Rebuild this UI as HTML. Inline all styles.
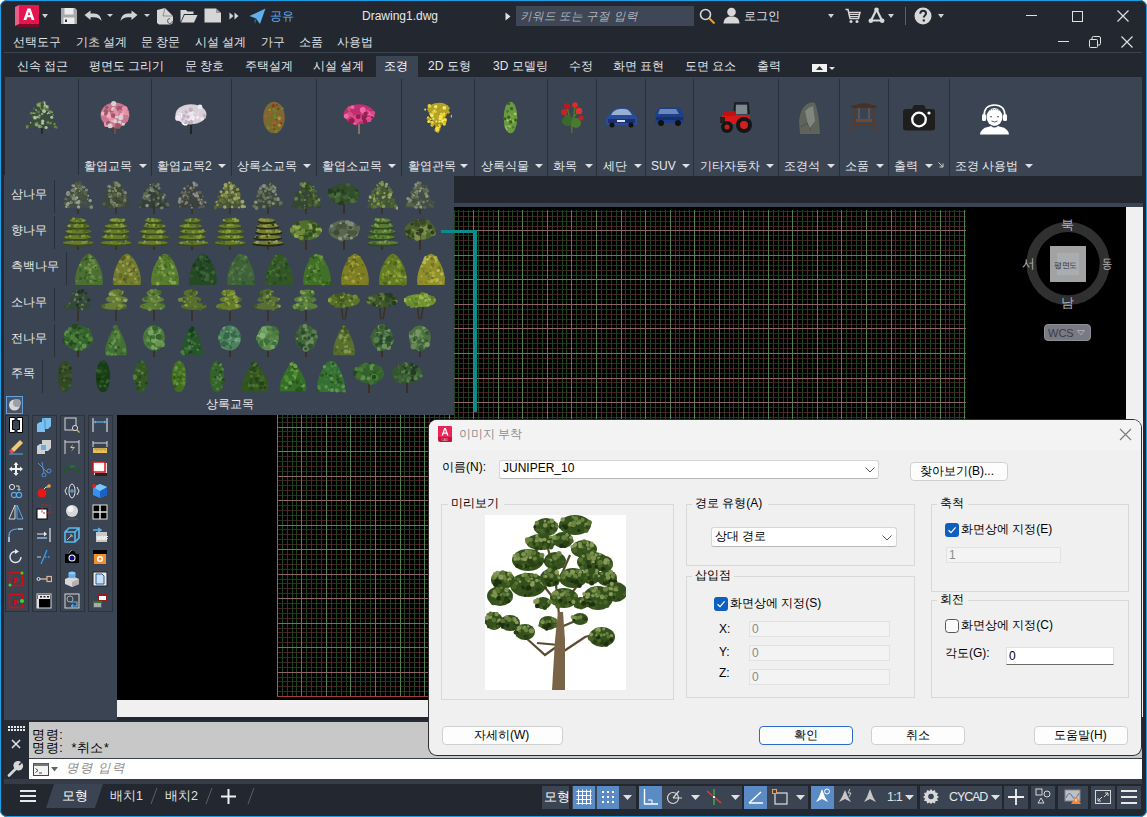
<!DOCTYPE html>
<html><head><meta charset="utf-8">
<style>
*{box-sizing:border-box;margin:0;padding:0}
html,body{width:1147px;height:817px;overflow:hidden;background:#fff}
body{font-family:"Liberation Sans",sans-serif;font-size:12px;position:relative}
.a{position:absolute}
#win{position:absolute;left:0;top:0;width:1147px;height:817px;border-radius:7px;background:#222730;overflow:hidden}
#frame{position:absolute;left:0;top:0;width:1147px;height:817px;border:1px solid #1b9ee6;border-radius:7px;pointer-events:none}
.t{position:absolute;white-space:nowrap;color:#e4e6ea;line-height:14px}
.menu .t{color:#e0e2e6}
.sep{position:absolute;width:1px;background:#2a303b}
.arr{position:absolute;width:0;height:0;border-left:4px solid transparent;border-right:4px solid transparent;border-top:4px solid #dfe1e5}
.dlg .t{color:#000}
.grp{position:absolute;border:1px solid #d8d8d8}
.fld{position:absolute;background:#f3f3f3;border:1px solid #e2e2e2}
.btn{position:absolute;background:#fdfdfd;border:1px solid #d0d0d0;border-radius:4px;text-align:center;color:#000;line-height:16px}
.cb{position:absolute;width:13px;height:13px;border-radius:3px}
.sb{position:absolute;top:786px;height:23px;background:#3b4453}
.sbon{background:#5a8bc5}
</style></head><body>
<div id="win">
<!-- ===== TITLE BAR ===== -->
<div id="title">
<svg class="a" style="left:13px;top:3px" width="28" height="26" viewBox="0 0 28 26">
<polygon points="4,24 26,24 26,20 6,20" fill="#7a0c2a"/>
<rect x="6" y="2" width="20" height="19" fill="#e31650"/>
<polygon points="2,4 6,2 6,21 2,23" fill="#ec5e88"/>
<path d="M10.5 17 L14.5 5.5 L17.5 5.5 L21.5 17 L18.6 17 L17.8 14.3 L14.2 14.3 L13.4 17 Z M14.9 12 L17.1 12 L16 8.2 Z" fill="#fff"/>
</svg>
<div class="arr" style="left:42px;top:14px;border-width:4px 3.5px 0 3.5px;border-top-color:#cfd1d5"></div>
<svg class="a" style="left:60px;top:7px" width="18" height="18" viewBox="0 0 18 18">
<path d="M1 1 H15 L17 3 V17 H1 Z" fill="#a8a8a8"/>
<rect x="4.5" y="1" width="9" height="6.5" fill="#ececec"/>
<rect x="3.5" y="10.5" width="11" height="6.5" fill="#ececec"/>
<rect x="5" y="12.5" width="2" height="2.5" fill="#333"/>
</svg>
<svg class="a" style="left:84px;top:10px" width="18" height="12" viewBox="0 0 18 12">
<path d="M0.5 5 L6.5 0.5 V3.5 H10 C14.5 3.5 17 6.5 17.5 11 C15.5 8.5 13.5 7.3 10 7.3 H6.5 V10 Z" fill="#d2d2d2"/>
</svg>
<div class="arr" style="left:107px;top:14px;border-width:3px 3px 0 3px;border-top-color:#cfd1d5"></div>
<svg class="a" style="left:120px;top:10px" width="18" height="12" viewBox="0 0 18 12">
<path d="M17.5 5 L11.5 0.5 V3.5 H8 C3.5 3.5 1 6.5 0.5 11 C2.5 8.5 4.5 7.3 8 7.3 H11.5 V10 Z" fill="#d2d2d2"/>
</svg>
<div class="arr" style="left:144px;top:14px;border-width:3px 3px 0 3px;border-top-color:#cfd1d5"></div>
<svg class="a" style="left:156px;top:7px" width="18" height="18" viewBox="0 0 18 18">
<path d="M1 3 L9 1 L17 9 V14 Q17 17.5 13.5 17.5 H3 L1 16 Z" fill="#d6d6d6"/>
<path d="M9 1 L7 9 L17 9" stroke="#222730" stroke-width="0.8" fill="none" opacity="0.5"/>
<path d="M14 11.5 A2.5 2.5 0 1 0 16.5 14" stroke="#555" stroke-width="0.9" fill="none"/>
</svg>
<svg class="a" style="left:180px;top:9px" width="18" height="14" viewBox="0 0 18 14">
<path d="M0.5 1 H6 L7.5 2.5 H13.5 V5 H4 L0.5 13 Z" fill="#d6d6d6"/>
<path d="M4.5 6 H17.5 L14 13.5 H1 Z" fill="#d6d6d6"/>
</svg>
<svg class="a" style="left:204px;top:8px" width="18" height="15" viewBox="0 0 18 15">
<path d="M0.5 0.5 H12 L17 5 V14.5 H0.5 Z" fill="#d6d6d6"/>
<path d="M12 0.5 V5 H17" fill="#9a9a9a"/>
</svg>
<svg class="a" style="left:229px;top:12px" width="10" height="8" viewBox="0 0 10 8">
<path d="M0.5 0.5 L4.5 4 L0.5 7.5 Z M5.5 0.5 L9.5 4 L5.5 7.5 Z" fill="#d6d6d6"/>
</svg>
<svg class="a" style="left:249px;top:8px" width="17" height="17" viewBox="0 0 17 17">
<path d="M0.5 8 L16.5 0.5 L11 16 L7 10.5 Z" fill="#5fb0ec"/>
<path d="M7 10.5 L16.5 0.5 L5.5 12.5 L6 16 Z" fill="#3b8cd0"/>
</svg>
<span class="t" style="left:270px;top:9px;color:#62aeea;font-size:12px">공유</span>
<span class="t" style="left:362px;top:9px;color:#e8e8e8">Drawing1.dwg</span>
<svg class="a" style="left:505px;top:12px" width="6" height="9" viewBox="0 0 6 9"><path d="M0.5 0.5 L5.5 4.5 L0.5 8.5Z" fill="#e0e0e0"/></svg>
<div class="a" style="left:516px;top:6px;width:178px;height:20px;background:#3f4756"></div>
<span class="t" style="left:520px;top:9px;color:#aeb3bb;font-style:italic;font-size:11.5px">키워드 또는 구절 입력</span>
<svg class="a" style="left:699px;top:8px" width="17" height="17" viewBox="0 0 17 17">
<circle cx="6.5" cy="6.5" r="5" stroke="#d8d8d8" stroke-width="1.6" fill="none"/>
<path d="M10.2 10.2 L15.5 15.5" stroke="#e0a040" stroke-width="2"/>
</svg>
<svg class="a" style="left:723px;top:7px" width="17" height="17" viewBox="0 0 17 17">
<circle cx="8.5" cy="5" r="4.3" fill="#d8d8d8"/>
<path d="M0.5 16.5 C1 11 4 9.5 8.5 9.5 C13 9.5 16 11 16.5 16.5 Z" fill="#d8d8d8"/>
</svg>
<span class="t" style="left:744px;top:9px;color:#e8e8e8">로그인</span>
<div class="arr" style="left:828px;top:14px;border-width:4px 3px 0 3px;border-top-color:#cfd1d5"></div>
<svg class="a" style="left:845px;top:8px" width="16" height="16" viewBox="0 0 16 16">
<path d="M0.5 1.5 H3 L5 10.5 H13.5 L15 4.5 H4" stroke="#d8d8d8" stroke-width="1.5" fill="none"/>
<path d="M4 6.5 H14.5 M4.5 8.5 H14" stroke="#d8d8d8" stroke-width="1"/>
<circle cx="6" cy="13.5" r="1.5" fill="#d8d8d8"/><circle cx="12" cy="13.5" r="1.5" fill="#d8d8d8"/>
</svg>
<svg class="a" style="left:868px;top:7px" width="17" height="17" viewBox="0 0 17 17">
<path d="M8.5 2.5 L3 13.5 H14 Z" stroke="#d8d8d8" stroke-width="2.2" fill="none" stroke-linejoin="round"/>
<circle cx="8.5" cy="2.8" r="2.3" fill="#d8d8d8"/><circle cx="2.8" cy="13.8" r="2.3" fill="#d8d8d8"/><circle cx="14.2" cy="13.8" r="2.3" fill="#d8d8d8"/>
</svg>
<div class="arr" style="left:888px;top:14px;border-width:4px 3px 0 3px;border-top-color:#cfd1d5"></div>
<div class="a" style="left:905px;top:7px;width:1px;height:18px;background:#5a616d"></div>
<svg class="a" style="left:914px;top:7px" width="18" height="18" viewBox="0 0 18 18">
<circle cx="9" cy="9" r="8.5" fill="#d8d8d8"/>
<path d="M6.3 6.8 C6.3 4.8 7.5 3.8 9.1 3.8 C10.8 3.8 12 4.9 12 6.4 C12 8.3 9.8 8.5 9.8 10.5" stroke="#222730" stroke-width="2" fill="none"/>
<circle cx="9.8" cy="13.4" r="1.2" fill="#222730"/>
</svg>
<div class="arr" style="left:938px;top:14px;border-width:4px 3px 0 3px;border-top-color:#cfd1d5"></div>
<div class="a" style="left:1026px;top:15px;width:11px;height:1px;background:#e0e0e0"></div>
<div class="a" style="left:1072px;top:11px;width:11px;height:11px;border:1px solid #e0e0e0"></div>
<svg class="a" style="left:1117px;top:10px" width="12" height="12" viewBox="0 0 12 12"><path d="M0.5 0.5 L11.5 11.5 M11.5 0.5 L0.5 11.5" stroke="#e0e0e0" stroke-width="1.2"/></svg>
<div class="a" style="left:1058px;top:41px;width:11px;height:1px;background:#e0e0e0"></div>
<svg class="a" style="left:1089px;top:36px" width="12" height="12" viewBox="0 0 12 12"><rect x="0.5" y="3.5" width="8" height="8" rx="1" stroke="#e0e0e0" fill="none"/><path d="M3 3.5 V2 Q3 0.5 4.5 0.5 H10 Q11.5 0.5 11.5 2 V7.5 Q11.5 9 10 9 H8.5" stroke="#e0e0e0" fill="none"/></svg>
<svg class="a" style="left:1121px;top:36px" width="12" height="12" viewBox="0 0 12 12"><path d="M0.5 0.5 L11.5 11.5 M11.5 0.5 L0.5 11.5" stroke="#e0e0e0" stroke-width="1.2"/></svg>
</div>
<!-- ===== MENU ===== -->
<div class="menu">
<span class="t" style="left:13px;top:35px">선택도구</span>
<span class="t" style="left:76px;top:35px">기초 설계</span>
<span class="t" style="left:141px;top:35px">문 창문</span>
<span class="t" style="left:195px;top:35px">시설 설계</span>
<span class="t" style="left:261px;top:35px">가구</span>
<span class="t" style="left:299px;top:35px">소품</span>
<span class="t" style="left:337px;top:35px">사용법</span>
</div>
<div class="a" style="left:4px;top:52px;width:1138px;height:1px;background:#3c4350"></div>
<!-- ===== TABS ===== -->
<div class="a" style="left:376px;top:56px;width:42px;height:21px;background:#3b4453"></div>
<span class="t" style="left:17px;top:59px">신속 접근</span>
<span class="t" style="left:89px;top:59px">평면도 그리기</span>
<span class="t" style="left:185px;top:59px">문 창호</span>
<span class="t" style="left:245px;top:59px">주택설계</span>
<span class="t" style="left:313px;top:59px">시설 설계</span>
<span class="t" style="left:384px;top:59px;color:#fff">조경</span>
<span class="t" style="left:428px;top:59px">2D 도형</span>
<span class="t" style="left:493px;top:59px">3D 모델링</span>
<span class="t" style="left:569px;top:59px">수정</span>
<span class="t" style="left:613px;top:59px">화면 표현</span>
<span class="t" style="left:685px;top:59px">도면 요소</span>
<span class="t" style="left:757px;top:59px">출력</span>
<div class="a" style="left:812px;top:64px;width:15px;height:8px;background:#f2f2f2"></div><svg class="a" style="left:816px;top:66px" width="7" height="4" viewBox="0 0 7 4"><path d="M0 4 L3.5 0 L7 4 Z" fill="#333"/></svg>
<div class="arr" style="left:829px;top:67px;border-width:3px 3px 0 3px"></div>
<!-- ===== RIBBON PANEL ===== -->
<div class="a" style="left:5px;top:77px;width:1137px;height:99px;background:#3b4453"></div>
<div id="ribbon"><div class="sep" style="left:78px;top:79px;height:97px"></div><div class="sep" style="left:151px;top:79px;height:97px"></div><div class="sep" style="left:231px;top:79px;height:97px"></div><div class="sep" style="left:316px;top:79px;height:97px"></div><div class="sep" style="left:401px;top:79px;height:97px"></div><div class="sep" style="left:474px;top:79px;height:97px"></div><div class="sep" style="left:547px;top:79px;height:97px"></div><div class="sep" style="left:596px;top:79px;height:97px"></div><div class="sep" style="left:645px;top:79px;height:97px"></div><div class="sep" style="left:693px;top:79px;height:97px"></div><div class="sep" style="left:778px;top:79px;height:97px"></div><div class="sep" style="left:839px;top:79px;height:97px"></div><div class="sep" style="left:888px;top:79px;height:97px"></div><div class="sep" style="left:949px;top:79px;height:97px"></div><span class="t" style="left:84px;top:159px;color:#e6e8ec">활엽교목</span><div class="arr" style="left:139px;top:164px"></div><span class="t" style="left:157px;top:159px;color:#e6e8ec">활엽교목2</span><div class="arr" style="left:218px;top:164px"></div><span class="t" style="left:237px;top:159px;color:#e6e8ec">상록소교목</span><div class="arr" style="left:303px;top:164px"></div><span class="t" style="left:322px;top:159px;color:#e6e8ec">활엽소교목</span><div class="arr" style="left:388px;top:164px"></div><span class="t" style="left:408px;top:159px;color:#e6e8ec">활엽관목</span><div class="arr" style="left:460px;top:164px"></div><span class="t" style="left:481px;top:159px;color:#e6e8ec">상록식물</span><div class="arr" style="left:535px;top:164px"></div><span class="t" style="left:553px;top:159px;color:#e6e8ec">화목</span><div class="arr" style="left:585px;top:164px"></div><span class="t" style="left:603px;top:159px;color:#e6e8ec">세단</span><div class="arr" style="left:634px;top:164px"></div><span class="t" style="left:651px;top:159px;color:#e6e8ec">SUV</span><div class="arr" style="left:682px;top:164px"></div><span class="t" style="left:700px;top:159px;color:#e6e8ec">기타자동차</span><div class="arr" style="left:766px;top:164px"></div><span class="t" style="left:784px;top:159px;color:#e6e8ec">조경석</span><div class="arr" style="left:827px;top:164px"></div><span class="t" style="left:845px;top:159px;color:#e6e8ec">소품</span><div class="arr" style="left:876px;top:164px"></div><span class="t" style="left:894px;top:159px;color:#e6e8ec">출력</span><div class="arr" style="left:925px;top:164px"></div><span class="t" style="left:955px;top:159px;color:#e6e8ec">조경 사용법</span><div class="arr" style="left:1025px;top:164px"></div><svg class="a" style="left:938px;top:162px" width="6" height="6" viewBox="0 0 6 6"><path d="M0.5 0.5 L5 5 M5 1.5 V5 H1.5" stroke="#d0d0d0" stroke-width="1" fill="none"/></svg><svg class="a" style="left:26px;top:101px" width="32" height="33" viewBox="0 0 32 33"><rect x="15.2" y="23.1" width="1.6" height="9.9" fill="#222"/><path d="M16.0 0.7 C19.2 6.6 30.4 19.8 31.0 27.1 L1.0 27.1 C1.6 19.8 12.8 6.6 16.0 0.7 Z" fill="#3a5030" opacity="0.55"/><circle cx="20.6" cy="5.1" r="1.7" fill="#3a5030"/><circle cx="19.2" cy="4.6" r="1.4" fill="#b0c0a0"/><circle cx="4.6" cy="21.7" r="0.8" fill="#b0c0a0"/><circle cx="21.6" cy="12.6" r="0.8" fill="#b0c0a0"/><circle cx="21.3" cy="8.4" r="1.5" fill="#5a7a48"/><circle cx="2.0" cy="24.6" r="0.8" fill="#6a8a50"/><circle cx="18.0" cy="1.9" r="1.6" fill="#b0c0a0"/><circle cx="16.7" cy="20.1" r="1.7" fill="#b0c0a0"/><circle cx="12.3" cy="15.7" r="1.6" fill="#b0c0a0"/><circle cx="29.1" cy="25.8" r="1.3" fill="#6a8a50"/><circle cx="3.9" cy="25.1" r="1.6" fill="#3a5030"/><circle cx="13.9" cy="4.7" r="1.7" fill="#6a8a50"/><circle cx="13.6" cy="25.4" r="1.8" fill="#8aa070"/><circle cx="17.6" cy="9.4" r="1.9" fill="#6a8a50"/><circle cx="23.3" cy="11.6" r="1.4" fill="#b0c0a0"/><circle cx="9.1" cy="12.2" r="1.5" fill="#3a5030"/><circle cx="17.8" cy="3.8" r="0.9" fill="#8aa070"/><circle cx="13.5" cy="14.9" r="1.4" fill="#5a7a48"/><circle cx="11.7" cy="13.6" r="1.8" fill="#6a8a50"/><circle cx="13.4" cy="16.7" r="1.0" fill="#6a8a50"/><circle cx="8.1" cy="7.4" r="1.0" fill="#6a8a50"/><circle cx="16.2" cy="7.5" r="1.9" fill="#6a8a50"/><circle cx="24.1" cy="10.6" r="1.6" fill="#6a8a50"/><circle cx="0.8" cy="26.0" r="1.7" fill="#6a8a50"/><circle cx="16.5" cy="22.2" r="1.5" fill="#b0c0a0"/><circle cx="15.4" cy="25.8" r="1.2" fill="#6a8a50"/><circle cx="16.1" cy="6.7" r="1.4" fill="#3a5030"/><circle cx="5.5" cy="12.2" r="1.4" fill="#6a8a50"/><circle cx="17.9" cy="10.1" r="1.8" fill="#8aa070"/><circle cx="8.4" cy="15.6" r="0.9" fill="#6a8a50"/><circle cx="24.9" cy="21.9" r="1.1" fill="#5a7a48"/><circle cx="10.7" cy="3.8" r="0.8" fill="#3a5030"/><circle cx="9.4" cy="8.0" r="1.5" fill="#3a5030"/><circle cx="10.0" cy="9.0" r="1.1" fill="#8aa070"/><circle cx="19.8" cy="18.3" r="1.2" fill="#3a5030"/><circle cx="7.2" cy="14.3" r="1.2" fill="#3a5030"/><circle cx="9.4" cy="12.3" r="0.9" fill="#6a8a50"/><circle cx="30.4" cy="26.5" r="1.3" fill="#5a7a48"/><circle cx="14.3" cy="7.4" r="0.8" fill="#8aa070"/><circle cx="16.1" cy="13.0" r="1.3" fill="#8aa070"/><circle cx="20.1" cy="26.5" r="1.6" fill="#b0c0a0"/><circle cx="18.4" cy="7.3" r="1.3" fill="#6a8a50"/><circle cx="20.5" cy="22.1" r="1.3" fill="#3a5030"/><circle cx="12.3" cy="4.8" r="0.9" fill="#5a7a48"/><circle cx="10.5" cy="23.5" r="1.9" fill="#8aa070"/><circle cx="10.8" cy="12.2" r="0.8" fill="#5a7a48"/><circle cx="9.0" cy="16.7" r="1.9" fill="#b0c0a0"/><circle cx="21.3" cy="6.0" r="2.0" fill="#6a8a50"/><circle cx="13.2" cy="14.6" r="1.2" fill="#8aa070"/><circle cx="25.7" cy="16.2" r="1.5" fill="#b0c0a0"/><circle cx="18.0" cy="4.3" r="1.2" fill="#b0c0a0"/><circle cx="16.7" cy="2.1" r="1.3" fill="#3a5030"/><circle cx="14.1" cy="2.1" r="1.2" fill="#6a8a50"/><circle cx="11.5" cy="21.5" r="1.1" fill="#5a7a48"/><circle cx="28.5" cy="22.9" r="1.2" fill="#6a8a50"/><circle cx="27.0" cy="14.0" r="1.1" fill="#5a7a48"/><circle cx="12.4" cy="3.8" r="1.9" fill="#8aa070"/><circle cx="13.1" cy="8.5" r="1.4" fill="#3a5030"/><circle cx="12.8" cy="11.0" r="1.1" fill="#6a8a50"/><circle cx="22.0" cy="21.5" r="1.4" fill="#6a8a50"/><circle cx="6.5" cy="15.7" r="0.8" fill="#5a7a48"/><circle cx="26.0" cy="11.3" r="1.0" fill="#8aa070"/><circle cx="18.2" cy="10.3" r="1.7" fill="#b0c0a0"/><circle cx="16.5" cy="3.6" r="1.5" fill="#3a5030"/><circle cx="11.9" cy="10.9" r="1.4" fill="#5a7a48"/><circle cx="11.1" cy="13.3" r="1.7" fill="#3a5030"/><circle cx="17.0" cy="2.0" r="0.9" fill="#5a7a48"/><circle cx="24.3" cy="22.6" r="1.0" fill="#6a8a50"/><circle cx="7.8" cy="12.3" r="1.0" fill="#8aa070"/><circle cx="20.8" cy="5.7" r="1.3" fill="#b0c0a0"/></svg><svg class="a" style="left:99px;top:101px" width="32" height="33" viewBox="0 0 32 33"><rect x="15.0" y="19.8" width="2" height="13.2" fill="#6a5040"/><ellipse cx="16.0" cy="13.9" rx="14.4" ry="12.5" fill="#c87890"/><circle cx="28.8" cy="10.7" r="1.3" fill="#c87890"/><circle cx="12.4" cy="17.6" r="2.7" fill="#f0b0c0"/><circle cx="15.9" cy="19.3" r="1.3" fill="#e890a8"/><circle cx="26.9" cy="13.8" r="2.6" fill="#d8d0d0"/><circle cx="25.6" cy="11.1" r="2.0" fill="#f0b0c0"/><circle cx="26.4" cy="7.4" r="1.9" fill="#f0b0c0"/><circle cx="23.4" cy="9.6" r="2.8" fill="#e890a8"/><circle cx="9.8" cy="11.7" r="1.2" fill="#f0b0c0"/><circle cx="20.5" cy="21.4" r="1.8" fill="#d8d0d0"/><circle cx="13.3" cy="9.3" r="2.8" fill="#a05868"/><circle cx="14.7" cy="2.6" r="2.6" fill="#d8d0d0"/><circle cx="7.8" cy="23.2" r="2.9" fill="#e890a8"/><circle cx="24.3" cy="11.8" r="2.5" fill="#d8d0d0"/><circle cx="16.0" cy="20.2" r="2.1" fill="#d8d0d0"/><circle cx="20.0" cy="7.7" r="2.8" fill="#a05868"/><circle cx="9.1" cy="22.0" r="2.2" fill="#a05868"/><circle cx="9.6" cy="14.3" r="1.8" fill="#e890a8"/><circle cx="23.7" cy="7.3" r="2.6" fill="#a05868"/><circle cx="11.1" cy="24.7" r="2.5" fill="#d8d0d0"/><circle cx="7.0" cy="10.6" r="2.3" fill="#a05868"/><circle cx="13.6" cy="18.9" r="2.1" fill="#d8d0d0"/><circle cx="24.9" cy="6.7" r="1.8" fill="#c87890"/><circle cx="21.0" cy="11.0" r="2.5" fill="#c87890"/><circle cx="13.3" cy="12.7" r="2.3" fill="#c87890"/><circle cx="16.1" cy="9.5" r="1.7" fill="#e890a8"/><circle cx="19.2" cy="12.8" r="2.8" fill="#c87890"/><circle cx="23.7" cy="16.4" r="1.6" fill="#c87890"/><circle cx="27.6" cy="19.7" r="1.2" fill="#c87890"/><circle cx="12.6" cy="16.9" r="2.9" fill="#e890a8"/><circle cx="15.4" cy="13.8" r="2.3" fill="#e890a8"/><circle cx="17.5" cy="15.7" r="1.8" fill="#d8d0d0"/><circle cx="7.8" cy="6.5" r="1.7" fill="#a05868"/><circle cx="25.0" cy="15.4" r="2.6" fill="#c87890"/><circle cx="25.7" cy="7.9" r="2.8" fill="#e890a8"/><circle cx="9.6" cy="14.8" r="2.4" fill="#f0b0c0"/><circle cx="17.1" cy="12.3" r="2.6" fill="#e890a8"/><circle cx="4.0" cy="12.7" r="2.1" fill="#f0b0c0"/><circle cx="24.3" cy="23.0" r="1.7" fill="#d8d0d0"/><circle cx="26.9" cy="12.1" r="2.5" fill="#e890a8"/><circle cx="12.7" cy="8.6" r="1.4" fill="#e890a8"/><circle cx="25.0" cy="19.2" r="2.1" fill="#c87890"/><circle cx="22.6" cy="13.7" r="2.0" fill="#f0b0c0"/><circle cx="21.7" cy="16.6" r="2.6" fill="#d8d0d0"/><circle cx="14.3" cy="8.0" r="2.0" fill="#d8d0d0"/><circle cx="16.0" cy="9.2" r="1.9" fill="#e890a8"/><circle cx="24.9" cy="20.4" r="1.6" fill="#c87890"/><circle cx="27.8" cy="15.1" r="1.4" fill="#c87890"/><circle cx="6.8" cy="12.8" r="1.8" fill="#a05868"/><circle cx="19.0" cy="24.9" r="2.9" fill="#a05868"/><circle cx="14.2" cy="14.6" r="2.3" fill="#a05868"/></svg><svg class="a" style="left:175px;top:101px" width="32" height="33" viewBox="0 0 32 33"><rect x="15.0" y="18.2" width="2" height="14.8" fill="#222"/><ellipse cx="16.0" cy="13.2" rx="15.4" ry="9.9" fill="#d8d0d8"/><circle cx="16.8" cy="20.1" r="1.9" fill="#e0d0e0"/><circle cx="5.0" cy="14.4" r="2.3" fill="#ffffff"/><circle cx="15.6" cy="17.7" r="3.0" fill="#ffffff"/><circle cx="5.5" cy="11.4" r="1.9" fill="#f0e8f0"/><circle cx="16.6" cy="16.8" r="2.9" fill="#ffffff"/><circle cx="15.3" cy="5.5" r="1.3" fill="#e0d0e0"/><circle cx="28.4" cy="15.4" r="2.7" fill="#c0b0c0"/><circle cx="3.8" cy="14.6" r="2.8" fill="#ffffff"/><circle cx="5.7" cy="18.4" r="2.0" fill="#f0e8f0"/><circle cx="19.3" cy="11.2" r="1.4" fill="#f0e8f0"/><circle cx="15.4" cy="20.9" r="2.6" fill="#c0b0c0"/><circle cx="4.3" cy="17.3" r="2.2" fill="#e0d0e0"/><circle cx="6.4" cy="9.5" r="2.8" fill="#d8d0d8"/><circle cx="25.0" cy="5.9" r="2.4" fill="#f0e8f0"/><circle cx="13.4" cy="8.1" r="2.2" fill="#e0d0e0"/><circle cx="4.8" cy="9.9" r="1.6" fill="#e0d0e0"/><circle cx="15.4" cy="16.5" r="2.1" fill="#ffffff"/><circle cx="27.1" cy="17.6" r="1.9" fill="#f0e8f0"/><circle cx="25.5" cy="14.0" r="1.9" fill="#d8d0d8"/><circle cx="27.0" cy="15.2" r="1.3" fill="#e0d0e0"/><circle cx="9.3" cy="20.9" r="3.0" fill="#e0d0e0"/><circle cx="16.2" cy="15.0" r="1.2" fill="#d8d0d8"/><circle cx="13.9" cy="12.2" r="1.6" fill="#ffffff"/><circle cx="14.1" cy="17.9" r="2.4" fill="#c0b0c0"/><circle cx="10.4" cy="21.7" r="2.8" fill="#ffffff"/><circle cx="6.3" cy="19.3" r="1.9" fill="#e0d0e0"/><circle cx="14.0" cy="10.5" r="3.0" fill="#e0d0e0"/><circle cx="14.4" cy="20.6" r="2.5" fill="#c0b0c0"/><circle cx="9.2" cy="15.0" r="1.7" fill="#c0b0c0"/><circle cx="25.4" cy="13.6" r="2.2" fill="#d8d0d8"/><circle cx="8.0" cy="18.3" r="1.4" fill="#c0b0c0"/><circle cx="4.2" cy="14.8" r="1.8" fill="#c0b0c0"/><circle cx="15.8" cy="11.8" r="1.3" fill="#d8d0d8"/><circle cx="23.1" cy="12.1" r="2.0" fill="#e0d0e0"/><circle cx="11.1" cy="10.8" r="1.5" fill="#c0b0c0"/><circle cx="20.2" cy="9.2" r="2.6" fill="#d8d0d8"/><circle cx="16.3" cy="11.7" r="2.2" fill="#f0e8f0"/><circle cx="13.5" cy="17.3" r="2.6" fill="#f0e8f0"/><circle cx="10.4" cy="20.0" r="2.4" fill="#d8d0d8"/><circle cx="22.6" cy="16.4" r="1.8" fill="#f0e8f0"/><circle cx="3.5" cy="16.5" r="1.5" fill="#c0b0c0"/><circle cx="15.7" cy="8.8" r="2.2" fill="#c0b0c0"/><circle cx="16.8" cy="16.4" r="2.2" fill="#f0e8f0"/><circle cx="10.7" cy="21.1" r="2.2" fill="#c0b0c0"/><circle cx="8.9" cy="20.4" r="1.4" fill="#e0d0e0"/><circle cx="13.0" cy="16.0" r="1.7" fill="#c0b0c0"/><circle cx="4.7" cy="14.8" r="1.7" fill="#e0d0e0"/><circle cx="4.2" cy="18.1" r="1.5" fill="#d8d0d8"/><circle cx="2.8" cy="14.4" r="2.3" fill="#e0d0e0"/><circle cx="3.0" cy="16.9" r="2.9" fill="#f0e8f0"/></svg><svg class="a" style="left:262px;top:101px" width="24" height="33" viewBox="0 0 24 33"><ellipse cx="12.0" cy="16.5" rx="10.8" ry="15.8" fill="#7a6a30"/><circle cx="12.3" cy="21.3" r="1.2" fill="#b05a30"/><circle cx="13.2" cy="17.6" r="1.3" fill="#6a8a30"/><circle cx="14.8" cy="4.0" r="1.0" fill="#8a3a20"/><circle cx="6.2" cy="26.7" r="1.6" fill="#6a8a30"/><circle cx="14.2" cy="30.6" r="1.6" fill="#6a8a30"/><circle cx="13.4" cy="10.2" r="1.1" fill="#6a8a30"/><circle cx="18.8" cy="22.6" r="1.5" fill="#8a3a20"/><circle cx="12.0" cy="24.0" r="1.1" fill="#8a3a20"/><circle cx="12.5" cy="15.4" r="1.1" fill="#6a8a30"/><circle cx="16.2" cy="7.7" r="1.2" fill="#8a3a20"/><circle cx="10.4" cy="26.3" r="1.0" fill="#6a8a30"/><circle cx="12.8" cy="13.6" r="0.8" fill="#6a8a30"/><circle cx="3.8" cy="15.1" r="1.5" fill="#b05a30"/><circle cx="16.5" cy="16.4" r="1.2" fill="#b05a30"/><circle cx="7.5" cy="9.0" r="1.0" fill="#c08a40"/><circle cx="11.9" cy="8.0" r="1.4" fill="#6a8a30"/><circle cx="14.1" cy="18.7" r="1.0" fill="#8a3a20"/><circle cx="8.3" cy="11.6" r="1.1" fill="#b05a30"/><circle cx="11.6" cy="18.8" r="1.2" fill="#7a6a30"/><circle cx="20.0" cy="7.6" r="1.5" fill="#6a8a30"/><circle cx="17.5" cy="17.4" r="1.8" fill="#c08a40"/><circle cx="18.2" cy="5.8" r="1.5" fill="#7a6a30"/><circle cx="10.8" cy="22.8" r="1.2" fill="#b05a30"/><circle cx="12.0" cy="28.1" r="1.0" fill="#8a3a20"/><circle cx="14.2" cy="16.7" r="1.0" fill="#6a8a30"/><circle cx="19.8" cy="16.3" r="1.2" fill="#b05a30"/><circle cx="7.8" cy="19.7" r="0.9" fill="#7a6a30"/><circle cx="11.4" cy="4.9" r="1.8" fill="#8a3a20"/><circle cx="19.0" cy="19.2" r="1.0" fill="#7a6a30"/><circle cx="17.4" cy="24.1" r="1.6" fill="#c08a40"/></svg><svg class="a" style="left:343px;top:101px" width="32" height="33" viewBox="0 0 32 33"><rect x="15.0" y="18.2" width="2" height="14.8" fill="#8a7060"/><ellipse cx="16.0" cy="13.2" rx="15.4" ry="9.9" fill="#c03070"/><circle cx="7.0" cy="7.5" r="2.6" fill="#d05080"/><circle cx="25.8" cy="14.4" r="2.9" fill="#c03070"/><circle cx="20.0" cy="11.4" r="2.0" fill="#e04890"/><circle cx="12.6" cy="15.2" r="1.6" fill="#e04890"/><circle cx="10.8" cy="15.4" r="2.8" fill="#902050"/><circle cx="23.0" cy="20.3" r="1.4" fill="#d05080"/><circle cx="11.0" cy="14.4" r="3.0" fill="#c03070"/><circle cx="17.7" cy="17.4" r="3.0" fill="#e04890"/><circle cx="12.5" cy="22.1" r="2.2" fill="#e04890"/><circle cx="22.0" cy="21.6" r="1.6" fill="#902050"/><circle cx="13.4" cy="18.6" r="1.5" fill="#e04890"/><circle cx="15.3" cy="18.6" r="2.7" fill="#d05080"/><circle cx="28.0" cy="13.4" r="1.8" fill="#f068a8"/><circle cx="11.0" cy="17.3" r="2.5" fill="#e04890"/><circle cx="3.8" cy="14.1" r="1.3" fill="#c03070"/><circle cx="24.3" cy="11.4" r="1.9" fill="#d05080"/><circle cx="18.1" cy="7.7" r="2.2" fill="#c03070"/><circle cx="4.3" cy="15.5" r="2.3" fill="#e04890"/><circle cx="21.3" cy="16.4" r="2.7" fill="#902050"/><circle cx="11.1" cy="17.8" r="2.1" fill="#902050"/><circle cx="25.8" cy="18.3" r="2.6" fill="#f068a8"/><circle cx="29.8" cy="15.3" r="1.4" fill="#f068a8"/><circle cx="7.2" cy="12.7" r="1.5" fill="#f068a8"/><circle cx="25.6" cy="10.0" r="1.8" fill="#f068a8"/><circle cx="11.5" cy="21.1" r="2.3" fill="#f068a8"/><circle cx="21.9" cy="13.1" r="1.3" fill="#d05080"/><circle cx="6.9" cy="11.9" r="1.6" fill="#d05080"/><circle cx="11.9" cy="17.1" r="2.4" fill="#e04890"/><circle cx="29.1" cy="16.3" r="1.3" fill="#902050"/><circle cx="12.6" cy="16.9" r="3.0" fill="#d05080"/><circle cx="27.0" cy="10.9" r="2.6" fill="#c03070"/><circle cx="20.4" cy="18.2" r="1.3" fill="#902050"/><circle cx="13.3" cy="19.3" r="3.0" fill="#e04890"/><circle cx="25.7" cy="12.2" r="2.1" fill="#f068a8"/><circle cx="8.2" cy="13.9" r="1.9" fill="#e04890"/><circle cx="26.1" cy="18.7" r="2.2" fill="#e04890"/><circle cx="8.8" cy="8.4" r="1.8" fill="#c03070"/><circle cx="5.5" cy="13.5" r="2.2" fill="#d05080"/><circle cx="7.7" cy="19.6" r="2.6" fill="#d05080"/><circle cx="9.5" cy="6.2" r="1.9" fill="#f068a8"/><circle cx="19.8" cy="9.0" r="3.0" fill="#f068a8"/><circle cx="24.2" cy="11.7" r="1.5" fill="#c03070"/><circle cx="3.3" cy="14.5" r="1.8" fill="#f068a8"/><circle cx="3.2" cy="15.2" r="2.4" fill="#f068a8"/><circle cx="9.2" cy="19.4" r="2.5" fill="#902050"/><circle cx="8.1" cy="20.2" r="2.8" fill="#902050"/><circle cx="30.1" cy="11.8" r="2.1" fill="#d05080"/><circle cx="22.5" cy="12.7" r="1.9" fill="#902050"/><circle cx="15.2" cy="15.8" r="2.4" fill="#902050"/><circle cx="22.1" cy="20.5" r="2.2" fill="#902050"/></svg><svg class="a" style="left:424px;top:101px" width="28" height="33" viewBox="0 0 28 33"><path d="M14 31 L3 8 Q8 1 14 2 Q21 1 26 7 Z" fill="#c8b020" opacity="0.85"/><circle cx="24.3" cy="11.3" r="1.4" fill="#c8a818"/><circle cx="13.5" cy="30.1" r="1.5" fill="#c8a818"/><circle cx="8.1" cy="24.3" r="1.4" fill="#f8e040"/><circle cx="11.4" cy="10.7" r="1.4" fill="#e8d030"/><circle cx="14.4" cy="25.6" r="1.8" fill="#c8a818"/><circle cx="17.1" cy="12.7" r="0.9" fill="#f0e870"/><circle cx="8.6" cy="23.3" r="1.8" fill="#c8a818"/><circle cx="6.9" cy="20.8" r="1.0" fill="#c8a818"/><circle cx="12.3" cy="28.9" r="1.9" fill="#c8a818"/><circle cx="20.5" cy="19.0" r="1.0" fill="#a89010"/><circle cx="19.3" cy="13.7" r="1.8" fill="#e8d030"/><circle cx="7.4" cy="14.5" r="1.3" fill="#c8a818"/><circle cx="4.5" cy="17.5" r="1.9" fill="#a89010"/><circle cx="14.9" cy="25.5" r="1.1" fill="#f8e040"/><circle cx="9.7" cy="21.3" r="1.5" fill="#a89010"/><circle cx="14.1" cy="30.7" r="0.8" fill="#c8a818"/><circle cx="18.0" cy="15.9" r="1.5" fill="#c8a818"/><circle cx="12.3" cy="20.6" r="1.0" fill="#f0e870"/><circle cx="13.8" cy="29.5" r="1.7" fill="#f0e870"/><circle cx="13.8" cy="28.3" r="1.8" fill="#e8d030"/><circle cx="20.3" cy="6.8" r="1.9" fill="#f0e870"/><circle cx="10.1" cy="9.4" r="0.9" fill="#f0e870"/><circle cx="18.0" cy="18.4" r="1.3" fill="#e8d030"/><circle cx="15.4" cy="25.8" r="1.3" fill="#f8e040"/><circle cx="14.0" cy="30.5" r="1.1" fill="#c8a818"/><circle cx="14.0" cy="25.7" r="1.2" fill="#a89010"/><circle cx="13.0" cy="23.9" r="1.9" fill="#a89010"/><circle cx="16.1" cy="17.6" r="1.6" fill="#f0e870"/><circle cx="13.3" cy="27.1" r="1.2" fill="#f0e870"/><circle cx="16.1" cy="22.2" r="2.0" fill="#a89010"/><circle cx="15.6" cy="20.6" r="1.2" fill="#f0e870"/><circle cx="23.2" cy="5.3" r="1.0" fill="#c8a818"/><circle cx="16.9" cy="15.6" r="2.0" fill="#f8e040"/><circle cx="14.3" cy="30.2" r="0.9" fill="#c8a818"/><circle cx="20.2" cy="23.0" r="1.8" fill="#e8d030"/><circle cx="1.2" cy="8.6" r="1.1" fill="#e8d030"/><circle cx="18.9" cy="20.2" r="1.8" fill="#f0e870"/><circle cx="13.2" cy="29.0" r="1.2" fill="#f8e040"/><circle cx="6.8" cy="13.3" r="1.2" fill="#e8d030"/><circle cx="4.0" cy="16.5" r="0.9" fill="#f0e870"/><circle cx="21.3" cy="20.3" r="1.6" fill="#a89010"/><circle cx="15.7" cy="27.9" r="0.9" fill="#a89010"/><circle cx="7.9" cy="14.4" r="1.8" fill="#f0e870"/><circle cx="4.8" cy="20.5" r="1.6" fill="#f8e040"/><circle cx="11.7" cy="5.7" r="1.7" fill="#f0e870"/><circle cx="13.5" cy="15.4" r="1.5" fill="#c8a818"/><circle cx="5.4" cy="5.0" r="1.9" fill="#e8d030"/><circle cx="9.4" cy="17.7" r="1.1" fill="#f0e870"/><circle cx="21.1" cy="21.3" r="0.8" fill="#e8d030"/><circle cx="15.1" cy="24.1" r="1.1" fill="#e8d030"/><circle cx="9.0" cy="10.9" r="0.8" fill="#f8e040"/><circle cx="9.4" cy="11.9" r="0.9" fill="#e8d030"/><circle cx="8.2" cy="21.4" r="1.7" fill="#e8d030"/><circle cx="13.2" cy="27.5" r="2.0" fill="#f8e040"/><circle cx="6.6" cy="18.3" r="1.1" fill="#f8e040"/><circle cx="21.1" cy="18.7" r="1.8" fill="#f8e040"/><circle cx="20.2" cy="12.5" r="1.0" fill="#f8e040"/><circle cx="28.3" cy="15.3" r="1.5" fill="#e8d030"/><circle cx="16.3" cy="9.1" r="1.0" fill="#c8a818"/><circle cx="14.9" cy="7.1" r="0.8" fill="#a89010"/></svg><svg class="a" style="left:503px;top:101px" width="15" height="33" viewBox="0 0 15 33"><ellipse cx="7.5" cy="16.5" rx="6.8" ry="15.8" fill="#6a9a40"/><circle cx="8.4" cy="31.1" r="0.9" fill="#6a9a40"/><circle cx="10.2" cy="20.3" r="1.8" fill="#8ab858"/><circle cx="6.6" cy="18.0" r="1.3" fill="#a0c870"/><circle cx="4.7" cy="16.7" r="1.6" fill="#6a9a40"/><circle cx="1.9" cy="17.7" r="1.5" fill="#3a6020"/><circle cx="2.4" cy="24.3" r="1.2" fill="#6a9a40"/><circle cx="6.5" cy="12.5" r="1.6" fill="#a0c870"/><circle cx="4.6" cy="10.2" r="1.5" fill="#4a7a30"/><circle cx="7.7" cy="20.9" r="1.7" fill="#3a6020"/><circle cx="11.5" cy="9.8" r="0.9" fill="#6a9a40"/><circle cx="6.3" cy="15.8" r="1.5" fill="#8ab858"/><circle cx="12.1" cy="12.7" r="1.5" fill="#a0c870"/><circle cx="6.6" cy="25.3" r="1.7" fill="#8ab858"/><circle cx="10.2" cy="26.3" r="1.3" fill="#4a7a30"/><circle cx="5.6" cy="2.5" r="1.6" fill="#3a6020"/><circle cx="5.0" cy="10.6" r="1.2" fill="#4a7a30"/><circle cx="5.8" cy="16.3" r="1.7" fill="#3a6020"/><circle cx="11.5" cy="10.7" r="1.1" fill="#6a9a40"/><circle cx="6.6" cy="23.3" r="0.8" fill="#4a7a30"/><circle cx="3.3" cy="26.1" r="1.7" fill="#8ab858"/><circle cx="6.3" cy="12.2" r="1.7" fill="#6a9a40"/><circle cx="9.2" cy="29.1" r="1.1" fill="#6a9a40"/><circle cx="8.6" cy="7.6" r="1.6" fill="#3a6020"/><circle cx="4.7" cy="19.4" r="1.2" fill="#a0c870"/><circle cx="6.0" cy="18.8" r="0.9" fill="#6a9a40"/><circle cx="12.6" cy="19.1" r="1.6" fill="#3a6020"/><circle cx="3.8" cy="26.9" r="1.3" fill="#8ab858"/><circle cx="9.1" cy="16.0" r="0.8" fill="#8ab858"/><circle cx="4.7" cy="26.8" r="0.9" fill="#4a7a30"/><circle cx="3.8" cy="28.4" r="0.8" fill="#a0c870"/></svg><svg class="a" style="left:559px;top:101px" width="26" height="33" viewBox="0 0 26 33">
<path d="M13 32 L12 18 M12 20 L5 12 M13 18 L20 10 M12 22 L8 6 M14 22 L16 5" stroke="#4a7a30" stroke-width="1.4"/>
<ellipse cx="9" cy="20" rx="6" ry="5" fill="#3a6a28"/><ellipse cx="17" cy="22" rx="5" ry="5" fill="#4a7a30"/>
<circle cx="5" cy="11" r="3" fill="#d02020"/><circle cx="20" cy="10" r="3.2" fill="#e03030"/><circle cx="8" cy="5" r="3" fill="#c01818"/><circle cx="16" cy="4" r="2.8" fill="#e02828"/><circle cx="22" cy="17" r="2.5" fill="#c82020"/>
</svg><svg class="a" style="left:605px;top:106px" width="33" height="22" viewBox="0 0 33 22">
<path d="M2 11 L7 5 Q10 2 15 2 H20 Q24 2 27 6 L31 10 Q32.5 12 32 16 V19 H1 V14 Q1 12 2 11 Z" fill="#2a4a9a"/>
<path d="M8 6 Q11 3 15 3 H20 Q23 3 25 6 L27 9 H6 Z" fill="#9ab0d0"/>
<rect x="3" y="13" width="27" height="4" fill="#1a3070"/><rect x="12" y="14" width="8" height="2" fill="#e0e0e0"/>
<circle cx="7" cy="19" r="2.5" fill="#111"/><circle cx="26" cy="19" r="2.5" fill="#111"/>
</svg><svg class="a" style="left:653px;top:106px" width="33" height="21" viewBox="0 0 33 21">
<path d="M2 9 L5 3 Q6 1 9 1 H24 Q27 1 28 3 L31 9 V17 H2 Z" fill="#1f3f8a"/>
<path d="M7 3 H23 L26 8 H5 Z" fill="#6a88b8"/>
<rect x="3" y="11" width="27" height="3" fill="#15306a"/>
<circle cx="8" cy="17" r="3" fill="#111"/><circle cx="25" cy="17" r="3" fill="#111"/>
</svg><svg class="a" style="left:719px;top:101px" width="34" height="33" viewBox="0 0 34 33">
<path d="M15 13 L16 2 H29 L30 13" stroke="#1a1a1a" stroke-width="1.6" fill="none"/>
<rect x="17" y="4" width="11" height="9" fill="#a8b8b8" opacity="0.6"/>
<path d="M3 14 H31 V23 H3 Z" fill="#d81818"/><path d="M5 10 H16 V15 H5 Z" fill="#c01010"/><rect x="1" y="16" width="5" height="6" fill="#222"/>
<circle cx="25" cy="24" r="8" fill="#151515"/><circle cx="25" cy="24" r="4" fill="#d02020"/>
<circle cx="8" cy="26" r="6" fill="#151515"/><circle cx="8" cy="26" r="2.5" fill="#c02020"/>
</svg><svg class="a" style="left:797px;top:101px" width="24" height="34" viewBox="0 0 24 34">
<path d="M3 33 L2 20 Q3 8 10 3 Q15 0 18 2 Q22 12 23 33 Z" fill="#5e645a"/>
<path d="M8 10 Q12 6 16 5 L18 20 L12 28 Z" fill="#8a9088" opacity="0.8"/>
<path d="M4 26 L10 22 L14 30" stroke="#4a504a" stroke-width="1" fill="none"/>
</svg><svg class="a" style="left:850px;top:102px" width="28" height="30" viewBox="0 0 28 30">
<path d="M1 4 L14 1 L27 4 L26 6 H2 Z" fill="#4a3020"/>
<path d="M5 6 L3 29 M23 6 L25 29" stroke="#5a3a28" stroke-width="2"/>
<path d="M9 6 V18 M19 6 V18" stroke="#8a7060" stroke-width="0.8"/>
<rect x="6" y="17" width="16" height="3" fill="#6a4a38"/><rect x="6" y="21" width="16" height="2" fill="#5a3a28"/>
</svg><svg class="a" style="left:902px;top:104px" width="34" height="27" viewBox="0 0 34 27">
<path d="M1 8 Q1 5 4 5 H10 L12 1 H22 L24 5 H30 Q33 5 33 8 V24 Q33 26.5 30 26.5 H4 Q1 26.5 1 24 Z" fill="#1e1e1e"/>
<circle cx="17" cy="15.5" r="6.8" fill="none" stroke="#fff" stroke-width="2.3"/>
<circle cx="27" cy="9" r="1.6" fill="#fff"/>
</svg><svg class="a" style="left:979px;top:102px" width="31" height="33" viewBox="0 0 31 33">
<path d="M5 14 Q5 3 15.5 3 Q26 3 26 14" stroke="#fff" stroke-width="1.6" fill="none"/>
<rect x="3" y="12" width="4" height="7" rx="1.5" fill="#fff"/><rect x="24" y="12" width="4" height="7" rx="1.5" fill="#fff"/>
<ellipse cx="15.5" cy="15" rx="8" ry="9" fill="#fff"/>
<path d="M11 15 Q12 14 13 15 M18 15 Q19 14 20 15 M12.5 19 Q15.5 21 18.5 19" stroke="#3b4453" stroke-width="0.9" fill="none"/>
<path d="M9 9 Q15 6 22 9" stroke="#3b4453" stroke-width="0.8" fill="none" stroke-dasharray="1 1"/>
<path d="M1 32.5 Q2 26 9 25 L12 24 Q15.5 27 19 24 L22 25 Q29 26 30 32.5 Z" fill="#fff"/>
</svg></div>
<!-- ===== DRAWING AREA ===== -->
<div class="a" style="left:453px;top:203px;width:690px;height:4px;background:#3b4453"></div>
<div class="a" style="left:117px;top:207px;width:1009px;height:493px;background:#000"></div>
<div class="a" style="left:1126px;top:207px;width:17px;height:510px;background:#f0f0f0"></div>
<div class="a" style="left:117px;top:700px;width:1009px;height:17px;background:#f0f0f0"></div>
<div id="grid"><div class="a" style="left:277px;top:210px;width:689px;height:488px"><svg width="689" height="487" viewBox="0 0 689 487" shape-rendering="crispEdges" style="position:absolute;left:0;top:0"><rect x="0" y="481" width="689" height="1" fill="#4a2020"/><rect x="0" y="476" width="689" height="1" fill="#4a2020"/><rect x="0" y="471" width="689" height="1" fill="#4a2020"/><rect x="0" y="467" width="689" height="1" fill="#4a2020"/><rect x="0" y="457" width="689" height="1" fill="#4a2020"/><rect x="0" y="452" width="689" height="1" fill="#4a2020"/><rect x="0" y="447" width="689" height="1" fill="#4a2020"/><rect x="0" y="442" width="689" height="1" fill="#4a2020"/><rect x="0" y="432" width="689" height="1" fill="#4a2020"/><rect x="0" y="427" width="689" height="1" fill="#4a2020"/><rect x="0" y="422" width="689" height="1" fill="#4a2020"/><rect x="0" y="418" width="689" height="1" fill="#4a2020"/><rect x="0" y="408" width="689" height="1" fill="#4a2020"/><rect x="0" y="403" width="689" height="1" fill="#4a2020"/><rect x="0" y="398" width="689" height="1" fill="#4a2020"/><rect x="0" y="393" width="689" height="1" fill="#4a2020"/><rect x="0" y="383" width="689" height="1" fill="#4a2020"/><rect x="0" y="378" width="689" height="1" fill="#4a2020"/><rect x="0" y="373" width="689" height="1" fill="#4a2020"/><rect x="0" y="369" width="689" height="1" fill="#4a2020"/><rect x="0" y="359" width="689" height="1" fill="#4a2020"/><rect x="0" y="354" width="689" height="1" fill="#4a2020"/><rect x="0" y="349" width="689" height="1" fill="#4a2020"/><rect x="0" y="344" width="689" height="1" fill="#4a2020"/><rect x="0" y="334" width="689" height="1" fill="#4a2020"/><rect x="0" y="329" width="689" height="1" fill="#4a2020"/><rect x="0" y="324" width="689" height="1" fill="#4a2020"/><rect x="0" y="319" width="689" height="1" fill="#4a2020"/><rect x="0" y="310" width="689" height="1" fill="#4a2020"/><rect x="0" y="305" width="689" height="1" fill="#4a2020"/><rect x="0" y="300" width="689" height="1" fill="#4a2020"/><rect x="0" y="295" width="689" height="1" fill="#4a2020"/><rect x="0" y="285" width="689" height="1" fill="#4a2020"/><rect x="0" y="280" width="689" height="1" fill="#4a2020"/><rect x="0" y="275" width="689" height="1" fill="#4a2020"/><rect x="0" y="270" width="689" height="1" fill="#4a2020"/><rect x="0" y="261" width="689" height="1" fill="#4a2020"/><rect x="0" y="256" width="689" height="1" fill="#4a2020"/><rect x="0" y="251" width="689" height="1" fill="#4a2020"/><rect x="0" y="246" width="689" height="1" fill="#4a2020"/><rect x="0" y="236" width="689" height="1" fill="#4a2020"/><rect x="0" y="231" width="689" height="1" fill="#4a2020"/><rect x="0" y="226" width="689" height="1" fill="#4a2020"/><rect x="0" y="221" width="689" height="1" fill="#4a2020"/><rect x="0" y="212" width="689" height="1" fill="#4a2020"/><rect x="0" y="207" width="689" height="1" fill="#4a2020"/><rect x="0" y="202" width="689" height="1" fill="#4a2020"/><rect x="0" y="197" width="689" height="1" fill="#4a2020"/><rect x="0" y="187" width="689" height="1" fill="#4a2020"/><rect x="0" y="182" width="689" height="1" fill="#4a2020"/><rect x="0" y="177" width="689" height="1" fill="#4a2020"/><rect x="0" y="172" width="689" height="1" fill="#4a2020"/><rect x="0" y="163" width="689" height="1" fill="#4a2020"/><rect x="0" y="158" width="689" height="1" fill="#4a2020"/><rect x="0" y="153" width="689" height="1" fill="#4a2020"/><rect x="0" y="148" width="689" height="1" fill="#4a2020"/><rect x="0" y="138" width="689" height="1" fill="#4a2020"/><rect x="0" y="133" width="689" height="1" fill="#4a2020"/><rect x="0" y="128" width="689" height="1" fill="#4a2020"/><rect x="0" y="123" width="689" height="1" fill="#4a2020"/><rect x="0" y="114" width="689" height="1" fill="#4a2020"/><rect x="0" y="109" width="689" height="1" fill="#4a2020"/><rect x="0" y="104" width="689" height="1" fill="#4a2020"/><rect x="0" y="99" width="689" height="1" fill="#4a2020"/><rect x="0" y="89" width="689" height="1" fill="#4a2020"/><rect x="0" y="84" width="689" height="1" fill="#4a2020"/><rect x="0" y="79" width="689" height="1" fill="#4a2020"/><rect x="0" y="74" width="689" height="1" fill="#4a2020"/><rect x="0" y="65" width="689" height="1" fill="#4a2020"/><rect x="0" y="60" width="689" height="1" fill="#4a2020"/><rect x="0" y="55" width="689" height="1" fill="#4a2020"/><rect x="0" y="50" width="689" height="1" fill="#4a2020"/><rect x="0" y="40" width="689" height="1" fill="#4a2020"/><rect x="0" y="35" width="689" height="1" fill="#4a2020"/><rect x="0" y="30" width="689" height="1" fill="#4a2020"/><rect x="0" y="25" width="689" height="1" fill="#4a2020"/><rect x="0" y="16" width="689" height="1" fill="#4a2020"/><rect x="0" y="11" width="689" height="1" fill="#4a2020"/><rect x="0" y="6" width="689" height="1" fill="#4a2020"/><rect x="0" y="1" width="689" height="1" fill="#4a2020"/><rect x="5" y="0" width="1" height="487" fill="#1f421f"/><rect x="10" y="0" width="1" height="487" fill="#1f421f"/><rect x="15" y="0" width="1" height="487" fill="#1f421f"/><rect x="19" y="0" width="1" height="487" fill="#1f421f"/><rect x="29" y="0" width="1" height="487" fill="#1f421f"/><rect x="34" y="0" width="1" height="487" fill="#1f421f"/><rect x="39" y="0" width="1" height="487" fill="#1f421f"/><rect x="44" y="0" width="1" height="487" fill="#1f421f"/><rect x="54" y="0" width="1" height="487" fill="#1f421f"/><rect x="59" y="0" width="1" height="487" fill="#1f421f"/><rect x="64" y="0" width="1" height="487" fill="#1f421f"/><rect x="69" y="0" width="1" height="487" fill="#1f421f"/><rect x="78" y="0" width="1" height="487" fill="#1f421f"/><rect x="83" y="0" width="1" height="487" fill="#1f421f"/><rect x="88" y="0" width="1" height="487" fill="#1f421f"/><rect x="93" y="0" width="1" height="487" fill="#1f421f"/><rect x="103" y="0" width="1" height="487" fill="#1f421f"/><rect x="108" y="0" width="1" height="487" fill="#1f421f"/><rect x="113" y="0" width="1" height="487" fill="#1f421f"/><rect x="118" y="0" width="1" height="487" fill="#1f421f"/><rect x="127" y="0" width="1" height="487" fill="#1f421f"/><rect x="132" y="0" width="1" height="487" fill="#1f421f"/><rect x="137" y="0" width="1" height="487" fill="#1f421f"/><rect x="142" y="0" width="1" height="487" fill="#1f421f"/><rect x="152" y="0" width="1" height="487" fill="#1f421f"/><rect x="157" y="0" width="1" height="487" fill="#1f421f"/><rect x="162" y="0" width="1" height="487" fill="#1f421f"/><rect x="167" y="0" width="1" height="487" fill="#1f421f"/><rect x="177" y="0" width="1" height="487" fill="#1f421f"/><rect x="181" y="0" width="1" height="487" fill="#1f421f"/><rect x="186" y="0" width="1" height="487" fill="#1f421f"/><rect x="191" y="0" width="1" height="487" fill="#1f421f"/><rect x="201" y="0" width="1" height="487" fill="#1f421f"/><rect x="206" y="0" width="1" height="487" fill="#1f421f"/><rect x="211" y="0" width="1" height="487" fill="#1f421f"/><rect x="216" y="0" width="1" height="487" fill="#1f421f"/><rect x="226" y="0" width="1" height="487" fill="#1f421f"/><rect x="231" y="0" width="1" height="487" fill="#1f421f"/><rect x="235" y="0" width="1" height="487" fill="#1f421f"/><rect x="240" y="0" width="1" height="487" fill="#1f421f"/><rect x="250" y="0" width="1" height="487" fill="#1f421f"/><rect x="255" y="0" width="1" height="487" fill="#1f421f"/><rect x="260" y="0" width="1" height="487" fill="#1f421f"/><rect x="265" y="0" width="1" height="487" fill="#1f421f"/><rect x="275" y="0" width="1" height="487" fill="#1f421f"/><rect x="280" y="0" width="1" height="487" fill="#1f421f"/><rect x="285" y="0" width="1" height="487" fill="#1f421f"/><rect x="289" y="0" width="1" height="487" fill="#1f421f"/><rect x="299" y="0" width="1" height="487" fill="#1f421f"/><rect x="304" y="0" width="1" height="487" fill="#1f421f"/><rect x="309" y="0" width="1" height="487" fill="#1f421f"/><rect x="314" y="0" width="1" height="487" fill="#1f421f"/><rect x="324" y="0" width="1" height="487" fill="#1f421f"/><rect x="329" y="0" width="1" height="487" fill="#1f421f"/><rect x="334" y="0" width="1" height="487" fill="#1f421f"/><rect x="339" y="0" width="1" height="487" fill="#1f421f"/><rect x="348" y="0" width="1" height="487" fill="#1f421f"/><rect x="353" y="0" width="1" height="487" fill="#1f421f"/><rect x="358" y="0" width="1" height="487" fill="#1f421f"/><rect x="363" y="0" width="1" height="487" fill="#1f421f"/><rect x="373" y="0" width="1" height="487" fill="#1f421f"/><rect x="378" y="0" width="1" height="487" fill="#1f421f"/><rect x="383" y="0" width="1" height="487" fill="#1f421f"/><rect x="388" y="0" width="1" height="487" fill="#1f421f"/><rect x="398" y="0" width="1" height="487" fill="#1f421f"/><rect x="402" y="0" width="1" height="487" fill="#1f421f"/><rect x="407" y="0" width="1" height="487" fill="#1f421f"/><rect x="412" y="0" width="1" height="487" fill="#1f421f"/><rect x="422" y="0" width="1" height="487" fill="#1f421f"/><rect x="427" y="0" width="1" height="487" fill="#1f421f"/><rect x="432" y="0" width="1" height="487" fill="#1f421f"/><rect x="437" y="0" width="1" height="487" fill="#1f421f"/><rect x="447" y="0" width="1" height="487" fill="#1f421f"/><rect x="452" y="0" width="1" height="487" fill="#1f421f"/><rect x="456" y="0" width="1" height="487" fill="#1f421f"/><rect x="461" y="0" width="1" height="487" fill="#1f421f"/><rect x="471" y="0" width="1" height="487" fill="#1f421f"/><rect x="476" y="0" width="1" height="487" fill="#1f421f"/><rect x="481" y="0" width="1" height="487" fill="#1f421f"/><rect x="486" y="0" width="1" height="487" fill="#1f421f"/><rect x="496" y="0" width="1" height="487" fill="#1f421f"/><rect x="501" y="0" width="1" height="487" fill="#1f421f"/><rect x="506" y="0" width="1" height="487" fill="#1f421f"/><rect x="510" y="0" width="1" height="487" fill="#1f421f"/><rect x="520" y="0" width="1" height="487" fill="#1f421f"/><rect x="525" y="0" width="1" height="487" fill="#1f421f"/><rect x="530" y="0" width="1" height="487" fill="#1f421f"/><rect x="535" y="0" width="1" height="487" fill="#1f421f"/><rect x="545" y="0" width="1" height="487" fill="#1f421f"/><rect x="550" y="0" width="1" height="487" fill="#1f421f"/><rect x="555" y="0" width="1" height="487" fill="#1f421f"/><rect x="560" y="0" width="1" height="487" fill="#1f421f"/><rect x="569" y="0" width="1" height="487" fill="#1f421f"/><rect x="574" y="0" width="1" height="487" fill="#1f421f"/><rect x="579" y="0" width="1" height="487" fill="#1f421f"/><rect x="584" y="0" width="1" height="487" fill="#1f421f"/><rect x="594" y="0" width="1" height="487" fill="#1f421f"/><rect x="599" y="0" width="1" height="487" fill="#1f421f"/><rect x="604" y="0" width="1" height="487" fill="#1f421f"/><rect x="609" y="0" width="1" height="487" fill="#1f421f"/><rect x="618" y="0" width="1" height="487" fill="#1f421f"/><rect x="623" y="0" width="1" height="487" fill="#1f421f"/><rect x="628" y="0" width="1" height="487" fill="#1f421f"/><rect x="633" y="0" width="1" height="487" fill="#1f421f"/><rect x="643" y="0" width="1" height="487" fill="#1f421f"/><rect x="648" y="0" width="1" height="487" fill="#1f421f"/><rect x="653" y="0" width="1" height="487" fill="#1f421f"/><rect x="658" y="0" width="1" height="487" fill="#1f421f"/><rect x="668" y="0" width="1" height="487" fill="#1f421f"/><rect x="672" y="0" width="1" height="487" fill="#1f421f"/><rect x="677" y="0" width="1" height="487" fill="#1f421f"/><rect x="682" y="0" width="1" height="487" fill="#1f421f"/><rect x="0" y="0" width="1" height="487" fill="#508250"/><rect x="24" y="0" width="1" height="487" fill="#508250"/><rect x="49" y="0" width="1" height="487" fill="#508250"/><rect x="73" y="0" width="1" height="487" fill="#508250"/><rect x="98" y="0" width="1" height="487" fill="#508250"/><rect x="123" y="0" width="1" height="487" fill="#508250"/><rect x="147" y="0" width="1" height="487" fill="#508250"/><rect x="172" y="0" width="1" height="487" fill="#508250"/><rect x="196" y="0" width="1" height="487" fill="#508250"/><rect x="221" y="0" width="1" height="487" fill="#508250"/><rect x="245" y="0" width="1" height="487" fill="#508250"/><rect x="270" y="0" width="1" height="487" fill="#508250"/><rect x="294" y="0" width="1" height="487" fill="#508250"/><rect x="319" y="0" width="1" height="487" fill="#508250"/><rect x="344" y="0" width="1" height="487" fill="#508250"/><rect x="368" y="0" width="1" height="487" fill="#508250"/><rect x="393" y="0" width="1" height="487" fill="#508250"/><rect x="417" y="0" width="1" height="487" fill="#508250"/><rect x="442" y="0" width="1" height="487" fill="#508250"/><rect x="466" y="0" width="1" height="487" fill="#508250"/><rect x="491" y="0" width="1" height="487" fill="#508250"/><rect x="515" y="0" width="1" height="487" fill="#508250"/><rect x="540" y="0" width="1" height="487" fill="#508250"/><rect x="564" y="0" width="1" height="487" fill="#508250"/><rect x="589" y="0" width="1" height="487" fill="#508250"/><rect x="614" y="0" width="1" height="487" fill="#508250"/><rect x="638" y="0" width="1" height="487" fill="#508250"/><rect x="663" y="0" width="1" height="487" fill="#508250"/><rect x="687" y="0" width="1" height="487" fill="#508250"/><rect x="0" y="486" width="689" height="1" fill="#906464"/><rect x="0" y="462" width="689" height="1" fill="#906464"/><rect x="0" y="437" width="689" height="1" fill="#906464"/><rect x="0" y="413" width="689" height="1" fill="#906464"/><rect x="0" y="388" width="689" height="1" fill="#906464"/><rect x="0" y="364" width="689" height="1" fill="#906464"/><rect x="0" y="339" width="689" height="1" fill="#906464"/><rect x="0" y="315" width="689" height="1" fill="#906464"/><rect x="0" y="290" width="689" height="1" fill="#906464"/><rect x="0" y="266" width="689" height="1" fill="#906464"/><rect x="0" y="241" width="689" height="1" fill="#906464"/><rect x="0" y="217" width="689" height="1" fill="#906464"/><rect x="0" y="192" width="689" height="1" fill="#906464"/><rect x="0" y="168" width="689" height="1" fill="#906464"/><rect x="0" y="143" width="689" height="1" fill="#906464"/><rect x="0" y="118" width="689" height="1" fill="#906464"/><rect x="0" y="94" width="689" height="1" fill="#906464"/><rect x="0" y="69" width="689" height="1" fill="#906464"/><rect x="0" y="45" width="689" height="1" fill="#906464"/><rect x="0" y="20" width="689" height="1" fill="#906464"/><rect x="0" y="0" width="1" height="487" fill="#3c9a3c"/><rect x="0" y="486" width="689" height="1" fill="#a83a3a"/></svg></div></div>
<div id="viewcube">
<svg class="a" style="left:1020px;top:215px" width="100" height="100" viewBox="0 0 100 100">
<circle cx="48" cy="48.6" r="36.6" stroke="#303030" stroke-width="9.8" fill="none"/>
<rect x="30" y="31" width="36" height="36" fill="#a2a2a2"/>
<rect x="37" y="38" width="22" height="22" fill="#a9adb2"/>
</svg>
<span class="t" style="left:1054px;top:259px;font-size:8px;color:#333;letter-spacing:-0.5px">평면도</span>
<span class="t" style="left:1061px;top:218px;font-size:13px;color:#b4b4b4">북</span>
<span class="t" style="left:1061px;top:296px;font-size:13px;color:#b4b4b4">남</span>
<span class="t" style="left:1022px;top:257px;font-size:13px;color:#b4b4b4">서</span>
<span class="t" style="left:1101px;top:257px;font-size:13px;color:#b4b4b4;transform:scaleX(0.8)">동</span>
<div class="a" style="left:1044px;top:324px;width:47px;height:17px;background:#7a7a84;border:1px solid #8e8e98;border-radius:4px"></div>
<span class="t" style="left:1048px;top:326px;font-size:11px;color:#3c3c44">WCS</span>
<svg class="a" style="left:1077px;top:330px" width="8" height="6" viewBox="0 0 8 6"><path d="M0.5 0.5 H7.5 L4 5 Z" fill="none" stroke="#a8a8b0" stroke-width="1"/></svg>
</div>
<!-- ===== LEFT PANEL ===== -->
<div class="a" style="left:4px;top:175px;width:113px;height:545px;background:#3b4453"></div>
<div id="toolbar"><div class="a" style="left:5px;top:415px;width:24px;height:197px;border:1px solid #2c323c"></div><div class="a" style="left:32px;top:415px;width:25px;height:197px;border:1px solid #2c323c"></div><div class="a" style="left:60px;top:415px;width:25px;height:197px;border:1px solid #2c323c"></div><div class="a" style="left:88px;top:415px;width:25px;height:197px;border:1px solid #2c323c"></div><svg class="a" style="left:8px;top:417px" width="16" height="16" viewBox="0 0 16 16"><path d="M1.5 0.5 H7 V3.5 H4.5 V12.5 H7 V15.5 H1.5 Z M14.5 0.5 H9 V3.5 H11.5 V12.5 H9 V15.5 H14.5 Z" fill="#fff" stroke="#000" stroke-width="1"/></svg><svg class="a" style="left:8px;top:439px" width="16" height="16" viewBox="0 0 16 16"><path d="M12 1 L15 4 L6 13 L3 10 Z" fill="#f0c878"/><path d="M3 10 L6 13 L4 15 L1 12 Z" fill="#e05050"/><path d="M1 15 H15" stroke="#5aa8e8" stroke-width="1"/></svg><svg class="a" style="left:8px;top:461px" width="16" height="16" viewBox="0 0 16 16"><path d="M8 1 L10.5 4 H9 V7 H12 V5.5 L15 8 L12 10.5 V9 H9 V12 H10.5 L8 15 L5.5 12 H7 V9 H4 V10.5 L1 8 L4 5.5 V7 H7 V4 H5.5 Z" fill="#f0f0f0"/></svg><svg class="a" style="left:8px;top:483px" width="16" height="16" viewBox="0 0 16 16"><circle cx="4" cy="4" r="2.6" stroke="#e0e0e0" fill="none" stroke-width="1"/><path d="M8 3 H11 V7 M9.5 6 L11 7.5 L12.5 6" stroke="#e0e0e0" fill="none"/><circle cx="6" cy="12" r="2.6" stroke="#5aa8e8" fill="none" stroke-width="1.2"/><circle cx="11" cy="12" r="2.6" stroke="#5aa8e8" fill="none" stroke-width="1.2"/></svg><svg class="a" style="left:8px;top:504px" width="16" height="16" viewBox="0 0 16 16"><path d="M7 1 V15 H1 Z" stroke="#d8d8d8" fill="none"/><path d="M9 1 V15 H15 Z" stroke="#5aa8e8" fill="none"/></svg><svg class="a" style="left:8px;top:527px" width="16" height="16" viewBox="0 0 16 16"><path d="M1 15 V9 Q1 2 9 2 H15" stroke="#5aa8e8" fill="none" stroke-width="1.2"/><path d="M10 2 H15 M1 10 V15" stroke="#e0e0e0" stroke-width="1.2"/></svg><svg class="a" style="left:8px;top:549px" width="16" height="16" viewBox="0 0 16 16"><path d="M13 8 A5.5 5.5 0 1 1 8 2.5" stroke="#e8e8e8" fill="none" stroke-width="1.4"/><path d="M7 0 L11 2.5 L7 5 Z" fill="#e8e8e8"/></svg><svg class="a" style="left:8px;top:571px" width="16" height="16" viewBox="0 0 16 16"><rect x="1.5" y="1.5" width="13" height="13" stroke="#d01010" fill="none" stroke-width="1.6"/><text x="5" y="12" font-size="8" fill="#d01010" font-family="Liberation Sans" font-weight="bold">P</text><circle cx="14" cy="2" r="1.5" fill="#2be02b"/><circle cx="2" cy="14" r="1.5" fill="#2be02b"/></svg><svg class="a" style="left:8px;top:593px" width="16" height="16" viewBox="0 0 16 16"><rect x="1.5" y="1.5" width="13" height="13" stroke="#d01010" fill="none" stroke-width="1.6"/><text x="5" y="12" font-size="8" fill="#d01010" font-family="Liberation Sans" font-weight="bold">P</text><circle cx="14" cy="8" r="2" fill="#2be02b"/></svg><svg class="a" style="left:36px;top:417px" width="16" height="16" viewBox="0 0 16 16"><path d="M6 1 H15 V9 L12 12 H9 V15 H1 V7 L4 5 H6 Z" fill="#7ac0f0"/><path d="M6 1 L9 3 V12" stroke="#4a90c8" fill="none"/></svg><svg class="a" style="left:36px;top:439px" width="16" height="16" viewBox="0 0 16 16"><path d="M6 1 H15 V9 L12 12 H9 V15 H1 V7 L4 5 H6 Z" fill="#d0d0d0"/><rect x="5" y="6" width="5" height="5" fill="#5ab0f0"/></svg><svg class="a" style="left:36px;top:461px" width="16" height="16" viewBox="0 0 16 16"><path d="M2 2 L12 12 M6 1 L8 12" stroke="#4a90e8" stroke-width="1"/><circle cx="13" cy="10" r="2" stroke="#4a90e8" fill="none"/><circle cx="8" cy="14" r="2" stroke="#4a90e8" fill="none"/></svg><svg class="a" style="left:36px;top:483px" width="16" height="16" viewBox="0 0 16 16"><circle cx="6" cy="10" r="4.5" fill="#e81818"/><path d="M8 6 Q10 3 12 4" stroke="#ddd" fill="none"/><circle cx="13" cy="3" r="1.8" fill="#f0a040"/></svg><svg class="a" style="left:36px;top:504px" width="16" height="16" viewBox="0 0 16 16"><rect x="1" y="5" width="10" height="10" fill="#fff" stroke="#000"/><rect x="6" y="1" width="8" height="8" stroke="#d02020" stroke-dasharray="2 1.5" fill="none"/></svg><svg class="a" style="left:36px;top:527px" width="16" height="16" viewBox="0 0 16 16"><path d="M1 7 H10 M1 11 H11" stroke="#e8e8e8" stroke-width="1.2"/><path d="M1 11 H11" stroke="#5aa8e8" stroke-dasharray="2 1" stroke-width="1.2"/><path d="M8 4.5 L11 7 L8 9.5 Z" fill="#e8e8e8"/><path d="M14 1 V15" stroke="#e8e8e8" stroke-width="1.2"/></svg><svg class="a" style="left:36px;top:549px" width="16" height="16" viewBox="0 0 16 16"><path d="M1 8 H5" stroke="#999" stroke-width="1.6"/><path d="M11 1 L5 15" stroke="#3a98f0" stroke-width="1.3"/><path d="M9 8 H15" stroke="#3a98f0" stroke-dasharray="1.5 1.5" stroke-width="1.3"/></svg><svg class="a" style="left:36px;top:571px" width="16" height="16" viewBox="0 0 16 16"><circle cx="2.5" cy="8" r="1.5" stroke="#e8e8e8" fill="none"/><path d="M4 8 H11" stroke="#e8e8e8"/><rect x="11" y="5.5" width="4.5" height="5" stroke="#f0b080" fill="none" stroke-width="1.2"/></svg><svg class="a" style="left:36px;top:593px" width="16" height="16" viewBox="0 0 16 16"><rect x="1" y="1" width="14" height="14" fill="#000" stroke="#ddd"/><rect x="2" y="2" width="12" height="4" fill="#e8e8e8"/><rect x="4" y="3" width="2" height="1.5" fill="#222"/><rect x="7.5" y="3" width="2" height="1.5" fill="#222"/><rect x="11" y="3" width="2" height="1.5" fill="#222"/><rect x="1" y="6" width="2" height="9" fill="#ddd"/></svg><svg class="a" style="left:64px;top:417px" width="16" height="16" viewBox="0 0 16 16"><rect x="1" y="1" width="11" height="12" stroke="#d8d8d8" fill="none"/><circle cx="11" cy="11" r="2.6" fill="#3b4453" stroke="#d8d8d8"/><path d="M13 13 L15.5 15.5" stroke="#e0b060" stroke-width="1.2"/></svg><svg class="a" style="left:64px;top:439px" width="16" height="16" viewBox="0 0 16 16"><path d="M1 1 V15 M15 1 V15 M1 3 H15" stroke="#d8d8d8"/><path d="M9 5 L6 9 H9 L7 13 L11 8 H8 Z" fill="#f0c040"/></svg><svg class="a" style="left:64px;top:461px" width="16" height="16" viewBox="0 0 16 16"><path d="M1 6 V13 M15 6 V13 M1 8 H15" stroke="#1e5a2a" stroke-width="1.5"/><rect x="6" y="4" width="5" height="3" fill="#2a6a30"/></svg><svg class="a" style="left:64px;top:483px" width="16" height="16" viewBox="0 0 16 16"><ellipse cx="8" cy="8" rx="3" ry="7" stroke="#e8e8e8" fill="none"/><path d="M3 4 L1 8 L3 12 M13 4 L15 8 L13 12" stroke="#e8e8e8" fill="none"/><path d="M8 6 V10 M6 8 H10" stroke="#5ab0f0" stroke-width="1.2"/></svg><svg class="a" style="left:64px;top:504px" width="16" height="16" viewBox="0 0 16 16"><circle cx="8" cy="7" r="6" fill="#d8d8d8"/><circle cx="6.5" cy="5" r="3" fill="#f4f4f4"/><path d="M2 15 H14" stroke="#555" stroke-width="1.4"/></svg><svg class="a" style="left:64px;top:527px" width="16" height="16" viewBox="0 0 16 16"><path d="M5 1 H15 V11 L11 15 H1 V5 Z M1 5 H11 V15 M11 5 L15 1" stroke="#5ab8f0" fill="none" stroke-width="1.6"/><path d="M3 13 L7 9 M7 9 H9 M7 9 V7" stroke="#e0e0e0" stroke-width="0.8"/></svg><svg class="a" style="left:64px;top:549px" width="16" height="16" viewBox="0 0 16 16"><path d="M1 5 H5 L7 2 H10 L12 5 H15 V14 H1 Z" fill="#000"/><circle cx="8" cy="9" r="3.5" fill="#fff"/><circle cx="8" cy="9" r="2.5" fill="#101080"/><path d="M5 4 L8 1" stroke="#2aa8a8" stroke-width="1"/></svg><svg class="a" style="left:64px;top:571px" width="16" height="16" viewBox="0 0 16 16"><path d="M1 8 L8 5 L15 8 V13 L8 16 L1 13 Z" fill="#d8d8d8"/><path d="M8 11 L15 8 V13 L8 16 Z" fill="#b0b0b0"/><ellipse cx="8" cy="5" rx="3.5" ry="2" fill="#5ab0f0"/><rect x="4.5" y="2" width="7" height="3" fill="#5ab0f0"/><ellipse cx="8" cy="2" rx="3.5" ry="1.6" fill="#8acaf8"/></svg><svg class="a" style="left:64px;top:593px" width="16" height="16" viewBox="0 0 16 16"><rect x="1" y="1" width="14" height="14" stroke="#d8d8d8" fill="none"/><circle cx="6" cy="6" r="3" stroke="#aaa" fill="none"/><path d="M7 9 H13 V13 H8 M9 11 L7.5 13 L9 15" stroke="#5ab0f0" fill="none" stroke-width="1.2"/></svg><svg class="a" style="left:92px;top:417px" width="16" height="16" viewBox="0 0 16 16"><path d="M1 1 V15 M15 1 V15" stroke="#d8d8d8" stroke-width="1.2"/><path d="M2 5 H14" stroke="#5ab0f0" stroke-width="1.2"/><path d="M2 5 L4 3.5 V6.5 Z M14 5 L12 3.5 V6.5 Z" fill="#5ab0f0"/></svg><svg class="a" style="left:92px;top:439px" width="16" height="16" viewBox="0 0 16 16"><path d="M1 2 V8 M15 2 V8 M1 4 H15" stroke="#d8d8d8"/><rect x="1" y="9" width="14" height="5" fill="#e8c060"/><path d="M3 9 V11 M5 9 V12 M7 9 V11 M9 9 V12 M11 9 V11 M13 9 V12" stroke="#8a6a20" stroke-width="0.6"/></svg><svg class="a" style="left:92px;top:461px" width="16" height="16" viewBox="0 0 16 16"><rect x="2" y="2" width="13" height="12" fill="#e0e0e0"/><rect x="1" y="1" width="12" height="10" fill="#fff" stroke="#e01010" stroke-width="1.5"/><rect x="3" y="12" width="12" height="3" fill="#222"/></svg><svg class="a" style="left:92px;top:483px" width="16" height="16" viewBox="0 0 16 16"><path d="M8 1 L15 4 V12 L8 15 L1 12 V4 Z" fill="#3a90f0"/><path d="M8 8 L15 4 V12 L8 15 Z" fill="#1a60c8"/><path d="M1 4 L8 1 L15 4 L8 8 Z" fill="#7ac8f8"/><circle cx="2" cy="3" r="2" fill="#e02020"/></svg><svg class="a" style="left:92px;top:504px" width="16" height="16" viewBox="0 0 16 16"><rect x="1" y="1" width="14" height="14" fill="#000" stroke="#e0e0e0"/><path d="M1 8 H15 M8 1 V15" stroke="#e0e0e0" stroke-width="1.5"/></svg><svg class="a" style="left:92px;top:527px" width="16" height="16" viewBox="0 0 16 16"><path d="M4 5 H15 V15 H4 Z" fill="#c8c8c8"/><path d="M1 3 H8 M6 1 L9 3 L6 5" stroke="#5ab0f0" stroke-width="1.5" fill="none"/><text x="4.5" y="13" font-size="5" fill="#fff" font-family="Liberation Sans" font-weight="bold">WMF</text></svg><svg class="a" style="left:92px;top:549px" width="16" height="16" viewBox="0 0 16 16"><rect x="1" y="1" width="14" height="4" fill="#000"/><path d="M2 5 H14 V15 H2 Z" fill="#f09030"/><circle cx="8" cy="10" r="3" fill="#fff"/><circle cx="8" cy="10" r="1.5" fill="#f09030"/></svg><svg class="a" style="left:92px;top:571px" width="16" height="16" viewBox="0 0 16 16"><rect x="1" y="1" width="14" height="14" fill="#e8e8e8" stroke="#222"/><path d="M4 3 H10 L12 5 V13 H4 Z" fill="#c8e0f0" stroke="#2a5aa0"/></svg><svg class="a" style="left:92px;top:593px" width="16" height="16" viewBox="0 0 16 16"><rect x="6" y="1" width="9" height="7" fill="#8a2020"/><rect x="7" y="3" width="7" height="4" fill="#fff"/><rect x="1" y="8" width="9" height="7" fill="#2a7a2a"/><rect x="2" y="10" width="7" height="4" fill="#aaa"/></svg></div>
<!-- ===== PALETTE ===== -->
<div class="a" style="left:4px;top:176px;width:450px;height:239px;background:#3b4453"></div>
<div id="palette"><div style="position:absolute;left:0;top:0"><span class="t" style="left:11px;top:187px;color:#e8e8e8">삼나무</span><span class="t" style="left:11px;top:223px;color:#e8e8e8">향나무</span><span class="t" style="left:11px;top:259px;color:#e8e8e8">측백나무</span><span class="t" style="left:11px;top:295px;color:#e8e8e8">소나무</span><span class="t" style="left:11px;top:331px;color:#e8e8e8">전나무</span><span class="t" style="left:11px;top:366px;color:#e8e8e8">주목</span><div class="sep" style="left:54px;top:180px;height:33px;background:#2a303a"></div><div class="sep" style="left:54px;top:216px;height:33px;background:#2a303a"></div><div class="sep" style="left:66px;top:252px;height:33px;background:#2a303a"></div><div class="sep" style="left:54px;top:288px;height:33px;background:#2a303a"></div><div class="sep" style="left:54px;top:324px;height:33px;background:#2a303a"></div><div class="sep" style="left:42px;top:360px;height:33px;background:#2a303a"></div></div><div style="position:absolute;left:0;top:0;filter:brightness(0.82) saturate(0.9)"><svg class="a" style="left:62px;top:181px" width="32" height="33" viewBox="0 0 32 33"><rect x="15.2" y="23.1" width="1.6" height="9.9" fill="#4a3a2a"/><path d="M16.0 0.7 C19.2 6.6 30.4 19.8 31.0 27.1 L1.0 27.1 C1.6 19.8 12.8 6.6 16.0 0.7 Z" fill="#5a6a48" opacity="0.55"/><circle cx="14.4" cy="2.2" r="1.3" fill="#6a7a50"/><circle cx="23.4" cy="22.1" r="0.8" fill="#6a7a50"/><circle cx="16.8" cy="20.9" r="2.0" fill="#b8c0a8"/><circle cx="17.7" cy="2.4" r="1.0" fill="#7a8a68"/><circle cx="6.7" cy="12.0" r="1.4" fill="#b8c0a8"/><circle cx="16.5" cy="23.5" r="1.0" fill="#7a8a68"/><circle cx="18.8" cy="6.7" r="1.4" fill="#b8c0a8"/><circle cx="15.9" cy="2.9" r="1.9" fill="#6a7a50"/><circle cx="11.4" cy="9.2" r="1.9" fill="#9aa888"/><circle cx="4.8" cy="25.6" r="1.6" fill="#b8c0a8"/><circle cx="11.6" cy="15.6" r="1.3" fill="#7a8a68"/><circle cx="28.2" cy="19.6" r="1.7" fill="#b8c0a8"/><circle cx="17.5" cy="10.0" r="0.9" fill="#b8c0a8"/><circle cx="6.1" cy="11.9" r="1.8" fill="#b8c0a8"/><circle cx="19.4" cy="8.8" r="1.3" fill="#7a8a68"/><circle cx="23.1" cy="12.8" r="1.5" fill="#7a8a68"/><circle cx="12.0" cy="14.1" r="1.4" fill="#9aa888"/><circle cx="13.3" cy="21.5" r="1.2" fill="#7a8a68"/><circle cx="19.4" cy="5.7" r="1.6" fill="#b8c0a8"/><circle cx="14.7" cy="16.7" r="1.6" fill="#b8c0a8"/><circle cx="16.5" cy="8.1" r="1.1" fill="#6a7a50"/><circle cx="3.0" cy="22.1" r="1.2" fill="#6a7a50"/><circle cx="13.7" cy="7.6" r="1.6" fill="#b8c0a8"/><circle cx="29.3" cy="26.1" r="1.9" fill="#9aa888"/><circle cx="15.1" cy="21.5" r="1.6" fill="#b8c0a8"/><circle cx="17.8" cy="2.1" r="2.0" fill="#5a6a48"/><circle cx="23.5" cy="12.5" r="1.9" fill="#6a7a50"/><circle cx="9.2" cy="21.3" r="1.6" fill="#9aa888"/><circle cx="13.2" cy="17.8" r="0.9" fill="#9aa888"/><circle cx="15.9" cy="9.1" r="1.7" fill="#5a6a48"/><circle cx="7.0" cy="13.2" r="1.8" fill="#7a8a68"/><circle cx="10.7" cy="4.6" r="1.3" fill="#9aa888"/><circle cx="18.6" cy="5.2" r="1.8" fill="#6a7a50"/><circle cx="5.8" cy="13.1" r="1.8" fill="#b8c0a8"/><circle cx="26.2" cy="14.7" r="1.0" fill="#b8c0a8"/><circle cx="22.1" cy="6.2" r="1.2" fill="#9aa888"/><circle cx="18.6" cy="15.7" r="1.6" fill="#5a6a48"/><circle cx="16.5" cy="26.0" r="1.7" fill="#b8c0a8"/><circle cx="18.5" cy="5.5" r="1.0" fill="#b8c0a8"/><circle cx="20.9" cy="17.6" r="1.4" fill="#5a6a48"/><circle cx="4.5" cy="18.2" r="1.0" fill="#7a8a68"/><circle cx="17.0" cy="14.1" r="1.4" fill="#5a6a48"/><circle cx="19.3" cy="5.3" r="0.9" fill="#7a8a68"/><circle cx="13.3" cy="17.9" r="1.6" fill="#b8c0a8"/><circle cx="11.8" cy="8.3" r="1.1" fill="#7a8a68"/><circle cx="4.5" cy="18.2" r="0.9" fill="#5a6a48"/><circle cx="16.3" cy="3.4" r="1.6" fill="#9aa888"/><circle cx="6.5" cy="25.7" r="1.4" fill="#6a7a50"/><circle cx="15.5" cy="6.2" r="0.9" fill="#5a6a48"/><circle cx="22.1" cy="10.5" r="1.5" fill="#6a7a50"/><circle cx="15.3" cy="5.0" r="0.9" fill="#6a7a50"/><circle cx="17.0" cy="6.8" r="1.5" fill="#7a8a68"/><circle cx="13.4" cy="11.9" r="1.5" fill="#9aa888"/><circle cx="24.5" cy="9.0" r="1.5" fill="#9aa888"/><circle cx="5.4" cy="23.3" r="1.6" fill="#b8c0a8"/><circle cx="6.2" cy="22.3" r="1.6" fill="#b8c0a8"/><circle cx="13.8" cy="12.3" r="1.6" fill="#6a7a50"/><circle cx="6.3" cy="12.8" r="1.2" fill="#9aa888"/><circle cx="3.7" cy="17.9" r="1.3" fill="#7a8a68"/><circle cx="18.3" cy="5.5" r="1.7" fill="#6a7a50"/><circle cx="9.6" cy="15.3" r="1.4" fill="#7a8a68"/><circle cx="12.0" cy="4.7" r="1.3" fill="#b8c0a8"/><circle cx="9.8" cy="9.5" r="1.2" fill="#9aa888"/><circle cx="11.6" cy="17.5" r="2.0" fill="#9aa888"/><circle cx="25.6" cy="18.1" r="0.8" fill="#9aa888"/><circle cx="8.9" cy="21.7" r="1.1" fill="#b8c0a8"/><circle cx="16.2" cy="2.5" r="1.8" fill="#5a6a48"/><circle cx="19.6" cy="12.3" r="1.5" fill="#5a6a48"/><circle cx="9.6" cy="21.4" r="1.2" fill="#7a8a68"/><circle cx="19.8" cy="21.6" r="1.7" fill="#5a6a48"/></svg><svg class="a" style="left:100px;top:181px" width="32" height="33" viewBox="0 0 32 33"><rect x="15.2" y="23.1" width="1.6" height="9.9" fill="#4a3a2a"/><path d="M16.0 0.7 C19.2 6.6 30.4 19.8 31.0 27.1 L1.0 27.1 C1.6 19.8 12.8 6.6 16.0 0.7 Z" fill="#4a5a38" opacity="0.55"/><circle cx="15.8" cy="6.1" r="1.0" fill="#6a7a50"/><circle cx="18.2" cy="12.7" r="1.8" fill="#a0a880"/><circle cx="14.6" cy="21.3" r="1.1" fill="#8a9a68"/><circle cx="10.0" cy="26.6" r="1.2" fill="#5a6a40"/><circle cx="10.4" cy="16.2" r="1.1" fill="#a0a880"/><circle cx="8.5" cy="13.1" r="1.1" fill="#5a6a40"/><circle cx="12.5" cy="23.4" r="1.9" fill="#5a6a40"/><circle cx="12.3" cy="10.6" r="1.6" fill="#4a5a38"/><circle cx="15.4" cy="7.8" r="1.2" fill="#a0a880"/><circle cx="24.7" cy="15.1" r="1.6" fill="#6a7a50"/><circle cx="18.0" cy="15.5" r="1.3" fill="#8a9a68"/><circle cx="19.9" cy="5.6" r="1.3" fill="#4a5a38"/><circle cx="24.9" cy="17.4" r="1.8" fill="#6a7a50"/><circle cx="19.1" cy="14.0" r="1.9" fill="#8a9a68"/><circle cx="17.4" cy="2.0" r="1.5" fill="#6a7a50"/><circle cx="16.1" cy="3.7" r="1.6" fill="#8a9a68"/><circle cx="17.6" cy="18.1" r="1.9" fill="#4a5a38"/><circle cx="6.4" cy="13.1" r="1.9" fill="#4a5a38"/><circle cx="11.7" cy="8.1" r="1.0" fill="#5a6a40"/><circle cx="20.0" cy="13.1" r="1.7" fill="#8a9a68"/><circle cx="22.5" cy="18.0" r="0.9" fill="#5a6a40"/><circle cx="12.1" cy="6.6" r="1.5" fill="#6a7a50"/><circle cx="12.1" cy="16.2" r="1.2" fill="#6a7a50"/><circle cx="15.5" cy="7.3" r="1.8" fill="#a0a880"/><circle cx="13.9" cy="20.9" r="1.7" fill="#a0a880"/><circle cx="9.2" cy="5.6" r="1.9" fill="#a0a880"/><circle cx="18.5" cy="16.8" r="0.9" fill="#5a6a40"/><circle cx="22.7" cy="24.1" r="2.0" fill="#5a6a40"/><circle cx="14.4" cy="12.1" r="1.0" fill="#5a6a40"/><circle cx="15.3" cy="3.7" r="1.5" fill="#5a6a40"/><circle cx="19.5" cy="23.8" r="1.1" fill="#a0a880"/><circle cx="14.0" cy="13.9" r="1.8" fill="#6a7a50"/><circle cx="17.1" cy="24.2" r="1.8" fill="#a0a880"/><circle cx="14.1" cy="19.7" r="1.4" fill="#5a6a40"/><circle cx="25.4" cy="11.9" r="1.6" fill="#6a7a50"/><circle cx="17.8" cy="6.3" r="1.1" fill="#8a9a68"/><circle cx="14.3" cy="23.7" r="2.0" fill="#8a9a68"/><circle cx="4.1" cy="22.8" r="1.6" fill="#6a7a50"/><circle cx="12.9" cy="10.2" r="1.2" fill="#8a9a68"/><circle cx="19.8" cy="4.4" r="1.6" fill="#5a6a40"/><circle cx="11.1" cy="19.1" r="1.3" fill="#8a9a68"/><circle cx="15.8" cy="9.8" r="1.4" fill="#a0a880"/><circle cx="22.9" cy="9.4" r="0.9" fill="#a0a880"/><circle cx="6.9" cy="24.0" r="1.3" fill="#4a5a38"/><circle cx="14.9" cy="23.9" r="0.9" fill="#6a7a50"/><circle cx="15.4" cy="19.8" r="1.2" fill="#4a5a38"/><circle cx="14.9" cy="1.9" r="2.0" fill="#6a7a50"/><circle cx="11.5" cy="21.0" r="1.7" fill="#8a9a68"/><circle cx="20.4" cy="8.7" r="1.1" fill="#5a6a40"/><circle cx="20.5" cy="9.8" r="1.0" fill="#4a5a38"/><circle cx="25.1" cy="11.6" r="1.7" fill="#a0a880"/><circle cx="10.0" cy="14.7" r="2.0" fill="#a0a880"/><circle cx="9.5" cy="9.6" r="1.6" fill="#a0a880"/><circle cx="21.3" cy="17.9" r="2.0" fill="#5a6a40"/><circle cx="15.4" cy="13.8" r="1.7" fill="#6a7a50"/><circle cx="8.4" cy="7.4" r="1.0" fill="#4a5a38"/><circle cx="24.8" cy="19.6" r="1.5" fill="#a0a880"/><circle cx="9.8" cy="13.6" r="1.2" fill="#5a6a40"/><circle cx="18.6" cy="4.3" r="2.0" fill="#a0a880"/><circle cx="19.4" cy="25.1" r="1.8" fill="#5a6a40"/><circle cx="23.2" cy="8.7" r="1.0" fill="#6a7a50"/><circle cx="19.2" cy="14.8" r="0.9" fill="#5a6a40"/><circle cx="16.4" cy="1.9" r="1.5" fill="#a0a880"/><circle cx="20.9" cy="17.4" r="1.4" fill="#5a6a40"/><circle cx="24.2" cy="20.9" r="1.3" fill="#6a7a50"/><circle cx="20.0" cy="24.5" r="1.4" fill="#6a7a50"/><circle cx="9.6" cy="13.4" r="1.9" fill="#6a7a50"/><circle cx="14.2" cy="25.9" r="1.2" fill="#6a7a50"/><circle cx="17.0" cy="6.9" r="1.5" fill="#4a5a38"/><circle cx="15.3" cy="4.3" r="1.1" fill="#8a9a68"/></svg><svg class="a" style="left:138px;top:181px" width="32" height="33" viewBox="0 0 32 33"><rect x="15.2" y="23.1" width="1.6" height="9.9" fill="#4a3a2a"/><path d="M16.0 0.7 C19.2 6.6 30.4 19.8 31.0 27.1 L1.0 27.1 C1.6 19.8 12.8 6.6 16.0 0.7 Z" fill="#3a4a30" opacity="0.55"/><circle cx="10.9" cy="17.9" r="1.6" fill="#6a8060"/><circle cx="11.1" cy="13.9" r="1.6" fill="#8a9a80"/><circle cx="6.1" cy="16.5" r="1.6" fill="#aab0a0"/><circle cx="25.0" cy="20.6" r="1.9" fill="#4a6040"/><circle cx="18.2" cy="4.9" r="1.5" fill="#8a9a80"/><circle cx="16.2" cy="11.7" r="1.8" fill="#3a4a30"/><circle cx="22.7" cy="13.0" r="0.9" fill="#4a6040"/><circle cx="15.5" cy="8.1" r="1.1" fill="#8a9a80"/><circle cx="8.9" cy="16.8" r="1.7" fill="#8a9a80"/><circle cx="20.6" cy="4.9" r="0.9" fill="#8a9a80"/><circle cx="26.3" cy="14.1" r="1.5" fill="#8a9a80"/><circle cx="11.5" cy="12.2" r="0.9" fill="#3a4a30"/><circle cx="16.9" cy="3.5" r="1.0" fill="#4a6040"/><circle cx="2.2" cy="26.3" r="1.0" fill="#6a8060"/><circle cx="11.0" cy="9.5" r="1.2" fill="#8a9a80"/><circle cx="23.7" cy="26.8" r="1.8" fill="#8a9a80"/><circle cx="7.6" cy="10.6" r="1.3" fill="#3a4a30"/><circle cx="16.3" cy="3.1" r="1.5" fill="#3a4a30"/><circle cx="13.4" cy="9.3" r="1.9" fill="#aab0a0"/><circle cx="14.5" cy="6.6" r="1.1" fill="#8a9a80"/><circle cx="19.6" cy="17.9" r="1.7" fill="#3a4a30"/><circle cx="9.5" cy="9.1" r="1.7" fill="#6a8060"/><circle cx="20.3" cy="17.3" r="1.3" fill="#8a9a80"/><circle cx="6.6" cy="14.5" r="1.6" fill="#8a9a80"/><circle cx="12.0" cy="11.4" r="1.5" fill="#3a4a30"/><circle cx="15.8" cy="18.5" r="1.2" fill="#6a8060"/><circle cx="24.7" cy="18.5" r="1.2" fill="#6a8060"/><circle cx="9.3" cy="23.5" r="1.4" fill="#3a4a30"/><circle cx="18.4" cy="24.1" r="1.6" fill="#6a8060"/><circle cx="15.9" cy="3.6" r="1.8" fill="#6a8060"/><circle cx="9.2" cy="25.8" r="0.8" fill="#4a6040"/><circle cx="21.0" cy="15.1" r="1.1" fill="#aab0a0"/><circle cx="11.8" cy="19.5" r="1.1" fill="#8a9a80"/><circle cx="23.0" cy="24.3" r="1.8" fill="#3a4a30"/><circle cx="16.8" cy="2.9" r="1.7" fill="#4a6040"/><circle cx="20.0" cy="22.6" r="1.4" fill="#aab0a0"/><circle cx="15.4" cy="10.4" r="0.9" fill="#aab0a0"/><circle cx="23.8" cy="13.4" r="1.9" fill="#4a6040"/><circle cx="29.1" cy="23.0" r="1.8" fill="#6a8060"/><circle cx="15.9" cy="22.7" r="1.4" fill="#3a4a30"/><circle cx="9.7" cy="14.6" r="1.0" fill="#aab0a0"/><circle cx="14.3" cy="26.0" r="1.3" fill="#3a4a30"/><circle cx="24.0" cy="26.7" r="1.1" fill="#8a9a80"/><circle cx="2.7" cy="21.4" r="1.4" fill="#4a6040"/><circle cx="24.8" cy="16.0" r="1.2" fill="#3a4a30"/><circle cx="9.2" cy="15.4" r="1.4" fill="#aab0a0"/><circle cx="10.2" cy="8.9" r="1.5" fill="#6a8060"/><circle cx="29.9" cy="24.0" r="1.6" fill="#6a8060"/><circle cx="10.4" cy="18.0" r="1.7" fill="#6a8060"/><circle cx="15.9" cy="6.9" r="0.9" fill="#3a4a30"/><circle cx="1.9" cy="24.6" r="0.8" fill="#4a6040"/><circle cx="6.8" cy="17.2" r="1.9" fill="#6a8060"/><circle cx="21.1" cy="7.3" r="1.4" fill="#8a9a80"/><circle cx="18.1" cy="22.1" r="1.1" fill="#6a8060"/><circle cx="12.4" cy="3.7" r="0.9" fill="#8a9a80"/><circle cx="16.9" cy="10.1" r="1.3" fill="#4a6040"/><circle cx="6.4" cy="12.3" r="1.1" fill="#6a8060"/><circle cx="18.3" cy="10.5" r="1.3" fill="#6a8060"/><circle cx="20.2" cy="3.2" r="1.3" fill="#8a9a80"/><circle cx="8.3" cy="12.1" r="1.9" fill="#6a8060"/><circle cx="14.7" cy="8.5" r="1.5" fill="#8a9a80"/><circle cx="15.7" cy="6.6" r="1.1" fill="#3a4a30"/><circle cx="18.7" cy="20.8" r="1.7" fill="#4a6040"/><circle cx="19.9" cy="12.4" r="1.3" fill="#6a8060"/><circle cx="15.0" cy="11.8" r="0.9" fill="#4a6040"/><circle cx="16.1" cy="10.4" r="0.8" fill="#8a9a80"/><circle cx="21.7" cy="14.0" r="2.0" fill="#4a6040"/><circle cx="12.5" cy="6.7" r="1.2" fill="#8a9a80"/><circle cx="25.2" cy="16.5" r="1.4" fill="#aab0a0"/><circle cx="9.1" cy="24.6" r="1.8" fill="#aab0a0"/></svg><svg class="a" style="left:176px;top:181px" width="32" height="33" viewBox="0 0 32 33"><rect x="15.2" y="23.1" width="1.6" height="9.9" fill="#4a3a2a"/><path d="M16.0 0.7 C19.2 6.6 30.4 19.8 31.0 27.1 L1.0 27.1 C1.6 19.8 12.8 6.6 16.0 0.7 Z" fill="#4a5040" opacity="0.55"/><circle cx="18.8" cy="13.0" r="1.3" fill="#4a5040"/><circle cx="13.3" cy="4.2" r="1.7" fill="#4a5040"/><circle cx="9.3" cy="17.4" r="1.7" fill="#9a9a90"/><circle cx="10.0" cy="14.3" r="1.1" fill="#b0b0a8"/><circle cx="22.9" cy="23.4" r="1.6" fill="#4a5040"/><circle cx="23.8" cy="15.7" r="1.2" fill="#6a7060"/><circle cx="14.7" cy="5.9" r="0.9" fill="#707a60"/><circle cx="18.8" cy="12.9" r="1.9" fill="#707a60"/><circle cx="9.3" cy="13.2" r="2.0" fill="#707a60"/><circle cx="8.9" cy="11.1" r="0.8" fill="#9a9a90"/><circle cx="18.4" cy="12.8" r="1.2" fill="#9a9a90"/><circle cx="21.6" cy="12.4" r="1.3" fill="#707a60"/><circle cx="3.0" cy="19.3" r="0.8" fill="#9a9a90"/><circle cx="25.6" cy="18.8" r="1.1" fill="#b0b0a8"/><circle cx="8.6" cy="10.3" r="1.5" fill="#9a9a90"/><circle cx="17.8" cy="6.6" r="1.1" fill="#9a9a90"/><circle cx="26.2" cy="15.3" r="1.5" fill="#707a60"/><circle cx="21.0" cy="11.7" r="1.2" fill="#b0b0a8"/><circle cx="13.0" cy="17.8" r="1.0" fill="#707a60"/><circle cx="19.0" cy="12.6" r="1.5" fill="#6a7060"/><circle cx="10.6" cy="21.5" r="1.6" fill="#9a9a90"/><circle cx="14.9" cy="22.4" r="1.1" fill="#4a5040"/><circle cx="14.8" cy="3.8" r="1.5" fill="#4a5040"/><circle cx="18.8" cy="2.7" r="1.5" fill="#9a9a90"/><circle cx="15.9" cy="26.8" r="1.0" fill="#b0b0a8"/><circle cx="4.0" cy="17.8" r="1.6" fill="#b0b0a8"/><circle cx="17.8" cy="1.9" r="1.4" fill="#b0b0a8"/><circle cx="27.6" cy="25.4" r="1.5" fill="#6a7060"/><circle cx="8.6" cy="18.0" r="0.9" fill="#4a5040"/><circle cx="14.2" cy="16.2" r="1.7" fill="#6a7060"/><circle cx="22.8" cy="18.5" r="1.5" fill="#9a9a90"/><circle cx="22.9" cy="11.5" r="1.3" fill="#6a7060"/><circle cx="5.9" cy="11.4" r="1.0" fill="#9a9a90"/><circle cx="7.1" cy="10.7" r="1.7" fill="#6a7060"/><circle cx="10.9" cy="16.0" r="1.4" fill="#707a60"/><circle cx="6.1" cy="20.5" r="1.3" fill="#9a9a90"/><circle cx="3.7" cy="20.9" r="1.8" fill="#b0b0a8"/><circle cx="17.5" cy="13.1" r="1.2" fill="#b0b0a8"/><circle cx="7.9" cy="15.2" r="1.5" fill="#b0b0a8"/><circle cx="9.4" cy="23.0" r="1.1" fill="#9a9a90"/><circle cx="15.3" cy="16.7" r="1.6" fill="#707a60"/><circle cx="18.2" cy="4.7" r="1.0" fill="#4a5040"/><circle cx="23.4" cy="26.5" r="1.1" fill="#707a60"/><circle cx="8.4" cy="15.8" r="0.9" fill="#4a5040"/><circle cx="14.6" cy="24.2" r="1.1" fill="#707a60"/><circle cx="11.2" cy="17.1" r="0.9" fill="#b0b0a8"/><circle cx="25.3" cy="25.6" r="1.5" fill="#6a7060"/><circle cx="25.2" cy="21.7" r="2.0" fill="#b0b0a8"/><circle cx="14.9" cy="17.0" r="1.9" fill="#4a5040"/><circle cx="14.8" cy="7.2" r="1.3" fill="#b0b0a8"/><circle cx="19.9" cy="14.4" r="1.9" fill="#b0b0a8"/><circle cx="11.7" cy="15.4" r="0.8" fill="#9a9a90"/><circle cx="4.0" cy="25.7" r="1.1" fill="#707a60"/><circle cx="6.4" cy="11.4" r="1.7" fill="#707a60"/><circle cx="23.9" cy="11.5" r="1.8" fill="#707a60"/><circle cx="4.8" cy="14.1" r="0.9" fill="#4a5040"/><circle cx="21.7" cy="15.1" r="1.6" fill="#b0b0a8"/><circle cx="16.1" cy="9.0" r="1.5" fill="#6a7060"/><circle cx="26.6" cy="20.9" r="1.8" fill="#6a7060"/><circle cx="29.4" cy="21.4" r="1.1" fill="#b0b0a8"/><circle cx="12.8" cy="11.3" r="1.3" fill="#707a60"/><circle cx="24.6" cy="15.1" r="1.7" fill="#4a5040"/><circle cx="7.8" cy="9.4" r="1.4" fill="#4a5040"/><circle cx="9.0" cy="25.5" r="1.5" fill="#4a5040"/><circle cx="11.9" cy="4.9" r="1.2" fill="#707a60"/><circle cx="10.0" cy="17.1" r="1.5" fill="#4a5040"/><circle cx="18.5" cy="4.0" r="1.6" fill="#b0b0a8"/><circle cx="5.1" cy="21.5" r="0.9" fill="#6a7060"/><circle cx="20.5" cy="4.0" r="1.7" fill="#9a9a90"/><circle cx="8.5" cy="7.5" r="1.2" fill="#b0b0a8"/></svg><svg class="a" style="left:214px;top:181px" width="32" height="33" viewBox="0 0 32 33"><rect x="15.2" y="23.1" width="1.6" height="9.9" fill="#4a3a2a"/><path d="M16.0 0.7 C19.2 6.6 30.4 19.8 31.0 27.1 L1.0 27.1 C1.6 19.8 12.8 6.6 16.0 0.7 Z" fill="#6a7a30" opacity="0.55"/><circle cx="12.5" cy="15.7" r="2.0" fill="#8a9a40"/><circle cx="16.7" cy="8.8" r="1.3" fill="#aab858"/><circle cx="10.8" cy="26.0" r="1.8" fill="#c0c870"/><circle cx="10.9" cy="4.0" r="1.1" fill="#c0c870"/><circle cx="18.8" cy="21.5" r="1.7" fill="#6a7a30"/><circle cx="9.1" cy="18.0" r="1.4" fill="#6a7a30"/><circle cx="13.4" cy="2.6" r="0.9" fill="#8a9a40"/><circle cx="1.1" cy="26.5" r="2.0" fill="#6a7a30"/><circle cx="15.2" cy="5.0" r="1.8" fill="#6a7a30"/><circle cx="15.2" cy="1.7" r="1.2" fill="#c0c870"/><circle cx="28.5" cy="25.4" r="1.9" fill="#c0c870"/><circle cx="16.9" cy="11.0" r="1.9" fill="#8a9a40"/><circle cx="21.0" cy="5.8" r="0.8" fill="#aab858"/><circle cx="28.4" cy="20.7" r="2.0" fill="#c0c870"/><circle cx="23.6" cy="20.3" r="1.0" fill="#8a9a40"/><circle cx="9.4" cy="20.7" r="0.9" fill="#8a9a40"/><circle cx="18.8" cy="17.4" r="1.2" fill="#6a7a30"/><circle cx="11.1" cy="7.9" r="1.0" fill="#7a8a38"/><circle cx="11.1" cy="13.7" r="2.0" fill="#aab858"/><circle cx="8.1" cy="18.3" r="0.9" fill="#8a9a40"/><circle cx="8.9" cy="13.4" r="1.4" fill="#7a8a38"/><circle cx="4.9" cy="15.7" r="1.6" fill="#6a7a30"/><circle cx="15.3" cy="19.4" r="1.4" fill="#c0c870"/><circle cx="19.7" cy="5.1" r="1.0" fill="#aab858"/><circle cx="17.0" cy="11.1" r="1.6" fill="#7a8a38"/><circle cx="12.2" cy="12.4" r="1.1" fill="#6a7a30"/><circle cx="17.5" cy="6.7" r="1.9" fill="#c0c870"/><circle cx="11.5" cy="5.5" r="2.0" fill="#6a7a30"/><circle cx="19.7" cy="5.2" r="1.8" fill="#7a8a38"/><circle cx="22.0" cy="14.0" r="1.9" fill="#c0c870"/><circle cx="17.4" cy="5.2" r="1.9" fill="#c0c870"/><circle cx="23.2" cy="17.8" r="1.0" fill="#c0c870"/><circle cx="12.2" cy="7.9" r="1.9" fill="#7a8a38"/><circle cx="3.5" cy="23.9" r="1.3" fill="#aab858"/><circle cx="21.0" cy="17.7" r="2.0" fill="#c0c870"/><circle cx="24.9" cy="26.5" r="1.1" fill="#c0c870"/><circle cx="18.1" cy="26.0" r="1.3" fill="#c0c870"/><circle cx="24.8" cy="16.5" r="1.5" fill="#8a9a40"/><circle cx="16.8" cy="2.5" r="0.9" fill="#aab858"/><circle cx="12.8" cy="11.4" r="1.8" fill="#c0c870"/><circle cx="11.7" cy="4.2" r="1.4" fill="#aab858"/><circle cx="15.7" cy="14.0" r="1.3" fill="#7a8a38"/><circle cx="18.6" cy="21.3" r="1.4" fill="#aab858"/><circle cx="19.8" cy="4.1" r="0.9" fill="#aab858"/><circle cx="15.2" cy="14.4" r="1.1" fill="#7a8a38"/><circle cx="30.6" cy="25.7" r="1.4" fill="#c0c870"/><circle cx="18.5" cy="11.4" r="1.6" fill="#c0c870"/><circle cx="13.3" cy="3.6" r="1.6" fill="#6a7a30"/><circle cx="17.1" cy="1.9" r="1.1" fill="#7a8a38"/><circle cx="18.8" cy="12.7" r="1.0" fill="#8a9a40"/><circle cx="24.4" cy="16.5" r="1.7" fill="#c0c870"/><circle cx="11.4" cy="14.0" r="0.8" fill="#8a9a40"/><circle cx="20.5" cy="14.5" r="1.2" fill="#7a8a38"/><circle cx="23.9" cy="21.3" r="1.4" fill="#7a8a38"/><circle cx="7.0" cy="10.7" r="1.5" fill="#c0c870"/><circle cx="11.8" cy="5.1" r="1.6" fill="#c0c870"/><circle cx="16.7" cy="19.4" r="1.8" fill="#8a9a40"/><circle cx="2.5" cy="21.6" r="1.6" fill="#6a7a30"/><circle cx="12.7" cy="18.0" r="1.1" fill="#7a8a38"/><circle cx="9.7" cy="7.3" r="1.0" fill="#c0c870"/><circle cx="24.8" cy="14.0" r="1.9" fill="#7a8a38"/><circle cx="9.7" cy="20.6" r="1.7" fill="#c0c870"/><circle cx="23.6" cy="8.4" r="1.7" fill="#aab858"/><circle cx="6.6" cy="19.4" r="1.8" fill="#7a8a38"/><circle cx="3.6" cy="20.0" r="0.9" fill="#7a8a38"/><circle cx="8.3" cy="14.5" r="1.7" fill="#aab858"/><circle cx="11.5" cy="3.8" r="1.9" fill="#c0c870"/><circle cx="2.4" cy="20.9" r="0.9" fill="#c0c870"/><circle cx="24.6" cy="12.7" r="1.8" fill="#8a9a40"/><circle cx="9.9" cy="20.3" r="1.7" fill="#6a7a30"/></svg><svg class="a" style="left:252px;top:181px" width="32" height="33" viewBox="0 0 32 33"><rect x="15.2" y="23.1" width="1.6" height="9.9" fill="#4a3a2a"/><path d="M16.0 0.7 C19.2 6.6 30.4 19.8 31.0 27.1 L1.0 27.1 C1.6 19.8 12.8 6.6 16.0 0.7 Z" fill="#4a5a40" opacity="0.55"/><circle cx="18.6" cy="15.9" r="1.9" fill="#6a7a58"/><circle cx="11.5" cy="15.8" r="1.4" fill="#7a8a60"/><circle cx="8.4" cy="13.1" r="0.9" fill="#8a9878"/><circle cx="7.4" cy="12.5" r="1.2" fill="#6a7a58"/><circle cx="21.0" cy="5.4" r="1.6" fill="#a8b098"/><circle cx="16.1" cy="16.7" r="1.1" fill="#a8b098"/><circle cx="17.4" cy="21.2" r="1.9" fill="#8a9878"/><circle cx="7.2" cy="13.2" r="1.7" fill="#6a7a58"/><circle cx="23.8" cy="13.5" r="1.2" fill="#a8b098"/><circle cx="18.9" cy="8.2" r="1.4" fill="#7a8a60"/><circle cx="13.5" cy="6.7" r="1.3" fill="#6a7a58"/><circle cx="4.5" cy="27.0" r="1.9" fill="#8a9878"/><circle cx="8.6" cy="10.8" r="1.8" fill="#8a9878"/><circle cx="23.7" cy="12.0" r="0.8" fill="#7a8a60"/><circle cx="7.0" cy="10.8" r="1.7" fill="#7a8a60"/><circle cx="11.7" cy="6.1" r="0.9" fill="#8a9878"/><circle cx="19.9" cy="3.8" r="1.0" fill="#8a9878"/><circle cx="21.4" cy="7.3" r="1.1" fill="#4a5a40"/><circle cx="26.0" cy="17.5" r="1.5" fill="#a8b098"/><circle cx="6.8" cy="19.4" r="1.3" fill="#7a8a60"/><circle cx="9.6" cy="6.6" r="0.8" fill="#8a9878"/><circle cx="22.8" cy="17.6" r="1.5" fill="#7a8a60"/><circle cx="16.3" cy="24.6" r="1.5" fill="#4a5a40"/><circle cx="5.6" cy="15.3" r="1.2" fill="#7a8a60"/><circle cx="12.8" cy="4.9" r="1.7" fill="#8a9878"/><circle cx="21.3" cy="21.8" r="1.1" fill="#6a7a58"/><circle cx="2.8" cy="20.8" r="1.1" fill="#7a8a60"/><circle cx="19.4" cy="4.4" r="1.8" fill="#8a9878"/><circle cx="7.6" cy="8.6" r="1.0" fill="#6a7a58"/><circle cx="13.4" cy="17.5" r="1.9" fill="#7a8a60"/><circle cx="8.5" cy="6.7" r="1.2" fill="#8a9878"/><circle cx="19.2" cy="3.5" r="1.4" fill="#4a5a40"/><circle cx="11.0" cy="12.4" r="1.0" fill="#8a9878"/><circle cx="11.6" cy="14.0" r="1.3" fill="#7a8a60"/><circle cx="27.7" cy="24.1" r="0.8" fill="#6a7a58"/><circle cx="16.7" cy="10.5" r="1.2" fill="#4a5a40"/><circle cx="17.9" cy="24.6" r="1.3" fill="#6a7a58"/><circle cx="19.4" cy="8.1" r="1.7" fill="#4a5a40"/><circle cx="27.0" cy="18.7" r="1.3" fill="#7a8a60"/><circle cx="23.9" cy="9.1" r="0.8" fill="#6a7a58"/><circle cx="28.7" cy="22.1" r="2.0" fill="#7a8a60"/><circle cx="23.7" cy="20.6" r="1.0" fill="#4a5a40"/><circle cx="3.9" cy="21.2" r="1.7" fill="#a8b098"/><circle cx="23.3" cy="9.1" r="1.1" fill="#8a9878"/><circle cx="23.0" cy="6.8" r="1.4" fill="#a8b098"/><circle cx="17.9" cy="2.7" r="1.3" fill="#8a9878"/><circle cx="22.9" cy="22.6" r="0.8" fill="#7a8a60"/><circle cx="11.8" cy="22.7" r="1.9" fill="#4a5a40"/><circle cx="12.0" cy="25.8" r="1.7" fill="#8a9878"/><circle cx="25.8" cy="18.5" r="1.5" fill="#a8b098"/><circle cx="10.0" cy="5.1" r="0.9" fill="#8a9878"/><circle cx="11.8" cy="20.8" r="0.8" fill="#a8b098"/><circle cx="11.2" cy="26.0" r="0.8" fill="#8a9878"/><circle cx="23.1" cy="19.1" r="1.1" fill="#7a8a60"/><circle cx="17.3" cy="12.5" r="1.3" fill="#6a7a58"/><circle cx="23.7" cy="19.5" r="1.3" fill="#6a7a58"/><circle cx="18.4" cy="5.7" r="1.0" fill="#7a8a60"/><circle cx="11.8" cy="4.8" r="1.9" fill="#a8b098"/><circle cx="8.7" cy="7.9" r="1.4" fill="#a8b098"/><circle cx="21.6" cy="10.3" r="1.8" fill="#a8b098"/><circle cx="19.1" cy="7.7" r="1.7" fill="#8a9878"/><circle cx="21.1" cy="22.4" r="1.5" fill="#a8b098"/><circle cx="23.4" cy="18.5" r="1.0" fill="#8a9878"/><circle cx="9.5" cy="8.9" r="1.2" fill="#6a7a58"/><circle cx="9.2" cy="20.1" r="1.6" fill="#6a7a58"/><circle cx="2.3" cy="25.2" r="1.8" fill="#7a8a60"/><circle cx="13.3" cy="10.1" r="1.5" fill="#8a9878"/><circle cx="17.0" cy="9.0" r="0.9" fill="#a8b098"/><circle cx="16.7" cy="1.8" r="1.4" fill="#4a5a40"/><circle cx="14.9" cy="7.3" r="1.8" fill="#8a9878"/></svg><svg class="a" style="left:290px;top:181px" width="32" height="33" viewBox="0 0 32 33"><rect x="15.2" y="23.1" width="1.6" height="9.9" fill="#4a3a2a"/><path d="M16.0 0.7 C19.2 6.6 30.4 19.8 31.0 27.1 L1.0 27.1 C1.6 19.8 12.8 6.6 16.0 0.7 Z" fill="#3a5a28" opacity="0.55"/><circle cx="16.1" cy="4.0" r="1.5" fill="#4a6a30"/><circle cx="14.5" cy="9.2" r="0.8" fill="#5a7a38"/><circle cx="5.5" cy="18.8" r="1.0" fill="#5a7a38"/><circle cx="14.8" cy="19.7" r="0.9" fill="#4a6a30"/><circle cx="12.8" cy="18.7" r="1.0" fill="#4a6a30"/><circle cx="28.8" cy="18.9" r="1.6" fill="#9ab060"/><circle cx="14.3" cy="2.0" r="1.2" fill="#5a7a38"/><circle cx="14.3" cy="3.1" r="0.8" fill="#4a6a30"/><circle cx="11.7" cy="4.1" r="1.7" fill="#5a7a38"/><circle cx="23.3" cy="6.2" r="1.1" fill="#9ab060"/><circle cx="18.5" cy="9.0" r="0.8" fill="#9ab060"/><circle cx="9.6" cy="26.7" r="1.9" fill="#4a6a30"/><circle cx="17.3" cy="1.7" r="1.1" fill="#3a5a28"/><circle cx="24.7" cy="10.3" r="1.5" fill="#4a6a30"/><circle cx="18.7" cy="14.5" r="1.4" fill="#5a7a38"/><circle cx="19.7" cy="5.8" r="1.9" fill="#5a7a38"/><circle cx="23.9" cy="14.4" r="0.9" fill="#9ab060"/><circle cx="18.6" cy="7.2" r="1.4" fill="#9ab060"/><circle cx="12.0" cy="18.8" r="1.9" fill="#5a7a38"/><circle cx="10.5" cy="11.0" r="1.5" fill="#9ab060"/><circle cx="23.1" cy="15.2" r="1.0" fill="#7a9a48"/><circle cx="25.8" cy="18.1" r="1.5" fill="#3a5a28"/><circle cx="25.0" cy="13.9" r="1.8" fill="#7a9a48"/><circle cx="20.5" cy="9.7" r="1.2" fill="#5a7a38"/><circle cx="25.1" cy="24.6" r="1.4" fill="#9ab060"/><circle cx="6.7" cy="16.7" r="1.8" fill="#3a5a28"/><circle cx="19.9" cy="18.6" r="1.2" fill="#7a9a48"/><circle cx="19.7" cy="19.2" r="1.8" fill="#4a6a30"/><circle cx="11.4" cy="3.1" r="1.9" fill="#7a9a48"/><circle cx="22.9" cy="8.0" r="1.5" fill="#7a9a48"/><circle cx="13.8" cy="9.5" r="1.7" fill="#4a6a30"/><circle cx="13.7" cy="4.7" r="1.9" fill="#9ab060"/><circle cx="15.0" cy="2.7" r="1.5" fill="#9ab060"/><circle cx="14.9" cy="18.9" r="0.9" fill="#9ab060"/><circle cx="16.1" cy="8.1" r="1.4" fill="#3a5a28"/><circle cx="26.6" cy="23.3" r="1.2" fill="#5a7a38"/><circle cx="17.8" cy="3.0" r="1.3" fill="#3a5a28"/><circle cx="6.9" cy="12.4" r="1.8" fill="#3a5a28"/><circle cx="22.0" cy="10.5" r="1.2" fill="#5a7a38"/><circle cx="21.5" cy="7.2" r="0.9" fill="#4a6a30"/><circle cx="24.1" cy="17.6" r="1.7" fill="#5a7a38"/><circle cx="10.9" cy="14.3" r="1.4" fill="#4a6a30"/><circle cx="20.0" cy="7.5" r="1.8" fill="#9ab060"/><circle cx="25.1" cy="13.0" r="1.6" fill="#3a5a28"/><circle cx="19.8" cy="23.9" r="1.9" fill="#5a7a38"/><circle cx="25.0" cy="25.5" r="1.4" fill="#4a6a30"/><circle cx="14.8" cy="24.3" r="0.9" fill="#7a9a48"/><circle cx="18.4" cy="4.2" r="1.1" fill="#4a6a30"/><circle cx="12.3" cy="10.3" r="1.2" fill="#4a6a30"/><circle cx="22.9" cy="7.0" r="1.1" fill="#3a5a28"/><circle cx="28.5" cy="23.0" r="1.9" fill="#4a6a30"/><circle cx="22.9" cy="13.3" r="1.3" fill="#7a9a48"/><circle cx="26.1" cy="20.9" r="1.9" fill="#7a9a48"/><circle cx="19.2" cy="20.1" r="1.8" fill="#4a6a30"/><circle cx="19.8" cy="2.9" r="1.1" fill="#3a5a28"/><circle cx="25.2" cy="10.3" r="1.5" fill="#5a7a38"/><circle cx="17.3" cy="9.1" r="1.6" fill="#3a5a28"/><circle cx="12.8" cy="15.6" r="1.6" fill="#4a6a30"/><circle cx="21.0" cy="15.0" r="1.8" fill="#3a5a28"/><circle cx="6.2" cy="17.7" r="1.9" fill="#7a9a48"/><circle cx="17.4" cy="6.9" r="1.9" fill="#3a5a28"/><circle cx="9.5" cy="23.4" r="1.3" fill="#3a5a28"/><circle cx="16.3" cy="4.8" r="1.4" fill="#3a5a28"/><circle cx="21.3" cy="22.3" r="1.5" fill="#4a6a30"/><circle cx="11.7" cy="25.1" r="0.9" fill="#3a5a28"/><circle cx="22.1" cy="12.8" r="0.9" fill="#3a5a28"/><circle cx="20.2" cy="8.2" r="2.0" fill="#7a9a48"/><circle cx="14.9" cy="26.9" r="1.1" fill="#5a7a38"/><circle cx="18.5" cy="3.4" r="1.0" fill="#3a5a28"/><circle cx="19.1" cy="7.5" r="1.6" fill="#3a5a28"/></svg><svg class="a" style="left:328px;top:181px" width="32" height="33" viewBox="0 0 32 33"><rect x="15.0" y="18.2" width="2" height="14.8" fill="#4a3a2a"/><ellipse cx="16.0" cy="13.2" rx="15.4" ry="9.9" fill="#3a6030"/><circle cx="26.7" cy="19.5" r="2.5" fill="#4a7a3a"/><circle cx="21.6" cy="15.5" r="2.8" fill="#5a8a48"/><circle cx="5.7" cy="8.5" r="2.0" fill="#385a30"/><circle cx="13.4" cy="18.7" r="1.4" fill="#2a4a22"/><circle cx="11.3" cy="22.0" r="2.0" fill="#2a4a22"/><circle cx="19.8" cy="4.3" r="2.4" fill="#4a7a3a"/><circle cx="28.2" cy="12.0" r="1.7" fill="#4a7a3a"/><circle cx="16.0" cy="16.9" r="2.7" fill="#385a30"/><circle cx="14.8" cy="9.1" r="1.3" fill="#385a30"/><circle cx="21.1" cy="13.1" r="2.9" fill="#3a6030"/><circle cx="17.3" cy="6.2" r="1.9" fill="#385a30"/><circle cx="13.0" cy="17.9" r="2.3" fill="#385a30"/><circle cx="5.9" cy="13.7" r="1.5" fill="#4a7a3a"/><circle cx="14.6" cy="10.6" r="1.6" fill="#2a4a22"/><circle cx="20.1" cy="18.8" r="1.4" fill="#385a30"/><circle cx="24.4" cy="16.2" r="2.2" fill="#385a30"/><circle cx="12.6" cy="14.5" r="2.9" fill="#4a7a3a"/><circle cx="8.8" cy="7.2" r="2.2" fill="#3a6030"/><circle cx="14.8" cy="15.2" r="2.7" fill="#3a6030"/><circle cx="11.3" cy="5.1" r="1.8" fill="#385a30"/><circle cx="8.7" cy="6.7" r="1.7" fill="#385a30"/><circle cx="13.9" cy="22.0" r="2.1" fill="#2a4a22"/><circle cx="7.8" cy="12.3" r="1.7" fill="#385a30"/><circle cx="14.0" cy="10.9" r="2.8" fill="#385a30"/><circle cx="19.4" cy="11.1" r="1.6" fill="#5a8a48"/><circle cx="24.0" cy="10.7" r="1.3" fill="#3a6030"/><circle cx="7.8" cy="8.9" r="2.0" fill="#3a6030"/><circle cx="10.8" cy="18.8" r="2.0" fill="#3a6030"/><circle cx="17.3" cy="15.6" r="2.8" fill="#4a7a3a"/><circle cx="7.6" cy="15.6" r="2.1" fill="#5a8a48"/><circle cx="28.7" cy="16.6" r="1.4" fill="#5a8a48"/><circle cx="26.2" cy="17.0" r="2.5" fill="#2a4a22"/><circle cx="12.9" cy="12.5" r="2.0" fill="#4a7a3a"/><circle cx="27.2" cy="15.7" r="1.8" fill="#5a8a48"/><circle cx="5.7" cy="12.5" r="2.5" fill="#2a4a22"/><circle cx="16.0" cy="11.4" r="2.8" fill="#2a4a22"/><circle cx="12.7" cy="6.5" r="1.2" fill="#3a6030"/><circle cx="12.0" cy="5.0" r="1.6" fill="#3a6030"/><circle cx="18.5" cy="10.0" r="2.3" fill="#3a6030"/><circle cx="16.1" cy="13.4" r="1.5" fill="#3a6030"/><circle cx="28.9" cy="9.5" r="1.2" fill="#2a4a22"/><circle cx="3.4" cy="14.0" r="3.0" fill="#4a7a3a"/><circle cx="7.8" cy="19.2" r="1.4" fill="#2a4a22"/><circle cx="10.1" cy="13.4" r="2.1" fill="#5a8a48"/><circle cx="26.7" cy="16.9" r="2.8" fill="#3a6030"/><circle cx="21.5" cy="7.2" r="2.1" fill="#3a6030"/><circle cx="2.1" cy="10.3" r="2.7" fill="#2a4a22"/><circle cx="9.4" cy="19.2" r="2.5" fill="#4a7a3a"/><circle cx="24.5" cy="19.8" r="2.5" fill="#5a8a48"/><circle cx="10.1" cy="9.5" r="1.9" fill="#2a4a22"/></svg><svg class="a" style="left:366px;top:181px" width="32" height="33" viewBox="0 0 32 33"><rect x="15.2" y="23.1" width="1.6" height="9.9" fill="#4a3a2a"/><path d="M16.0 0.7 C19.2 6.6 30.4 19.8 31.0 27.1 L1.0 27.1 C1.6 19.8 12.8 6.6 16.0 0.7 Z" fill="#5a7a30" opacity="0.55"/><circle cx="25.9" cy="25.2" r="1.3" fill="#5a7a30"/><circle cx="15.3" cy="2.1" r="1.5" fill="#5a7a30"/><circle cx="7.9" cy="14.8" r="1.1" fill="#b8c870"/><circle cx="6.0" cy="23.4" r="1.1" fill="#9ab858"/><circle cx="11.0" cy="12.6" r="1.0" fill="#7a9a40"/><circle cx="8.6" cy="25.2" r="1.8" fill="#5a7a30"/><circle cx="11.3" cy="4.3" r="1.1" fill="#9ab858"/><circle cx="12.7" cy="23.2" r="0.9" fill="#6a8a38"/><circle cx="23.1" cy="6.7" r="1.1" fill="#6a8a38"/><circle cx="22.8" cy="20.4" r="0.8" fill="#b8c870"/><circle cx="16.1" cy="4.0" r="1.1" fill="#b8c870"/><circle cx="11.3" cy="17.3" r="0.8" fill="#9ab858"/><circle cx="13.4" cy="11.9" r="2.0" fill="#5a7a30"/><circle cx="24.9" cy="11.4" r="2.0" fill="#7a9a40"/><circle cx="15.9" cy="21.4" r="1.0" fill="#9ab858"/><circle cx="18.6" cy="15.5" r="1.1" fill="#b8c870"/><circle cx="20.7" cy="3.2" r="1.4" fill="#b8c870"/><circle cx="7.5" cy="24.1" r="1.7" fill="#5a7a30"/><circle cx="7.1" cy="13.9" r="1.8" fill="#6a8a38"/><circle cx="23.1" cy="20.3" r="0.8" fill="#b8c870"/><circle cx="20.1" cy="5.2" r="1.3" fill="#b8c870"/><circle cx="14.0" cy="4.8" r="1.4" fill="#7a9a40"/><circle cx="12.3" cy="23.0" r="1.8" fill="#b8c870"/><circle cx="25.0" cy="14.3" r="1.0" fill="#9ab858"/><circle cx="13.4" cy="2.3" r="0.8" fill="#b8c870"/><circle cx="12.5" cy="7.5" r="1.8" fill="#7a9a40"/><circle cx="25.7" cy="22.4" r="0.9" fill="#7a9a40"/><circle cx="7.4" cy="14.9" r="1.5" fill="#b8c870"/><circle cx="16.1" cy="1.7" r="1.8" fill="#9ab858"/><circle cx="18.1" cy="3.6" r="0.8" fill="#5a7a30"/><circle cx="15.0" cy="7.1" r="0.9" fill="#6a8a38"/><circle cx="28.5" cy="25.3" r="0.8" fill="#7a9a40"/><circle cx="10.9" cy="19.3" r="1.3" fill="#6a8a38"/><circle cx="23.4" cy="9.2" r="1.1" fill="#b8c870"/><circle cx="9.3" cy="25.7" r="1.5" fill="#7a9a40"/><circle cx="6.5" cy="11.6" r="1.2" fill="#5a7a30"/><circle cx="12.5" cy="19.6" r="1.2" fill="#6a8a38"/><circle cx="7.6" cy="25.8" r="1.9" fill="#6a8a38"/><circle cx="17.0" cy="1.8" r="1.0" fill="#6a8a38"/><circle cx="4.4" cy="16.1" r="1.8" fill="#b8c870"/><circle cx="16.1" cy="3.3" r="1.9" fill="#9ab858"/><circle cx="27.3" cy="18.9" r="1.7" fill="#5a7a30"/><circle cx="13.9" cy="10.3" r="1.2" fill="#9ab858"/><circle cx="23.7" cy="19.9" r="1.5" fill="#5a7a30"/><circle cx="17.1" cy="16.5" r="1.4" fill="#b8c870"/><circle cx="13.8" cy="24.6" r="1.4" fill="#6a8a38"/><circle cx="6.9" cy="15.1" r="1.5" fill="#5a7a30"/><circle cx="29.7" cy="24.3" r="1.1" fill="#7a9a40"/><circle cx="23.4" cy="16.2" r="1.5" fill="#b8c870"/><circle cx="27.2" cy="22.2" r="1.4" fill="#5a7a30"/><circle cx="15.7" cy="22.4" r="1.0" fill="#6a8a38"/><circle cx="2.8" cy="19.7" r="1.0" fill="#7a9a40"/><circle cx="18.7" cy="9.3" r="1.2" fill="#5a7a30"/><circle cx="8.4" cy="19.9" r="1.6" fill="#9ab858"/><circle cx="9.5" cy="8.3" r="1.4" fill="#6a8a38"/><circle cx="24.9" cy="13.1" r="1.1" fill="#b8c870"/><circle cx="24.3" cy="8.8" r="1.6" fill="#6a8a38"/><circle cx="23.0" cy="14.2" r="1.6" fill="#9ab858"/><circle cx="24.3" cy="13.7" r="1.8" fill="#b8c870"/><circle cx="17.4" cy="25.2" r="1.9" fill="#9ab858"/><circle cx="11.2" cy="9.1" r="0.9" fill="#7a9a40"/><circle cx="11.8" cy="12.0" r="1.8" fill="#9ab858"/><circle cx="31.1" cy="27.0" r="1.7" fill="#b8c870"/><circle cx="7.1" cy="10.1" r="0.9" fill="#7a9a40"/><circle cx="14.8" cy="11.2" r="1.8" fill="#5a7a30"/><circle cx="13.7" cy="4.9" r="1.3" fill="#5a7a30"/><circle cx="12.4" cy="22.7" r="1.3" fill="#9ab858"/><circle cx="8.2" cy="17.7" r="1.3" fill="#b8c870"/><circle cx="18.4" cy="12.1" r="1.1" fill="#b8c870"/><circle cx="17.8" cy="20.0" r="1.6" fill="#5a7a30"/></svg><svg class="a" style="left:404px;top:181px" width="32" height="33" viewBox="0 0 32 33"><rect x="15.2" y="23.1" width="1.6" height="9.9" fill="#4a3a2a"/><path d="M16.0 0.7 C19.2 6.6 30.4 19.8 31.0 27.1 L1.0 27.1 C1.6 19.8 12.8 6.6 16.0 0.7 Z" fill="#5a6a48" opacity="0.55"/><circle cx="13.8" cy="25.3" r="1.5" fill="#5a6a48"/><circle cx="8.7" cy="13.4" r="0.9" fill="#b0b8a0"/><circle cx="24.2" cy="15.8" r="1.9" fill="#5a6a48"/><circle cx="15.1" cy="3.3" r="1.5" fill="#7a8a68"/><circle cx="19.6" cy="4.5" r="1.0" fill="#5a6a48"/><circle cx="7.5" cy="22.9" r="1.3" fill="#6a7a58"/><circle cx="16.1" cy="1.8" r="1.6" fill="#6a7a58"/><circle cx="15.7" cy="23.8" r="1.8" fill="#6a7a58"/><circle cx="13.1" cy="16.0" r="1.6" fill="#b0b8a0"/><circle cx="16.8" cy="26.1" r="1.6" fill="#b0b8a0"/><circle cx="21.7" cy="12.2" r="1.7" fill="#98a888"/><circle cx="10.5" cy="7.8" r="0.9" fill="#98a888"/><circle cx="10.8" cy="25.2" r="1.7" fill="#6a7a58"/><circle cx="9.0" cy="15.8" r="2.0" fill="#7a8a68"/><circle cx="23.4" cy="19.8" r="0.9" fill="#98a888"/><circle cx="9.2" cy="11.1" r="1.0" fill="#6a7a58"/><circle cx="17.1" cy="7.2" r="1.6" fill="#98a888"/><circle cx="13.0" cy="17.3" r="0.9" fill="#7a8a68"/><circle cx="8.4" cy="24.2" r="1.6" fill="#6a7a58"/><circle cx="13.3" cy="16.8" r="1.6" fill="#6a7a58"/><circle cx="14.8" cy="21.4" r="1.7" fill="#7a8a68"/><circle cx="14.6" cy="2.5" r="1.5" fill="#98a888"/><circle cx="19.7" cy="21.1" r="1.4" fill="#98a888"/><circle cx="5.3" cy="20.4" r="1.5" fill="#98a888"/><circle cx="5.5" cy="19.0" r="1.9" fill="#7a8a68"/><circle cx="19.6" cy="7.9" r="0.8" fill="#98a888"/><circle cx="11.0" cy="26.2" r="0.8" fill="#98a888"/><circle cx="26.1" cy="23.9" r="1.2" fill="#6a7a58"/><circle cx="14.0" cy="2.8" r="0.9" fill="#b0b8a0"/><circle cx="20.8" cy="10.2" r="1.8" fill="#6a7a58"/><circle cx="13.8" cy="22.5" r="2.0" fill="#b0b8a0"/><circle cx="11.6" cy="7.2" r="1.5" fill="#b0b8a0"/><circle cx="9.6" cy="7.2" r="0.9" fill="#7a8a68"/><circle cx="5.1" cy="23.7" r="2.0" fill="#6a7a58"/><circle cx="3.8" cy="23.6" r="1.9" fill="#6a7a58"/><circle cx="12.1" cy="3.7" r="1.7" fill="#b0b8a0"/><circle cx="15.2" cy="3.5" r="1.4" fill="#7a8a68"/><circle cx="20.6" cy="26.4" r="1.6" fill="#6a7a58"/><circle cx="6.4" cy="19.3" r="1.7" fill="#98a888"/><circle cx="12.6" cy="21.8" r="1.3" fill="#5a6a48"/><circle cx="12.5" cy="4.8" r="1.3" fill="#b0b8a0"/><circle cx="12.0" cy="10.7" r="1.8" fill="#5a6a48"/><circle cx="8.1" cy="11.2" r="1.7" fill="#7a8a68"/><circle cx="22.0" cy="8.4" r="1.8" fill="#7a8a68"/><circle cx="15.5" cy="2.1" r="1.1" fill="#b0b8a0"/><circle cx="11.4" cy="8.6" r="1.9" fill="#6a7a58"/><circle cx="3.9" cy="17.6" r="1.5" fill="#b0b8a0"/><circle cx="12.6" cy="12.3" r="1.6" fill="#98a888"/><circle cx="9.5" cy="12.9" r="1.4" fill="#5a6a48"/><circle cx="18.5" cy="5.4" r="1.4" fill="#5a6a48"/><circle cx="22.8" cy="15.1" r="1.8" fill="#b0b8a0"/><circle cx="14.4" cy="2.8" r="1.8" fill="#6a7a58"/><circle cx="15.8" cy="10.0" r="1.4" fill="#b0b8a0"/><circle cx="20.0" cy="9.3" r="1.3" fill="#6a7a58"/><circle cx="14.0" cy="1.9" r="1.4" fill="#98a888"/><circle cx="8.3" cy="10.8" r="1.2" fill="#5a6a48"/><circle cx="13.8" cy="5.9" r="1.6" fill="#6a7a58"/><circle cx="9.9" cy="13.6" r="1.7" fill="#b0b8a0"/><circle cx="16.8" cy="20.0" r="1.4" fill="#6a7a58"/><circle cx="12.2" cy="26.2" r="1.6" fill="#98a888"/><circle cx="13.0" cy="10.3" r="1.3" fill="#98a888"/><circle cx="10.9" cy="12.1" r="1.9" fill="#5a6a48"/><circle cx="10.7" cy="21.9" r="1.1" fill="#5a6a48"/><circle cx="29.4" cy="21.2" r="1.2" fill="#5a6a48"/><circle cx="23.7" cy="10.1" r="1.5" fill="#7a8a68"/><circle cx="11.4" cy="11.4" r="1.2" fill="#98a888"/><circle cx="28.1" cy="25.6" r="1.0" fill="#6a7a58"/><circle cx="11.7" cy="16.6" r="0.9" fill="#7a8a68"/><circle cx="21.7" cy="21.8" r="1.3" fill="#5a6a48"/><circle cx="22.3" cy="5.7" r="1.4" fill="#5a6a48"/></svg><svg class="a" style="left:62px;top:217px" width="32" height="33" viewBox="0 0 32 33"><rect x="15.0" y="5.0" width="2" height="28.1" fill="#4a3a2a"/><ellipse cx="15.9" cy="4.5" rx="8.8" ry="2.5" fill="#4a5a20"/><ellipse cx="15.9" cy="3.3" rx="8.4" ry="2.0" fill="#7a9a28"/><circle cx="18.8" cy="2.6" r="1.0" fill="#aac848"/><circle cx="15.1" cy="2.7" r="1.3" fill="#5a7a20"/><circle cx="12.6" cy="2.6" r="1.5" fill="#5a7a20"/><circle cx="21.8" cy="3.6" r="0.9" fill="#aac848"/><circle cx="14.8" cy="3.7" r="0.9" fill="#9ab838"/><circle cx="11.6" cy="1.8" r="1.6" fill="#9ab838"/><circle cx="19.7" cy="3.3" r="1.5" fill="#9ab838"/><circle cx="18.6" cy="3.5" r="1.3" fill="#5a7a20"/><ellipse cx="16.1" cy="10.1" rx="12.0" ry="2.5" fill="#4a5a20"/><ellipse cx="16.1" cy="8.9" rx="11.4" ry="2.0" fill="#7a9a28"/><circle cx="22.3" cy="7.9" r="0.9" fill="#5a7a20"/><circle cx="20.4" cy="8.6" r="1.5" fill="#9ab838"/><circle cx="23.8" cy="8.1" r="1.5" fill="#5a7a20"/><circle cx="10.1" cy="9.3" r="1.3" fill="#5a7a20"/><circle cx="22.5" cy="9.2" r="1.4" fill="#5a7a20"/><circle cx="15.0" cy="7.5" r="1.1" fill="#9ab838"/><circle cx="13.3" cy="8.8" r="1.4" fill="#9ab838"/><circle cx="7.1" cy="8.9" r="1.4" fill="#aac848"/><ellipse cx="16.3" cy="15.7" rx="13.6" ry="2.5" fill="#4a5a20"/><ellipse cx="16.3" cy="14.5" rx="12.9" ry="2.0" fill="#7a9a28"/><circle cx="8.9" cy="14.9" r="0.8" fill="#aac848"/><circle cx="26.1" cy="14.1" r="0.9" fill="#5a7a20"/><circle cx="27.0" cy="14.9" r="1.0" fill="#5a7a20"/><circle cx="22.0" cy="14.6" r="1.3" fill="#5a7a20"/><circle cx="6.5" cy="14.0" r="0.9" fill="#9ab838"/><circle cx="24.1" cy="13.9" r="1.5" fill="#5a7a20"/><circle cx="15.2" cy="13.2" r="1.4" fill="#5a7a20"/><circle cx="6.3" cy="14.4" r="1.0" fill="#9ab838"/><ellipse cx="15.6" cy="21.3" rx="14.4" ry="2.5" fill="#4a5a20"/><ellipse cx="15.6" cy="20.1" rx="13.7" ry="2.0" fill="#7a9a28"/><circle cx="25.7" cy="19.1" r="0.9" fill="#aac848"/><circle cx="17.9" cy="19.1" r="1.3" fill="#5a7a20"/><circle cx="8.3" cy="19.2" r="1.1" fill="#aac848"/><circle cx="20.4" cy="18.8" r="1.1" fill="#aac848"/><circle cx="4.4" cy="20.5" r="1.0" fill="#9ab838"/><circle cx="22.5" cy="18.7" r="1.1" fill="#9ab838"/><circle cx="21.5" cy="19.3" r="1.2" fill="#9ab838"/><circle cx="25.8" cy="20.1" r="0.9" fill="#5a7a20"/><ellipse cx="16.1" cy="26.9" rx="16.0" ry="2.5" fill="#4a5a20"/><ellipse cx="16.1" cy="25.7" rx="15.2" ry="2.0" fill="#7a9a28"/><circle cx="10.1" cy="24.5" r="0.9" fill="#9ab838"/><circle cx="23.1" cy="25.3" r="1.0" fill="#aac848"/><circle cx="26.6" cy="25.0" r="1.0" fill="#9ab838"/><circle cx="21.6" cy="25.4" r="1.2" fill="#9ab838"/><circle cx="26.7" cy="25.3" r="1.5" fill="#5a7a20"/><circle cx="21.0" cy="25.4" r="1.3" fill="#9ab838"/><circle cx="24.9" cy="24.5" r="0.9" fill="#9ab838"/><circle cx="20.5" cy="26.1" r="0.9" fill="#9ab838"/></svg><svg class="a" style="left:100px;top:217px" width="32" height="33" viewBox="0 0 32 33"><rect x="15.0" y="5.0" width="2" height="28.1" fill="#4a3a2a"/><ellipse cx="17.4" cy="4.5" rx="8.8" ry="2.5" fill="#4a5a20"/><ellipse cx="17.4" cy="3.3" rx="8.4" ry="2.0" fill="#7a9a28"/><circle cx="19.0" cy="3.7" r="1.1" fill="#9ab838"/><circle cx="15.0" cy="2.8" r="1.4" fill="#aac848"/><circle cx="19.2" cy="3.4" r="0.9" fill="#9ab838"/><circle cx="23.6" cy="2.6" r="1.2" fill="#aac848"/><circle cx="10.7" cy="2.9" r="0.8" fill="#9ab838"/><circle cx="16.5" cy="2.6" r="1.4" fill="#9ab838"/><circle cx="12.5" cy="2.8" r="1.3" fill="#aac848"/><circle cx="23.0" cy="3.7" r="1.2" fill="#9ab838"/><ellipse cx="15.9" cy="10.1" rx="12.0" ry="2.5" fill="#4a5a20"/><ellipse cx="15.9" cy="8.9" rx="11.4" ry="2.0" fill="#7a9a28"/><circle cx="15.0" cy="7.9" r="0.8" fill="#9ab838"/><circle cx="21.2" cy="7.5" r="1.1" fill="#aac848"/><circle cx="23.6" cy="9.1" r="1.1" fill="#aac848"/><circle cx="8.9" cy="9.3" r="1.0" fill="#9ab838"/><circle cx="25.0" cy="8.2" r="0.8" fill="#5a7a20"/><circle cx="16.9" cy="7.8" r="1.3" fill="#aac848"/><circle cx="21.6" cy="9.4" r="1.2" fill="#aac848"/><circle cx="22.1" cy="8.0" r="1.4" fill="#9ab838"/><ellipse cx="16.4" cy="15.7" rx="13.6" ry="2.5" fill="#4a5a20"/><ellipse cx="16.4" cy="14.5" rx="12.9" ry="2.0" fill="#7a9a28"/><circle cx="9.4" cy="14.9" r="1.0" fill="#5a7a20"/><circle cx="7.3" cy="14.7" r="1.5" fill="#5a7a20"/><circle cx="22.3" cy="13.5" r="1.3" fill="#5a7a20"/><circle cx="24.5" cy="13.3" r="1.0" fill="#9ab838"/><circle cx="7.6" cy="14.4" r="1.2" fill="#aac848"/><circle cx="9.8" cy="13.8" r="1.5" fill="#9ab838"/><circle cx="25.4" cy="13.7" r="0.8" fill="#5a7a20"/><circle cx="18.5" cy="14.3" r="1.2" fill="#9ab838"/><ellipse cx="15.1" cy="21.3" rx="14.4" ry="2.5" fill="#4a5a20"/><ellipse cx="15.1" cy="20.1" rx="13.7" ry="2.0" fill="#7a9a28"/><circle cx="24.5" cy="19.1" r="1.3" fill="#aac848"/><circle cx="26.1" cy="19.4" r="1.5" fill="#5a7a20"/><circle cx="10.7" cy="18.7" r="1.0" fill="#5a7a20"/><circle cx="5.3" cy="20.0" r="1.1" fill="#aac848"/><circle cx="26.3" cy="20.6" r="1.5" fill="#5a7a20"/><circle cx="11.8" cy="19.0" r="1.5" fill="#aac848"/><circle cx="5.9" cy="18.9" r="1.3" fill="#9ab838"/><circle cx="11.5" cy="18.7" r="1.5" fill="#9ab838"/><ellipse cx="16.2" cy="26.9" rx="16.0" ry="2.5" fill="#4a5a20"/><ellipse cx="16.2" cy="25.7" rx="15.2" ry="2.0" fill="#7a9a28"/><circle cx="26.0" cy="25.5" r="1.1" fill="#5a7a20"/><circle cx="24.7" cy="26.0" r="1.3" fill="#9ab838"/><circle cx="25.5" cy="24.5" r="1.3" fill="#9ab838"/><circle cx="19.4" cy="25.3" r="1.4" fill="#aac848"/><circle cx="11.6" cy="25.6" r="0.9" fill="#9ab838"/><circle cx="20.3" cy="24.3" r="1.3" fill="#5a7a20"/><circle cx="18.4" cy="25.1" r="1.0" fill="#5a7a20"/><circle cx="23.9" cy="24.8" r="1.6" fill="#5a7a20"/></svg><svg class="a" style="left:138px;top:217px" width="32" height="33" viewBox="0 0 32 33"><rect x="15.0" y="5.0" width="2" height="28.1" fill="#4a3a2a"/><ellipse cx="15.1" cy="4.5" rx="8.8" ry="2.5" fill="#4a5a20"/><ellipse cx="15.1" cy="3.3" rx="8.4" ry="2.0" fill="#7a9a28"/><circle cx="18.7" cy="3.6" r="1.2" fill="#9ab838"/><circle cx="21.3" cy="2.4" r="0.8" fill="#5a7a20"/><circle cx="10.4" cy="2.1" r="1.4" fill="#9ab838"/><circle cx="12.8" cy="2.4" r="1.4" fill="#5a7a20"/><circle cx="14.7" cy="3.3" r="1.4" fill="#aac848"/><circle cx="14.4" cy="2.5" r="1.2" fill="#aac848"/><circle cx="14.8" cy="2.1" r="1.2" fill="#9ab838"/><circle cx="9.8" cy="2.3" r="0.9" fill="#9ab838"/><ellipse cx="16.7" cy="10.1" rx="12.0" ry="2.5" fill="#4a5a20"/><ellipse cx="16.7" cy="8.9" rx="11.4" ry="2.0" fill="#7a9a28"/><circle cx="19.3" cy="9.1" r="1.0" fill="#aac848"/><circle cx="8.8" cy="7.5" r="1.4" fill="#aac848"/><circle cx="25.8" cy="9.4" r="0.8" fill="#9ab838"/><circle cx="18.3" cy="8.9" r="1.4" fill="#5a7a20"/><circle cx="9.5" cy="8.6" r="1.3" fill="#5a7a20"/><circle cx="11.5" cy="7.5" r="0.8" fill="#aac848"/><circle cx="15.8" cy="8.1" r="1.5" fill="#aac848"/><circle cx="22.8" cy="8.6" r="1.5" fill="#5a7a20"/><ellipse cx="15.0" cy="15.7" rx="13.6" ry="2.5" fill="#4a5a20"/><ellipse cx="15.0" cy="14.5" rx="12.9" ry="2.0" fill="#7a9a28"/><circle cx="23.9" cy="14.9" r="1.5" fill="#aac848"/><circle cx="7.3" cy="14.5" r="1.0" fill="#aac848"/><circle cx="23.3" cy="13.2" r="1.2" fill="#5a7a20"/><circle cx="20.7" cy="14.4" r="1.6" fill="#aac848"/><circle cx="18.3" cy="13.2" r="1.5" fill="#5a7a20"/><circle cx="19.6" cy="15.0" r="1.6" fill="#aac848"/><circle cx="22.6" cy="14.2" r="1.6" fill="#aac848"/><circle cx="5.7" cy="13.7" r="0.8" fill="#9ab838"/><ellipse cx="17.1" cy="21.3" rx="14.4" ry="2.5" fill="#4a5a20"/><ellipse cx="17.1" cy="20.1" rx="13.7" ry="2.0" fill="#7a9a28"/><circle cx="22.6" cy="19.6" r="1.6" fill="#9ab838"/><circle cx="28.2" cy="20.1" r="0.9" fill="#5a7a20"/><circle cx="6.5" cy="19.2" r="1.4" fill="#9ab838"/><circle cx="6.2" cy="19.6" r="1.5" fill="#9ab838"/><circle cx="8.7" cy="20.0" r="0.8" fill="#5a7a20"/><circle cx="26.0" cy="20.2" r="1.0" fill="#5a7a20"/><circle cx="12.6" cy="20.4" r="0.8" fill="#aac848"/><circle cx="7.8" cy="19.3" r="1.1" fill="#5a7a20"/><ellipse cx="14.5" cy="26.9" rx="16.0" ry="2.5" fill="#4a5a20"/><ellipse cx="14.5" cy="25.7" rx="15.2" ry="2.0" fill="#7a9a28"/><circle cx="5.3" cy="25.1" r="1.5" fill="#5a7a20"/><circle cx="23.1" cy="25.2" r="0.8" fill="#5a7a20"/><circle cx="6.9" cy="24.2" r="0.9" fill="#5a7a20"/><circle cx="21.8" cy="25.7" r="1.3" fill="#9ab838"/><circle cx="19.4" cy="25.8" r="1.2" fill="#aac848"/><circle cx="18.8" cy="24.9" r="1.2" fill="#aac848"/><circle cx="6.8" cy="24.7" r="1.2" fill="#aac848"/><circle cx="5.6" cy="25.9" r="1.2" fill="#9ab838"/></svg><svg class="a" style="left:176px;top:217px" width="32" height="33" viewBox="0 0 32 33"><rect x="15.0" y="5.0" width="2" height="28.1" fill="#4a3a2a"/><ellipse cx="16.4" cy="4.5" rx="8.8" ry="2.5" fill="#4a5a20"/><ellipse cx="16.4" cy="3.3" rx="8.4" ry="2.0" fill="#7a9a28"/><circle cx="16.0" cy="2.3" r="1.1" fill="#5a7a20"/><circle cx="16.8" cy="2.6" r="1.2" fill="#5a7a20"/><circle cx="15.4" cy="3.1" r="1.0" fill="#5a7a20"/><circle cx="15.0" cy="2.4" r="1.0" fill="#aac848"/><circle cx="20.3" cy="2.1" r="0.9" fill="#9ab838"/><circle cx="19.6" cy="2.7" r="0.8" fill="#9ab838"/><circle cx="14.3" cy="3.1" r="1.4" fill="#aac848"/><circle cx="16.2" cy="3.3" r="1.2" fill="#5a7a20"/><ellipse cx="14.6" cy="10.1" rx="12.0" ry="2.5" fill="#4a5a20"/><ellipse cx="14.6" cy="8.9" rx="11.4" ry="2.0" fill="#7a9a28"/><circle cx="11.1" cy="8.1" r="1.2" fill="#5a7a20"/><circle cx="12.1" cy="9.1" r="1.0" fill="#aac848"/><circle cx="8.8" cy="9.4" r="1.2" fill="#9ab838"/><circle cx="9.5" cy="8.3" r="1.0" fill="#aac848"/><circle cx="21.3" cy="8.8" r="1.4" fill="#5a7a20"/><circle cx="15.7" cy="7.7" r="0.9" fill="#5a7a20"/><circle cx="12.1" cy="7.7" r="1.3" fill="#9ab838"/><circle cx="10.0" cy="8.9" r="1.1" fill="#9ab838"/><ellipse cx="17.1" cy="15.7" rx="13.6" ry="2.5" fill="#4a5a20"/><ellipse cx="17.1" cy="14.5" rx="12.9" ry="2.0" fill="#7a9a28"/><circle cx="27.0" cy="13.1" r="1.1" fill="#9ab838"/><circle cx="17.3" cy="14.9" r="1.5" fill="#9ab838"/><circle cx="26.0" cy="14.3" r="1.5" fill="#9ab838"/><circle cx="8.7" cy="13.4" r="1.0" fill="#9ab838"/><circle cx="10.6" cy="13.3" r="0.9" fill="#aac848"/><circle cx="7.8" cy="14.1" r="1.4" fill="#9ab838"/><circle cx="23.6" cy="14.5" r="1.2" fill="#aac848"/><circle cx="10.1" cy="14.5" r="1.3" fill="#5a7a20"/><ellipse cx="16.1" cy="21.3" rx="14.4" ry="2.5" fill="#4a5a20"/><ellipse cx="16.1" cy="20.1" rx="13.7" ry="2.0" fill="#7a9a28"/><circle cx="24.5" cy="18.8" r="1.4" fill="#aac848"/><circle cx="16.4" cy="19.3" r="1.0" fill="#5a7a20"/><circle cx="22.3" cy="20.6" r="1.5" fill="#9ab838"/><circle cx="24.3" cy="19.2" r="0.9" fill="#9ab838"/><circle cx="23.8" cy="20.4" r="1.1" fill="#aac848"/><circle cx="23.5" cy="19.3" r="1.1" fill="#9ab838"/><circle cx="21.5" cy="19.8" r="1.3" fill="#9ab838"/><circle cx="14.2" cy="18.8" r="1.5" fill="#5a7a20"/><ellipse cx="17.4" cy="26.9" rx="16.0" ry="2.5" fill="#4a5a20"/><ellipse cx="17.4" cy="25.7" rx="15.2" ry="2.0" fill="#7a9a28"/><circle cx="11.3" cy="24.3" r="0.9" fill="#aac848"/><circle cx="4.6" cy="26.0" r="1.1" fill="#5a7a20"/><circle cx="19.6" cy="24.9" r="0.9" fill="#5a7a20"/><circle cx="5.3" cy="26.0" r="1.1" fill="#aac848"/><circle cx="27.4" cy="24.9" r="1.4" fill="#9ab838"/><circle cx="16.4" cy="26.0" r="1.5" fill="#5a7a20"/><circle cx="14.1" cy="24.5" r="1.3" fill="#5a7a20"/><circle cx="21.8" cy="24.4" r="1.2" fill="#aac848"/></svg><svg class="a" style="left:214px;top:217px" width="32" height="33" viewBox="0 0 32 33"><rect x="15.0" y="5.0" width="2" height="28.1" fill="#4a3a2a"/><ellipse cx="16.8" cy="4.5" rx="8.8" ry="2.5" fill="#4a5a20"/><ellipse cx="16.8" cy="3.3" rx="8.4" ry="2.0" fill="#7a9a28"/><circle cx="23.7" cy="3.6" r="1.6" fill="#9ab838"/><circle cx="18.4" cy="1.8" r="1.0" fill="#9ab838"/><circle cx="21.7" cy="3.7" r="1.5" fill="#aac848"/><circle cx="16.8" cy="1.9" r="1.1" fill="#5a7a20"/><circle cx="9.8" cy="3.2" r="1.1" fill="#aac848"/><circle cx="18.9" cy="2.4" r="0.8" fill="#aac848"/><circle cx="21.0" cy="2.0" r="1.5" fill="#aac848"/><circle cx="13.0" cy="2.6" r="1.5" fill="#5a7a20"/><ellipse cx="15.9" cy="10.1" rx="12.0" ry="2.5" fill="#4a5a20"/><ellipse cx="15.9" cy="8.9" rx="11.4" ry="2.0" fill="#7a9a28"/><circle cx="14.1" cy="7.9" r="0.9" fill="#aac848"/><circle cx="15.9" cy="9.1" r="1.1" fill="#5a7a20"/><circle cx="16.6" cy="7.7" r="1.3" fill="#9ab838"/><circle cx="10.5" cy="9.0" r="1.0" fill="#9ab838"/><circle cx="16.0" cy="8.6" r="1.1" fill="#aac848"/><circle cx="18.8" cy="8.4" r="1.1" fill="#9ab838"/><circle cx="13.6" cy="8.7" r="1.0" fill="#aac848"/><circle cx="10.9" cy="8.0" r="1.4" fill="#5a7a20"/><ellipse cx="16.6" cy="15.7" rx="13.6" ry="2.5" fill="#4a5a20"/><ellipse cx="16.6" cy="14.5" rx="12.9" ry="2.0" fill="#7a9a28"/><circle cx="27.4" cy="14.4" r="1.6" fill="#5a7a20"/><circle cx="13.7" cy="13.8" r="1.6" fill="#9ab838"/><circle cx="15.2" cy="14.1" r="1.3" fill="#aac848"/><circle cx="9.2" cy="14.9" r="0.9" fill="#9ab838"/><circle cx="21.3" cy="14.6" r="1.0" fill="#5a7a20"/><circle cx="15.4" cy="14.3" r="1.5" fill="#aac848"/><circle cx="26.0" cy="14.4" r="0.9" fill="#9ab838"/><circle cx="12.7" cy="14.9" r="1.5" fill="#9ab838"/><ellipse cx="16.5" cy="21.3" rx="14.4" ry="2.5" fill="#4a5a20"/><ellipse cx="16.5" cy="20.1" rx="13.7" ry="2.0" fill="#7a9a28"/><circle cx="16.0" cy="20.5" r="1.2" fill="#5a7a20"/><circle cx="12.5" cy="19.4" r="1.2" fill="#9ab838"/><circle cx="24.3" cy="19.9" r="1.2" fill="#aac848"/><circle cx="19.7" cy="20.6" r="0.8" fill="#9ab838"/><circle cx="15.1" cy="19.9" r="1.1" fill="#aac848"/><circle cx="17.0" cy="20.1" r="1.0" fill="#5a7a20"/><circle cx="24.3" cy="19.0" r="1.0" fill="#9ab838"/><circle cx="21.0" cy="19.9" r="1.4" fill="#aac848"/><ellipse cx="16.1" cy="26.9" rx="16.0" ry="2.5" fill="#4a5a20"/><ellipse cx="16.1" cy="25.7" rx="15.2" ry="2.0" fill="#7a9a28"/><circle cx="24.9" cy="25.4" r="1.1" fill="#5a7a20"/><circle cx="26.9" cy="26.0" r="1.1" fill="#9ab838"/><circle cx="5.6" cy="25.1" r="1.3" fill="#5a7a20"/><circle cx="22.2" cy="24.7" r="1.2" fill="#aac848"/><circle cx="9.9" cy="25.7" r="1.4" fill="#5a7a20"/><circle cx="18.6" cy="24.3" r="1.3" fill="#9ab838"/><circle cx="24.6" cy="24.4" r="1.0" fill="#aac848"/><circle cx="7.2" cy="24.6" r="1.3" fill="#5a7a20"/></svg><svg class="a" style="left:252px;top:217px" width="32" height="33" viewBox="0 0 32 33"><rect x="15.0" y="5.0" width="2" height="28.1" fill="#4a3a2a"/><ellipse cx="14.7" cy="4.5" rx="8.8" ry="2.5" fill="#2a3018"/><ellipse cx="14.7" cy="3.3" rx="8.4" ry="2.0" fill="#8a9a30"/><circle cx="9.6" cy="2.3" r="1.4" fill="#3a4020"/><circle cx="15.8" cy="3.5" r="1.4" fill="#a8b040"/><circle cx="10.0" cy="2.5" r="1.5" fill="#a8b040"/><circle cx="8.1" cy="2.7" r="1.5" fill="#a8b040"/><circle cx="10.1" cy="2.5" r="1.3" fill="#c0c050"/><circle cx="12.3" cy="3.7" r="0.9" fill="#c0c050"/><circle cx="10.0" cy="2.4" r="1.0" fill="#a8b040"/><circle cx="12.9" cy="2.8" r="0.9" fill="#c0c050"/><ellipse cx="15.5" cy="10.1" rx="12.0" ry="2.5" fill="#2a3018"/><ellipse cx="15.5" cy="8.9" rx="11.4" ry="2.0" fill="#8a9a30"/><circle cx="24.5" cy="8.6" r="0.8" fill="#c0c050"/><circle cx="6.1" cy="7.8" r="0.9" fill="#3a4020"/><circle cx="23.3" cy="7.7" r="1.1" fill="#c0c050"/><circle cx="11.7" cy="9.0" r="0.9" fill="#c0c050"/><circle cx="21.0" cy="8.1" r="1.1" fill="#3a4020"/><circle cx="16.9" cy="8.1" r="1.2" fill="#a8b040"/><circle cx="13.6" cy="9.3" r="1.3" fill="#c0c050"/><circle cx="14.1" cy="9.4" r="0.8" fill="#c0c050"/><ellipse cx="16.8" cy="15.7" rx="13.6" ry="2.5" fill="#2a3018"/><ellipse cx="16.8" cy="14.5" rx="12.9" ry="2.0" fill="#8a9a30"/><circle cx="24.4" cy="13.5" r="1.2" fill="#c0c050"/><circle cx="18.9" cy="15.0" r="1.3" fill="#a8b040"/><circle cx="27.4" cy="14.5" r="1.3" fill="#c0c050"/><circle cx="23.1" cy="14.3" r="1.1" fill="#3a4020"/><circle cx="23.8" cy="14.6" r="1.5" fill="#a8b040"/><circle cx="18.2" cy="13.9" r="1.1" fill="#c0c050"/><circle cx="6.4" cy="13.2" r="1.4" fill="#a8b040"/><circle cx="15.2" cy="13.9" r="1.5" fill="#c0c050"/><ellipse cx="15.7" cy="21.3" rx="14.4" ry="2.5" fill="#2a3018"/><ellipse cx="15.7" cy="20.1" rx="13.7" ry="2.0" fill="#8a9a30"/><circle cx="16.5" cy="19.1" r="1.5" fill="#a8b040"/><circle cx="12.2" cy="18.9" r="1.1" fill="#c0c050"/><circle cx="4.8" cy="19.2" r="1.2" fill="#a8b040"/><circle cx="16.6" cy="18.8" r="1.5" fill="#c0c050"/><circle cx="10.1" cy="19.3" r="1.4" fill="#c0c050"/><circle cx="15.4" cy="19.8" r="1.0" fill="#3a4020"/><circle cx="5.0" cy="19.7" r="1.2" fill="#3a4020"/><circle cx="5.5" cy="20.6" r="1.3" fill="#3a4020"/><ellipse cx="16.1" cy="26.9" rx="16.0" ry="2.5" fill="#2a3018"/><ellipse cx="16.1" cy="25.7" rx="15.2" ry="2.0" fill="#8a9a30"/><circle cx="21.8" cy="25.2" r="1.0" fill="#c0c050"/><circle cx="6.4" cy="25.0" r="0.9" fill="#c0c050"/><circle cx="24.7" cy="26.2" r="1.0" fill="#a8b040"/><circle cx="18.0" cy="24.7" r="1.1" fill="#a8b040"/><circle cx="4.8" cy="25.3" r="1.5" fill="#c0c050"/><circle cx="22.9" cy="24.7" r="1.0" fill="#c0c050"/><circle cx="24.5" cy="24.5" r="1.4" fill="#c0c050"/><circle cx="17.1" cy="26.1" r="1.2" fill="#3a4020"/></svg><svg class="a" style="left:290px;top:217px" width="32" height="33" viewBox="0 0 32 33"><rect x="15.0" y="18.2" width="2" height="14.8" fill="#4a3a2a"/><ellipse cx="16.0" cy="13.2" rx="15.4" ry="9.9" fill="#5a8a30"/><circle cx="14.5" cy="14.2" r="1.4" fill="#4a6a28"/><circle cx="21.0" cy="13.0" r="1.3" fill="#3a5a20"/><circle cx="23.7" cy="9.7" r="2.6" fill="#3a5a20"/><circle cx="5.7" cy="11.5" r="2.2" fill="#8aaa40"/><circle cx="6.4" cy="18.5" r="2.5" fill="#aac860"/><circle cx="13.6" cy="20.3" r="2.7" fill="#3a5a20"/><circle cx="2.5" cy="13.3" r="2.0" fill="#8aaa40"/><circle cx="29.7" cy="13.3" r="2.4" fill="#aac860"/><circle cx="17.4" cy="11.5" r="1.9" fill="#4a6a28"/><circle cx="13.3" cy="17.5" r="2.7" fill="#4a6a28"/><circle cx="10.9" cy="12.3" r="1.4" fill="#4a6a28"/><circle cx="22.1" cy="12.6" r="1.5" fill="#5a8a30"/><circle cx="20.9" cy="5.5" r="1.8" fill="#8aaa40"/><circle cx="5.9" cy="7.6" r="2.4" fill="#4a6a28"/><circle cx="15.1" cy="13.3" r="2.0" fill="#3a5a20"/><circle cx="21.1" cy="10.2" r="1.2" fill="#4a6a28"/><circle cx="24.4" cy="17.2" r="2.8" fill="#aac860"/><circle cx="16.2" cy="16.8" r="2.3" fill="#5a8a30"/><circle cx="9.7" cy="10.2" r="1.7" fill="#8aaa40"/><circle cx="27.0" cy="13.5" r="2.3" fill="#aac860"/><circle cx="12.1" cy="18.7" r="2.2" fill="#3a5a20"/><circle cx="20.1" cy="10.8" r="2.5" fill="#8aaa40"/><circle cx="24.6" cy="14.6" r="2.6" fill="#3a5a20"/><circle cx="27.0" cy="12.8" r="1.6" fill="#aac860"/><circle cx="16.1" cy="9.0" r="2.7" fill="#5a8a30"/><circle cx="13.9" cy="16.7" r="1.5" fill="#5a8a30"/><circle cx="6.1" cy="8.2" r="1.5" fill="#5a8a30"/><circle cx="16.3" cy="12.6" r="1.7" fill="#3a5a20"/><circle cx="21.2" cy="4.5" r="2.3" fill="#4a6a28"/><circle cx="12.0" cy="21.8" r="2.7" fill="#4a6a28"/><circle cx="3.7" cy="9.5" r="1.5" fill="#aac860"/><circle cx="7.2" cy="10.0" r="2.6" fill="#aac860"/><circle cx="8.3" cy="15.9" r="2.5" fill="#8aaa40"/><circle cx="20.4" cy="17.6" r="2.4" fill="#3a5a20"/><circle cx="18.0" cy="9.7" r="2.8" fill="#5a8a30"/><circle cx="26.3" cy="18.1" r="2.5" fill="#8aaa40"/><circle cx="7.4" cy="6.7" r="2.0" fill="#3a5a20"/><circle cx="28.4" cy="9.1" r="1.5" fill="#3a5a20"/><circle cx="15.9" cy="20.1" r="2.5" fill="#3a5a20"/><circle cx="19.9" cy="12.7" r="1.4" fill="#4a6a28"/><circle cx="16.1" cy="21.7" r="1.6" fill="#4a6a28"/><circle cx="28.6" cy="15.6" r="2.4" fill="#5a8a30"/><circle cx="11.4" cy="20.8" r="2.4" fill="#8aaa40"/><circle cx="13.4" cy="7.7" r="1.6" fill="#5a8a30"/><circle cx="19.3" cy="9.4" r="2.9" fill="#aac860"/><circle cx="13.8" cy="17.1" r="1.5" fill="#5a8a30"/><circle cx="1.6" cy="13.2" r="2.4" fill="#8aaa40"/><circle cx="16.2" cy="10.1" r="3.0" fill="#5a8a30"/><circle cx="11.6" cy="16.1" r="2.1" fill="#8aaa40"/><circle cx="13.0" cy="13.9" r="2.4" fill="#8aaa40"/></svg><svg class="a" style="left:328px;top:217px" width="32" height="33" viewBox="0 0 32 33"><rect x="15.0" y="18.2" width="2" height="14.8" fill="#4a3a2a"/><ellipse cx="16.0" cy="13.2" rx="15.4" ry="9.9" fill="#6a8060"/><circle cx="18.9" cy="7.2" r="2.9" fill="#9aa890"/><circle cx="12.1" cy="11.8" r="2.1" fill="#6a8060"/><circle cx="6.4" cy="11.8" r="2.2" fill="#6a8060"/><circle cx="16.4" cy="8.4" r="2.5" fill="#5a6a48"/><circle cx="19.1" cy="12.0" r="1.5" fill="#6a8060"/><circle cx="4.4" cy="14.0" r="2.6" fill="#5a6a48"/><circle cx="12.5" cy="19.2" r="1.9" fill="#6a8060"/><circle cx="18.2" cy="13.4" r="2.5" fill="#6a8060"/><circle cx="14.0" cy="5.7" r="1.9" fill="#b0b8a0"/><circle cx="13.8" cy="22.4" r="2.1" fill="#6a8060"/><circle cx="21.3" cy="14.4" r="1.8" fill="#6a8060"/><circle cx="9.9" cy="18.8" r="1.2" fill="#6a8060"/><circle cx="28.3" cy="17.6" r="1.4" fill="#b0b8a0"/><circle cx="21.0" cy="15.3" r="1.7" fill="#4a5a40"/><circle cx="19.7" cy="7.5" r="2.7" fill="#6a8060"/><circle cx="20.2" cy="8.7" r="2.2" fill="#9aa890"/><circle cx="5.4" cy="12.4" r="2.7" fill="#6a8060"/><circle cx="11.9" cy="9.0" r="2.5" fill="#4a5a40"/><circle cx="23.4" cy="21.0" r="1.5" fill="#b0b8a0"/><circle cx="13.8" cy="5.3" r="1.9" fill="#6a8060"/><circle cx="16.3" cy="20.8" r="1.5" fill="#5a6a48"/><circle cx="17.8" cy="19.9" r="1.8" fill="#6a8060"/><circle cx="16.8" cy="9.4" r="2.1" fill="#9aa890"/><circle cx="13.7" cy="7.2" r="2.0" fill="#4a5a40"/><circle cx="22.5" cy="14.3" r="2.8" fill="#5a6a48"/><circle cx="17.2" cy="7.8" r="2.9" fill="#4a5a40"/><circle cx="19.5" cy="5.9" r="2.7" fill="#9aa890"/><circle cx="12.2" cy="21.6" r="2.0" fill="#b0b8a0"/><circle cx="8.4" cy="14.2" r="1.4" fill="#6a8060"/><circle cx="3.6" cy="9.1" r="1.8" fill="#9aa890"/><circle cx="12.6" cy="6.2" r="1.3" fill="#b0b8a0"/><circle cx="22.7" cy="10.6" r="2.7" fill="#b0b8a0"/><circle cx="22.6" cy="10.6" r="2.2" fill="#5a6a48"/><circle cx="19.3" cy="18.8" r="2.1" fill="#b0b8a0"/><circle cx="15.8" cy="8.2" r="2.1" fill="#4a5a40"/><circle cx="29.1" cy="9.1" r="1.5" fill="#4a5a40"/><circle cx="7.2" cy="16.3" r="1.3" fill="#4a5a40"/><circle cx="17.7" cy="8.8" r="2.2" fill="#6a8060"/><circle cx="10.2" cy="5.3" r="1.3" fill="#6a8060"/><circle cx="18.8" cy="19.7" r="1.4" fill="#6a8060"/><circle cx="23.4" cy="16.5" r="2.4" fill="#5a6a48"/><circle cx="22.4" cy="9.9" r="1.9" fill="#4a5a40"/><circle cx="23.4" cy="7.1" r="2.5" fill="#9aa890"/><circle cx="30.2" cy="11.1" r="2.6" fill="#6a8060"/><circle cx="16.2" cy="9.7" r="2.6" fill="#5a6a48"/><circle cx="26.5" cy="16.1" r="2.7" fill="#5a6a48"/><circle cx="16.9" cy="19.8" r="1.7" fill="#9aa890"/><circle cx="10.0" cy="10.8" r="2.7" fill="#5a6a48"/><circle cx="8.5" cy="15.6" r="2.9" fill="#4a5a40"/><circle cx="20.9" cy="19.0" r="1.4" fill="#4a5a40"/></svg><svg class="a" style="left:366px;top:217px" width="32" height="33" viewBox="0 0 32 33"><rect x="15.0" y="5.0" width="2" height="28.1" fill="#4a3a2a"/><ellipse cx="16.5" cy="4.5" rx="8.8" ry="2.5" fill="#3a5a20"/><ellipse cx="16.5" cy="3.3" rx="8.4" ry="2.0" fill="#6a9a38"/><circle cx="18.0" cy="3.5" r="1.2" fill="#4a7a28"/><circle cx="13.4" cy="2.9" r="1.5" fill="#4a7a28"/><circle cx="17.8" cy="2.6" r="0.9" fill="#a0c868"/><circle cx="9.8" cy="3.4" r="1.3" fill="#4a7a28"/><circle cx="16.8" cy="2.7" r="1.1" fill="#a0c868"/><circle cx="10.0" cy="2.3" r="1.2" fill="#8ab850"/><circle cx="12.2" cy="2.8" r="1.5" fill="#a0c868"/><circle cx="19.2" cy="3.6" r="1.1" fill="#8ab850"/><ellipse cx="16.0" cy="10.1" rx="12.0" ry="2.5" fill="#3a5a20"/><ellipse cx="16.0" cy="8.9" rx="11.4" ry="2.0" fill="#6a9a38"/><circle cx="10.1" cy="8.3" r="1.4" fill="#a0c868"/><circle cx="9.9" cy="8.5" r="1.1" fill="#4a7a28"/><circle cx="9.6" cy="7.8" r="0.9" fill="#8ab850"/><circle cx="11.9" cy="9.1" r="1.3" fill="#a0c868"/><circle cx="7.7" cy="8.5" r="0.9" fill="#4a7a28"/><circle cx="13.2" cy="8.4" r="0.8" fill="#4a7a28"/><circle cx="9.7" cy="7.6" r="1.4" fill="#a0c868"/><circle cx="24.2" cy="7.5" r="1.2" fill="#8ab850"/><ellipse cx="16.4" cy="15.7" rx="13.6" ry="2.5" fill="#3a5a20"/><ellipse cx="16.4" cy="14.5" rx="12.9" ry="2.0" fill="#6a9a38"/><circle cx="9.0" cy="14.8" r="1.4" fill="#8ab850"/><circle cx="9.7" cy="13.4" r="0.9" fill="#8ab850"/><circle cx="7.0" cy="13.6" r="1.2" fill="#4a7a28"/><circle cx="17.1" cy="15.0" r="1.0" fill="#8ab850"/><circle cx="24.4" cy="13.6" r="1.4" fill="#8ab850"/><circle cx="25.9" cy="14.8" r="1.4" fill="#4a7a28"/><circle cx="10.3" cy="14.7" r="1.3" fill="#4a7a28"/><circle cx="19.2" cy="13.9" r="1.3" fill="#a0c868"/><ellipse cx="15.0" cy="21.3" rx="14.4" ry="2.5" fill="#3a5a20"/><ellipse cx="15.0" cy="20.1" rx="13.7" ry="2.0" fill="#6a9a38"/><circle cx="11.0" cy="19.5" r="1.1" fill="#8ab850"/><circle cx="22.2" cy="20.0" r="0.9" fill="#a0c868"/><circle cx="17.2" cy="20.6" r="1.2" fill="#4a7a28"/><circle cx="3.8" cy="18.7" r="1.3" fill="#4a7a28"/><circle cx="11.9" cy="18.9" r="1.5" fill="#4a7a28"/><circle cx="8.9" cy="20.4" r="1.2" fill="#4a7a28"/><circle cx="9.9" cy="18.7" r="1.3" fill="#8ab850"/><circle cx="22.5" cy="20.6" r="1.1" fill="#8ab850"/><ellipse cx="17.4" cy="26.9" rx="16.0" ry="2.5" fill="#3a5a20"/><ellipse cx="17.4" cy="25.7" rx="15.2" ry="2.0" fill="#6a9a38"/><circle cx="19.6" cy="24.7" r="1.5" fill="#a0c868"/><circle cx="16.3" cy="25.4" r="1.0" fill="#8ab850"/><circle cx="9.1" cy="26.1" r="1.2" fill="#4a7a28"/><circle cx="22.7" cy="26.0" r="1.1" fill="#8ab850"/><circle cx="7.3" cy="26.0" r="1.2" fill="#4a7a28"/><circle cx="21.2" cy="24.4" r="1.0" fill="#8ab850"/><circle cx="13.8" cy="25.4" r="1.1" fill="#a0c868"/><circle cx="21.3" cy="25.4" r="1.1" fill="#4a7a28"/></svg><svg class="a" style="left:404px;top:217px" width="32" height="33" viewBox="0 0 32 33"><rect x="15.0" y="18.2" width="2" height="14.8" fill="#4a3a2a"/><ellipse cx="16.0" cy="13.2" rx="15.4" ry="9.9" fill="#5a7a30"/><circle cx="9.2" cy="18.4" r="1.9" fill="#3a4a20"/><circle cx="25.8" cy="14.0" r="2.0" fill="#7a9a40"/><circle cx="14.1" cy="14.5" r="2.7" fill="#3a4a20"/><circle cx="26.8" cy="16.8" r="1.4" fill="#4a5a28"/><circle cx="23.3" cy="5.3" r="2.9" fill="#5a7a30"/><circle cx="19.6" cy="6.0" r="1.7" fill="#3a4a20"/><circle cx="13.7" cy="10.9" r="1.7" fill="#7a9a40"/><circle cx="25.1" cy="9.9" r="1.3" fill="#9ab058"/><circle cx="14.4" cy="4.8" r="2.3" fill="#9ab058"/><circle cx="21.4" cy="18.2" r="1.2" fill="#5a7a30"/><circle cx="15.7" cy="18.2" r="2.2" fill="#4a5a28"/><circle cx="5.7" cy="19.6" r="2.8" fill="#4a5a28"/><circle cx="11.2" cy="17.7" r="1.6" fill="#9ab058"/><circle cx="22.1" cy="11.4" r="2.4" fill="#9ab058"/><circle cx="12.0" cy="4.8" r="2.6" fill="#4a5a28"/><circle cx="19.2" cy="13.0" r="2.7" fill="#9ab058"/><circle cx="17.0" cy="10.4" r="1.2" fill="#9ab058"/><circle cx="19.5" cy="19.5" r="1.3" fill="#7a9a40"/><circle cx="9.0" cy="13.1" r="1.3" fill="#9ab058"/><circle cx="29.6" cy="16.2" r="2.0" fill="#7a9a40"/><circle cx="5.1" cy="12.8" r="1.5" fill="#4a5a28"/><circle cx="15.9" cy="4.0" r="1.4" fill="#3a4a20"/><circle cx="20.7" cy="17.7" r="2.9" fill="#9ab058"/><circle cx="24.4" cy="18.5" r="2.6" fill="#5a7a30"/><circle cx="28.9" cy="16.4" r="2.7" fill="#7a9a40"/><circle cx="18.9" cy="4.6" r="2.8" fill="#3a4a20"/><circle cx="19.3" cy="20.0" r="2.6" fill="#7a9a40"/><circle cx="12.3" cy="14.9" r="2.5" fill="#7a9a40"/><circle cx="18.7" cy="5.1" r="2.8" fill="#4a5a28"/><circle cx="10.7" cy="13.9" r="1.8" fill="#7a9a40"/><circle cx="24.9" cy="9.4" r="2.0" fill="#4a5a28"/><circle cx="23.9" cy="8.9" r="1.8" fill="#9ab058"/><circle cx="26.8" cy="12.1" r="1.6" fill="#9ab058"/><circle cx="13.7" cy="12.6" r="1.5" fill="#3a4a20"/><circle cx="2.7" cy="13.9" r="1.9" fill="#3a4a20"/><circle cx="24.4" cy="7.0" r="1.5" fill="#5a7a30"/><circle cx="13.4" cy="7.8" r="2.8" fill="#4a5a28"/><circle cx="25.3" cy="12.9" r="1.3" fill="#7a9a40"/><circle cx="3.0" cy="11.6" r="2.1" fill="#5a7a30"/><circle cx="5.6" cy="19.7" r="1.5" fill="#3a4a20"/><circle cx="13.4" cy="16.2" r="1.4" fill="#3a4a20"/><circle cx="8.1" cy="7.0" r="1.6" fill="#3a4a20"/><circle cx="13.3" cy="20.9" r="2.8" fill="#9ab058"/><circle cx="25.8" cy="10.1" r="2.5" fill="#3a4a20"/><circle cx="17.3" cy="13.7" r="2.4" fill="#3a4a20"/><circle cx="3.2" cy="17.1" r="1.3" fill="#7a9a40"/><circle cx="12.9" cy="11.3" r="1.9" fill="#5a7a30"/><circle cx="4.7" cy="15.1" r="2.1" fill="#3a4a20"/><circle cx="6.5" cy="19.1" r="1.7" fill="#5a7a30"/><circle cx="28.4" cy="15.6" r="2.0" fill="#3a4a20"/></svg><svg class="a" style="left:73px;top:253px" width="32" height="33" viewBox="0 0 32 33"><path d="M2.6 32.0 C0.0 19.8 9.6 1.0 16.0 0.7 C22.4 1.0 32.0 19.8 29.4 32.0 Z" fill="#5a8a38"/><circle cx="14.6" cy="5.4" r="1.7" fill="#4a7a30"/><circle cx="17.0" cy="16.8" r="1.7" fill="#90b860"/><circle cx="19.3" cy="13.5" r="1.7" fill="#7aaa48"/><circle cx="7.5" cy="16.6" r="0.8" fill="#4a7a30"/><circle cx="13.1" cy="24.1" r="1.7" fill="#7aaa48"/><circle cx="11.5" cy="15.1" r="1.6" fill="#90b860"/><circle cx="16.6" cy="21.2" r="1.2" fill="#3a6a28"/><circle cx="17.3" cy="28.3" r="1.5" fill="#90b860"/><circle cx="22.7" cy="24.3" r="1.0" fill="#3a6a28"/><circle cx="15.9" cy="3.1" r="1.9" fill="#7aaa48"/><circle cx="24.2" cy="17.9" r="0.8" fill="#4a7a30"/><circle cx="22.4" cy="25.2" r="1.9" fill="#7aaa48"/><circle cx="7.9" cy="16.9" r="1.7" fill="#3a6a28"/><circle cx="24.5" cy="15.2" r="1.2" fill="#7aaa48"/><circle cx="19.6" cy="12.1" r="1.7" fill="#5a8a38"/><circle cx="16.3" cy="9.1" r="1.9" fill="#5a8a38"/><circle cx="15.0" cy="10.3" r="1.8" fill="#3a6a28"/><circle cx="20.8" cy="9.7" r="1.7" fill="#7aaa48"/><circle cx="26.8" cy="21.0" r="1.1" fill="#5a8a38"/><circle cx="13.7" cy="6.0" r="1.3" fill="#3a6a28"/><circle cx="19.2" cy="23.5" r="1.9" fill="#7aaa48"/><circle cx="13.5" cy="3.3" r="1.1" fill="#5a8a38"/><circle cx="16.9" cy="6.7" r="0.9" fill="#7aaa48"/><circle cx="23.0" cy="12.1" r="1.2" fill="#7aaa48"/><circle cx="14.8" cy="28.6" r="1.8" fill="#4a7a30"/><circle cx="17.9" cy="3.7" r="0.9" fill="#90b860"/><circle cx="15.1" cy="10.2" r="0.8" fill="#7aaa48"/><circle cx="25.0" cy="14.7" r="1.4" fill="#5a8a38"/><circle cx="18.3" cy="9.1" r="1.0" fill="#5a8a38"/><circle cx="9.7" cy="8.9" r="1.5" fill="#5a8a38"/><circle cx="21.9" cy="27.5" r="1.1" fill="#3a6a28"/><circle cx="7.4" cy="12.1" r="1.3" fill="#90b860"/><circle cx="17.2" cy="4.8" r="1.0" fill="#90b860"/><circle cx="16.1" cy="11.3" r="1.4" fill="#90b860"/><circle cx="21.8" cy="6.9" r="1.3" fill="#5a8a38"/><circle cx="3.7" cy="27.9" r="1.0" fill="#7aaa48"/><circle cx="12.9" cy="6.1" r="1.8" fill="#3a6a28"/><circle cx="14.8" cy="15.1" r="2.0" fill="#7aaa48"/><circle cx="12.9" cy="22.6" r="1.6" fill="#4a7a30"/><circle cx="14.3" cy="3.0" r="1.4" fill="#4a7a30"/><circle cx="7.6" cy="25.6" r="1.5" fill="#3a6a28"/><circle cx="9.6" cy="14.8" r="1.6" fill="#3a6a28"/><circle cx="18.6" cy="6.5" r="1.6" fill="#4a7a30"/><circle cx="17.2" cy="9.5" r="1.4" fill="#5a8a38"/><circle cx="20.7" cy="5.8" r="1.4" fill="#3a6a28"/><circle cx="10.6" cy="10.0" r="1.2" fill="#5a8a38"/><circle cx="14.0" cy="18.3" r="1.3" fill="#5a8a38"/><circle cx="21.3" cy="6.9" r="1.2" fill="#5a8a38"/><circle cx="10.3" cy="10.3" r="1.0" fill="#5a8a38"/><circle cx="9.4" cy="14.2" r="1.8" fill="#5a8a38"/><circle cx="12.0" cy="25.1" r="1.3" fill="#3a6a28"/><circle cx="9.9" cy="17.2" r="1.7" fill="#5a8a38"/><circle cx="23.1" cy="24.7" r="0.9" fill="#3a6a28"/><circle cx="17.6" cy="7.2" r="1.1" fill="#90b860"/><circle cx="17.1" cy="19.7" r="1.6" fill="#90b860"/><circle cx="13.4" cy="19.4" r="1.2" fill="#3a6a28"/><circle cx="21.8" cy="13.9" r="1.9" fill="#90b860"/><circle cx="24.1" cy="27.4" r="1.2" fill="#4a7a30"/><circle cx="27.0" cy="24.2" r="1.3" fill="#7aaa48"/><circle cx="22.4" cy="14.5" r="1.0" fill="#3a6a28"/><circle cx="20.3" cy="7.7" r="1.8" fill="#7aaa48"/><circle cx="19.9" cy="29.7" r="0.9" fill="#7aaa48"/><circle cx="26.1" cy="27.3" r="0.8" fill="#7aaa48"/><circle cx="18.8" cy="10.6" r="1.0" fill="#7aaa48"/><circle cx="10.0" cy="7.4" r="1.5" fill="#4a7a30"/></svg><svg class="a" style="left:111px;top:253px" width="32" height="33" viewBox="0 0 32 33"><path d="M2.6 32.0 C0.0 19.8 9.6 1.0 16.0 0.7 C22.4 1.0 32.0 19.8 29.4 32.0 Z" fill="#8a9a30"/><circle cx="18.3" cy="4.6" r="0.9" fill="#7a8028"/><circle cx="13.7" cy="13.5" r="1.6" fill="#8a9a30"/><circle cx="15.3" cy="7.0" r="0.9" fill="#aab040"/><circle cx="9.5" cy="24.1" r="1.7" fill="#7a8028"/><circle cx="9.8" cy="8.4" r="1.1" fill="#c0c058"/><circle cx="5.9" cy="16.6" r="1.1" fill="#c0c058"/><circle cx="22.6" cy="13.3" r="0.9" fill="#c0c058"/><circle cx="14.7" cy="3.2" r="1.5" fill="#8a9a30"/><circle cx="10.9" cy="10.4" r="1.1" fill="#6a7020"/><circle cx="14.3" cy="15.2" r="0.8" fill="#8a9a30"/><circle cx="12.1" cy="4.7" r="1.3" fill="#8a9a30"/><circle cx="12.2" cy="12.3" r="1.3" fill="#c0c058"/><circle cx="3.5" cy="26.7" r="1.5" fill="#7a8028"/><circle cx="9.0" cy="28.7" r="2.0" fill="#aab040"/><circle cx="19.8" cy="21.0" r="1.9" fill="#c0c058"/><circle cx="20.4" cy="4.5" r="0.9" fill="#6a7020"/><circle cx="17.1" cy="4.4" r="1.7" fill="#c0c058"/><circle cx="8.8" cy="26.1" r="0.9" fill="#8a9a30"/><circle cx="16.0" cy="23.6" r="1.6" fill="#8a9a30"/><circle cx="19.3" cy="18.2" r="1.5" fill="#6a7020"/><circle cx="15.1" cy="29.3" r="1.0" fill="#6a7020"/><circle cx="24.2" cy="25.7" r="1.3" fill="#c0c058"/><circle cx="21.1" cy="12.0" r="1.3" fill="#aab040"/><circle cx="9.7" cy="22.1" r="1.8" fill="#7a8028"/><circle cx="18.8" cy="10.6" r="1.9" fill="#7a8028"/><circle cx="14.3" cy="22.1" r="0.9" fill="#7a8028"/><circle cx="27.4" cy="25.0" r="1.0" fill="#6a7020"/><circle cx="9.9" cy="9.0" r="1.8" fill="#c0c058"/><circle cx="12.6" cy="7.9" r="1.7" fill="#7a8028"/><circle cx="13.8" cy="26.3" r="1.9" fill="#6a7020"/><circle cx="20.9" cy="29.9" r="1.3" fill="#7a8028"/><circle cx="18.1" cy="17.2" r="1.8" fill="#c0c058"/><circle cx="9.5" cy="10.7" r="0.9" fill="#8a9a30"/><circle cx="4.1" cy="24.6" r="1.3" fill="#7a8028"/><circle cx="23.4" cy="28.7" r="2.0" fill="#8a9a30"/><circle cx="3.6" cy="26.2" r="1.7" fill="#aab040"/><circle cx="23.7" cy="16.3" r="1.9" fill="#6a7020"/><circle cx="21.1" cy="6.4" r="1.3" fill="#8a9a30"/><circle cx="12.2" cy="7.8" r="1.6" fill="#aab040"/><circle cx="14.9" cy="23.0" r="1.8" fill="#7a8028"/><circle cx="8.3" cy="10.1" r="1.3" fill="#7a8028"/><circle cx="19.2" cy="12.5" r="1.4" fill="#aab040"/><circle cx="22.5" cy="17.9" r="1.4" fill="#7a8028"/><circle cx="13.3" cy="5.7" r="1.2" fill="#8a9a30"/><circle cx="26.2" cy="21.1" r="1.1" fill="#6a7020"/><circle cx="22.1" cy="13.3" r="1.1" fill="#aab040"/><circle cx="16.6" cy="24.2" r="1.2" fill="#7a8028"/><circle cx="9.2" cy="8.9" r="1.6" fill="#aab040"/><circle cx="17.3" cy="5.8" r="1.2" fill="#aab040"/><circle cx="24.9" cy="16.7" r="1.2" fill="#c0c058"/><circle cx="13.0" cy="4.8" r="1.7" fill="#6a7020"/><circle cx="28.3" cy="26.1" r="1.6" fill="#7a8028"/><circle cx="20.1" cy="9.5" r="1.4" fill="#7a8028"/><circle cx="16.6" cy="10.5" r="1.5" fill="#c0c058"/><circle cx="2.9" cy="29.3" r="1.2" fill="#7a8028"/><circle cx="18.9" cy="11.5" r="1.7" fill="#7a8028"/><circle cx="15.5" cy="15.0" r="1.2" fill="#8a9a30"/><circle cx="11.7" cy="6.6" r="1.6" fill="#7a8028"/><circle cx="14.4" cy="20.5" r="1.2" fill="#c0c058"/><circle cx="12.4" cy="13.8" r="1.1" fill="#c0c058"/><circle cx="7.2" cy="18.5" r="1.6" fill="#aab040"/><circle cx="18.2" cy="13.0" r="1.1" fill="#7a8028"/><circle cx="12.1" cy="14.7" r="0.9" fill="#8a9a30"/><circle cx="11.2" cy="6.0" r="1.8" fill="#6a7020"/><circle cx="25.4" cy="29.2" r="1.4" fill="#aab040"/></svg><svg class="a" style="left:149px;top:253px" width="32" height="33" viewBox="0 0 32 33"><path d="M2.6 32.0 C0.0 19.8 9.6 1.0 16.0 0.7 C22.4 1.0 32.0 19.8 29.4 32.0 Z" fill="#6a9a30"/><circle cx="16.3" cy="3.5" r="1.7" fill="#5a8a28"/><circle cx="27.6" cy="28.6" r="1.7" fill="#5a8a28"/><circle cx="22.4" cy="30.4" r="1.4" fill="#6a9a30"/><circle cx="16.9" cy="13.8" r="1.5" fill="#4a7a20"/><circle cx="12.9" cy="18.5" r="1.8" fill="#5a8a28"/><circle cx="6.4" cy="25.6" r="1.8" fill="#4a7a20"/><circle cx="11.5" cy="12.0" r="1.5" fill="#5a8a28"/><circle cx="13.1" cy="19.4" r="1.6" fill="#8ab840"/><circle cx="13.1" cy="12.9" r="1.2" fill="#4a7a20"/><circle cx="4.4" cy="30.3" r="1.1" fill="#6a9a30"/><circle cx="20.5" cy="7.1" r="1.2" fill="#4a7a20"/><circle cx="10.3" cy="19.0" r="1.1" fill="#8ab840"/><circle cx="11.2" cy="21.1" r="1.0" fill="#6a9a30"/><circle cx="8.7" cy="30.7" r="1.9" fill="#a0c858"/><circle cx="12.6" cy="8.5" r="1.7" fill="#8ab840"/><circle cx="6.9" cy="26.5" r="1.0" fill="#6a9a30"/><circle cx="12.8" cy="12.6" r="1.6" fill="#a0c858"/><circle cx="18.8" cy="29.4" r="1.2" fill="#4a7a20"/><circle cx="24.4" cy="20.3" r="1.5" fill="#a0c858"/><circle cx="20.1" cy="4.4" r="1.6" fill="#4a7a20"/><circle cx="8.5" cy="19.3" r="1.6" fill="#8ab840"/><circle cx="20.2" cy="10.1" r="2.0" fill="#5a8a28"/><circle cx="19.4" cy="21.2" r="1.7" fill="#4a7a20"/><circle cx="15.5" cy="22.1" r="1.3" fill="#a0c858"/><circle cx="11.1" cy="9.7" r="0.9" fill="#6a9a30"/><circle cx="11.6" cy="4.8" r="1.9" fill="#a0c858"/><circle cx="25.8" cy="30.4" r="0.9" fill="#a0c858"/><circle cx="26.1" cy="28.6" r="1.5" fill="#8ab840"/><circle cx="13.2" cy="3.4" r="1.0" fill="#5a8a28"/><circle cx="12.1" cy="12.2" r="0.9" fill="#8ab840"/><circle cx="27.8" cy="24.1" r="1.8" fill="#5a8a28"/><circle cx="23.6" cy="9.7" r="1.4" fill="#6a9a30"/><circle cx="10.5" cy="13.5" r="1.2" fill="#8ab840"/><circle cx="13.3" cy="3.5" r="1.8" fill="#4a7a20"/><circle cx="21.2" cy="20.4" r="0.9" fill="#4a7a20"/><circle cx="25.4" cy="29.6" r="1.8" fill="#a0c858"/><circle cx="20.9" cy="10.3" r="1.1" fill="#6a9a30"/><circle cx="20.9" cy="19.9" r="2.0" fill="#8ab840"/><circle cx="23.3" cy="10.3" r="1.0" fill="#5a8a28"/><circle cx="21.9" cy="11.2" r="1.3" fill="#8ab840"/><circle cx="6.1" cy="25.3" r="1.3" fill="#6a9a30"/><circle cx="13.5" cy="15.9" r="1.2" fill="#a0c858"/><circle cx="4.2" cy="26.0" r="0.9" fill="#6a9a30"/><circle cx="6.9" cy="18.7" r="1.8" fill="#5a8a28"/><circle cx="19.4" cy="5.4" r="1.3" fill="#5a8a28"/><circle cx="16.4" cy="11.3" r="1.5" fill="#4a7a20"/><circle cx="20.6" cy="12.1" r="0.8" fill="#4a7a20"/><circle cx="9.1" cy="26.2" r="1.4" fill="#6a9a30"/><circle cx="21.8" cy="25.8" r="1.1" fill="#a0c858"/><circle cx="26.0" cy="26.7" r="1.5" fill="#5a8a28"/><circle cx="15.0" cy="10.4" r="0.9" fill="#8ab840"/><circle cx="21.3" cy="14.1" r="1.4" fill="#5a8a28"/><circle cx="23.5" cy="29.7" r="1.7" fill="#a0c858"/><circle cx="18.4" cy="11.3" r="1.4" fill="#6a9a30"/><circle cx="12.4" cy="26.8" r="1.2" fill="#5a8a28"/><circle cx="20.1" cy="8.2" r="1.3" fill="#6a9a30"/><circle cx="14.7" cy="3.7" r="1.3" fill="#6a9a30"/><circle cx="11.4" cy="24.1" r="1.5" fill="#5a8a28"/><circle cx="7.1" cy="18.6" r="1.1" fill="#6a9a30"/><circle cx="14.1" cy="15.4" r="1.7" fill="#a0c858"/><circle cx="8.5" cy="15.2" r="1.1" fill="#4a7a20"/><circle cx="21.3" cy="28.2" r="1.6" fill="#a0c858"/><circle cx="16.4" cy="6.8" r="1.4" fill="#5a8a28"/><circle cx="23.4" cy="14.0" r="1.7" fill="#a0c858"/><circle cx="17.8" cy="30.1" r="1.5" fill="#6a9a30"/></svg><svg class="a" style="left:187px;top:253px" width="32" height="33" viewBox="0 0 32 33"><path d="M2.6 32.0 C0.0 19.8 9.6 1.0 16.0 0.7 C22.4 1.0 32.0 19.8 29.4 32.0 Z" fill="#2a5a2a"/><circle cx="15.0" cy="20.1" r="1.5" fill="#3a6a32"/><circle cx="12.3" cy="16.5" r="1.4" fill="#1a4a20"/><circle cx="19.6" cy="24.2" r="1.5" fill="#3a6a32"/><circle cx="19.5" cy="3.7" r="1.0" fill="#2a5a2a"/><circle cx="12.8" cy="12.3" r="0.9" fill="#2a5a2a"/><circle cx="4.4" cy="23.3" r="1.7" fill="#3a6a32"/><circle cx="10.1" cy="14.2" r="1.8" fill="#3a6a32"/><circle cx="26.2" cy="25.3" r="0.9" fill="#3a6a32"/><circle cx="20.8" cy="21.6" r="0.9" fill="#1a4a20"/><circle cx="13.6" cy="4.0" r="1.9" fill="#1a4a20"/><circle cx="14.4" cy="19.0" r="1.4" fill="#4a7a40"/><circle cx="6.8" cy="17.3" r="1.8" fill="#306030"/><circle cx="20.0" cy="6.6" r="0.9" fill="#4a7a40"/><circle cx="23.5" cy="8.8" r="1.2" fill="#306030"/><circle cx="15.0" cy="10.0" r="0.8" fill="#4a7a40"/><circle cx="23.4" cy="19.2" r="1.0" fill="#3a6a32"/><circle cx="17.4" cy="12.3" r="1.1" fill="#3a6a32"/><circle cx="22.8" cy="12.0" r="2.0" fill="#2a5a2a"/><circle cx="19.4" cy="8.0" r="1.1" fill="#1a4a20"/><circle cx="22.4" cy="24.0" r="1.0" fill="#3a6a32"/><circle cx="24.8" cy="17.4" r="0.9" fill="#2a5a2a"/><circle cx="13.2" cy="7.6" r="1.2" fill="#2a5a2a"/><circle cx="13.8" cy="11.3" r="1.3" fill="#1a4a20"/><circle cx="13.1" cy="25.1" r="1.4" fill="#2a5a2a"/><circle cx="14.9" cy="5.8" r="1.6" fill="#2a5a2a"/><circle cx="26.3" cy="28.5" r="1.8" fill="#1a4a20"/><circle cx="21.4" cy="27.4" r="1.4" fill="#3a6a32"/><circle cx="20.0" cy="19.1" r="1.1" fill="#306030"/><circle cx="13.9" cy="4.1" r="1.9" fill="#4a7a40"/><circle cx="20.5" cy="22.9" r="1.8" fill="#4a7a40"/><circle cx="18.1" cy="20.2" r="1.3" fill="#3a6a32"/><circle cx="11.3" cy="7.1" r="1.4" fill="#1a4a20"/><circle cx="18.9" cy="26.3" r="1.9" fill="#4a7a40"/><circle cx="14.3" cy="7.4" r="1.9" fill="#3a6a32"/><circle cx="24.1" cy="16.8" r="1.4" fill="#2a5a2a"/><circle cx="16.9" cy="12.5" r="1.1" fill="#3a6a32"/><circle cx="17.2" cy="24.0" r="1.3" fill="#2a5a2a"/><circle cx="14.2" cy="8.6" r="0.9" fill="#1a4a20"/><circle cx="18.5" cy="5.3" r="1.7" fill="#3a6a32"/><circle cx="24.7" cy="30.5" r="0.9" fill="#306030"/><circle cx="15.5" cy="27.7" r="1.0" fill="#1a4a20"/><circle cx="25.6" cy="22.3" r="1.5" fill="#2a5a2a"/><circle cx="26.2" cy="19.4" r="2.0" fill="#4a7a40"/><circle cx="11.6" cy="18.4" r="1.7" fill="#2a5a2a"/><circle cx="20.5" cy="25.9" r="1.5" fill="#4a7a40"/><circle cx="21.9" cy="8.4" r="1.8" fill="#1a4a20"/><circle cx="11.4" cy="11.8" r="1.5" fill="#2a5a2a"/><circle cx="16.6" cy="17.0" r="1.7" fill="#2a5a2a"/><circle cx="10.9" cy="19.8" r="1.1" fill="#1a4a20"/><circle cx="15.2" cy="11.4" r="1.3" fill="#2a5a2a"/><circle cx="23.6" cy="17.7" r="1.6" fill="#2a5a2a"/><circle cx="13.2" cy="22.6" r="1.5" fill="#1a4a20"/><circle cx="25.2" cy="28.3" r="1.8" fill="#4a7a40"/><circle cx="10.1" cy="15.9" r="1.7" fill="#4a7a40"/><circle cx="16.8" cy="20.1" r="1.8" fill="#4a7a40"/><circle cx="15.0" cy="4.0" r="1.5" fill="#4a7a40"/><circle cx="15.0" cy="25.9" r="0.8" fill="#4a7a40"/><circle cx="20.0" cy="4.5" r="1.1" fill="#1a4a20"/><circle cx="19.9" cy="15.2" r="1.2" fill="#4a7a40"/><circle cx="20.4" cy="17.5" r="1.9" fill="#2a5a2a"/><circle cx="26.3" cy="23.7" r="1.7" fill="#2a5a2a"/><circle cx="15.2" cy="15.2" r="1.6" fill="#1a4a20"/><circle cx="7.4" cy="12.2" r="2.0" fill="#1a4a20"/><circle cx="20.0" cy="21.8" r="2.0" fill="#4a7a40"/><circle cx="9.4" cy="25.4" r="1.8" fill="#2a5a2a"/></svg><svg class="a" style="left:225px;top:253px" width="32" height="33" viewBox="0 0 32 33"><path d="M2.6 32.0 C0.0 19.8 9.6 1.0 16.0 0.7 C22.4 1.0 32.0 19.8 29.4 32.0 Z" fill="#4a7a40"/><circle cx="20.3" cy="3.9" r="1.7" fill="#4a7a40"/><circle cx="18.9" cy="26.5" r="1.6" fill="#4a7a40"/><circle cx="26.6" cy="21.8" r="1.2" fill="#457540"/><circle cx="13.5" cy="8.3" r="0.8" fill="#457540"/><circle cx="13.2" cy="15.3" r="1.1" fill="#6a9a58"/><circle cx="21.1" cy="24.9" r="1.2" fill="#457540"/><circle cx="19.3" cy="3.1" r="0.9" fill="#5a8a50"/><circle cx="19.4" cy="13.9" r="1.7" fill="#6a9a58"/><circle cx="20.5" cy="10.1" r="1.4" fill="#457540"/><circle cx="22.3" cy="9.1" r="1.6" fill="#3a6a30"/><circle cx="8.4" cy="11.9" r="1.5" fill="#5a8a50"/><circle cx="8.4" cy="10.9" r="1.9" fill="#6a9a58"/><circle cx="17.4" cy="16.4" r="1.5" fill="#6a9a58"/><circle cx="8.1" cy="20.4" r="0.9" fill="#4a7a40"/><circle cx="6.9" cy="19.5" r="1.7" fill="#6a9a58"/><circle cx="15.0" cy="6.0" r="1.7" fill="#4a7a40"/><circle cx="12.7" cy="5.4" r="1.4" fill="#457540"/><circle cx="12.0" cy="19.7" r="1.5" fill="#3a6a30"/><circle cx="7.9" cy="30.1" r="1.5" fill="#457540"/><circle cx="13.9" cy="5.4" r="1.0" fill="#3a6a30"/><circle cx="10.6" cy="9.6" r="0.9" fill="#457540"/><circle cx="18.1" cy="21.8" r="1.0" fill="#457540"/><circle cx="23.2" cy="28.8" r="1.3" fill="#457540"/><circle cx="21.3" cy="10.6" r="1.3" fill="#457540"/><circle cx="14.4" cy="3.1" r="1.8" fill="#6a9a58"/><circle cx="9.7" cy="11.9" r="1.0" fill="#6a9a58"/><circle cx="23.7" cy="9.8" r="0.9" fill="#4a7a40"/><circle cx="8.3" cy="23.6" r="0.9" fill="#6a9a58"/><circle cx="24.4" cy="22.7" r="0.9" fill="#6a9a58"/><circle cx="15.9" cy="5.5" r="1.9" fill="#5a8a50"/><circle cx="23.9" cy="21.7" r="0.9" fill="#5a8a50"/><circle cx="28.6" cy="29.0" r="1.7" fill="#3a6a30"/><circle cx="17.3" cy="8.7" r="1.9" fill="#3a6a30"/><circle cx="12.6" cy="6.1" r="1.8" fill="#3a6a30"/><circle cx="12.2" cy="27.8" r="1.4" fill="#457540"/><circle cx="20.6" cy="4.7" r="1.9" fill="#6a9a58"/><circle cx="11.2" cy="15.0" r="1.0" fill="#6a9a58"/><circle cx="8.0" cy="27.3" r="1.8" fill="#4a7a40"/><circle cx="18.5" cy="7.0" r="1.1" fill="#5a8a50"/><circle cx="9.8" cy="12.5" r="1.9" fill="#457540"/><circle cx="23.5" cy="20.1" r="1.8" fill="#4a7a40"/><circle cx="11.4" cy="5.6" r="1.3" fill="#457540"/><circle cx="8.3" cy="30.9" r="1.0" fill="#6a9a58"/><circle cx="17.1" cy="20.1" r="1.0" fill="#6a9a58"/><circle cx="20.4" cy="13.2" r="1.9" fill="#5a8a50"/><circle cx="22.0" cy="6.6" r="1.3" fill="#457540"/><circle cx="20.0" cy="24.9" r="1.7" fill="#457540"/><circle cx="8.0" cy="17.3" r="1.5" fill="#5a8a50"/><circle cx="26.6" cy="21.5" r="1.2" fill="#5a8a50"/><circle cx="25.6" cy="20.7" r="1.7" fill="#5a8a50"/><circle cx="19.4" cy="18.9" r="1.0" fill="#6a9a58"/><circle cx="15.9" cy="9.4" r="1.7" fill="#4a7a40"/><circle cx="18.5" cy="30.0" r="1.9" fill="#3a6a30"/><circle cx="14.8" cy="5.4" r="1.3" fill="#457540"/><circle cx="9.9" cy="20.2" r="1.5" fill="#4a7a40"/><circle cx="9.4" cy="22.4" r="1.4" fill="#457540"/><circle cx="8.5" cy="26.0" r="1.8" fill="#5a8a50"/><circle cx="22.6" cy="16.1" r="1.8" fill="#4a7a40"/><circle cx="15.0" cy="26.2" r="1.4" fill="#6a9a58"/><circle cx="17.2" cy="26.3" r="1.1" fill="#457540"/><circle cx="4.5" cy="22.1" r="1.9" fill="#5a8a50"/><circle cx="18.8" cy="20.7" r="1.6" fill="#457540"/><circle cx="18.5" cy="8.7" r="1.0" fill="#457540"/><circle cx="14.7" cy="20.2" r="1.9" fill="#5a8a50"/><circle cx="14.1" cy="3.8" r="1.7" fill="#457540"/></svg><svg class="a" style="left:263px;top:253px" width="32" height="33" viewBox="0 0 32 33"><path d="M2.6 32.0 C0.0 19.8 9.6 1.0 16.0 0.7 C22.4 1.0 32.0 19.8 29.4 32.0 Z" fill="#3a6a2a"/><circle cx="9.3" cy="11.8" r="1.0" fill="#356530"/><circle cx="20.4" cy="9.3" r="0.9" fill="#5a8a40"/><circle cx="13.4" cy="11.8" r="1.1" fill="#2a5a22"/><circle cx="17.0" cy="20.7" r="0.8" fill="#3a6a2a"/><circle cx="15.2" cy="19.5" r="1.2" fill="#5a8a40"/><circle cx="5.2" cy="20.4" r="1.0" fill="#3a6a2a"/><circle cx="19.7" cy="22.4" r="1.1" fill="#4a7a32"/><circle cx="10.2" cy="9.5" r="1.7" fill="#5a8a40"/><circle cx="15.0" cy="11.7" r="1.0" fill="#4a7a32"/><circle cx="23.3" cy="8.5" r="1.1" fill="#356530"/><circle cx="22.2" cy="25.0" r="1.0" fill="#2a5a22"/><circle cx="15.6" cy="19.6" r="0.9" fill="#356530"/><circle cx="21.6" cy="6.3" r="1.1" fill="#5a8a40"/><circle cx="7.7" cy="18.4" r="1.2" fill="#5a8a40"/><circle cx="17.4" cy="9.2" r="1.5" fill="#4a7a32"/><circle cx="10.0" cy="23.8" r="1.1" fill="#356530"/><circle cx="14.1" cy="22.0" r="1.8" fill="#5a8a40"/><circle cx="17.1" cy="17.7" r="1.6" fill="#3a6a2a"/><circle cx="12.7" cy="6.3" r="1.4" fill="#3a6a2a"/><circle cx="12.0" cy="12.2" r="1.4" fill="#2a5a22"/><circle cx="21.2" cy="11.9" r="1.3" fill="#5a8a40"/><circle cx="24.1" cy="12.1" r="1.2" fill="#2a5a22"/><circle cx="23.0" cy="11.8" r="1.8" fill="#5a8a40"/><circle cx="3.7" cy="26.9" r="1.1" fill="#2a5a22"/><circle cx="12.8" cy="3.1" r="1.4" fill="#5a8a40"/><circle cx="23.8" cy="29.2" r="1.3" fill="#3a6a2a"/><circle cx="14.3" cy="29.0" r="0.9" fill="#356530"/><circle cx="22.7" cy="25.3" r="1.3" fill="#2a5a22"/><circle cx="4.3" cy="27.6" r="1.1" fill="#356530"/><circle cx="13.1" cy="15.9" r="1.6" fill="#4a7a32"/><circle cx="10.7" cy="17.3" r="1.4" fill="#5a8a40"/><circle cx="27.1" cy="20.5" r="1.3" fill="#356530"/><circle cx="6.9" cy="30.8" r="1.2" fill="#4a7a32"/><circle cx="6.4" cy="19.7" r="2.0" fill="#5a8a40"/><circle cx="22.1" cy="7.1" r="1.9" fill="#4a7a32"/><circle cx="17.2" cy="24.7" r="1.8" fill="#2a5a22"/><circle cx="12.8" cy="13.7" r="1.0" fill="#356530"/><circle cx="23.2" cy="10.6" r="1.9" fill="#356530"/><circle cx="26.7" cy="18.1" r="0.9" fill="#4a7a32"/><circle cx="15.1" cy="18.1" r="1.5" fill="#356530"/><circle cx="15.8" cy="19.1" r="1.9" fill="#2a5a22"/><circle cx="11.5" cy="29.9" r="1.5" fill="#2a5a22"/><circle cx="22.1" cy="21.9" r="1.2" fill="#4a7a32"/><circle cx="13.7" cy="17.7" r="1.4" fill="#3a6a2a"/><circle cx="5.8" cy="25.1" r="0.8" fill="#356530"/><circle cx="26.4" cy="29.9" r="0.8" fill="#356530"/><circle cx="12.2" cy="9.4" r="0.9" fill="#4a7a32"/><circle cx="9.3" cy="22.7" r="1.0" fill="#4a7a32"/><circle cx="23.1" cy="12.2" r="1.7" fill="#3a6a2a"/><circle cx="4.3" cy="24.1" r="0.9" fill="#5a8a40"/><circle cx="16.7" cy="26.8" r="1.1" fill="#5a8a40"/><circle cx="17.0" cy="23.5" r="1.1" fill="#2a5a22"/><circle cx="23.6" cy="11.4" r="1.6" fill="#2a5a22"/><circle cx="15.5" cy="14.6" r="1.5" fill="#5a8a40"/><circle cx="5.0" cy="20.1" r="1.5" fill="#2a5a22"/><circle cx="9.6" cy="11.5" r="0.8" fill="#5a8a40"/><circle cx="21.9" cy="6.1" r="1.9" fill="#4a7a32"/><circle cx="17.2" cy="26.4" r="1.5" fill="#2a5a22"/><circle cx="14.8" cy="12.6" r="1.6" fill="#4a7a32"/><circle cx="11.5" cy="4.7" r="1.3" fill="#3a6a2a"/><circle cx="6.3" cy="23.8" r="0.8" fill="#356530"/><circle cx="23.2" cy="15.0" r="1.2" fill="#2a5a22"/><circle cx="15.9" cy="23.1" r="1.3" fill="#4a7a32"/><circle cx="11.8" cy="8.6" r="1.3" fill="#2a5a22"/><circle cx="11.7" cy="6.5" r="1.8" fill="#4a7a32"/></svg><svg class="a" style="left:301px;top:253px" width="32" height="33" viewBox="0 0 32 33"><path d="M2.6 32.0 C0.0 19.8 9.6 1.0 16.0 0.7 C22.4 1.0 32.0 19.8 29.4 32.0 Z" fill="#4a8a28"/><circle cx="23.5" cy="30.1" r="1.9" fill="#4a8a28"/><circle cx="15.6" cy="2.7" r="1.0" fill="#5a9a30"/><circle cx="14.1" cy="26.1" r="1.1" fill="#4a8a28"/><circle cx="13.4" cy="26.3" r="1.7" fill="#6aaa38"/><circle cx="9.9" cy="13.3" r="1.6" fill="#80b848"/><circle cx="16.9" cy="12.5" r="0.9" fill="#6aaa38"/><circle cx="25.7" cy="30.1" r="1.4" fill="#3a6a20"/><circle cx="22.1" cy="10.8" r="0.9" fill="#6aaa38"/><circle cx="16.8" cy="28.8" r="2.0" fill="#4a8a28"/><circle cx="15.3" cy="28.4" r="1.0" fill="#4a8a28"/><circle cx="15.8" cy="17.6" r="1.1" fill="#80b848"/><circle cx="17.7" cy="14.6" r="1.5" fill="#4a8a28"/><circle cx="21.0" cy="8.5" r="0.9" fill="#6aaa38"/><circle cx="22.0" cy="30.7" r="1.9" fill="#6aaa38"/><circle cx="19.8" cy="4.6" r="1.6" fill="#6aaa38"/><circle cx="6.7" cy="23.8" r="1.4" fill="#3a6a20"/><circle cx="27.3" cy="22.2" r="1.2" fill="#4a8a28"/><circle cx="12.1" cy="15.7" r="1.0" fill="#4a8a28"/><circle cx="17.3" cy="9.2" r="0.9" fill="#80b848"/><circle cx="11.3" cy="21.5" r="1.2" fill="#3a6a20"/><circle cx="8.0" cy="29.6" r="1.5" fill="#5a9a30"/><circle cx="16.1" cy="13.0" r="1.9" fill="#4a8a28"/><circle cx="13.4" cy="4.2" r="1.4" fill="#4a8a28"/><circle cx="14.8" cy="2.8" r="1.8" fill="#80b848"/><circle cx="11.0" cy="13.4" r="1.5" fill="#5a9a30"/><circle cx="8.1" cy="15.4" r="1.9" fill="#3a6a20"/><circle cx="20.3" cy="4.2" r="1.9" fill="#80b848"/><circle cx="12.8" cy="4.3" r="1.0" fill="#3a6a20"/><circle cx="8.4" cy="15.2" r="1.6" fill="#80b848"/><circle cx="22.0" cy="30.9" r="1.0" fill="#80b848"/><circle cx="27.8" cy="27.2" r="0.8" fill="#5a9a30"/><circle cx="16.1" cy="14.3" r="1.3" fill="#6aaa38"/><circle cx="13.6" cy="10.5" r="1.8" fill="#4a8a28"/><circle cx="14.5" cy="18.5" r="1.9" fill="#6aaa38"/><circle cx="9.1" cy="28.2" r="1.6" fill="#4a8a28"/><circle cx="7.0" cy="28.6" r="1.3" fill="#3a6a20"/><circle cx="15.2" cy="4.4" r="1.1" fill="#3a6a20"/><circle cx="10.4" cy="20.6" r="1.5" fill="#5a9a30"/><circle cx="21.4" cy="29.7" r="1.5" fill="#4a8a28"/><circle cx="11.1" cy="4.6" r="1.5" fill="#3a6a20"/><circle cx="10.6" cy="19.2" r="1.4" fill="#3a6a20"/><circle cx="17.9" cy="2.9" r="1.2" fill="#6aaa38"/><circle cx="8.1" cy="26.2" r="1.8" fill="#3a6a20"/><circle cx="17.7" cy="17.4" r="1.5" fill="#3a6a20"/><circle cx="19.3" cy="22.9" r="1.1" fill="#3a6a20"/><circle cx="8.9" cy="23.9" r="0.9" fill="#3a6a20"/><circle cx="6.4" cy="22.9" r="1.2" fill="#80b848"/><circle cx="9.9" cy="16.1" r="0.8" fill="#3a6a20"/><circle cx="19.9" cy="6.9" r="1.1" fill="#6aaa38"/><circle cx="15.5" cy="11.2" r="1.1" fill="#6aaa38"/><circle cx="23.3" cy="14.3" r="1.0" fill="#4a8a28"/><circle cx="10.0" cy="6.0" r="1.8" fill="#4a8a28"/><circle cx="5.5" cy="29.1" r="1.3" fill="#6aaa38"/><circle cx="8.2" cy="28.3" r="1.8" fill="#4a8a28"/><circle cx="14.7" cy="27.7" r="1.2" fill="#6aaa38"/><circle cx="19.6" cy="28.4" r="1.9" fill="#6aaa38"/><circle cx="16.3" cy="13.4" r="1.3" fill="#6aaa38"/><circle cx="13.1" cy="17.8" r="1.3" fill="#80b848"/><circle cx="12.8" cy="5.6" r="0.9" fill="#3a6a20"/><circle cx="22.2" cy="28.9" r="1.4" fill="#3a6a20"/><circle cx="20.0" cy="24.7" r="1.1" fill="#5a9a30"/><circle cx="21.2" cy="27.6" r="1.5" fill="#4a8a28"/><circle cx="17.3" cy="15.9" r="1.2" fill="#6aaa38"/><circle cx="13.8" cy="15.4" r="1.0" fill="#3a6a20"/><circle cx="29.4" cy="30.4" r="1.6" fill="#3a6a20"/></svg><svg class="a" style="left:339px;top:253px" width="32" height="33" viewBox="0 0 32 33"><path d="M2.6 32.0 C0.0 19.8 9.6 1.0 16.0 0.7 C22.4 1.0 32.0 19.8 29.4 32.0 Z" fill="#9a9a20"/><circle cx="7.7" cy="11.4" r="1.4" fill="#7a7a18"/><circle cx="19.2" cy="23.7" r="1.3" fill="#7a7a18"/><circle cx="14.2" cy="16.7" r="2.0" fill="#8a8a20"/><circle cx="20.4" cy="16.6" r="1.8" fill="#9a9a20"/><circle cx="17.6" cy="3.4" r="1.5" fill="#7a7a18"/><circle cx="22.1" cy="25.4" r="1.2" fill="#b8b830"/><circle cx="20.5" cy="12.5" r="1.0" fill="#9a9a20"/><circle cx="18.3" cy="12.4" r="1.3" fill="#7a7a18"/><circle cx="19.8" cy="20.6" r="1.3" fill="#c8c840"/><circle cx="8.7" cy="23.4" r="1.5" fill="#b8b830"/><circle cx="13.3" cy="28.2" r="1.2" fill="#9a9a20"/><circle cx="5.0" cy="30.7" r="1.3" fill="#b8b830"/><circle cx="21.4" cy="9.1" r="1.1" fill="#9a9a20"/><circle cx="9.6" cy="9.0" r="1.8" fill="#7a7a18"/><circle cx="20.4" cy="17.0" r="0.8" fill="#9a9a20"/><circle cx="17.0" cy="9.0" r="1.3" fill="#7a7a18"/><circle cx="12.3" cy="28.7" r="1.6" fill="#9a9a20"/><circle cx="14.4" cy="19.3" r="1.8" fill="#b8b830"/><circle cx="7.6" cy="19.1" r="1.5" fill="#9a9a20"/><circle cx="7.0" cy="30.9" r="1.8" fill="#7a7a18"/><circle cx="15.1" cy="6.3" r="1.8" fill="#7a7a18"/><circle cx="14.7" cy="9.3" r="1.3" fill="#b8b830"/><circle cx="22.2" cy="9.2" r="1.1" fill="#c8c840"/><circle cx="17.6" cy="12.6" r="1.7" fill="#8a8a20"/><circle cx="12.2" cy="13.7" r="1.8" fill="#7a7a18"/><circle cx="22.4" cy="8.6" r="1.7" fill="#9a9a20"/><circle cx="22.1" cy="19.5" r="1.5" fill="#9a9a20"/><circle cx="19.8" cy="5.2" r="1.2" fill="#7a7a18"/><circle cx="4.6" cy="22.4" r="1.1" fill="#7a7a18"/><circle cx="8.3" cy="24.0" r="1.5" fill="#9a9a20"/><circle cx="8.5" cy="22.3" r="1.2" fill="#8a8a20"/><circle cx="20.5" cy="6.0" r="1.5" fill="#9a9a20"/><circle cx="15.1" cy="17.3" r="1.1" fill="#b8b830"/><circle cx="8.9" cy="25.6" r="1.2" fill="#b8b830"/><circle cx="23.7" cy="19.4" r="1.4" fill="#9a9a20"/><circle cx="19.0" cy="29.6" r="1.2" fill="#7a7a18"/><circle cx="14.3" cy="28.6" r="2.0" fill="#b8b830"/><circle cx="20.3" cy="4.5" r="1.6" fill="#9a9a20"/><circle cx="10.4" cy="5.4" r="1.7" fill="#9a9a20"/><circle cx="6.9" cy="24.7" r="1.9" fill="#c8c840"/><circle cx="24.0" cy="21.3" r="1.9" fill="#8a8a20"/><circle cx="17.3" cy="10.8" r="1.3" fill="#b8b830"/><circle cx="11.8" cy="23.6" r="1.1" fill="#b8b830"/><circle cx="10.4" cy="18.3" r="0.8" fill="#c8c840"/><circle cx="7.8" cy="30.1" r="0.9" fill="#c8c840"/><circle cx="15.2" cy="4.3" r="1.4" fill="#c8c840"/><circle cx="13.2" cy="17.2" r="1.2" fill="#7a7a18"/><circle cx="18.8" cy="4.4" r="1.9" fill="#b8b830"/><circle cx="19.1" cy="18.7" r="1.2" fill="#9a9a20"/><circle cx="19.5" cy="5.7" r="1.7" fill="#9a9a20"/><circle cx="10.5" cy="8.3" r="1.3" fill="#b8b830"/><circle cx="13.4" cy="10.7" r="1.4" fill="#c8c840"/><circle cx="20.3" cy="24.5" r="1.5" fill="#9a9a20"/><circle cx="14.4" cy="14.0" r="2.0" fill="#8a8a20"/><circle cx="14.3" cy="28.2" r="1.4" fill="#c8c840"/><circle cx="18.9" cy="11.9" r="1.1" fill="#c8c840"/><circle cx="23.6" cy="12.2" r="1.0" fill="#7a7a18"/><circle cx="14.2" cy="13.3" r="1.2" fill="#c8c840"/><circle cx="15.7" cy="20.9" r="1.2" fill="#9a9a20"/><circle cx="22.0" cy="25.3" r="1.1" fill="#c8c840"/><circle cx="6.6" cy="29.6" r="1.5" fill="#9a9a20"/><circle cx="15.7" cy="13.9" r="1.6" fill="#8a8a20"/><circle cx="28.9" cy="29.4" r="1.0" fill="#8a8a20"/><circle cx="4.5" cy="26.7" r="1.4" fill="#9a9a20"/><circle cx="4.3" cy="30.5" r="1.8" fill="#9a9a20"/></svg><svg class="a" style="left:377px;top:253px" width="32" height="33" viewBox="0 0 32 33"><path d="M2.6 32.0 C0.0 19.8 9.6 1.0 16.0 0.7 C22.4 1.0 32.0 19.8 29.4 32.0 Z" fill="#7a9a20"/><circle cx="28.1" cy="24.0" r="1.5" fill="#b0c840"/><circle cx="26.8" cy="23.6" r="1.2" fill="#9ab830"/><circle cx="20.6" cy="7.8" r="1.5" fill="#9ab830"/><circle cx="21.8" cy="9.1" r="1.6" fill="#b0c840"/><circle cx="17.7" cy="7.8" r="1.5" fill="#7a9a20"/><circle cx="20.5" cy="5.2" r="1.2" fill="#6a8a20"/><circle cx="25.9" cy="21.2" r="2.0" fill="#6a8a20"/><circle cx="11.4" cy="18.9" r="1.7" fill="#b0c840"/><circle cx="17.5" cy="11.9" r="1.6" fill="#5a7a18"/><circle cx="12.4" cy="9.3" r="1.3" fill="#6a8a20"/><circle cx="6.8" cy="29.6" r="1.2" fill="#5a7a18"/><circle cx="12.8" cy="11.1" r="1.7" fill="#7a9a20"/><circle cx="13.7" cy="29.5" r="1.2" fill="#5a7a18"/><circle cx="24.0" cy="26.4" r="1.2" fill="#b0c840"/><circle cx="6.8" cy="24.2" r="1.9" fill="#9ab830"/><circle cx="11.6" cy="30.3" r="1.7" fill="#9ab830"/><circle cx="13.3" cy="22.0" r="1.9" fill="#b0c840"/><circle cx="11.7" cy="9.7" r="1.2" fill="#9ab830"/><circle cx="12.9" cy="29.4" r="1.6" fill="#b0c840"/><circle cx="22.0" cy="22.4" r="1.9" fill="#7a9a20"/><circle cx="16.2" cy="23.2" r="1.4" fill="#7a9a20"/><circle cx="17.5" cy="4.6" r="1.0" fill="#b0c840"/><circle cx="18.2" cy="19.6" r="1.2" fill="#5a7a18"/><circle cx="17.9" cy="22.6" r="1.0" fill="#9ab830"/><circle cx="18.4" cy="19.9" r="1.6" fill="#b0c840"/><circle cx="12.4" cy="13.9" r="1.7" fill="#6a8a20"/><circle cx="7.5" cy="11.7" r="1.7" fill="#5a7a18"/><circle cx="19.9" cy="27.8" r="1.8" fill="#b0c840"/><circle cx="12.7" cy="14.4" r="1.2" fill="#7a9a20"/><circle cx="8.8" cy="30.7" r="1.9" fill="#5a7a18"/><circle cx="22.6" cy="29.0" r="1.4" fill="#7a9a20"/><circle cx="12.5" cy="25.8" r="1.1" fill="#6a8a20"/><circle cx="17.2" cy="13.1" r="0.8" fill="#9ab830"/><circle cx="23.0" cy="12.1" r="1.5" fill="#9ab830"/><circle cx="17.2" cy="23.2" r="1.3" fill="#b0c840"/><circle cx="26.4" cy="31.0" r="1.9" fill="#6a8a20"/><circle cx="21.8" cy="13.6" r="2.0" fill="#9ab830"/><circle cx="12.2" cy="6.3" r="1.3" fill="#7a9a20"/><circle cx="20.1" cy="30.4" r="0.9" fill="#6a8a20"/><circle cx="9.5" cy="26.0" r="1.7" fill="#6a8a20"/><circle cx="6.3" cy="21.4" r="1.1" fill="#b0c840"/><circle cx="8.1" cy="24.0" r="1.7" fill="#6a8a20"/><circle cx="24.1" cy="24.5" r="1.9" fill="#6a8a20"/><circle cx="13.6" cy="22.8" r="1.7" fill="#5a7a18"/><circle cx="21.9" cy="21.0" r="2.0" fill="#9ab830"/><circle cx="25.8" cy="18.3" r="2.0" fill="#5a7a18"/><circle cx="9.1" cy="21.8" r="0.9" fill="#b0c840"/><circle cx="15.7" cy="5.6" r="1.8" fill="#5a7a18"/><circle cx="16.0" cy="3.9" r="1.8" fill="#6a8a20"/><circle cx="8.0" cy="13.0" r="0.9" fill="#9ab830"/><circle cx="24.2" cy="23.5" r="1.8" fill="#9ab830"/><circle cx="22.5" cy="30.4" r="1.0" fill="#7a9a20"/><circle cx="15.1" cy="6.5" r="1.6" fill="#9ab830"/><circle cx="14.3" cy="7.8" r="1.4" fill="#6a8a20"/><circle cx="17.8" cy="17.9" r="1.3" fill="#9ab830"/><circle cx="9.7" cy="20.1" r="1.0" fill="#9ab830"/><circle cx="9.4" cy="27.7" r="1.1" fill="#6a8a20"/><circle cx="18.4" cy="10.0" r="1.7" fill="#5a7a18"/><circle cx="26.1" cy="19.4" r="0.9" fill="#6a8a20"/><circle cx="18.0" cy="20.2" r="1.0" fill="#7a9a20"/><circle cx="12.0" cy="9.3" r="1.6" fill="#b0c840"/><circle cx="13.8" cy="10.2" r="1.8" fill="#6a8a20"/><circle cx="22.3" cy="22.7" r="1.8" fill="#b0c840"/><circle cx="3.9" cy="26.8" r="1.1" fill="#6a8a20"/><circle cx="21.4" cy="28.8" r="0.9" fill="#9ab830"/></svg><svg class="a" style="left:415px;top:253px" width="32" height="33" viewBox="0 0 32 33"><path d="M2.6 32.0 C0.0 19.8 9.6 1.0 16.0 0.7 C22.4 1.0 32.0 19.8 29.4 32.0 Z" fill="#b0b028"/><circle cx="14.6" cy="3.8" r="1.0" fill="#e0e060"/><circle cx="20.6" cy="22.7" r="1.8" fill="#b0b028"/><circle cx="17.4" cy="11.6" r="1.9" fill="#909020"/><circle cx="12.7" cy="4.8" r="1.4" fill="#a0a030"/><circle cx="10.5" cy="5.3" r="1.6" fill="#b0b028"/><circle cx="28.3" cy="24.6" r="1.7" fill="#b0b028"/><circle cx="24.8" cy="13.7" r="0.9" fill="#a0a030"/><circle cx="12.5" cy="6.1" r="1.8" fill="#e0e060"/><circle cx="18.9" cy="25.1" r="1.5" fill="#909020"/><circle cx="9.7" cy="6.6" r="1.4" fill="#e0e060"/><circle cx="16.4" cy="27.9" r="1.9" fill="#e0e060"/><circle cx="11.1" cy="4.7" r="1.9" fill="#e0e060"/><circle cx="18.3" cy="4.5" r="1.2" fill="#d0d040"/><circle cx="21.2" cy="9.2" r="1.2" fill="#d0d040"/><circle cx="17.7" cy="13.2" r="1.0" fill="#909020"/><circle cx="18.5" cy="16.2" r="1.0" fill="#b0b028"/><circle cx="12.6" cy="10.7" r="2.0" fill="#b0b028"/><circle cx="18.5" cy="26.3" r="1.9" fill="#d0d040"/><circle cx="15.7" cy="4.6" r="1.6" fill="#e0e060"/><circle cx="22.6" cy="16.4" r="0.9" fill="#b0b028"/><circle cx="24.1" cy="14.9" r="2.0" fill="#909020"/><circle cx="11.9" cy="16.1" r="0.9" fill="#a0a030"/><circle cx="16.8" cy="2.7" r="1.0" fill="#b0b028"/><circle cx="13.8" cy="26.6" r="1.9" fill="#a0a030"/><circle cx="12.4" cy="22.1" r="1.1" fill="#d0d040"/><circle cx="20.8" cy="6.4" r="1.8" fill="#e0e060"/><circle cx="8.3" cy="15.6" r="1.3" fill="#a0a030"/><circle cx="25.6" cy="29.8" r="1.5" fill="#d0d040"/><circle cx="15.3" cy="18.2" r="1.1" fill="#909020"/><circle cx="21.5" cy="28.6" r="1.0" fill="#e0e060"/><circle cx="13.6" cy="23.5" r="1.2" fill="#909020"/><circle cx="11.6" cy="19.3" r="1.0" fill="#b0b028"/><circle cx="12.6" cy="28.4" r="1.5" fill="#d0d040"/><circle cx="18.2" cy="6.6" r="1.9" fill="#a0a030"/><circle cx="6.9" cy="13.2" r="1.2" fill="#d0d040"/><circle cx="6.4" cy="23.4" r="1.1" fill="#d0d040"/><circle cx="19.3" cy="22.9" r="1.2" fill="#d0d040"/><circle cx="9.5" cy="20.9" r="1.8" fill="#b0b028"/><circle cx="11.4" cy="29.3" r="1.7" fill="#a0a030"/><circle cx="8.2" cy="16.8" r="1.1" fill="#909020"/><circle cx="12.0" cy="4.2" r="1.1" fill="#909020"/><circle cx="20.4" cy="4.7" r="2.0" fill="#d0d040"/><circle cx="8.3" cy="18.6" r="1.1" fill="#909020"/><circle cx="17.3" cy="24.7" r="1.6" fill="#909020"/><circle cx="17.0" cy="7.4" r="0.9" fill="#b0b028"/><circle cx="19.6" cy="5.0" r="1.0" fill="#e0e060"/><circle cx="5.9" cy="29.0" r="1.8" fill="#a0a030"/><circle cx="11.2" cy="23.1" r="1.5" fill="#b0b028"/><circle cx="22.0" cy="26.8" r="1.9" fill="#e0e060"/><circle cx="17.9" cy="22.9" r="1.2" fill="#d0d040"/><circle cx="15.4" cy="28.5" r="1.3" fill="#d0d040"/><circle cx="7.3" cy="18.2" r="1.0" fill="#b0b028"/><circle cx="11.9" cy="20.7" r="1.9" fill="#909020"/><circle cx="18.0" cy="20.1" r="1.8" fill="#d0d040"/><circle cx="24.7" cy="17.0" r="1.6" fill="#909020"/><circle cx="23.3" cy="17.4" r="1.6" fill="#e0e060"/><circle cx="9.9" cy="18.7" r="0.9" fill="#a0a030"/><circle cx="7.0" cy="15.9" r="1.5" fill="#a0a030"/><circle cx="16.8" cy="5.5" r="1.8" fill="#909020"/><circle cx="10.0" cy="14.7" r="0.8" fill="#a0a030"/><circle cx="26.8" cy="21.0" r="1.7" fill="#e0e060"/><circle cx="15.1" cy="19.5" r="0.9" fill="#d0d040"/><circle cx="4.7" cy="24.3" r="1.1" fill="#b0b028"/><circle cx="15.8" cy="14.2" r="1.0" fill="#d0d040"/><circle cx="9.3" cy="9.3" r="2.0" fill="#e0e060"/></svg><svg class="a" style="left:62px;top:288px" width="32" height="33" viewBox="0 0 32 33"><rect x="15.2" y="16.5" width="1.6" height="16.5" fill="#4a3a2a"/><ellipse cx="17.2" cy="5.0" rx="7.2" ry="3.6" fill="#3a5a40"/><circle cx="14.4" cy="6.5" r="1.8" fill="#6a8a58"/><circle cx="15.2" cy="2.9" r="1.0" fill="#6a8a58"/><circle cx="11.9" cy="6.3" r="1.6" fill="#3a5a40"/><circle cx="19.6" cy="5.5" r="1.7" fill="#4a6a40"/><circle cx="16.9" cy="3.9" r="1.9" fill="#2a3a30"/><circle cx="14.3" cy="6.5" r="1.2" fill="#6a8a58"/><circle cx="23.9" cy="5.2" r="1.1" fill="#2a3a30"/><circle cx="22.0" cy="7.3" r="1.1" fill="#4a6a40"/><circle cx="11.1" cy="5.6" r="0.8" fill="#6a8a58"/><circle cx="20.5" cy="2.7" r="1.7" fill="#2a3a30"/><circle cx="19.5" cy="5.0" r="1.2" fill="#2a3a30"/><circle cx="14.9" cy="7.0" r="1.7" fill="#8a9a70"/><ellipse cx="18.0" cy="11.5" rx="11.2" ry="3.6" fill="#3a5a40"/><circle cx="14.0" cy="12.4" r="1.3" fill="#3a5a40"/><circle cx="21.2" cy="11.4" r="1.3" fill="#3a5a40"/><circle cx="19.6" cy="11.2" r="1.3" fill="#4a6a40"/><circle cx="16.1" cy="13.7" r="1.0" fill="#8a9a70"/><circle cx="23.7" cy="13.7" r="1.0" fill="#6a8a58"/><circle cx="22.5" cy="12.4" r="1.7" fill="#4a6a40"/><circle cx="21.3" cy="9.7" r="1.1" fill="#6a8a58"/><circle cx="26.7" cy="12.1" r="1.6" fill="#2a3a30"/><circle cx="12.9" cy="10.5" r="1.0" fill="#6a8a58"/><circle cx="18.3" cy="11.5" r="1.4" fill="#2a3a30"/><circle cx="12.1" cy="13.2" r="1.2" fill="#4a6a40"/><circle cx="12.9" cy="12.0" r="1.1" fill="#8a9a70"/><ellipse cx="14.6" cy="18.2" rx="12.8" ry="3.6" fill="#3a5a40"/><circle cx="18.8" cy="18.8" r="1.0" fill="#4a6a40"/><circle cx="26.1" cy="18.5" r="2.0" fill="#3a5a40"/><circle cx="20.3" cy="17.2" r="1.6" fill="#8a9a70"/><circle cx="6.5" cy="17.4" r="1.3" fill="#3a5a40"/><circle cx="20.0" cy="20.2" r="1.0" fill="#4a6a40"/><circle cx="7.6" cy="15.6" r="1.1" fill="#6a8a58"/><circle cx="15.3" cy="17.1" r="1.5" fill="#2a3a30"/><circle cx="5.6" cy="18.0" r="1.8" fill="#4a6a40"/><circle cx="16.7" cy="19.5" r="1.4" fill="#2a3a30"/><circle cx="20.3" cy="18.8" r="1.5" fill="#3a5a40"/><circle cx="17.9" cy="18.2" r="1.3" fill="#4a6a40"/><circle cx="20.0" cy="21.1" r="1.2" fill="#8a9a70"/></svg><svg class="a" style="left:100px;top:288px" width="32" height="33" viewBox="0 0 32 33"><rect x="15.2" y="16.5" width="1.6" height="16.5" fill="#4a3a2a"/><ellipse cx="16.0" cy="5.0" rx="7.2" ry="3.6" fill="#7a9a38"/><circle cx="10.4" cy="6.3" r="1.8" fill="#b0c860"/><circle cx="12.1" cy="5.2" r="1.2" fill="#b0c860"/><circle cx="18.5" cy="8.0" r="1.6" fill="#7a9a38"/><circle cx="19.4" cy="4.6" r="0.9" fill="#7a9a38"/><circle cx="18.3" cy="2.8" r="1.7" fill="#7a9a38"/><circle cx="14.4" cy="7.6" r="1.0" fill="#6a8a30"/><circle cx="22.4" cy="4.1" r="1.3" fill="#b0c860"/><circle cx="12.5" cy="7.1" r="0.8" fill="#b0c860"/><circle cx="20.8" cy="3.8" r="1.7" fill="#6a8a30"/><circle cx="19.8" cy="6.3" r="1.2" fill="#5a7a28"/><circle cx="14.2" cy="7.8" r="1.9" fill="#b0c860"/><circle cx="17.4" cy="3.1" r="1.2" fill="#6a8a30"/><ellipse cx="17.0" cy="11.5" rx="11.2" ry="3.6" fill="#7a9a38"/><circle cx="23.5" cy="12.3" r="0.8" fill="#b0c860"/><circle cx="21.4" cy="11.4" r="1.5" fill="#6a8a30"/><circle cx="16.1" cy="12.3" r="1.5" fill="#6a8a30"/><circle cx="8.3" cy="10.2" r="1.1" fill="#9ab848"/><circle cx="9.3" cy="9.3" r="1.0" fill="#7a9a38"/><circle cx="25.4" cy="12.6" r="1.8" fill="#b0c860"/><circle cx="11.9" cy="9.3" r="1.6" fill="#7a9a38"/><circle cx="15.1" cy="11.5" r="0.8" fill="#5a7a28"/><circle cx="7.4" cy="11.1" r="1.4" fill="#7a9a38"/><circle cx="13.6" cy="13.8" r="1.2" fill="#b0c860"/><circle cx="19.4" cy="11.5" r="1.8" fill="#9ab848"/><circle cx="17.0" cy="11.0" r="1.9" fill="#b0c860"/><ellipse cx="14.3" cy="18.2" rx="12.8" ry="3.6" fill="#7a9a38"/><circle cx="25.7" cy="19.1" r="1.4" fill="#5a7a28"/><circle cx="19.0" cy="18.7" r="1.2" fill="#6a8a30"/><circle cx="14.8" cy="18.1" r="1.8" fill="#7a9a38"/><circle cx="18.8" cy="20.0" r="1.8" fill="#b0c860"/><circle cx="17.4" cy="20.1" r="1.7" fill="#5a7a28"/><circle cx="3.4" cy="17.6" r="2.0" fill="#5a7a28"/><circle cx="21.3" cy="18.3" r="1.2" fill="#b0c860"/><circle cx="23.3" cy="19.9" r="1.1" fill="#5a7a28"/><circle cx="16.9" cy="16.8" r="1.3" fill="#7a9a38"/><circle cx="9.3" cy="19.2" r="1.3" fill="#7a9a38"/><circle cx="19.7" cy="17.8" r="1.9" fill="#9ab848"/><circle cx="19.0" cy="20.2" r="1.8" fill="#7a9a38"/></svg><svg class="a" style="left:138px;top:288px" width="32" height="33" viewBox="0 0 32 33"><rect x="15.2" y="16.5" width="1.6" height="16.5" fill="#4a3a2a"/><ellipse cx="15.7" cy="5.0" rx="7.2" ry="3.6" fill="#6a9a38"/><circle cx="11.8" cy="7.7" r="1.7" fill="#8aaa48"/><circle cx="12.9" cy="3.7" r="2.0" fill="#5a8a30"/><circle cx="21.6" cy="3.9" r="1.7" fill="#8aaa48"/><circle cx="13.7" cy="3.0" r="1.9" fill="#8aaa48"/><circle cx="15.6" cy="6.3" r="1.5" fill="#4a7a28"/><circle cx="21.8" cy="5.6" r="1.0" fill="#6a9a38"/><circle cx="21.6" cy="3.9" r="1.5" fill="#4a7a28"/><circle cx="17.6" cy="7.0" r="1.3" fill="#4a7a28"/><circle cx="18.5" cy="7.8" r="1.8" fill="#8aaa48"/><circle cx="17.5" cy="2.2" r="1.7" fill="#6a9a38"/><circle cx="19.9" cy="3.9" r="1.7" fill="#5a8a30"/><circle cx="19.0" cy="6.0" r="0.9" fill="#6a9a38"/><ellipse cx="14.9" cy="11.5" rx="11.2" ry="3.6" fill="#6a9a38"/><circle cx="16.0" cy="8.8" r="0.9" fill="#6a9a38"/><circle cx="13.5" cy="10.9" r="1.4" fill="#a0c060"/><circle cx="19.8" cy="9.4" r="1.5" fill="#5a8a30"/><circle cx="21.6" cy="12.8" r="1.5" fill="#8aaa48"/><circle cx="18.5" cy="13.2" r="1.8" fill="#4a7a28"/><circle cx="16.0" cy="13.1" r="1.9" fill="#8aaa48"/><circle cx="7.8" cy="10.4" r="1.8" fill="#4a7a28"/><circle cx="10.7" cy="10.8" r="0.9" fill="#6a9a38"/><circle cx="20.5" cy="9.3" r="1.4" fill="#a0c060"/><circle cx="13.8" cy="13.3" r="1.0" fill="#8aaa48"/><circle cx="18.8" cy="13.4" r="1.5" fill="#8aaa48"/><circle cx="22.3" cy="13.9" r="0.8" fill="#4a7a28"/><ellipse cx="14.6" cy="18.2" rx="12.8" ry="3.6" fill="#6a9a38"/><circle cx="10.2" cy="20.7" r="1.4" fill="#6a9a38"/><circle cx="11.7" cy="21.3" r="2.0" fill="#8aaa48"/><circle cx="19.5" cy="17.9" r="1.1" fill="#4a7a28"/><circle cx="16.0" cy="15.8" r="0.9" fill="#4a7a28"/><circle cx="24.8" cy="16.5" r="1.6" fill="#5a8a30"/><circle cx="18.4" cy="17.2" r="1.0" fill="#8aaa48"/><circle cx="20.7" cy="18.3" r="1.8" fill="#5a8a30"/><circle cx="5.0" cy="17.8" r="0.9" fill="#4a7a28"/><circle cx="20.8" cy="17.1" r="1.7" fill="#6a9a38"/><circle cx="17.1" cy="16.6" r="1.1" fill="#a0c060"/><circle cx="22.9" cy="19.7" r="1.4" fill="#4a7a28"/><circle cx="22.9" cy="20.4" r="1.7" fill="#8aaa48"/></svg><svg class="a" style="left:176px;top:288px" width="32" height="33" viewBox="0 0 32 33"><rect x="15.2" y="16.5" width="1.6" height="16.5" fill="#4a3a2a"/><ellipse cx="14.7" cy="5.0" rx="7.2" ry="3.6" fill="#6a8a30"/><circle cx="17.1" cy="2.1" r="0.9" fill="#4a6a20"/><circle cx="19.5" cy="6.5" r="0.8" fill="#a0b858"/><circle cx="19.3" cy="4.7" r="1.2" fill="#5a7a28"/><circle cx="12.1" cy="2.6" r="0.8" fill="#8aa840"/><circle cx="16.3" cy="2.6" r="1.6" fill="#a0b858"/><circle cx="19.7" cy="4.2" r="1.2" fill="#5a7a28"/><circle cx="12.8" cy="5.3" r="2.0" fill="#6a8a30"/><circle cx="12.4" cy="3.2" r="0.9" fill="#5a7a28"/><circle cx="20.7" cy="4.5" r="1.3" fill="#8aa840"/><circle cx="15.2" cy="5.8" r="1.9" fill="#4a6a20"/><circle cx="17.0" cy="2.4" r="1.8" fill="#4a6a20"/><circle cx="18.5" cy="6.8" r="1.3" fill="#6a8a30"/><ellipse cx="14.2" cy="11.5" rx="11.2" ry="3.6" fill="#6a8a30"/><circle cx="14.1" cy="15.0" r="1.0" fill="#8aa840"/><circle cx="14.7" cy="8.5" r="1.0" fill="#8aa840"/><circle cx="21.8" cy="13.0" r="1.2" fill="#4a6a20"/><circle cx="14.2" cy="14.2" r="0.9" fill="#8aa840"/><circle cx="11.9" cy="10.7" r="0.9" fill="#a0b858"/><circle cx="19.3" cy="13.8" r="1.6" fill="#6a8a30"/><circle cx="7.6" cy="11.3" r="1.0" fill="#4a6a20"/><circle cx="3.9" cy="11.7" r="2.0" fill="#8aa840"/><circle cx="14.1" cy="11.2" r="1.2" fill="#6a8a30"/><circle cx="5.2" cy="11.6" r="1.9" fill="#8aa840"/><circle cx="8.4" cy="13.8" r="1.0" fill="#a0b858"/><circle cx="8.0" cy="11.5" r="1.2" fill="#4a6a20"/><ellipse cx="17.9" cy="18.2" rx="12.8" ry="3.6" fill="#6a8a30"/><circle cx="9.2" cy="17.0" r="1.7" fill="#4a6a20"/><circle cx="19.2" cy="18.5" r="1.0" fill="#8aa840"/><circle cx="27.8" cy="16.5" r="1.6" fill="#4a6a20"/><circle cx="15.3" cy="19.7" r="1.8" fill="#5a7a28"/><circle cx="8.6" cy="17.5" r="1.3" fill="#5a7a28"/><circle cx="14.4" cy="18.6" r="1.2" fill="#6a8a30"/><circle cx="16.1" cy="21.0" r="1.1" fill="#6a8a30"/><circle cx="9.7" cy="19.2" r="1.7" fill="#5a7a28"/><circle cx="10.5" cy="16.9" r="1.5" fill="#5a7a28"/><circle cx="10.1" cy="17.2" r="1.8" fill="#a0b858"/><circle cx="24.0" cy="20.8" r="1.9" fill="#5a7a28"/><circle cx="23.5" cy="15.6" r="1.1" fill="#5a7a28"/></svg><svg class="a" style="left:214px;top:288px" width="32" height="33" viewBox="0 0 32 33"><rect x="15.2" y="16.5" width="1.6" height="16.5" fill="#4a3a2a"/><ellipse cx="14.5" cy="5.0" rx="7.2" ry="3.6" fill="#7a9a28"/><circle cx="17.8" cy="5.9" r="1.2" fill="#9ab838"/><circle cx="15.7" cy="6.8" r="1.6" fill="#9ab838"/><circle cx="10.2" cy="3.2" r="1.1" fill="#b0c850"/><circle cx="18.8" cy="5.3" r="1.9" fill="#b0c850"/><circle cx="13.4" cy="7.0" r="1.8" fill="#5a7a20"/><circle cx="10.8" cy="6.3" r="1.2" fill="#9ab838"/><circle cx="19.5" cy="4.8" r="1.6" fill="#b0c850"/><circle cx="19.6" cy="2.7" r="0.8" fill="#6a8a28"/><circle cx="19.3" cy="3.3" r="1.6" fill="#7a9a28"/><circle cx="16.6" cy="5.1" r="0.8" fill="#5a7a20"/><circle cx="14.0" cy="6.9" r="1.0" fill="#b0c850"/><circle cx="17.7" cy="5.0" r="1.8" fill="#9ab838"/><ellipse cx="16.7" cy="11.5" rx="11.2" ry="3.6" fill="#7a9a28"/><circle cx="18.6" cy="12.3" r="1.1" fill="#5a7a20"/><circle cx="15.0" cy="11.5" r="1.9" fill="#6a8a28"/><circle cx="20.8" cy="11.1" r="1.1" fill="#5a7a20"/><circle cx="11.5" cy="11.1" r="1.6" fill="#5a7a20"/><circle cx="20.9" cy="8.9" r="1.9" fill="#b0c850"/><circle cx="22.8" cy="9.6" r="1.1" fill="#9ab838"/><circle cx="22.0" cy="12.3" r="1.8" fill="#9ab838"/><circle cx="22.5" cy="14.2" r="1.2" fill="#b0c850"/><circle cx="26.5" cy="11.6" r="1.4" fill="#5a7a20"/><circle cx="11.2" cy="12.6" r="0.8" fill="#b0c850"/><circle cx="14.0" cy="11.1" r="1.4" fill="#9ab838"/><circle cx="11.7" cy="10.7" r="1.5" fill="#b0c850"/><ellipse cx="14.5" cy="18.2" rx="12.8" ry="3.6" fill="#7a9a28"/><circle cx="23.0" cy="17.9" r="1.6" fill="#b0c850"/><circle cx="15.9" cy="16.3" r="1.7" fill="#7a9a28"/><circle cx="12.8" cy="18.8" r="1.0" fill="#7a9a28"/><circle cx="15.6" cy="21.2" r="1.3" fill="#9ab838"/><circle cx="13.9" cy="15.7" r="2.0" fill="#b0c850"/><circle cx="11.9" cy="16.3" r="1.8" fill="#6a8a28"/><circle cx="17.6" cy="15.3" r="1.0" fill="#6a8a28"/><circle cx="15.1" cy="20.2" r="2.0" fill="#7a9a28"/><circle cx="12.9" cy="17.0" r="1.6" fill="#6a8a28"/><circle cx="8.5" cy="19.7" r="1.2" fill="#7a9a28"/><circle cx="21.8" cy="17.2" r="1.1" fill="#b0c850"/><circle cx="6.0" cy="20.6" r="1.2" fill="#5a7a20"/></svg><svg class="a" style="left:252px;top:288px" width="32" height="33" viewBox="0 0 32 33"><rect x="15.2" y="16.5" width="1.6" height="16.5" fill="#4a3a2a"/><ellipse cx="14.9" cy="5.0" rx="7.2" ry="3.6" fill="#6a8a38"/><circle cx="9.5" cy="4.3" r="1.3" fill="#5a7a30"/><circle cx="11.3" cy="6.7" r="1.3" fill="#6a8a38"/><circle cx="12.5" cy="7.8" r="1.4" fill="#6a8a38"/><circle cx="19.5" cy="4.9" r="1.9" fill="#6a8a38"/><circle cx="20.3" cy="4.3" r="1.5" fill="#a0c058"/><circle cx="18.9" cy="5.8" r="1.3" fill="#a0c058"/><circle cx="20.6" cy="5.3" r="1.6" fill="#4a6a28"/><circle cx="15.4" cy="4.5" r="2.0" fill="#4a6a28"/><circle cx="9.6" cy="6.9" r="1.8" fill="#4a6a28"/><circle cx="17.0" cy="1.9" r="1.5" fill="#5a7a30"/><circle cx="11.1" cy="4.4" r="1.6" fill="#5a7a30"/><circle cx="16.1" cy="8.0" r="1.5" fill="#8aa848"/><ellipse cx="16.5" cy="11.5" rx="11.2" ry="3.6" fill="#6a8a38"/><circle cx="17.3" cy="8.6" r="0.9" fill="#5a7a30"/><circle cx="17.3" cy="11.6" r="1.7" fill="#4a6a28"/><circle cx="15.4" cy="8.5" r="1.5" fill="#a0c058"/><circle cx="18.6" cy="13.7" r="1.9" fill="#8aa848"/><circle cx="13.0" cy="13.1" r="1.3" fill="#8aa848"/><circle cx="22.1" cy="12.4" r="1.2" fill="#6a8a38"/><circle cx="15.1" cy="12.3" r="1.7" fill="#4a6a28"/><circle cx="11.0" cy="13.9" r="1.4" fill="#4a6a28"/><circle cx="9.4" cy="10.4" r="1.0" fill="#4a6a28"/><circle cx="12.4" cy="10.2" r="1.4" fill="#8aa848"/><circle cx="11.7" cy="11.7" r="1.9" fill="#6a8a38"/><circle cx="26.9" cy="11.1" r="1.0" fill="#a0c058"/><ellipse cx="15.2" cy="18.2" rx="12.8" ry="3.6" fill="#6a8a38"/><circle cx="27.0" cy="18.7" r="1.5" fill="#4a6a28"/><circle cx="19.0" cy="15.7" r="0.8" fill="#5a7a30"/><circle cx="21.2" cy="15.9" r="1.9" fill="#8aa848"/><circle cx="27.2" cy="18.1" r="1.7" fill="#a0c058"/><circle cx="5.8" cy="17.3" r="1.5" fill="#6a8a38"/><circle cx="3.6" cy="17.2" r="1.9" fill="#4a6a28"/><circle cx="22.5" cy="17.0" r="1.7" fill="#4a6a28"/><circle cx="14.7" cy="18.7" r="1.5" fill="#6a8a38"/><circle cx="21.0" cy="16.1" r="2.0" fill="#8aa848"/><circle cx="21.1" cy="21.1" r="1.8" fill="#6a8a38"/><circle cx="16.2" cy="15.4" r="0.9" fill="#8aa848"/><circle cx="19.6" cy="15.2" r="1.8" fill="#6a8a38"/></svg><svg class="a" style="left:290px;top:288px" width="32" height="33" viewBox="0 0 32 33"><rect x="15.2" y="16.5" width="1.6" height="16.5" fill="#4a3a2a"/><ellipse cx="17.6" cy="5.0" rx="7.2" ry="3.6" fill="#6a9a40"/><circle cx="19.7" cy="6.0" r="2.0" fill="#8ab850"/><circle cx="20.4" cy="4.1" r="1.4" fill="#4a7a30"/><circle cx="20.9" cy="6.7" r="1.8" fill="#4a7a30"/><circle cx="12.4" cy="6.8" r="1.1" fill="#6a9a40"/><circle cx="16.4" cy="7.5" r="1.0" fill="#5a8a38"/><circle cx="18.6" cy="6.6" r="1.9" fill="#5a8a38"/><circle cx="22.4" cy="3.8" r="1.5" fill="#a0c868"/><circle cx="11.5" cy="3.9" r="1.9" fill="#8ab850"/><circle cx="13.6" cy="6.4" r="1.6" fill="#5a8a38"/><circle cx="17.0" cy="8.0" r="0.9" fill="#5a8a38"/><circle cx="11.6" cy="4.3" r="1.2" fill="#8ab850"/><circle cx="13.7" cy="5.2" r="1.4" fill="#a0c868"/><ellipse cx="15.1" cy="11.5" rx="11.2" ry="3.6" fill="#6a9a40"/><circle cx="14.3" cy="10.2" r="1.5" fill="#5a8a38"/><circle cx="21.8" cy="9.4" r="1.3" fill="#4a7a30"/><circle cx="13.6" cy="14.7" r="1.9" fill="#4a7a30"/><circle cx="10.4" cy="11.5" r="2.0" fill="#8ab850"/><circle cx="22.3" cy="12.7" r="1.7" fill="#6a9a40"/><circle cx="14.4" cy="14.8" r="1.6" fill="#6a9a40"/><circle cx="18.7" cy="12.4" r="1.7" fill="#6a9a40"/><circle cx="10.2" cy="11.5" r="1.7" fill="#a0c868"/><circle cx="16.4" cy="12.6" r="1.4" fill="#a0c868"/><circle cx="15.2" cy="9.8" r="1.0" fill="#a0c868"/><circle cx="18.5" cy="11.4" r="1.2" fill="#5a8a38"/><circle cx="20.0" cy="12.9" r="1.9" fill="#5a8a38"/><ellipse cx="15.0" cy="18.2" rx="12.8" ry="3.6" fill="#6a9a40"/><circle cx="24.3" cy="18.6" r="1.6" fill="#6a9a40"/><circle cx="11.5" cy="16.2" r="1.2" fill="#4a7a30"/><circle cx="4.9" cy="19.5" r="1.7" fill="#8ab850"/><circle cx="15.6" cy="16.0" r="1.9" fill="#8ab850"/><circle cx="7.3" cy="17.0" r="1.7" fill="#a0c868"/><circle cx="6.0" cy="18.9" r="1.0" fill="#6a9a40"/><circle cx="12.1" cy="21.3" r="2.0" fill="#5a8a38"/><circle cx="15.6" cy="15.6" r="1.1" fill="#6a9a40"/><circle cx="16.3" cy="19.9" r="1.5" fill="#a0c868"/><circle cx="4.4" cy="16.7" r="0.8" fill="#6a9a40"/><circle cx="9.4" cy="19.6" r="1.2" fill="#4a7a30"/><circle cx="19.2" cy="20.2" r="1.7" fill="#5a8a38"/></svg><svg class="a" style="left:328px;top:288px" width="32" height="33" viewBox="0 0 32 33"><path d="M15.0 31.3 L13.0 14.8 M17.0 31.3 L20.0 14.8" stroke="#4a3a2a" stroke-width="1.5"/><ellipse cx="16.0" cy="12.5" rx="16.0" ry="6.6" fill="#6a8a28"/><circle cx="28.4" cy="9.6" r="1.8" fill="#5a7a28"/><circle cx="2.0" cy="11.5" r="2.0" fill="#8aaa38"/><circle cx="17.8" cy="8.0" r="1.2" fill="#6a8a28"/><circle cx="16.9" cy="10.1" r="1.0" fill="#6a8a28"/><circle cx="5.8" cy="8.8" r="1.9" fill="#4a6a20"/><circle cx="22.1" cy="12.6" r="1.5" fill="#a8c048"/><circle cx="8.6" cy="17.8" r="2.5" fill="#5a7a28"/><circle cx="12.1" cy="18.3" r="2.0" fill="#5a7a28"/><circle cx="6.1" cy="8.7" r="2.4" fill="#6a8a28"/><circle cx="13.4" cy="7.2" r="1.9" fill="#6a8a28"/><circle cx="11.7" cy="13.7" r="1.3" fill="#8aaa38"/><circle cx="5.2" cy="12.6" r="1.4" fill="#6a8a28"/><circle cx="20.6" cy="6.9" r="1.2" fill="#8aaa38"/><circle cx="12.4" cy="9.5" r="1.2" fill="#a8c048"/><circle cx="9.9" cy="16.1" r="1.8" fill="#5a7a28"/><circle cx="15.2" cy="18.3" r="1.9" fill="#6a8a28"/><circle cx="15.2" cy="6.4" r="2.0" fill="#8aaa38"/><circle cx="13.4" cy="16.5" r="2.1" fill="#4a6a20"/><circle cx="1.3" cy="12.3" r="1.9" fill="#a8c048"/><circle cx="17.7" cy="7.7" r="1.6" fill="#5a7a28"/><circle cx="11.3" cy="9.1" r="2.1" fill="#4a6a20"/><circle cx="13.9" cy="8.7" r="2.1" fill="#a8c048"/><circle cx="10.5" cy="15.9" r="1.5" fill="#5a7a28"/><circle cx="9.8" cy="17.2" r="1.9" fill="#6a8a28"/><circle cx="27.0" cy="9.0" r="2.5" fill="#8aaa38"/><circle cx="10.3" cy="12.9" r="2.0" fill="#5a7a28"/><circle cx="27.8" cy="12.2" r="2.4" fill="#8aaa38"/><circle cx="15.6" cy="17.0" r="2.0" fill="#5a7a28"/><circle cx="8.2" cy="13.9" r="1.0" fill="#a8c048"/><circle cx="12.1" cy="12.4" r="1.3" fill="#4a6a20"/><circle cx="8.8" cy="7.2" r="2.0" fill="#4a6a20"/><circle cx="23.7" cy="10.4" r="1.5" fill="#4a6a20"/><circle cx="13.6" cy="6.6" r="2.1" fill="#4a6a20"/><circle cx="14.4" cy="12.3" r="2.1" fill="#4a6a20"/><circle cx="19.1" cy="13.4" r="1.3" fill="#6a8a28"/><circle cx="16.0" cy="18.0" r="1.4" fill="#8aaa38"/><circle cx="17.4" cy="10.7" r="2.1" fill="#5a7a28"/><circle cx="9.8" cy="11.8" r="1.6" fill="#5a7a28"/><circle cx="24.3" cy="16.2" r="1.2" fill="#a8c048"/><circle cx="28.0" cy="12.4" r="2.0" fill="#6a8a28"/></svg><svg class="a" style="left:366px;top:288px" width="32" height="33" viewBox="0 0 32 33"><path d="M15.0 31.3 L13.0 14.8 M17.0 31.3 L20.0 14.8" stroke="#4a3a2a" stroke-width="1.5"/><ellipse cx="16.0" cy="12.5" rx="16.0" ry="6.6" fill="#4a6a30"/><circle cx="20.6" cy="7.3" r="2.3" fill="#2a4a20"/><circle cx="27.9" cy="13.5" r="1.2" fill="#6a8a40"/><circle cx="13.7" cy="16.8" r="2.0" fill="#4a6a30"/><circle cx="14.2" cy="16.9" r="2.5" fill="#6a8a40"/><circle cx="14.3" cy="15.6" r="2.1" fill="#4a6a30"/><circle cx="21.2" cy="12.5" r="2.3" fill="#3a5a28"/><circle cx="7.5" cy="12.0" r="2.4" fill="#6a8a40"/><circle cx="15.0" cy="11.7" r="2.4" fill="#4a6a30"/><circle cx="29.6" cy="10.5" r="1.4" fill="#3a5a28"/><circle cx="25.0" cy="12.2" r="1.3" fill="#2a4a20"/><circle cx="21.5" cy="9.0" r="2.2" fill="#3a5a28"/><circle cx="26.8" cy="10.3" r="1.9" fill="#2a4a20"/><circle cx="27.0" cy="14.4" r="1.0" fill="#2a4a20"/><circle cx="23.7" cy="17.5" r="1.1" fill="#2a4a20"/><circle cx="9.4" cy="17.1" r="1.2" fill="#3a5a28"/><circle cx="5.8" cy="12.1" r="1.4" fill="#6a8a40"/><circle cx="3.2" cy="10.0" r="1.1" fill="#8aa058"/><circle cx="11.3" cy="16.7" r="1.7" fill="#8aa058"/><circle cx="17.4" cy="8.3" r="1.8" fill="#6a8a40"/><circle cx="3.0" cy="13.4" r="2.3" fill="#8aa058"/><circle cx="15.6" cy="8.5" r="2.5" fill="#8aa058"/><circle cx="13.5" cy="17.6" r="1.9" fill="#3a5a28"/><circle cx="5.1" cy="12.3" r="1.9" fill="#8aa058"/><circle cx="13.6" cy="15.3" r="1.8" fill="#6a8a40"/><circle cx="7.3" cy="15.5" r="2.2" fill="#4a6a30"/><circle cx="14.7" cy="10.0" r="1.6" fill="#2a4a20"/><circle cx="17.3" cy="11.3" r="1.1" fill="#8aa058"/><circle cx="2.2" cy="11.4" r="2.1" fill="#3a5a28"/><circle cx="25.5" cy="10.7" r="1.2" fill="#3a5a28"/><circle cx="2.9" cy="9.9" r="1.3" fill="#6a8a40"/><circle cx="15.4" cy="6.9" r="2.5" fill="#6a8a40"/><circle cx="8.2" cy="16.4" r="1.9" fill="#2a4a20"/><circle cx="10.7" cy="14.5" r="2.4" fill="#4a6a30"/><circle cx="29.9" cy="13.3" r="1.5" fill="#8aa058"/><circle cx="4.8" cy="10.4" r="1.9" fill="#8aa058"/><circle cx="5.0" cy="12.9" r="1.4" fill="#4a6a30"/><circle cx="13.3" cy="7.3" r="1.0" fill="#2a4a20"/><circle cx="25.4" cy="12.3" r="1.4" fill="#4a6a30"/><circle cx="24.2" cy="7.3" r="2.5" fill="#2a4a20"/><circle cx="28.2" cy="15.0" r="2.2" fill="#2a4a20"/></svg><svg class="a" style="left:404px;top:288px" width="32" height="33" viewBox="0 0 32 33"><path d="M15.0 31.3 L13.0 14.8 M17.0 31.3 L20.0 14.8" stroke="#4a3a2a" stroke-width="1.5"/><ellipse cx="16.0" cy="12.5" rx="16.0" ry="6.6" fill="#8ab830"/><circle cx="24.2" cy="17.2" r="1.4" fill="#c0e058"/><circle cx="12.3" cy="17.9" r="2.0" fill="#8ab830"/><circle cx="4.5" cy="15.7" r="1.9" fill="#7aa830"/><circle cx="3.4" cy="11.4" r="2.1" fill="#6a9828"/><circle cx="30.4" cy="11.3" r="1.4" fill="#8ab830"/><circle cx="14.4" cy="14.8" r="1.2" fill="#c0e058"/><circle cx="18.0" cy="6.4" r="2.3" fill="#6a9828"/><circle cx="29.1" cy="12.2" r="1.6" fill="#6a9828"/><circle cx="19.7" cy="9.4" r="1.4" fill="#aad040"/><circle cx="7.2" cy="11.3" r="2.4" fill="#7aa830"/><circle cx="22.7" cy="9.5" r="2.5" fill="#6a9828"/><circle cx="22.3" cy="12.7" r="2.0" fill="#c0e058"/><circle cx="25.6" cy="9.4" r="1.8" fill="#7aa830"/><circle cx="11.8" cy="15.4" r="2.5" fill="#6a9828"/><circle cx="4.3" cy="16.4" r="1.8" fill="#8ab830"/><circle cx="0.9" cy="11.9" r="2.0" fill="#c0e058"/><circle cx="8.0" cy="17.8" r="2.4" fill="#7aa830"/><circle cx="4.0" cy="11.5" r="1.8" fill="#8ab830"/><circle cx="12.6" cy="8.2" r="1.0" fill="#aad040"/><circle cx="9.0" cy="17.4" r="1.0" fill="#8ab830"/><circle cx="15.3" cy="10.9" r="1.7" fill="#8ab830"/><circle cx="25.2" cy="11.6" r="2.0" fill="#8ab830"/><circle cx="27.1" cy="9.8" r="1.8" fill="#8ab830"/><circle cx="17.3" cy="9.0" r="2.4" fill="#c0e058"/><circle cx="11.8" cy="12.1" r="2.3" fill="#8ab830"/><circle cx="25.6" cy="10.5" r="2.0" fill="#c0e058"/><circle cx="26.4" cy="14.4" r="1.3" fill="#8ab830"/><circle cx="12.2" cy="10.9" r="1.6" fill="#6a9828"/><circle cx="23.1" cy="16.4" r="2.0" fill="#aad040"/><circle cx="6.0" cy="11.4" r="1.0" fill="#c0e058"/><circle cx="19.8" cy="6.6" r="2.2" fill="#7aa830"/><circle cx="4.9" cy="16.2" r="1.5" fill="#7aa830"/><circle cx="29.5" cy="9.7" r="1.2" fill="#6a9828"/><circle cx="28.3" cy="9.8" r="2.1" fill="#6a9828"/><circle cx="21.9" cy="15.7" r="1.5" fill="#8ab830"/><circle cx="30.2" cy="12.1" r="1.0" fill="#aad040"/><circle cx="22.0" cy="7.7" r="2.4" fill="#aad040"/><circle cx="9.4" cy="13.4" r="1.4" fill="#7aa830"/><circle cx="25.8" cy="9.2" r="1.2" fill="#7aa830"/><circle cx="22.9" cy="14.6" r="1.4" fill="#7aa830"/></svg><svg class="a" style="left:62px;top:324px" width="32" height="33" viewBox="0 0 32 33"><rect x="15.0" y="19.8" width="2" height="13.2" fill="#4a3a2a"/><ellipse cx="16.0" cy="13.9" rx="14.4" ry="12.5" fill="#3a7a30"/><circle cx="4.7" cy="9.8" r="2.5" fill="#3a7a30"/><circle cx="26.1" cy="10.2" r="1.3" fill="#5a9a40"/><circle cx="21.9" cy="14.2" r="1.9" fill="#4a8a38"/><circle cx="17.9" cy="18.8" r="1.9" fill="#70b050"/><circle cx="14.1" cy="25.0" r="2.0" fill="#70b050"/><circle cx="7.9" cy="5.0" r="2.0" fill="#5a9a40"/><circle cx="7.5" cy="9.8" r="1.9" fill="#2a5a22"/><circle cx="5.0" cy="18.8" r="2.3" fill="#4a8a38"/><circle cx="15.6" cy="20.8" r="2.3" fill="#4a8a38"/><circle cx="13.2" cy="19.9" r="1.2" fill="#2a5a22"/><circle cx="24.0" cy="22.5" r="1.3" fill="#2a5a22"/><circle cx="17.7" cy="4.8" r="2.1" fill="#2a5a22"/><circle cx="4.7" cy="10.0" r="2.5" fill="#70b050"/><circle cx="11.2" cy="14.1" r="1.2" fill="#2a5a22"/><circle cx="3.5" cy="17.1" r="3.0" fill="#2a5a22"/><circle cx="5.1" cy="8.7" r="2.4" fill="#70b050"/><circle cx="9.4" cy="18.5" r="2.7" fill="#4a8a38"/><circle cx="14.5" cy="15.4" r="1.2" fill="#4a8a38"/><circle cx="3.3" cy="17.1" r="1.7" fill="#3a7a30"/><circle cx="11.8" cy="22.5" r="2.0" fill="#3a7a30"/><circle cx="15.3" cy="9.3" r="2.3" fill="#5a9a40"/><circle cx="4.5" cy="14.4" r="2.0" fill="#3a7a30"/><circle cx="23.3" cy="17.8" r="1.9" fill="#3a7a30"/><circle cx="15.3" cy="15.5" r="1.9" fill="#4a8a38"/><circle cx="23.0" cy="17.8" r="2.6" fill="#3a7a30"/><circle cx="23.1" cy="14.5" r="1.6" fill="#3a7a30"/><circle cx="21.2" cy="14.1" r="2.0" fill="#2a5a22"/><circle cx="25.3" cy="11.8" r="1.6" fill="#70b050"/><circle cx="25.9" cy="21.1" r="1.3" fill="#3a7a30"/><circle cx="25.9" cy="5.8" r="1.7" fill="#4a8a38"/><circle cx="7.1" cy="19.6" r="1.5" fill="#4a8a38"/><circle cx="11.6" cy="9.4" r="1.5" fill="#4a8a38"/><circle cx="10.4" cy="18.2" r="2.1" fill="#2a5a22"/><circle cx="21.4" cy="6.7" r="1.2" fill="#5a9a40"/><circle cx="28.4" cy="15.1" r="2.7" fill="#5a9a40"/><circle cx="18.6" cy="12.2" r="1.7" fill="#2a5a22"/><circle cx="4.6" cy="18.5" r="1.4" fill="#70b050"/><circle cx="26.9" cy="19.1" r="1.7" fill="#2a5a22"/><circle cx="8.9" cy="20.1" r="2.0" fill="#2a5a22"/><circle cx="18.9" cy="6.8" r="1.9" fill="#4a8a38"/><circle cx="15.5" cy="12.4" r="2.6" fill="#2a5a22"/><circle cx="18.8" cy="13.1" r="2.3" fill="#4a8a38"/><circle cx="21.2" cy="15.3" r="1.5" fill="#4a8a38"/><circle cx="12.9" cy="2.3" r="2.9" fill="#2a5a22"/><circle cx="23.6" cy="6.1" r="2.4" fill="#3a7a30"/><circle cx="10.4" cy="13.1" r="2.9" fill="#5a9a40"/><circle cx="5.9" cy="11.1" r="2.3" fill="#4a8a38"/><circle cx="19.4" cy="24.9" r="1.8" fill="#5a9a40"/><circle cx="22.2" cy="21.9" r="2.5" fill="#70b050"/><circle cx="13.1" cy="15.9" r="2.6" fill="#5a9a40"/></svg><svg class="a" style="left:103px;top:324px" width="26" height="33" viewBox="0 0 26 33"><path d="M13.0 0.7 C19.5 9.9 25.5 23.1 23.4 31.3 L2.6 31.3 C0.5 23.1 6.5 9.9 13.0 0.7 Z" fill="#4a8a38"/><circle cx="8.1" cy="17.5" r="0.9" fill="#4a8a38"/><circle cx="9.7" cy="19.2" r="1.7" fill="#80b860"/><circle cx="15.1" cy="18.8" r="1.3" fill="#4a8a38"/><circle cx="16.3" cy="14.5" r="1.8" fill="#5a9a40"/><circle cx="12.3" cy="5.9" r="1.5" fill="#4a8a38"/><circle cx="11.8" cy="2.9" r="1.7" fill="#5a9a40"/><circle cx="15.1" cy="23.3" r="1.8" fill="#3a6a28"/><circle cx="13.5" cy="14.9" r="1.9" fill="#4a8a38"/><circle cx="14.3" cy="10.1" r="1.9" fill="#3a6a28"/><circle cx="7.6" cy="22.7" r="1.1" fill="#80b860"/><circle cx="17.1" cy="28.3" r="1.2" fill="#4a8a38"/><circle cx="14.8" cy="8.3" r="1.7" fill="#6aaa48"/><circle cx="16.8" cy="24.6" r="1.0" fill="#4a8a38"/><circle cx="12.9" cy="23.6" r="1.2" fill="#3a6a28"/><circle cx="15.3" cy="12.1" r="2.1" fill="#80b860"/><circle cx="12.8" cy="26.6" r="1.5" fill="#3a6a28"/><circle cx="11.0" cy="30.7" r="1.1" fill="#4a8a38"/><circle cx="11.3" cy="6.4" r="1.6" fill="#3a6a28"/><circle cx="9.3" cy="19.4" r="1.0" fill="#80b860"/><circle cx="14.3" cy="23.5" r="1.4" fill="#4a8a38"/><circle cx="13.0" cy="23.3" r="1.7" fill="#80b860"/><circle cx="6.7" cy="20.9" r="2.0" fill="#3a6a28"/><circle cx="10.2" cy="13.2" r="2.2" fill="#5a9a40"/><circle cx="15.6" cy="13.0" r="1.6" fill="#4a8a38"/><circle cx="15.4" cy="19.8" r="1.0" fill="#4a8a38"/><circle cx="7.6" cy="22.4" r="1.6" fill="#6aaa48"/><circle cx="13.4" cy="2.9" r="1.6" fill="#4a8a38"/><circle cx="4.9" cy="29.0" r="1.7" fill="#6aaa48"/><circle cx="12.5" cy="30.5" r="1.1" fill="#80b860"/><circle cx="5.0" cy="29.5" r="2.1" fill="#6aaa48"/><circle cx="15.2" cy="13.1" r="2.1" fill="#6aaa48"/><circle cx="21.8" cy="28.2" r="1.6" fill="#4a8a38"/><circle cx="15.9" cy="22.3" r="2.1" fill="#5a9a40"/><circle cx="18.6" cy="29.4" r="1.0" fill="#3a6a28"/><circle cx="8.9" cy="30.2" r="1.6" fill="#6aaa48"/><circle cx="15.8" cy="23.1" r="1.7" fill="#3a6a28"/><circle cx="5.9" cy="21.1" r="1.0" fill="#6aaa48"/><circle cx="12.2" cy="7.9" r="1.1" fill="#5a9a40"/><circle cx="16.4" cy="17.7" r="1.6" fill="#5a9a40"/><circle cx="11.6" cy="8.5" r="1.0" fill="#80b860"/><circle cx="12.4" cy="7.4" r="1.7" fill="#6aaa48"/><circle cx="11.6" cy="16.9" r="1.6" fill="#80b860"/><circle cx="14.8" cy="8.4" r="1.4" fill="#6aaa48"/><circle cx="11.9" cy="14.5" r="0.9" fill="#80b860"/><circle cx="21.1" cy="26.0" r="2.0" fill="#6aaa48"/></svg><svg class="a" style="left:142px;top:324px" width="24" height="33" viewBox="0 0 24 33"><rect x="11.0" y="19.8" width="2" height="13.2" fill="#4a3a2a"/><ellipse cx="12.0" cy="13.9" rx="10.8" ry="12.5" fill="#5a9a40"/><circle cx="20.2" cy="20.5" r="2.7" fill="#7ab858"/><circle cx="10.0" cy="15.6" r="1.4" fill="#90c870"/><circle cx="20.5" cy="12.7" r="1.6" fill="#4a8a38"/><circle cx="9.3" cy="12.1" r="1.8" fill="#3a7a30"/><circle cx="19.7" cy="19.9" r="1.7" fill="#7ab858"/><circle cx="15.5" cy="17.6" r="2.4" fill="#90c870"/><circle cx="14.4" cy="10.9" r="1.9" fill="#5a9a40"/><circle cx="13.4" cy="18.8" r="2.1" fill="#3a7a30"/><circle cx="9.5" cy="4.1" r="2.1" fill="#7ab858"/><circle cx="19.3" cy="18.4" r="1.9" fill="#90c870"/><circle cx="12.5" cy="3.4" r="2.0" fill="#5a9a40"/><circle cx="13.1" cy="10.7" r="1.8" fill="#4a8a38"/><circle cx="10.3" cy="14.8" r="2.5" fill="#3a7a30"/><circle cx="2.1" cy="12.9" r="1.7" fill="#4a8a38"/><circle cx="17.1" cy="21.2" r="2.0" fill="#5a9a40"/><circle cx="14.2" cy="11.5" r="1.9" fill="#4a8a38"/><circle cx="18.5" cy="6.9" r="2.3" fill="#5a9a40"/><circle cx="12.5" cy="11.0" r="2.7" fill="#3a7a30"/><circle cx="11.3" cy="5.8" r="1.5" fill="#4a8a38"/><circle cx="15.8" cy="11.9" r="1.3" fill="#3a7a30"/><circle cx="11.1" cy="20.6" r="2.7" fill="#4a8a38"/><circle cx="11.8" cy="21.1" r="1.7" fill="#4a8a38"/><circle cx="14.0" cy="24.7" r="2.5" fill="#3a7a30"/><circle cx="12.4" cy="9.4" r="2.4" fill="#4a8a38"/><circle cx="6.2" cy="16.2" r="1.9" fill="#7ab858"/><circle cx="8.8" cy="6.7" r="2.7" fill="#90c870"/><circle cx="11.5" cy="11.2" r="1.3" fill="#90c870"/><circle cx="13.9" cy="24.3" r="1.7" fill="#90c870"/><circle cx="18.6" cy="12.5" r="1.6" fill="#3a7a30"/><circle cx="14.8" cy="12.1" r="2.7" fill="#90c870"/><circle cx="11.8" cy="16.2" r="2.7" fill="#90c870"/><circle cx="13.7" cy="16.8" r="2.8" fill="#90c870"/><circle cx="5.6" cy="9.9" r="1.9" fill="#4a8a38"/><circle cx="19.8" cy="19.5" r="2.1" fill="#7ab858"/><circle cx="13.2" cy="4.2" r="2.7" fill="#3a7a30"/><circle cx="7.8" cy="6.7" r="1.6" fill="#4a8a38"/><circle cx="11.4" cy="13.2" r="2.1" fill="#4a8a38"/><circle cx="6.2" cy="20.0" r="2.2" fill="#4a8a38"/><circle cx="18.5" cy="10.9" r="2.7" fill="#5a9a40"/><circle cx="16.6" cy="10.4" r="2.2" fill="#90c870"/><circle cx="17.7" cy="6.7" r="1.5" fill="#90c870"/><circle cx="16.7" cy="23.6" r="1.2" fill="#4a8a38"/><circle cx="10.8" cy="22.5" r="1.4" fill="#90c870"/><circle cx="10.9" cy="23.7" r="1.9" fill="#90c870"/><circle cx="9.1" cy="8.0" r="1.3" fill="#90c870"/><circle cx="15.8" cy="13.1" r="1.8" fill="#4a8a38"/><circle cx="15.9" cy="19.8" r="2.8" fill="#7ab858"/><circle cx="16.8" cy="12.8" r="3.0" fill="#3a7a30"/><circle cx="8.7" cy="8.5" r="2.9" fill="#90c870"/><circle cx="12.4" cy="3.6" r="1.9" fill="#3a7a30"/></svg><svg class="a" style="left:179px;top:324px" width="26" height="33" viewBox="0 0 26 33"><path d="M13.0 0.7 C19.5 9.9 25.5 23.1 23.4 31.3 L2.6 31.3 C0.5 23.1 6.5 9.9 13.0 0.7 Z" fill="#2a6a30"/><circle cx="12.8" cy="8.4" r="2.1" fill="#2a6a30"/><circle cx="7.9" cy="26.1" r="1.6" fill="#4a8a40"/><circle cx="16.6" cy="19.1" r="1.8" fill="#4a8a40"/><circle cx="17.5" cy="17.4" r="1.3" fill="#2a6a30"/><circle cx="12.0" cy="21.4" r="1.1" fill="#4a8a40"/><circle cx="3.5" cy="28.0" r="2.1" fill="#5a9a50"/><circle cx="12.4" cy="19.0" r="1.8" fill="#1a4a20"/><circle cx="13.2" cy="18.3" r="1.7" fill="#1a4a20"/><circle cx="13.6" cy="6.6" r="1.2" fill="#1a4a20"/><circle cx="14.3" cy="5.2" r="1.0" fill="#2a6a30"/><circle cx="12.9" cy="19.0" r="1.0" fill="#5a9a50"/><circle cx="12.2" cy="5.2" r="1.4" fill="#3a7a38"/><circle cx="13.9" cy="8.1" r="1.9" fill="#1a4a20"/><circle cx="6.4" cy="24.2" r="1.4" fill="#4a8a40"/><circle cx="9.5" cy="16.2" r="1.5" fill="#5a9a50"/><circle cx="13.8" cy="22.2" r="1.0" fill="#5a9a50"/><circle cx="12.7" cy="12.0" r="1.2" fill="#1a4a20"/><circle cx="10.5" cy="23.7" r="2.1" fill="#5a9a50"/><circle cx="15.3" cy="8.5" r="1.8" fill="#3a7a38"/><circle cx="13.6" cy="4.1" r="1.8" fill="#1a4a20"/><circle cx="9.6" cy="23.9" r="1.1" fill="#5a9a50"/><circle cx="21.8" cy="29.5" r="1.3" fill="#4a8a40"/><circle cx="19.7" cy="20.7" r="1.5" fill="#4a8a40"/><circle cx="13.5" cy="5.3" r="1.5" fill="#1a4a20"/><circle cx="22.3" cy="28.5" r="2.2" fill="#2a6a30"/><circle cx="12.5" cy="28.1" r="1.2" fill="#1a4a20"/><circle cx="18.2" cy="22.4" r="1.8" fill="#2a6a30"/><circle cx="16.2" cy="18.8" r="2.1" fill="#4a8a40"/><circle cx="16.4" cy="16.3" r="1.9" fill="#2a6a30"/><circle cx="18.4" cy="17.8" r="2.2" fill="#2a6a30"/><circle cx="9.7" cy="9.1" r="1.1" fill="#1a4a20"/><circle cx="12.6" cy="17.4" r="1.5" fill="#4a8a40"/><circle cx="20.2" cy="23.5" r="1.2" fill="#1a4a20"/><circle cx="8.4" cy="27.7" r="1.7" fill="#3a7a38"/><circle cx="10.1" cy="10.1" r="1.6" fill="#4a8a40"/><circle cx="18.1" cy="30.3" r="1.6" fill="#2a6a30"/><circle cx="19.0" cy="22.4" r="1.8" fill="#2a6a30"/><circle cx="18.8" cy="25.8" r="1.3" fill="#5a9a50"/><circle cx="16.8" cy="11.7" r="1.4" fill="#3a7a38"/><circle cx="10.7" cy="28.5" r="1.3" fill="#1a4a20"/><circle cx="6.0" cy="22.2" r="1.1" fill="#2a6a30"/><circle cx="14.7" cy="10.6" r="1.1" fill="#1a4a20"/><circle cx="12.7" cy="24.5" r="1.0" fill="#3a7a38"/><circle cx="4.5" cy="30.2" r="1.3" fill="#5a9a50"/><circle cx="11.5" cy="6.2" r="2.0" fill="#1a4a20"/></svg><svg class="a" style="left:218px;top:324px" width="24" height="33" viewBox="0 0 24 33"><rect x="11.0" y="19.8" width="2" height="13.2" fill="#4a3a2a"/><ellipse cx="12.0" cy="13.9" rx="10.8" ry="12.5" fill="#5aa070"/><circle cx="4.1" cy="14.0" r="2.9" fill="#4a9060"/><circle cx="6.5" cy="22.0" r="2.8" fill="#90d0a0"/><circle cx="14.6" cy="9.0" r="2.5" fill="#5aa070"/><circle cx="11.8" cy="9.6" r="2.0" fill="#7ac090"/><circle cx="4.4" cy="11.7" r="1.3" fill="#3a8050"/><circle cx="6.4" cy="4.6" r="1.9" fill="#90d0a0"/><circle cx="8.7" cy="7.5" r="1.8" fill="#3a8050"/><circle cx="3.4" cy="15.7" r="2.1" fill="#7ac090"/><circle cx="2.1" cy="14.7" r="2.5" fill="#3a8050"/><circle cx="9.0" cy="10.1" r="3.0" fill="#3a8050"/><circle cx="16.5" cy="8.2" r="1.4" fill="#3a8050"/><circle cx="5.1" cy="20.8" r="2.5" fill="#5aa070"/><circle cx="11.5" cy="19.0" r="1.8" fill="#7ac090"/><circle cx="6.2" cy="22.3" r="1.5" fill="#5aa070"/><circle cx="11.1" cy="13.1" r="2.9" fill="#7ac090"/><circle cx="4.6" cy="22.0" r="1.7" fill="#7ac090"/><circle cx="2.7" cy="13.4" r="2.9" fill="#5aa070"/><circle cx="1.8" cy="13.6" r="1.3" fill="#7ac090"/><circle cx="4.5" cy="8.9" r="2.7" fill="#5aa070"/><circle cx="22.1" cy="11.8" r="1.4" fill="#3a8050"/><circle cx="18.1" cy="17.5" r="2.7" fill="#7ac090"/><circle cx="8.7" cy="12.1" r="3.0" fill="#3a8050"/><circle cx="4.9" cy="6.6" r="1.7" fill="#5aa070"/><circle cx="8.1" cy="19.9" r="1.4" fill="#3a8050"/><circle cx="17.5" cy="14.0" r="2.2" fill="#3a8050"/><circle cx="11.3" cy="24.0" r="1.5" fill="#4a9060"/><circle cx="19.8" cy="16.1" r="2.6" fill="#7ac090"/><circle cx="14.3" cy="19.6" r="1.4" fill="#3a8050"/><circle cx="10.1" cy="20.0" r="1.4" fill="#4a9060"/><circle cx="12.3" cy="23.2" r="1.9" fill="#3a8050"/><circle cx="7.8" cy="4.9" r="2.4" fill="#90d0a0"/><circle cx="15.3" cy="19.4" r="2.5" fill="#3a8050"/><circle cx="17.4" cy="15.4" r="1.8" fill="#90d0a0"/><circle cx="7.7" cy="20.9" r="2.7" fill="#4a9060"/><circle cx="14.9" cy="4.2" r="1.4" fill="#7ac090"/><circle cx="9.1" cy="6.8" r="1.7" fill="#90d0a0"/><circle cx="13.1" cy="8.2" r="1.2" fill="#7ac090"/><circle cx="6.6" cy="13.9" r="1.7" fill="#3a8050"/><circle cx="7.4" cy="20.5" r="2.7" fill="#3a8050"/><circle cx="20.3" cy="19.1" r="1.3" fill="#5aa070"/><circle cx="9.8" cy="4.9" r="2.0" fill="#7ac090"/><circle cx="14.5" cy="10.8" r="2.4" fill="#3a8050"/><circle cx="5.1" cy="6.4" r="1.7" fill="#4a9060"/><circle cx="16.2" cy="20.8" r="3.0" fill="#5aa070"/><circle cx="9.2" cy="4.7" r="2.5" fill="#4a9060"/><circle cx="6.1" cy="6.0" r="1.3" fill="#5aa070"/><circle cx="8.9" cy="23.4" r="2.7" fill="#5aa070"/><circle cx="18.0" cy="12.3" r="1.3" fill="#3a8050"/><circle cx="16.0" cy="14.8" r="1.4" fill="#5aa070"/><circle cx="5.7" cy="20.0" r="2.9" fill="#3a8050"/></svg><svg class="a" style="left:256px;top:324px" width="24" height="33" viewBox="0 0 24 33"><rect x="11.0" y="19.8" width="2" height="13.2" fill="#4a3a2a"/><ellipse cx="12.0" cy="13.9" rx="10.8" ry="12.5" fill="#6aaa58"/><circle cx="16.0" cy="12.0" r="2.0" fill="#6aaa58"/><circle cx="17.0" cy="4.4" r="2.0" fill="#6aaa58"/><circle cx="17.8" cy="16.2" r="2.9" fill="#a0d890"/><circle cx="12.2" cy="8.4" r="1.5" fill="#6aaa58"/><circle cx="18.4" cy="14.5" r="1.7" fill="#6aaa58"/><circle cx="15.5" cy="10.4" r="1.4" fill="#6aaa58"/><circle cx="18.3" cy="14.0" r="2.1" fill="#5a9a48"/><circle cx="16.0" cy="16.3" r="1.7" fill="#5a9a48"/><circle cx="6.4" cy="13.6" r="1.6" fill="#8ac878"/><circle cx="18.6" cy="5.2" r="2.8" fill="#4a8a40"/><circle cx="11.3" cy="13.1" r="1.5" fill="#5a9a48"/><circle cx="8.2" cy="18.5" r="1.3" fill="#6aaa58"/><circle cx="18.0" cy="19.9" r="2.6" fill="#4a8a40"/><circle cx="10.5" cy="19.6" r="1.7" fill="#4a8a40"/><circle cx="7.2" cy="21.6" r="1.6" fill="#5a9a48"/><circle cx="16.7" cy="14.8" r="2.0" fill="#6aaa58"/><circle cx="21.7" cy="15.7" r="1.4" fill="#4a8a40"/><circle cx="11.0" cy="5.5" r="1.8" fill="#4a8a40"/><circle cx="9.9" cy="18.9" r="2.2" fill="#4a8a40"/><circle cx="16.9" cy="23.0" r="2.1" fill="#6aaa58"/><circle cx="17.0" cy="6.1" r="2.3" fill="#5a9a48"/><circle cx="21.4" cy="9.2" r="1.5" fill="#4a8a40"/><circle cx="16.3" cy="9.8" r="2.4" fill="#6aaa58"/><circle cx="15.7" cy="11.0" r="2.1" fill="#5a9a48"/><circle cx="8.2" cy="6.6" r="2.3" fill="#5a9a48"/><circle cx="8.8" cy="21.5" r="1.2" fill="#8ac878"/><circle cx="14.3" cy="5.3" r="1.2" fill="#5a9a48"/><circle cx="18.0" cy="7.7" r="1.4" fill="#5a9a48"/><circle cx="6.5" cy="19.4" r="2.5" fill="#8ac878"/><circle cx="8.3" cy="5.7" r="2.3" fill="#8ac878"/><circle cx="16.1" cy="10.7" r="2.8" fill="#6aaa58"/><circle cx="5.5" cy="17.8" r="1.9" fill="#4a8a40"/><circle cx="5.2" cy="20.5" r="2.4" fill="#4a8a40"/><circle cx="10.3" cy="7.9" r="1.8" fill="#8ac878"/><circle cx="17.1" cy="3.9" r="1.5" fill="#4a8a40"/><circle cx="13.4" cy="11.9" r="1.9" fill="#5a9a48"/><circle cx="7.9" cy="5.2" r="2.9" fill="#8ac878"/><circle cx="17.7" cy="10.9" r="2.6" fill="#5a9a48"/><circle cx="20.9" cy="8.9" r="1.3" fill="#5a9a48"/><circle cx="16.5" cy="22.9" r="2.2" fill="#8ac878"/><circle cx="6.7" cy="11.4" r="2.8" fill="#a0d890"/><circle cx="12.7" cy="17.4" r="1.5" fill="#4a8a40"/><circle cx="10.1" cy="16.6" r="2.5" fill="#4a8a40"/><circle cx="5.5" cy="9.8" r="1.6" fill="#a0d890"/><circle cx="20.5" cy="8.5" r="2.7" fill="#5a9a48"/><circle cx="2.9" cy="12.6" r="2.2" fill="#a0d890"/><circle cx="17.4" cy="5.8" r="1.8" fill="#4a8a40"/><circle cx="20.9" cy="14.5" r="1.4" fill="#6aaa58"/><circle cx="21.4" cy="10.1" r="1.4" fill="#4a8a40"/><circle cx="1.9" cy="14.6" r="2.2" fill="#5a9a48"/></svg><svg class="a" style="left:294px;top:324px" width="24" height="33" viewBox="0 0 24 33"><rect x="11.0" y="19.8" width="2" height="13.2" fill="#4a3a2a"/><ellipse cx="12.0" cy="13.9" rx="10.8" ry="12.5" fill="#4a7a40"/><circle cx="7.8" cy="13.7" r="1.8" fill="#6a9a58"/><circle cx="18.5" cy="11.9" r="2.5" fill="#80a870"/><circle cx="6.9" cy="13.6" r="1.6" fill="#4a7a40"/><circle cx="7.3" cy="5.0" r="2.2" fill="#6a9a58"/><circle cx="4.7" cy="9.7" r="1.3" fill="#4a7a40"/><circle cx="19.2" cy="19.2" r="1.6" fill="#4a7a40"/><circle cx="18.3" cy="8.3" r="2.0" fill="#4a7a40"/><circle cx="12.5" cy="22.3" r="1.2" fill="#6a9a58"/><circle cx="20.1" cy="8.2" r="2.6" fill="#6a9a58"/><circle cx="6.7" cy="12.6" r="2.2" fill="#4a7a40"/><circle cx="11.9" cy="24.4" r="2.1" fill="#3a6a38"/><circle cx="15.7" cy="17.4" r="1.6" fill="#2a5a30"/><circle cx="15.4" cy="16.8" r="2.8" fill="#4a7a40"/><circle cx="4.7" cy="20.3" r="1.6" fill="#80a870"/><circle cx="8.6" cy="14.1" r="1.6" fill="#6a9a58"/><circle cx="19.1" cy="20.5" r="1.9" fill="#4a7a40"/><circle cx="12.4" cy="23.7" r="2.2" fill="#4a7a40"/><circle cx="8.6" cy="22.5" r="2.6" fill="#2a5a30"/><circle cx="17.0" cy="17.8" r="2.9" fill="#80a870"/><circle cx="12.7" cy="5.5" r="2.1" fill="#80a870"/><circle cx="4.9" cy="19.0" r="2.5" fill="#4a7a40"/><circle cx="8.5" cy="4.6" r="2.0" fill="#4a7a40"/><circle cx="2.8" cy="18.1" r="1.5" fill="#3a6a38"/><circle cx="7.7" cy="3.5" r="2.8" fill="#4a7a40"/><circle cx="8.3" cy="15.6" r="1.8" fill="#3a6a38"/><circle cx="9.4" cy="14.4" r="2.3" fill="#2a5a30"/><circle cx="10.5" cy="15.0" r="1.5" fill="#6a9a58"/><circle cx="15.0" cy="14.0" r="1.6" fill="#2a5a30"/><circle cx="2.7" cy="11.8" r="2.3" fill="#3a6a38"/><circle cx="18.5" cy="22.9" r="1.6" fill="#4a7a40"/><circle cx="19.3" cy="12.0" r="2.6" fill="#2a5a30"/><circle cx="8.3" cy="5.5" r="1.6" fill="#3a6a38"/><circle cx="13.5" cy="19.4" r="2.3" fill="#80a870"/><circle cx="15.2" cy="3.9" r="2.2" fill="#4a7a40"/><circle cx="13.9" cy="10.6" r="1.9" fill="#6a9a58"/><circle cx="11.5" cy="24.8" r="2.8" fill="#80a870"/><circle cx="7.7" cy="17.2" r="2.0" fill="#4a7a40"/><circle cx="22.1" cy="12.7" r="1.9" fill="#6a9a58"/><circle cx="10.9" cy="2.0" r="2.2" fill="#80a870"/><circle cx="10.4" cy="13.5" r="2.9" fill="#80a870"/><circle cx="11.1" cy="14.4" r="1.9" fill="#3a6a38"/><circle cx="12.6" cy="24.6" r="2.8" fill="#6a9a58"/><circle cx="18.7" cy="13.0" r="1.3" fill="#3a6a38"/><circle cx="11.6" cy="24.7" r="1.2" fill="#2a5a30"/><circle cx="2.6" cy="16.0" r="1.6" fill="#3a6a38"/><circle cx="9.1" cy="8.6" r="2.1" fill="#2a5a30"/><circle cx="18.1" cy="14.2" r="1.5" fill="#80a870"/><circle cx="16.4" cy="22.1" r="2.7" fill="#3a6a38"/><circle cx="3.1" cy="14.8" r="1.3" fill="#80a870"/><circle cx="5.5" cy="20.3" r="2.2" fill="#2a5a30"/></svg><svg class="a" style="left:331px;top:324px" width="26" height="33" viewBox="0 0 26 33"><path d="M13.0 0.7 C19.5 9.9 25.5 23.1 23.4 31.3 L2.6 31.3 C0.5 23.1 6.5 9.9 13.0 0.7 Z" fill="#6a8a30"/><circle cx="15.5" cy="7.3" r="2.1" fill="#6a8a30"/><circle cx="4.5" cy="25.2" r="2.0" fill="#5a7a28"/><circle cx="18.9" cy="24.9" r="1.0" fill="#8aa840"/><circle cx="11.9" cy="15.6" r="2.1" fill="#5a7a28"/><circle cx="15.0" cy="21.7" r="2.2" fill="#a0b858"/><circle cx="9.4" cy="14.3" r="1.2" fill="#a0b858"/><circle cx="15.7" cy="28.6" r="1.1" fill="#4a6a20"/><circle cx="15.4" cy="24.9" r="1.0" fill="#5a7a28"/><circle cx="16.0" cy="9.4" r="1.1" fill="#8aa840"/><circle cx="15.6" cy="19.8" r="1.5" fill="#a0b858"/><circle cx="19.0" cy="27.5" r="1.8" fill="#5a7a28"/><circle cx="12.3" cy="5.4" r="1.2" fill="#6a8a30"/><circle cx="13.7" cy="13.0" r="1.5" fill="#a0b858"/><circle cx="13.7" cy="19.6" r="1.9" fill="#8aa840"/><circle cx="15.9" cy="8.4" r="1.2" fill="#4a6a20"/><circle cx="18.3" cy="15.2" r="1.8" fill="#5a7a28"/><circle cx="15.3" cy="9.2" r="1.8" fill="#5a7a28"/><circle cx="12.9" cy="20.8" r="1.3" fill="#6a8a30"/><circle cx="21.8" cy="27.7" r="0.9" fill="#4a6a20"/><circle cx="14.1" cy="6.8" r="0.9" fill="#4a6a20"/><circle cx="6.3" cy="23.1" r="1.5" fill="#8aa840"/><circle cx="13.8" cy="16.4" r="1.4" fill="#a0b858"/><circle cx="10.8" cy="26.6" r="1.0" fill="#4a6a20"/><circle cx="12.3" cy="9.4" r="1.4" fill="#6a8a30"/><circle cx="11.8" cy="4.8" r="1.7" fill="#4a6a20"/><circle cx="18.6" cy="27.7" r="1.8" fill="#a0b858"/><circle cx="8.1" cy="27.4" r="1.0" fill="#6a8a30"/><circle cx="4.2" cy="26.6" r="2.0" fill="#5a7a28"/><circle cx="16.5" cy="11.4" r="1.4" fill="#8aa840"/><circle cx="15.0" cy="27.4" r="2.2" fill="#a0b858"/><circle cx="13.3" cy="3.2" r="1.0" fill="#8aa840"/><circle cx="7.6" cy="30.0" r="1.0" fill="#5a7a28"/><circle cx="9.7" cy="12.4" r="2.1" fill="#a0b858"/><circle cx="10.3" cy="7.3" r="1.9" fill="#5a7a28"/><circle cx="13.6" cy="5.9" r="2.1" fill="#8aa840"/><circle cx="15.3" cy="20.0" r="1.8" fill="#6a8a30"/><circle cx="12.6" cy="3.1" r="1.0" fill="#a0b858"/><circle cx="13.5" cy="3.8" r="1.3" fill="#6a8a30"/><circle cx="14.5" cy="7.8" r="1.9" fill="#4a6a20"/><circle cx="14.2" cy="4.7" r="2.0" fill="#4a6a20"/><circle cx="11.8" cy="7.0" r="1.3" fill="#6a8a30"/><circle cx="14.4" cy="13.1" r="1.5" fill="#a0b858"/><circle cx="13.5" cy="11.6" r="1.2" fill="#5a7a28"/><circle cx="12.2" cy="7.5" r="1.6" fill="#6a8a30"/><circle cx="11.4" cy="7.1" r="1.4" fill="#a0b858"/></svg><svg class="a" style="left:370px;top:324px" width="24" height="33" viewBox="0 0 24 33"><rect x="11.0" y="19.8" width="2" height="13.2" fill="#4a3a2a"/><ellipse cx="12.0" cy="13.9" rx="10.8" ry="12.5" fill="#4a7a40"/><circle cx="13.9" cy="3.3" r="2.2" fill="#4a7a40"/><circle cx="17.0" cy="7.9" r="2.9" fill="#6a9a58"/><circle cx="10.4" cy="8.2" r="1.5" fill="#80b070"/><circle cx="12.5" cy="18.4" r="1.9" fill="#3a6a38"/><circle cx="9.1" cy="7.3" r="2.6" fill="#3a6a38"/><circle cx="9.6" cy="8.0" r="1.6" fill="#80b070"/><circle cx="7.6" cy="17.9" r="1.8" fill="#4a7a40"/><circle cx="9.2" cy="6.6" r="1.5" fill="#4a7a40"/><circle cx="6.5" cy="15.8" r="1.5" fill="#6a9a58"/><circle cx="5.8" cy="10.7" r="1.3" fill="#80b070"/><circle cx="12.4" cy="2.4" r="2.9" fill="#4a7a40"/><circle cx="5.8" cy="10.9" r="1.8" fill="#4a7a40"/><circle cx="8.7" cy="3.3" r="2.4" fill="#4a7a40"/><circle cx="15.5" cy="15.8" r="1.8" fill="#2a5a30"/><circle cx="15.5" cy="12.2" r="1.5" fill="#3a6a38"/><circle cx="10.5" cy="18.4" r="2.7" fill="#2a5a30"/><circle cx="22.0" cy="16.2" r="1.8" fill="#6a9a58"/><circle cx="21.2" cy="15.1" r="2.2" fill="#2a5a30"/><circle cx="12.0" cy="24.1" r="1.8" fill="#80b070"/><circle cx="14.4" cy="17.8" r="1.3" fill="#3a6a38"/><circle cx="18.3" cy="23.2" r="2.7" fill="#80b070"/><circle cx="11.2" cy="24.2" r="2.7" fill="#4a7a40"/><circle cx="20.0" cy="18.2" r="2.8" fill="#80b070"/><circle cx="8.8" cy="25.0" r="1.9" fill="#80b070"/><circle cx="12.0" cy="15.6" r="1.3" fill="#6a9a58"/><circle cx="12.6" cy="16.8" r="2.1" fill="#2a5a30"/><circle cx="2.0" cy="12.4" r="1.8" fill="#4a7a40"/><circle cx="7.4" cy="10.0" r="2.1" fill="#80b070"/><circle cx="18.1" cy="8.5" r="1.7" fill="#2a5a30"/><circle cx="7.2" cy="10.5" r="1.7" fill="#3a6a38"/><circle cx="18.7" cy="6.6" r="1.8" fill="#80b070"/><circle cx="7.3" cy="4.5" r="1.8" fill="#3a6a38"/><circle cx="10.1" cy="3.2" r="2.4" fill="#80b070"/><circle cx="12.1" cy="16.9" r="2.6" fill="#2a5a30"/><circle cx="20.0" cy="15.3" r="2.8" fill="#3a6a38"/><circle cx="15.9" cy="21.4" r="2.6" fill="#3a6a38"/><circle cx="15.4" cy="20.3" r="2.9" fill="#4a7a40"/><circle cx="14.7" cy="13.0" r="2.0" fill="#6a9a58"/><circle cx="11.1" cy="3.2" r="2.1" fill="#3a6a38"/><circle cx="18.6" cy="14.5" r="2.9" fill="#2a5a30"/><circle cx="6.8" cy="20.9" r="1.6" fill="#2a5a30"/><circle cx="11.3" cy="12.5" r="1.9" fill="#2a5a30"/><circle cx="18.1" cy="19.8" r="2.8" fill="#3a6a38"/><circle cx="6.7" cy="16.8" r="1.7" fill="#2a5a30"/><circle cx="17.0" cy="10.6" r="2.0" fill="#6a9a58"/><circle cx="14.1" cy="14.7" r="1.8" fill="#80b070"/><circle cx="6.3" cy="15.9" r="3.0" fill="#6a9a58"/><circle cx="13.7" cy="17.8" r="1.4" fill="#80b070"/><circle cx="14.5" cy="22.2" r="2.7" fill="#80b070"/><circle cx="16.5" cy="4.3" r="1.8" fill="#2a5a30"/></svg><svg class="a" style="left:408px;top:324px" width="24" height="33" viewBox="0 0 24 33"><rect x="11.0" y="19.8" width="2" height="13.2" fill="#4a3a2a"/><ellipse cx="12.0" cy="13.9" rx="10.8" ry="12.5" fill="#5a8a48"/><circle cx="7.6" cy="20.2" r="1.5" fill="#7aaa60"/><circle cx="6.4" cy="12.1" r="2.6" fill="#5a8a48"/><circle cx="8.2" cy="11.4" r="1.7" fill="#3a6a30"/><circle cx="17.8" cy="7.6" r="1.4" fill="#90b878"/><circle cx="13.5" cy="22.9" r="2.6" fill="#3a6a30"/><circle cx="15.8" cy="18.7" r="3.0" fill="#90b878"/><circle cx="19.0" cy="9.1" r="2.0" fill="#3a6a30"/><circle cx="8.7" cy="7.7" r="2.0" fill="#7aaa60"/><circle cx="5.5" cy="22.5" r="3.0" fill="#7aaa60"/><circle cx="3.7" cy="10.5" r="2.1" fill="#5a8a48"/><circle cx="7.4" cy="10.1" r="1.8" fill="#5a8a48"/><circle cx="8.2" cy="8.6" r="2.5" fill="#4a7a40"/><circle cx="7.5" cy="9.3" r="2.2" fill="#7aaa60"/><circle cx="5.7" cy="13.1" r="2.8" fill="#3a6a30"/><circle cx="17.6" cy="22.1" r="1.3" fill="#7aaa60"/><circle cx="9.8" cy="14.6" r="1.9" fill="#7aaa60"/><circle cx="13.6" cy="13.6" r="1.8" fill="#5a8a48"/><circle cx="15.7" cy="4.0" r="1.6" fill="#90b878"/><circle cx="12.1" cy="21.7" r="1.9" fill="#7aaa60"/><circle cx="16.9" cy="20.6" r="2.6" fill="#4a7a40"/><circle cx="16.3" cy="22.2" r="1.4" fill="#5a8a48"/><circle cx="10.8" cy="8.4" r="2.9" fill="#7aaa60"/><circle cx="7.4" cy="16.5" r="2.2" fill="#5a8a48"/><circle cx="17.6" cy="17.3" r="2.2" fill="#3a6a30"/><circle cx="15.9" cy="17.4" r="1.8" fill="#5a8a48"/><circle cx="12.5" cy="7.9" r="2.0" fill="#7aaa60"/><circle cx="6.1" cy="16.6" r="2.7" fill="#90b878"/><circle cx="13.8" cy="12.2" r="1.8" fill="#7aaa60"/><circle cx="2.8" cy="13.2" r="1.7" fill="#7aaa60"/><circle cx="9.8" cy="8.4" r="1.7" fill="#7aaa60"/><circle cx="16.7" cy="22.7" r="1.2" fill="#3a6a30"/><circle cx="15.1" cy="17.5" r="2.6" fill="#4a7a40"/><circle cx="18.1" cy="19.8" r="2.1" fill="#5a8a48"/><circle cx="11.7" cy="25.0" r="2.3" fill="#90b878"/><circle cx="8.3" cy="8.0" r="2.3" fill="#5a8a48"/><circle cx="5.9" cy="12.0" r="2.5" fill="#4a7a40"/><circle cx="11.3" cy="17.4" r="2.0" fill="#4a7a40"/><circle cx="12.6" cy="24.2" r="2.7" fill="#4a7a40"/><circle cx="9.3" cy="11.2" r="2.3" fill="#90b878"/><circle cx="7.9" cy="13.9" r="1.9" fill="#4a7a40"/><circle cx="9.7" cy="7.7" r="2.5" fill="#90b878"/><circle cx="15.5" cy="22.6" r="1.8" fill="#90b878"/><circle cx="14.8" cy="8.4" r="1.5" fill="#5a8a48"/><circle cx="3.7" cy="10.7" r="2.9" fill="#90b878"/><circle cx="14.8" cy="16.5" r="1.5" fill="#90b878"/><circle cx="13.4" cy="22.8" r="2.3" fill="#4a7a40"/><circle cx="19.2" cy="20.5" r="2.6" fill="#90b878"/><circle cx="3.2" cy="9.2" r="2.4" fill="#5a8a48"/><circle cx="6.2" cy="15.9" r="1.6" fill="#3a6a30"/><circle cx="12.7" cy="25.3" r="1.5" fill="#3a6a30"/></svg><svg class="a" style="left:57px;top:360px" width="16" height="33" viewBox="0 0 16 33"><ellipse cx="8.0" cy="16.5" rx="7.2" ry="15.8" fill="#3a5a28"/><circle cx="6.2" cy="29.0" r="1.5" fill="#5a7a38"/><circle cx="5.2" cy="10.6" r="1.8" fill="#5a7a38"/><circle cx="5.2" cy="6.5" r="1.3" fill="#5a7a38"/><circle cx="5.4" cy="29.2" r="0.8" fill="#4a6a30"/><circle cx="10.2" cy="18.3" r="1.4" fill="#304a22"/><circle cx="13.2" cy="15.7" r="1.7" fill="#5a7a38"/><circle cx="8.1" cy="16.4" r="1.4" fill="#4a6a30"/><circle cx="13.2" cy="8.0" r="1.7" fill="#2a4a20"/><circle cx="8.7" cy="7.6" r="1.7" fill="#5a7a38"/><circle cx="12.5" cy="16.1" r="1.5" fill="#3a5a28"/><circle cx="6.7" cy="21.6" r="1.1" fill="#2a4a20"/><circle cx="13.7" cy="19.7" r="1.0" fill="#2a4a20"/><circle cx="6.0" cy="3.3" r="0.8" fill="#4a6a30"/><circle cx="11.8" cy="5.7" r="1.0" fill="#5a7a38"/><circle cx="8.8" cy="10.0" r="1.1" fill="#304a22"/><circle cx="9.4" cy="4.9" r="0.8" fill="#2a4a20"/><circle cx="5.6" cy="19.6" r="1.3" fill="#304a22"/><circle cx="10.9" cy="22.9" r="1.5" fill="#3a5a28"/><circle cx="12.5" cy="25.5" r="1.2" fill="#5a7a38"/><circle cx="8.0" cy="7.9" r="1.0" fill="#304a22"/><circle cx="6.7" cy="6.9" r="1.6" fill="#5a7a38"/><circle cx="7.0" cy="20.4" r="1.4" fill="#5a7a38"/><circle cx="3.6" cy="7.0" r="1.5" fill="#3a5a28"/><circle cx="5.7" cy="6.3" r="0.9" fill="#4a6a30"/><circle cx="10.3" cy="8.5" r="0.9" fill="#4a6a30"/><circle cx="5.2" cy="27.4" r="1.5" fill="#4a6a30"/><circle cx="10.3" cy="21.0" r="1.2" fill="#3a5a28"/><circle cx="3.2" cy="12.5" r="1.5" fill="#304a22"/><circle cx="10.8" cy="15.6" r="1.7" fill="#4a6a30"/><circle cx="3.6" cy="9.2" r="1.7" fill="#304a22"/></svg><svg class="a" style="left:95px;top:360px" width="16" height="33" viewBox="0 0 16 33"><ellipse cx="8.0" cy="16.5" rx="7.2" ry="15.8" fill="#1a4a1a"/><circle cx="7.2" cy="19.5" r="1.2" fill="#1a4a1a"/><circle cx="7.6" cy="8.4" r="1.8" fill="#205a1a"/><circle cx="7.5" cy="16.8" r="1.0" fill="#3a7a30"/><circle cx="3.5" cy="19.4" r="1.4" fill="#103a10"/><circle cx="7.5" cy="21.4" r="1.6" fill="#2a6a22"/><circle cx="6.7" cy="2.7" r="1.1" fill="#205a1a"/><circle cx="4.1" cy="10.3" r="1.7" fill="#2a6a22"/><circle cx="10.6" cy="10.8" r="1.4" fill="#2a6a22"/><circle cx="5.4" cy="11.8" r="1.7" fill="#3a7a30"/><circle cx="11.9" cy="12.8" r="0.9" fill="#205a1a"/><circle cx="4.5" cy="24.6" r="1.5" fill="#205a1a"/><circle cx="11.8" cy="22.3" r="1.3" fill="#3a7a30"/><circle cx="8.8" cy="27.4" r="1.0" fill="#1a4a1a"/><circle cx="9.0" cy="15.9" r="1.4" fill="#205a1a"/><circle cx="3.2" cy="12.5" r="1.3" fill="#2a6a22"/><circle cx="9.0" cy="8.3" r="1.2" fill="#1a4a1a"/><circle cx="6.1" cy="4.6" r="1.1" fill="#1a4a1a"/><circle cx="11.9" cy="28.1" r="1.5" fill="#205a1a"/><circle cx="9.7" cy="25.9" r="1.4" fill="#3a7a30"/><circle cx="2.0" cy="10.4" r="1.7" fill="#3a7a30"/><circle cx="6.3" cy="21.6" r="1.5" fill="#2a6a22"/><circle cx="10.6" cy="15.3" r="1.0" fill="#205a1a"/><circle cx="8.6" cy="2.0" r="1.8" fill="#205a1a"/><circle cx="14.2" cy="10.2" r="0.9" fill="#205a1a"/><circle cx="12.6" cy="20.1" r="1.6" fill="#3a7a30"/><circle cx="4.8" cy="8.3" r="1.8" fill="#205a1a"/><circle cx="5.5" cy="26.3" r="1.3" fill="#3a7a30"/><circle cx="12.9" cy="18.9" r="1.6" fill="#1a4a1a"/><circle cx="13.3" cy="20.7" r="1.4" fill="#3a7a30"/><circle cx="7.3" cy="12.3" r="1.8" fill="#205a1a"/></svg><svg class="a" style="left:133px;top:360px" width="16" height="33" viewBox="0 0 16 33"><ellipse cx="8.0" cy="16.5" rx="7.2" ry="15.8" fill="#3a6a28"/><circle cx="10.2" cy="25.8" r="1.0" fill="#6a9a40"/><circle cx="6.6" cy="25.3" r="1.1" fill="#6a9a40"/><circle cx="13.3" cy="23.0" r="1.6" fill="#2a5020"/><circle cx="5.1" cy="28.2" r="1.8" fill="#305a22"/><circle cx="8.4" cy="12.0" r="1.2" fill="#6a9a40"/><circle cx="10.3" cy="29.4" r="1.0" fill="#4a8a30"/><circle cx="3.2" cy="17.6" r="1.0" fill="#6a9a40"/><circle cx="5.2" cy="12.5" r="1.5" fill="#3a6a28"/><circle cx="6.5" cy="20.9" r="1.0" fill="#305a22"/><circle cx="5.9" cy="2.2" r="0.9" fill="#305a22"/><circle cx="7.3" cy="17.0" r="0.9" fill="#4a8a30"/><circle cx="6.8" cy="17.5" r="1.3" fill="#2a5020"/><circle cx="5.9" cy="10.7" r="1.5" fill="#6a9a40"/><circle cx="13.8" cy="12.6" r="1.1" fill="#305a22"/><circle cx="10.9" cy="6.8" r="1.0" fill="#4a8a30"/><circle cx="1.6" cy="18.3" r="1.7" fill="#6a9a40"/><circle cx="3.6" cy="9.8" r="1.4" fill="#4a8a30"/><circle cx="3.1" cy="16.6" r="1.0" fill="#6a9a40"/><circle cx="6.9" cy="22.2" r="1.3" fill="#6a9a40"/><circle cx="1.6" cy="16.0" r="1.7" fill="#6a9a40"/><circle cx="9.3" cy="2.0" r="1.4" fill="#4a8a30"/><circle cx="12.3" cy="12.5" r="1.3" fill="#3a6a28"/><circle cx="8.6" cy="12.4" r="1.6" fill="#3a6a28"/><circle cx="9.9" cy="25.3" r="1.1" fill="#3a6a28"/><circle cx="11.0" cy="26.7" r="1.6" fill="#3a6a28"/><circle cx="9.3" cy="13.0" r="1.6" fill="#6a9a40"/><circle cx="11.6" cy="14.8" r="1.0" fill="#305a22"/><circle cx="3.9" cy="23.3" r="1.4" fill="#2a5020"/><circle cx="8.3" cy="31.4" r="1.3" fill="#3a6a28"/><circle cx="7.5" cy="16.1" r="0.9" fill="#2a5020"/></svg><svg class="a" style="left:171px;top:360px" width="16" height="33" viewBox="0 0 16 33"><ellipse cx="8.0" cy="16.5" rx="7.2" ry="15.8" fill="#4a8a20"/><circle cx="12.5" cy="25.0" r="1.3" fill="#5a9a28"/><circle cx="3.0" cy="17.6" r="1.5" fill="#3a6a18"/><circle cx="12.1" cy="20.4" r="1.1" fill="#80b848"/><circle cx="7.6" cy="1.6" r="1.2" fill="#3a6a18"/><circle cx="7.9" cy="2.2" r="1.7" fill="#5a9a28"/><circle cx="9.1" cy="12.7" r="1.6" fill="#6aaa30"/><circle cx="3.4" cy="23.7" r="1.0" fill="#6aaa30"/><circle cx="11.0" cy="10.2" r="1.0" fill="#5a9a28"/><circle cx="3.9" cy="21.5" r="1.7" fill="#6aaa30"/><circle cx="5.5" cy="6.8" r="1.1" fill="#6aaa30"/><circle cx="10.9" cy="23.1" r="1.2" fill="#6aaa30"/><circle cx="8.4" cy="14.5" r="1.7" fill="#5a9a28"/><circle cx="12.7" cy="14.8" r="1.6" fill="#80b848"/><circle cx="10.7" cy="16.5" r="1.7" fill="#3a6a18"/><circle cx="7.5" cy="17.1" r="1.1" fill="#3a6a18"/><circle cx="8.8" cy="3.2" r="1.0" fill="#6aaa30"/><circle cx="12.3" cy="19.0" r="1.7" fill="#6aaa30"/><circle cx="3.6" cy="14.5" r="1.1" fill="#80b848"/><circle cx="8.4" cy="19.8" r="1.8" fill="#3a6a18"/><circle cx="3.8" cy="26.3" r="1.8" fill="#3a6a18"/><circle cx="10.7" cy="15.8" r="1.2" fill="#4a8a20"/><circle cx="4.6" cy="9.6" r="1.7" fill="#6aaa30"/><circle cx="10.5" cy="20.9" r="1.7" fill="#4a8a20"/><circle cx="13.1" cy="23.8" r="0.9" fill="#80b848"/><circle cx="12.7" cy="8.8" r="1.5" fill="#6aaa30"/><circle cx="5.3" cy="7.7" r="1.7" fill="#80b848"/><circle cx="6.0" cy="23.7" r="1.5" fill="#80b848"/><circle cx="12.5" cy="16.7" r="1.5" fill="#4a8a20"/><circle cx="12.9" cy="22.5" r="1.6" fill="#6aaa30"/><circle cx="7.5" cy="19.5" r="1.1" fill="#6aaa30"/></svg><svg class="a" style="left:209px;top:360px" width="16" height="33" viewBox="0 0 16 33"><ellipse cx="8.0" cy="16.5" rx="7.2" ry="15.8" fill="#3a7a30"/><circle cx="12.5" cy="17.7" r="1.1" fill="#70a858"/><circle cx="4.5" cy="25.6" r="1.6" fill="#5a9a40"/><circle cx="8.0" cy="17.5" r="1.5" fill="#70a858"/><circle cx="5.8" cy="14.5" r="1.2" fill="#3a7a30"/><circle cx="10.8" cy="11.7" r="1.6" fill="#3a7a30"/><circle cx="4.2" cy="8.3" r="1.1" fill="#5a9a40"/><circle cx="10.8" cy="19.3" r="1.5" fill="#70a858"/><circle cx="6.5" cy="4.4" r="1.3" fill="#5a9a40"/><circle cx="11.3" cy="4.7" r="1.6" fill="#70a858"/><circle cx="7.0" cy="22.7" r="1.4" fill="#5a9a40"/><circle cx="11.1" cy="14.9" r="1.0" fill="#70a858"/><circle cx="11.9" cy="9.3" r="1.0" fill="#4a8a38"/><circle cx="6.4" cy="11.6" r="1.6" fill="#3a7a30"/><circle cx="4.9" cy="14.7" r="1.5" fill="#3a7a30"/><circle cx="12.8" cy="20.5" r="0.8" fill="#3a7a30"/><circle cx="9.8" cy="3.1" r="1.4" fill="#2a5a22"/><circle cx="7.3" cy="10.1" r="0.9" fill="#2a5a22"/><circle cx="13.5" cy="9.3" r="1.7" fill="#5a9a40"/><circle cx="8.5" cy="28.9" r="1.6" fill="#5a9a40"/><circle cx="4.3" cy="26.1" r="0.9" fill="#2a5a22"/><circle cx="7.8" cy="20.7" r="1.1" fill="#4a8a38"/><circle cx="2.2" cy="17.0" r="0.8" fill="#3a7a30"/><circle cx="2.4" cy="10.1" r="0.8" fill="#3a7a30"/><circle cx="6.3" cy="17.2" r="1.3" fill="#2a5a22"/><circle cx="13.3" cy="23.3" r="0.9" fill="#2a5a22"/><circle cx="13.0" cy="20.2" r="0.9" fill="#4a8a38"/><circle cx="11.9" cy="11.8" r="1.5" fill="#2a5a22"/><circle cx="4.7" cy="19.3" r="1.5" fill="#4a8a38"/><circle cx="12.5" cy="27.1" r="1.5" fill="#4a8a38"/><circle cx="14.5" cy="19.7" r="1.7" fill="#2a5a22"/></svg><svg class="a" style="left:239px;top:360px" width="32" height="33" viewBox="0 0 32 33"><path d="M16.0 0.7 C24.0 9.9 31.4 23.1 28.8 31.3 L3.2 31.3 C0.6 23.1 8.0 9.9 16.0 0.7 Z" fill="#3a6a20"/><circle cx="26.4" cy="25.8" r="1.5" fill="#4a7a28"/><circle cx="17.8" cy="21.7" r="1.1" fill="#2a5018"/><circle cx="23.7" cy="28.3" r="2.2" fill="#4a7a28"/><circle cx="10.6" cy="25.0" r="2.1" fill="#5a8a38"/><circle cx="15.6" cy="8.0" r="1.1" fill="#2a5018"/><circle cx="19.1" cy="7.8" r="2.1" fill="#3a6a20"/><circle cx="21.5" cy="28.2" r="1.0" fill="#2a5018"/><circle cx="16.6" cy="5.5" r="2.2" fill="#2a5018"/><circle cx="7.3" cy="24.1" r="1.6" fill="#2a5018"/><circle cx="14.1" cy="11.7" r="1.3" fill="#5a8a38"/><circle cx="14.6" cy="3.5" r="1.2" fill="#2a5018"/><circle cx="11.5" cy="23.3" r="1.2" fill="#2a5018"/><circle cx="17.8" cy="25.7" r="1.8" fill="#5a8a38"/><circle cx="12.3" cy="16.2" r="1.4" fill="#5a8a38"/><circle cx="6.0" cy="23.7" r="1.6" fill="#3a6a20"/><circle cx="18.5" cy="12.9" r="1.8" fill="#4a7a28"/><circle cx="19.4" cy="16.7" r="2.0" fill="#5a8a38"/><circle cx="25.7" cy="27.5" r="1.6" fill="#2a5018"/><circle cx="10.8" cy="21.9" r="1.3" fill="#3a6a20"/><circle cx="12.3" cy="11.4" r="1.7" fill="#5a8a38"/><circle cx="6.7" cy="25.1" r="1.2" fill="#2a5018"/><circle cx="14.1" cy="3.8" r="1.9" fill="#2a5018"/><circle cx="20.2" cy="10.1" r="1.2" fill="#305a1c"/><circle cx="24.5" cy="19.8" r="1.5" fill="#4a7a28"/><circle cx="16.8" cy="3.8" r="1.2" fill="#5a8a38"/><circle cx="18.6" cy="7.7" r="1.8" fill="#3a6a20"/><circle cx="16.0" cy="10.1" r="1.7" fill="#3a6a20"/><circle cx="13.5" cy="9.0" r="2.1" fill="#2a5018"/><circle cx="19.3" cy="18.0" r="1.7" fill="#3a6a20"/><circle cx="12.9" cy="9.3" r="2.2" fill="#305a1c"/><circle cx="15.6" cy="12.1" r="1.9" fill="#4a7a28"/><circle cx="15.6" cy="11.1" r="1.3" fill="#2a5018"/><circle cx="14.5" cy="25.8" r="2.0" fill="#5a8a38"/><circle cx="7.4" cy="25.0" r="1.7" fill="#3a6a20"/><circle cx="19.2" cy="10.3" r="1.3" fill="#4a7a28"/><circle cx="17.5" cy="19.0" r="2.1" fill="#2a5018"/><circle cx="23.4" cy="23.4" r="1.8" fill="#2a5018"/><circle cx="14.8" cy="4.3" r="1.0" fill="#3a6a20"/><circle cx="15.4" cy="5.0" r="1.8" fill="#5a8a38"/><circle cx="22.1" cy="27.9" r="1.6" fill="#2a5018"/><circle cx="12.6" cy="28.6" r="2.2" fill="#305a1c"/><circle cx="23.4" cy="17.3" r="2.0" fill="#4a7a28"/><circle cx="21.6" cy="23.1" r="2.2" fill="#2a5018"/><circle cx="12.0" cy="20.7" r="2.0" fill="#305a1c"/><circle cx="21.8" cy="20.4" r="1.2" fill="#5a8a38"/></svg><svg class="a" style="left:277px;top:360px" width="32" height="33" viewBox="0 0 32 33"><path d="M16.0 0.7 C24.0 9.9 31.4 23.1 28.8 31.3 L3.2 31.3 C0.6 23.1 8.0 9.9 16.0 0.7 Z" fill="#3a8a28"/><circle cx="11.9" cy="10.2" r="1.4" fill="#5aaa38"/><circle cx="16.3" cy="9.7" r="1.0" fill="#5aaa38"/><circle cx="26.0" cy="25.5" r="1.9" fill="#80c050"/><circle cx="16.8" cy="23.6" r="1.4" fill="#5aaa38"/><circle cx="24.7" cy="24.1" r="1.3" fill="#2a6a20"/><circle cx="17.3" cy="15.2" r="2.0" fill="#80c050"/><circle cx="11.5" cy="26.2" r="1.8" fill="#3a8a28"/><circle cx="18.1" cy="7.7" r="2.1" fill="#2a6a20"/><circle cx="15.2" cy="10.8" r="1.1" fill="#3a8a28"/><circle cx="17.8" cy="5.6" r="1.8" fill="#80c050"/><circle cx="23.8" cy="29.9" r="1.9" fill="#2a6a20"/><circle cx="14.9" cy="10.4" r="1.1" fill="#4a9a30"/><circle cx="23.3" cy="20.6" r="1.7" fill="#4a9a30"/><circle cx="18.2" cy="18.3" r="1.0" fill="#80c050"/><circle cx="17.4" cy="23.0" r="1.2" fill="#5aaa38"/><circle cx="14.5" cy="9.7" r="1.5" fill="#80c050"/><circle cx="21.3" cy="19.9" r="2.0" fill="#2a6a20"/><circle cx="20.5" cy="26.8" r="1.4" fill="#3a8a28"/><circle cx="15.2" cy="6.0" r="1.1" fill="#2a6a20"/><circle cx="17.5" cy="11.2" r="1.0" fill="#80c050"/><circle cx="17.4" cy="24.3" r="1.2" fill="#3a8a28"/><circle cx="12.1" cy="10.8" r="0.9" fill="#2a6a20"/><circle cx="12.6" cy="9.4" r="1.4" fill="#5aaa38"/><circle cx="9.0" cy="27.8" r="1.7" fill="#80c050"/><circle cx="18.5" cy="6.4" r="1.9" fill="#80c050"/><circle cx="21.4" cy="19.4" r="1.4" fill="#3a8a28"/><circle cx="21.6" cy="27.6" r="1.0" fill="#2a6a20"/><circle cx="16.4" cy="13.6" r="1.2" fill="#3a8a28"/><circle cx="14.4" cy="4.1" r="1.9" fill="#80c050"/><circle cx="25.6" cy="22.6" r="1.9" fill="#3a8a28"/><circle cx="18.2" cy="16.7" r="1.3" fill="#80c050"/><circle cx="16.4" cy="19.5" r="1.5" fill="#4a9a30"/><circle cx="9.2" cy="17.2" r="2.2" fill="#5aaa38"/><circle cx="11.7" cy="19.6" r="1.9" fill="#4a9a30"/><circle cx="20.3" cy="30.2" r="2.1" fill="#2a6a20"/><circle cx="19.8" cy="11.1" r="1.6" fill="#80c050"/><circle cx="12.5" cy="8.4" r="1.8" fill="#3a8a28"/><circle cx="16.3" cy="22.0" r="1.6" fill="#2a6a20"/><circle cx="23.8" cy="28.5" r="1.5" fill="#2a6a20"/><circle cx="13.2" cy="22.7" r="2.0" fill="#80c050"/><circle cx="18.5" cy="13.7" r="2.1" fill="#5aaa38"/><circle cx="5.5" cy="25.7" r="1.3" fill="#5aaa38"/><circle cx="12.9" cy="26.3" r="1.2" fill="#2a6a20"/><circle cx="20.1" cy="22.6" r="1.8" fill="#2a6a20"/><circle cx="9.7" cy="20.1" r="2.1" fill="#5aaa38"/></svg><svg class="a" style="left:315px;top:360px" width="32" height="33" viewBox="0 0 32 33"><path d="M2.6 32.0 C0.0 19.8 9.6 1.0 16.0 0.7 C22.4 1.0 32.0 19.8 29.4 32.0 Z" fill="#3a8a38"/><circle cx="19.6" cy="17.2" r="1.8" fill="#3a8a38"/><circle cx="14.1" cy="8.5" r="1.3" fill="#4a9a40"/><circle cx="2.8" cy="30.7" r="1.8" fill="#2a6a28"/><circle cx="18.6" cy="24.9" r="1.2" fill="#3a8a38"/><circle cx="15.6" cy="14.9" r="1.4" fill="#3a8a38"/><circle cx="25.8" cy="22.6" r="1.7" fill="#2a6a28"/><circle cx="14.1" cy="15.1" r="1.6" fill="#70b860"/><circle cx="20.1" cy="9.4" r="1.1" fill="#4a9a40"/><circle cx="17.1" cy="22.1" r="1.6" fill="#2a6a28"/><circle cx="16.1" cy="2.7" r="1.8" fill="#3a8a38"/><circle cx="16.7" cy="4.3" r="1.1" fill="#3a8a38"/><circle cx="11.1" cy="13.7" r="1.2" fill="#2a6a28"/><circle cx="4.0" cy="26.5" r="1.6" fill="#5aaa48"/><circle cx="15.2" cy="4.7" r="1.0" fill="#3a8a38"/><circle cx="22.9" cy="19.4" r="1.8" fill="#2a6a28"/><circle cx="17.3" cy="6.9" r="1.1" fill="#70b860"/><circle cx="23.3" cy="25.2" r="0.8" fill="#70b860"/><circle cx="28.1" cy="26.4" r="1.9" fill="#70b860"/><circle cx="9.0" cy="25.6" r="1.2" fill="#4a9a40"/><circle cx="7.6" cy="21.5" r="1.9" fill="#3a8a38"/><circle cx="9.3" cy="10.1" r="1.7" fill="#3a8a38"/><circle cx="17.4" cy="19.5" r="1.0" fill="#5aaa48"/><circle cx="19.6" cy="11.8" r="0.9" fill="#5aaa48"/><circle cx="14.6" cy="15.5" r="1.8" fill="#3a8a38"/><circle cx="9.5" cy="6.8" r="1.8" fill="#70b860"/><circle cx="16.6" cy="7.9" r="2.0" fill="#3a8a38"/><circle cx="10.5" cy="17.6" r="0.9" fill="#70b860"/><circle cx="20.0" cy="5.2" r="1.6" fill="#5aaa48"/><circle cx="18.7" cy="3.1" r="1.4" fill="#3a8a38"/><circle cx="11.2" cy="18.5" r="1.8" fill="#5aaa48"/><circle cx="23.8" cy="12.1" r="1.1" fill="#5aaa48"/><circle cx="10.7" cy="16.4" r="1.2" fill="#3a8a38"/><circle cx="23.4" cy="21.9" r="1.4" fill="#2a6a28"/><circle cx="20.4" cy="22.4" r="1.7" fill="#5aaa48"/><circle cx="17.1" cy="6.3" r="1.2" fill="#5aaa48"/><circle cx="19.7" cy="22.2" r="1.1" fill="#2a6a28"/><circle cx="11.2" cy="17.9" r="1.8" fill="#3a8a38"/><circle cx="7.4" cy="14.2" r="1.1" fill="#4a9a40"/><circle cx="11.9" cy="3.7" r="1.1" fill="#3a8a38"/><circle cx="17.0" cy="19.1" r="1.9" fill="#5aaa48"/><circle cx="16.7" cy="3.0" r="1.6" fill="#5aaa48"/><circle cx="11.1" cy="27.9" r="1.9" fill="#4a9a40"/><circle cx="11.1" cy="26.6" r="1.5" fill="#70b860"/><circle cx="25.9" cy="15.8" r="1.3" fill="#70b860"/><circle cx="22.1" cy="30.6" r="1.9" fill="#70b860"/><circle cx="18.3" cy="3.3" r="1.5" fill="#4a9a40"/><circle cx="16.9" cy="27.7" r="1.0" fill="#2a6a28"/><circle cx="6.2" cy="24.2" r="0.9" fill="#4a9a40"/><circle cx="7.1" cy="15.2" r="1.8" fill="#2a6a28"/><circle cx="18.7" cy="3.3" r="0.9" fill="#4a9a40"/><circle cx="20.3" cy="21.6" r="1.6" fill="#4a9a40"/><circle cx="16.2" cy="18.3" r="1.5" fill="#70b860"/><circle cx="15.4" cy="15.1" r="1.8" fill="#2a6a28"/><circle cx="4.4" cy="28.4" r="1.6" fill="#5aaa48"/><circle cx="17.0" cy="30.0" r="1.9" fill="#70b860"/><circle cx="26.5" cy="25.1" r="1.1" fill="#70b860"/><circle cx="29.2" cy="30.9" r="1.7" fill="#5aaa48"/><circle cx="12.7" cy="9.3" r="2.0" fill="#4a9a40"/><circle cx="21.9" cy="16.1" r="1.1" fill="#2a6a28"/><circle cx="13.8" cy="29.7" r="0.9" fill="#70b860"/><circle cx="18.0" cy="3.8" r="1.5" fill="#2a6a28"/><circle cx="16.1" cy="12.7" r="1.9" fill="#4a9a40"/><circle cx="16.4" cy="24.1" r="0.9" fill="#4a9a40"/><circle cx="26.0" cy="24.8" r="1.5" fill="#3a8a38"/><circle cx="21.1" cy="29.3" r="1.0" fill="#70b860"/></svg><svg class="a" style="left:353px;top:360px" width="32" height="33" viewBox="0 0 32 33"><rect x="15.0" y="18.2" width="2" height="14.8" fill="#4a3a2a"/><ellipse cx="16.0" cy="13.2" rx="15.4" ry="9.9" fill="#3a7a30"/><circle cx="21.8" cy="11.3" r="1.8" fill="#2a5a22"/><circle cx="8.0" cy="15.5" r="1.4" fill="#3a7a30"/><circle cx="20.4" cy="19.0" r="2.4" fill="#2a5a22"/><circle cx="28.1" cy="14.2" r="2.3" fill="#4a8a38"/><circle cx="17.2" cy="7.6" r="2.1" fill="#2a5a22"/><circle cx="4.3" cy="10.4" r="1.4" fill="#70b058"/><circle cx="3.5" cy="12.4" r="1.6" fill="#5a9a40"/><circle cx="19.5" cy="14.0" r="1.2" fill="#70b058"/><circle cx="24.9" cy="8.5" r="1.3" fill="#4a8a38"/><circle cx="17.8" cy="4.2" r="1.9" fill="#2a5a22"/><circle cx="10.9" cy="12.0" r="2.3" fill="#3a7a30"/><circle cx="12.7" cy="5.1" r="2.5" fill="#4a8a38"/><circle cx="26.2" cy="11.8" r="2.0" fill="#5a9a40"/><circle cx="21.2" cy="20.2" r="1.2" fill="#2a5a22"/><circle cx="18.2" cy="15.9" r="1.4" fill="#70b058"/><circle cx="11.6" cy="9.1" r="1.7" fill="#70b058"/><circle cx="5.3" cy="14.0" r="2.3" fill="#4a8a38"/><circle cx="15.0" cy="8.0" r="2.9" fill="#3a7a30"/><circle cx="23.9" cy="11.2" r="1.3" fill="#3a7a30"/><circle cx="26.5" cy="8.4" r="1.7" fill="#4a8a38"/><circle cx="7.6" cy="9.8" r="2.4" fill="#70b058"/><circle cx="1.8" cy="13.1" r="2.8" fill="#2a5a22"/><circle cx="4.8" cy="16.8" r="1.8" fill="#4a8a38"/><circle cx="16.0" cy="15.8" r="2.5" fill="#3a7a30"/><circle cx="24.2" cy="9.7" r="2.9" fill="#3a7a30"/><circle cx="19.0" cy="14.5" r="2.1" fill="#2a5a22"/><circle cx="20.5" cy="16.9" r="2.8" fill="#70b058"/><circle cx="19.3" cy="5.7" r="2.3" fill="#5a9a40"/><circle cx="9.7" cy="17.6" r="2.7" fill="#70b058"/><circle cx="18.6" cy="9.4" r="2.6" fill="#4a8a38"/><circle cx="6.4" cy="12.0" r="2.2" fill="#3a7a30"/><circle cx="19.0" cy="9.3" r="1.9" fill="#70b058"/><circle cx="21.5" cy="21.2" r="2.6" fill="#3a7a30"/><circle cx="22.6" cy="17.5" r="2.7" fill="#5a9a40"/><circle cx="7.7" cy="9.4" r="2.4" fill="#5a9a40"/><circle cx="9.7" cy="5.3" r="1.3" fill="#4a8a38"/><circle cx="17.7" cy="6.0" r="2.0" fill="#4a8a38"/><circle cx="12.9" cy="14.4" r="1.9" fill="#3a7a30"/><circle cx="15.6" cy="18.5" r="2.0" fill="#70b058"/><circle cx="19.3" cy="6.8" r="2.6" fill="#70b058"/><circle cx="5.7" cy="15.7" r="3.0" fill="#4a8a38"/><circle cx="18.2" cy="22.1" r="2.8" fill="#4a8a38"/><circle cx="19.9" cy="19.5" r="1.6" fill="#4a8a38"/><circle cx="3.5" cy="9.0" r="2.1" fill="#5a9a40"/><circle cx="12.8" cy="8.2" r="2.9" fill="#3a7a30"/><circle cx="27.8" cy="14.3" r="2.2" fill="#3a7a30"/><circle cx="18.7" cy="12.1" r="2.2" fill="#3a7a30"/><circle cx="20.9" cy="17.1" r="2.3" fill="#2a5a22"/><circle cx="11.0" cy="5.9" r="2.4" fill="#4a8a38"/><circle cx="22.8" cy="8.6" r="3.0" fill="#3a7a30"/></svg><svg class="a" style="left:391px;top:360px" width="32" height="33" viewBox="0 0 32 33"><rect x="15.0" y="18.2" width="2" height="14.8" fill="#4a3a2a"/><ellipse cx="16.0" cy="13.2" rx="15.4" ry="9.9" fill="#3a6a38"/><circle cx="6.5" cy="18.2" r="1.8" fill="#6a9a58"/><circle cx="25.3" cy="7.5" r="2.2" fill="#2a4a28"/><circle cx="26.3" cy="9.0" r="1.9" fill="#5a8a48"/><circle cx="26.8" cy="13.3" r="2.5" fill="#6a9a58"/><circle cx="6.1" cy="16.3" r="2.8" fill="#5a8a48"/><circle cx="9.6" cy="6.6" r="2.6" fill="#5a8a48"/><circle cx="13.9" cy="17.1" r="2.7" fill="#2a4a28"/><circle cx="12.1" cy="19.5" r="2.0" fill="#5a8a48"/><circle cx="6.6" cy="12.3" r="1.7" fill="#6a9a58"/><circle cx="21.1" cy="18.2" r="1.2" fill="#5a8a48"/><circle cx="26.9" cy="11.3" r="2.9" fill="#4a7a40"/><circle cx="16.1" cy="13.4" r="2.4" fill="#2a4a28"/><circle cx="21.6" cy="6.7" r="2.3" fill="#6a9a58"/><circle cx="17.6" cy="13.6" r="1.3" fill="#5a8a48"/><circle cx="18.6" cy="12.2" r="1.7" fill="#6a9a58"/><circle cx="14.6" cy="4.6" r="2.3" fill="#6a9a58"/><circle cx="22.4" cy="18.9" r="2.6" fill="#2a4a28"/><circle cx="24.4" cy="18.3" r="2.2" fill="#6a9a58"/><circle cx="13.2" cy="4.8" r="1.6" fill="#3a6a38"/><circle cx="25.5" cy="7.5" r="1.3" fill="#2a4a28"/><circle cx="11.5" cy="9.0" r="1.8" fill="#4a7a40"/><circle cx="9.5" cy="5.7" r="1.5" fill="#2a4a28"/><circle cx="23.1" cy="8.3" r="2.4" fill="#2a4a28"/><circle cx="5.7" cy="13.6" r="2.8" fill="#3a6a38"/><circle cx="13.9" cy="16.8" r="2.4" fill="#4a7a40"/><circle cx="11.0" cy="7.8" r="2.8" fill="#5a8a48"/><circle cx="17.0" cy="21.7" r="1.3" fill="#5a8a48"/><circle cx="14.9" cy="18.9" r="1.5" fill="#5a8a48"/><circle cx="5.1" cy="18.6" r="1.4" fill="#5a8a48"/><circle cx="6.2" cy="20.1" r="2.7" fill="#3a6a38"/><circle cx="17.1" cy="19.1" r="2.6" fill="#6a9a58"/><circle cx="25.8" cy="10.8" r="2.2" fill="#3a6a38"/><circle cx="18.1" cy="11.0" r="1.4" fill="#4a7a40"/><circle cx="26.9" cy="13.6" r="2.7" fill="#4a7a40"/><circle cx="30.0" cy="15.9" r="1.7" fill="#6a9a58"/><circle cx="20.6" cy="4.8" r="2.0" fill="#2a4a28"/><circle cx="20.4" cy="18.8" r="2.4" fill="#2a4a28"/><circle cx="8.9" cy="17.3" r="2.3" fill="#4a7a40"/><circle cx="24.9" cy="14.5" r="1.7" fill="#5a8a48"/><circle cx="13.2" cy="8.6" r="2.0" fill="#2a4a28"/><circle cx="22.3" cy="12.3" r="2.9" fill="#2a4a28"/><circle cx="16.9" cy="17.9" r="1.3" fill="#6a9a58"/><circle cx="10.9" cy="8.3" r="3.0" fill="#2a4a28"/><circle cx="14.4" cy="19.2" r="1.4" fill="#3a6a38"/><circle cx="9.2" cy="21.5" r="1.9" fill="#4a7a40"/><circle cx="9.3" cy="8.1" r="2.2" fill="#4a7a40"/><circle cx="12.1" cy="11.0" r="2.2" fill="#6a9a58"/><circle cx="10.9" cy="8.8" r="2.2" fill="#3a6a38"/><circle cx="14.8" cy="16.1" r="2.7" fill="#4a7a40"/><circle cx="18.8" cy="18.2" r="1.8" fill="#5a8a48"/></svg></div><div class="a" style="left:6px;top:396px;width:17px;height:18px;border:1px solid #5ea0e0;background:#4a5466"></div><svg class="a" style="left:7px;top:398px" width="15" height="14" viewBox="0 0 15 14"><circle cx="7.5" cy="7" r="5.5" fill="#d8d8d8"/><circle cx="10" cy="5" r="4" fill="#9aa0a8"/></svg><span class="t" style="left:206px;top:397px;color:#e8e8e8">상록교목</span><div class="a" style="left:441px;top:230px;width:36px;height:3px;background:#0e8a8a"></div><div class="a" style="left:474px;top:230px;width:3px;height:182px;background:#0e8a8a"></div></div>
<!-- ===== COMMAND LINE ===== -->
<div class="a" style="left:4px;top:720px;width:1138px;height:64px;background:#262c35"></div>
<div class="a" style="left:29px;top:722px;width:1113px;height:37px;background:#c8c8c8"></div>
<div class="a" style="left:29px;top:758px;width:1113px;height:1px;background:#3a404a"></div><div class="a" style="left:29px;top:759px;width:1113px;height:20px;background:#fff"></div>
<div class="a" style="left:4px;top:779px;width:1138px;height:5px;background:#353c48"></div>
<div id="cmd">
<svg class="a" style="left:8px;top:726px" width="18" height="6" viewBox="0 0 18 6"><g fill="#e8e8e8"><rect x="0" y="0" width="2" height="2"/><rect x="3" y="0" width="2" height="2"/><rect x="6" y="0" width="2" height="2"/><rect x="9" y="0" width="2" height="2"/><rect x="12" y="0" width="2" height="2"/><rect x="15" y="0" width="2" height="2"/><rect x="0" y="3" width="2" height="2"/><rect x="3" y="3" width="2" height="2"/><rect x="6" y="3" width="2" height="2"/><rect x="9" y="3" width="2" height="2"/><rect x="12" y="3" width="2" height="2"/><rect x="15" y="3" width="2" height="2"/></g></svg>
<svg class="a" style="left:11px;top:739px" width="10" height="10" viewBox="0 0 10 10"><path d="M1 1 L9 9 M9 1 L1 9" stroke="#e0e0e0" stroke-width="1.6"/></svg>
<svg class="a" style="left:7px;top:760px" width="17" height="17" viewBox="0 0 17 17"><path d="M2 15.5 L9 8.5" stroke="#d8d8d8" stroke-width="2.6" stroke-linecap="round"/><path d="M8 9 A4.5 4.5 0 0 1 14 2 L11.5 4.5 L12.5 5.5 L15 3 A4.5 4.5 0 0 1 8 9 Z" fill="#d8d8d8"/></svg>
<span class="t" style="left:32px;top:728px;color:#000;font-size:12.5px;letter-spacing:0.6px">명령:</span>
<span class="t" style="left:32px;top:741px;color:#000;font-size:12.5px;letter-spacing:0.6px">명령: &nbsp;*취소*</span>
<svg class="a" style="left:33px;top:763px" width="16" height="13" viewBox="0 0 16 13"><rect x="0.5" y="0.5" width="15" height="12" fill="#f4f4f4" stroke="#444"/><rect x="0.5" y="0.5" width="15" height="2.5" fill="#777"/><path d="M2.5 5.5 L5 7.5 L2.5 9.5 M6 10 H9" stroke="#333" fill="none" stroke-width="0.9"/></svg>
<svg class="a" style="left:51px;top:767px" width="7" height="5" viewBox="0 0 7 5"><path d="M0 0 H7 L3.5 4.5 Z" fill="#666"/></svg>
<span class="t" style="left:66px;top:761px;color:#8a8a8a;font-style:italic;font-size:12.5px;letter-spacing:1px">명령 입력</span>
</div>
<!-- ===== STATUS BAR ===== -->
<div id="status"><svg class="a" style="left:19px;top:789px" width="18" height="14" viewBox="0 0 18 14"><path d="M1 2 H17 M1 7 H17 M1 12 H17" stroke="#e8e8e8" stroke-width="1.8"/></svg><svg class="a" style="left:40px;top:784px" width="70" height="25" viewBox="0 0 70 25"><polygon points="14,0 63,0 55,24 6,24" fill="#3b4453"/><path d="M110 0" /></svg><span class="t" style="left:62px;top:789px;color:#fff;font-size:12.5px">모형</span><span class="t" style="left:110px;top:789px;color:#e0e0e0;font-size:12.5px">배치1</span><span class="t" style="left:165px;top:789px;color:#e0e0e0;font-size:12.5px">배치2</span><svg class="a" style="left:150px;top:787px" width="8" height="18" viewBox="0 0 8 18"><path d="M7 1 L1 17" stroke="#5a606a" stroke-width="1"/></svg><svg class="a" style="left:205px;top:787px" width="8" height="18" viewBox="0 0 8 18"><path d="M7 1 L1 17" stroke="#5a606a" stroke-width="1"/></svg><svg class="a" style="left:247px;top:787px" width="8" height="18" viewBox="0 0 8 18"><path d="M7 1 L1 17" stroke="#5a606a" stroke-width="1"/></svg><svg class="a" style="left:221px;top:789px" width="15" height="15" viewBox="0 0 15 15"><path d="M7.5 0 V15 M0 7.5 H15" stroke="#f0f0f0" stroke-width="2"/></svg><div class="sb" style="left:542px;width:27px"></div><div class="sb" style="left:572px;width:64px"></div><div class="sb" style="left:639px;width:103px"></div><div class="sb" style="left:744px;width:64px"></div><div class="sb" style="left:811px;width:106px"></div><div class="sb" style="left:920px;width:82px"></div><div class="sb" style="left:1004px;width:24px"></div><div class="sb" style="left:1031px;width:24px"></div><div class="sb" style="left:1058px;width:30px"></div><div class="sb" style="left:1091px;width:24px"></div><div class="sb" style="left:1117px;width:24px"></div><div class="sb sbon" style="left:573px;width:22px"></div><div class="sb sbon" style="left:597px;width:22px"></div><div class="sb sbon" style="left:639px;width:23px"></div><div class="sb sbon" style="left:744px;width:23px"></div><div class="sb sbon" style="left:811px;width:23px"></div><span class="t" style="left:544px;top:790px;color:#fff;font-size:12.5px">모형</span><svg class="a" style="left:623px;top:795px" width="9" height="5" viewBox="0 0 9 5"><path d="M0 0 H9 L4.5 5 Z" fill="#e0e0e0"/></svg><svg class="a" style="left:691px;top:795px" width="9" height="5" viewBox="0 0 9 5"><path d="M0 0 H9 L4.5 5 Z" fill="#e0e0e0"/></svg><svg class="a" style="left:731px;top:795px" width="9" height="5" viewBox="0 0 9 5"><path d="M0 0 H9 L4.5 5 Z" fill="#e0e0e0"/></svg><svg class="a" style="left:796px;top:795px" width="9" height="5" viewBox="0 0 9 5"><path d="M0 0 H9 L4.5 5 Z" fill="#e0e0e0"/></svg><svg class="a" style="left:905px;top:795px" width="9" height="5" viewBox="0 0 9 5"><path d="M0 0 H9 L4.5 5 Z" fill="#e0e0e0"/></svg><svg class="a" style="left:991px;top:795px" width="9" height="5" viewBox="0 0 9 5"><path d="M0 0 H9 L4.5 5 Z" fill="#e0e0e0"/></svg><svg class="a" style="left:576px;top:789px" width="16" height="16" viewBox="0 0 16 16"><path d="M2.5 0.5 V15.5 M6.5 0.5 V15.5 M10.5 0.5 V15.5 M14.5 0.5 V15.5 M0.5 2.5 H15.5 M0.5 6.5 H15.5 M0.5 10.5 H15.5 M0.5 14.5 H15.5" stroke="#fff" stroke-width="1"/></svg><svg class="a" style="left:600px;top:789px" width="16" height="16" viewBox="0 0 16 16"><g fill="#fff"><rect x="2" y="2" width="2" height="2"/><rect x="7" y="2" width="2" height="2"/><rect x="12" y="2" width="2" height="2"/><rect x="2" y="7" width="2" height="2"/><rect x="7" y="7" width="2" height="2"/><rect x="12" y="7" width="2" height="2"/><rect x="2" y="12" width="2" height="2"/><rect x="7" y="12" width="2" height="2"/><rect x="12" y="12" width="2" height="2"/></g></svg><svg class="a" style="left:643px;top:789px" width="16" height="16" viewBox="0 0 16 16"><path d="M1.5 0 V15 H15" stroke="#fff" stroke-width="1.4" fill="none"/><path d="M5 11 H9 V15" stroke="#fff" fill="none"/></svg><svg class="a" style="left:666px;top:789px" width="16" height="16" viewBox="0 0 16 16"><circle cx="7" cy="9" r="5.5" stroke="#d8d8d8" fill="none" stroke-width="1.2"/><path d="M7 9 L13 2 M7 9 H16" stroke="#d8d8d8" stroke-width="1.2"/></svg><svg class="a" style="left:706px;top:789px" width="16" height="16" viewBox="0 0 16 16"><path d="M8 0 V16" stroke="#40c040" stroke-width="1.2"/><path d="M1 2 L15 14" stroke="#e04040" stroke-width="1.2"/><circle cx="8" cy="8" r="1.6" fill="#fff" stroke="#000" stroke-width="0.5"/></svg><svg class="a" style="left:748px;top:789px" width="16" height="16" viewBox="0 0 16 16"><path d="M1 14 H15 M1 14 L13 3" stroke="#fff" stroke-width="1.4" fill="none"/></svg><svg class="a" style="left:772px;top:789px" width="16" height="16" viewBox="0 0 16 16"><rect x="3" y="4" width="12" height="11" stroke="#e0e0e0" fill="none" stroke-width="1.2"/><rect x="0.5" y="0.5" width="4" height="4" fill="#3b4453" stroke="#f0a050"/></svg><svg class="a" style="left:814px;top:788px" width="16" height="16" viewBox="0 0 16 16"><path d="M8 1 L11 9 L14 14 L8 11 L2 14 L5 9 Z" fill="#fff"/><circle cx="13" cy="3.5" r="2.5" stroke="#fff" fill="none"/></svg><svg class="a" style="left:838px;top:788px" width="16" height="16" viewBox="0 0 16 16"><path d="M7 2 L10 9 L13 14 L7 11 L1 14 L4 9 Z" fill="#c8c8c8"/><path d="M12 1 L10 5 H13 L11 9" stroke="#c8c8c8" fill="none"/></svg><svg class="a" style="left:862px;top:788px" width="16" height="16" viewBox="0 0 16 16"><path d="M8 1 L11 9 L14 14 L8 11 L2 14 L5 9 Z" fill="#c8c8c8"/></svg><span class="t" style="left:887px;top:790px;color:#e0e0e0;font-size:12.5px;letter-spacing:-0.8px">1:1</span><svg class="a" style="left:923px;top:788px" width="16" height="16" viewBox="0 0 16 16"><path d="M8 1 L9.5 3 L12 2 L12.5 4.5 L15 5 L14 7.5 L16 9 L14 10.5 L15 13 L12.5 13 L12 15.5 L9.5 14.5 L8 16 L6.5 14.5 L4 15.5 L3.5 13 L1 13 L2 10.5 L0 9 L2 7.5 L1 5 L3.5 4.5 L4 2 L6.5 3 Z" fill="#d8d8d8"/><circle cx="8" cy="8.5" r="2.8" fill="#3b4453"/></svg><span class="t" style="left:949px;top:790px;color:#e8e8e8;font-size:12.5px;letter-spacing:-1.1px">CYCAD</span><svg class="a" style="left:1008px;top:789px" width="16" height="16" viewBox="0 0 16 16"><path d="M8 0 V16 M0 8 H16" stroke="#f0f0f0" stroke-width="1.8"/></svg><svg class="a" style="left:1035px;top:788px" width="16" height="16" viewBox="0 0 16 16"><rect x="1" y="1" width="6" height="6" stroke="#d8d8d8" fill="none"/><circle cx="12" cy="6" r="3" stroke="#d8d8d8" fill="none"/><path d="M6 10 L9 15 H3 Z" stroke="#d8d8d8" fill="none"/></svg><svg class="a" style="left:1064px;top:788px" width="18" height="17" viewBox="0 0 18 17"><rect x="1" y="2" width="15" height="11" fill="#c0c0c0" stroke="#888"/><path d="M2 10 Q5 2 8 8 T15 5" stroke="#3a7ad0" fill="none"/><path d="M12 8 L17 16 H7 Z" fill="#f08838"/><path d="M12 11 V13.5" stroke="#fff"/></svg><svg class="a" style="left:1095px;top:789px" width="16" height="16" viewBox="0 0 16 16"><rect x="0.5" y="1.5" width="15" height="13" stroke="#d8d8d8" fill="none"/><path d="M3 12 L7 8 M3 12 H6 M3 12 V9 M13 4 L9 8 M13 4 H10 M13 4 V7" stroke="#d8d8d8" fill="none"/></svg><svg class="a" style="left:1121px;top:789px" width="16" height="16" viewBox="0 0 16 16"><path d="M0 2 H16 M0 8 H16 M0 14 H16" stroke="#e8e8e8" stroke-width="2"/></svg></div>
<!-- ===== DIALOG ===== -->
<div id="dialog"><div class="a" style="left:428px;top:419px;width:714px;height:337px;border-radius:9px;background:#2e2e2e"></div><div class="a" style="left:429px;top:420px;width:712px;height:335px;border-radius:8px;background:#f0f0f0;overflow:hidden"><div class="a" style="left:0;top:0;width:712px;height:30px;background:#f3f3f3"></div></div><svg class="a" style="left:437px;top:425px" width="16" height="18" viewBox="0 0 16 18">
<path d="M2 1 H13 Q15 1 15 3 V16 Q15 17 14 17 H3 Q1 17 1 15 V2 Q1 1 2 1 Z" fill="#c8123e"/>
<path d="M1 2 Q1 1 2 1 H13 Q15 1 15 3 V12 H1 Z" fill="#e8265a"/>
<path d="M4.5 10.5 L7.2 3 H8.8 L11.5 10.5 H10 L9.4 8.7 H6.6 L6 10.5 Z M7 7.5 H9 L8 4.6 Z" fill="#fff"/>
<text x="4.5" y="15.5" font-size="3" fill="#f0c0c8" font-family="Liberation Sans">CAD</text>
</svg><span class="t" style="left:459px;top:427px;color:#000;color:#8c8c8c">이미지 부착</span><svg class="a" style="left:1119px;top:428px" width="13" height="13" viewBox="0 0 13 13"><path d="M1 1 L12 12 M12 1 L1 12" stroke="#7a7a7a" stroke-width="1.1"/></svg><span class="t" style="left:442px;top:460px;color:#000;">이름(N):</span><div class="a" style="left:499px;top:460px;width:380px;height:19px;background:#fff;border:1px solid #d6d6d6;border-bottom-color:#b8b8b8;border-radius:3px"></div><span class="t" style="left:503px;top:461px;color:#000;">JUNIPER_10</span><svg class="a" style="left:865px;top:467px" width="10" height="6" viewBox="0 0 10 6"><path d="M0.5 0.5 L5 5 L9.5 0.5" stroke="#555" fill="none" stroke-width="1"/></svg><div class="btn" style="left:910px;top:462px;width:98px;height:19px"></div><span class="t" style="left:920px;top:464px;color:#000;">찾아보기(B)...</span><div class="grp" style="left:441px;top:504px;width:233px;height:196px"></div><div class="a" style="left:448px;top:502px;width:56px;height:4px;background:#f0f0f0"></div><span class="t" style="left:451px;top:496px;color:#000;">미리보기</span><div class="grp" style="left:686px;top:504px;width:229px;height:62px"></div><div class="a" style="left:692px;top:502px;width:76px;height:4px;background:#f0f0f0"></div><span class="t" style="left:695px;top:496px;color:#000;">경로 유형(A)</span><div class="grp" style="left:686px;top:576px;width:229px;height:122px"></div><div class="a" style="left:692px;top:574px;width:42px;height:4px;background:#f0f0f0"></div><span class="t" style="left:695px;top:568px;color:#000;">삽입점</span><div class="grp" style="left:931px;top:504px;width:198px;height:88px"></div><div class="a" style="left:937px;top:502px;width:31px;height:4px;background:#f0f0f0"></div><span class="t" style="left:940px;top:496px;color:#000;">축척</span><div class="grp" style="left:931px;top:600px;width:198px;height:98px"></div><div class="a" style="left:937px;top:598px;width:31px;height:4px;background:#f0f0f0"></div><span class="t" style="left:940px;top:592px;color:#000;">회전</span><div class="a" style="left:485px;top:515px;width:141px;height:175px;background:#fff"></div><svg class="a" style="left:485px;top:515px" width="141" height="175" viewBox="0 0 141 175"><path d="M76 100 L74 130 L60 140 L40 122 L22 108 M74 130 L52 128 M76 138 L100 122 L115 118 M76 112 L95 104 M74 100 L70 60 L62 30 M72 70 L85 40 M70 85 L50 60 M78 90 L100 60" stroke="#5a4a30" stroke-width="2.2" fill="none"/><path d="M67 175 L70 125 L73 97 L78 97 L80 125 L80 175 Z" fill="#7a6448"/><ellipse cx="61" cy="12" rx="12" ry="9" fill="#34501c"/><circle cx="59.8" cy="11.0" r="1.5" fill="#5a7434"/><circle cx="63.5" cy="14.0" r="2.0" fill="#2a4014"/><circle cx="64.6" cy="12.5" r="1.9" fill="#3a5420"/><circle cx="66.3" cy="12.6" r="1.5" fill="#1e3010"/><circle cx="51.9" cy="8.1" r="2.3" fill="#6a8440"/><circle cx="65.2" cy="16.4" r="1.4" fill="#4a6428"/><circle cx="67.7" cy="10.8" r="1.7" fill="#6a8440"/><circle cx="56.5" cy="15.7" r="2.3" fill="#4a6428"/><circle cx="59.9" cy="6.1" r="1.3" fill="#8a9a5a"/><circle cx="58.5" cy="18.2" r="2.0" fill="#4a6428"/><circle cx="60.3" cy="10.3" r="2.3" fill="#7a9450"/><circle cx="72.1" cy="11.3" r="1.7" fill="#6a8440"/><circle cx="50.5" cy="14.1" r="1.7" fill="#3a5420"/><circle cx="62.6" cy="16.1" r="2.1" fill="#2a4014"/><circle cx="65.9" cy="18.1" r="1.8" fill="#3a5420"/><circle cx="59.6" cy="19.7" r="2.2" fill="#3a5420"/><circle cx="66.8" cy="6.0" r="2.4" fill="#7a9450"/><circle cx="63.6" cy="7.2" r="1.5" fill="#6a8440"/><circle cx="71.5" cy="9.3" r="1.5" fill="#5a7434"/><circle cx="49.7" cy="12.0" r="1.4" fill="#1e3010"/><circle cx="67.6" cy="17.4" r="2.2" fill="#4a6428"/><circle cx="52.7" cy="14.7" r="1.5" fill="#4a6428"/><ellipse cx="90" cy="10" rx="16" ry="10" fill="#34501c"/><circle cx="101.4" cy="9.9" r="2.3" fill="#6a8440"/><circle cx="94.0" cy="7.3" r="2.3" fill="#7a9450"/><circle cx="86.4" cy="11.1" r="2.0" fill="#1e3010"/><circle cx="82.1" cy="10.9" r="2.2" fill="#2a4014"/><circle cx="101.3" cy="15.6" r="2.3" fill="#4a6428"/><circle cx="85.3" cy="14.1" r="1.8" fill="#3a5420"/><circle cx="104.3" cy="7.6" r="2.6" fill="#5a7434"/><circle cx="90.9" cy="3.6" r="2.4" fill="#6a8440"/><circle cx="86.2" cy="16.9" r="1.4" fill="#3a5420"/><circle cx="90.9" cy="3.4" r="2.0" fill="#6a8440"/><circle cx="84.7" cy="10.2" r="2.4" fill="#4a6428"/><circle cx="94.4" cy="5.7" r="1.5" fill="#6a8440"/><circle cx="85.9" cy="9.0" r="2.3" fill="#8a9a5a"/><circle cx="101.6" cy="9.1" r="1.4" fill="#7a9450"/><circle cx="78.3" cy="11.0" r="1.9" fill="#4a6428"/><circle cx="77.7" cy="4.5" r="2.2" fill="#7a9450"/><circle cx="79.4" cy="14.4" r="1.8" fill="#4a6428"/><circle cx="84.5" cy="9.7" r="1.3" fill="#7a9450"/><circle cx="101.8" cy="10.9" r="1.2" fill="#3a5420"/><circle cx="89.0" cy="7.9" r="2.5" fill="#6a8440"/><circle cx="92.7" cy="8.2" r="1.6" fill="#7a9450"/><circle cx="78.3" cy="10.6" r="1.5" fill="#1e3010"/><circle cx="79.9" cy="11.0" r="1.3" fill="#2a4014"/><circle cx="80.5" cy="12.5" r="2.4" fill="#1e3010"/><circle cx="102.2" cy="12.4" r="1.3" fill="#2a4014"/><circle cx="88.0" cy="2.0" r="1.5" fill="#6a8440"/><circle cx="93.9" cy="15.6" r="1.5" fill="#1e3010"/><circle cx="75.4" cy="12.0" r="1.8" fill="#2a4014"/><circle cx="97.6" cy="4.9" r="2.1" fill="#6a8440"/><circle cx="88.1" cy="9.7" r="2.5" fill="#6a8440"/><ellipse cx="56" cy="27" rx="15" ry="8" fill="#34501c"/><circle cx="59.6" cy="24.6" r="1.9" fill="#8a9a5a"/><circle cx="65.4" cy="21.9" r="1.7" fill="#7a9450"/><circle cx="63.7" cy="26.7" r="1.6" fill="#8a9a5a"/><circle cx="51.8" cy="21.2" r="1.4" fill="#8a9a5a"/><circle cx="51.7" cy="33.8" r="2.2" fill="#2a4014"/><circle cx="66.7" cy="28.9" r="1.3" fill="#3a5420"/><circle cx="42.2" cy="26.7" r="2.0" fill="#6a8440"/><circle cx="52.7" cy="23.9" r="2.5" fill="#6a8440"/><circle cx="45.7" cy="24.7" r="2.1" fill="#6a8440"/><circle cx="46.0" cy="29.7" r="2.5" fill="#4a6428"/><circle cx="59.6" cy="32.8" r="1.6" fill="#3a5420"/><circle cx="64.2" cy="31.2" r="1.6" fill="#1e3010"/><circle cx="56.0" cy="25.1" r="2.1" fill="#8a9a5a"/><circle cx="51.6" cy="26.1" r="1.9" fill="#7a9450"/><circle cx="62.0" cy="30.1" r="2.4" fill="#2a4014"/><circle cx="51.9" cy="29.1" r="2.1" fill="#4a6428"/><circle cx="68.1" cy="26.5" r="2.1" fill="#6a8440"/><circle cx="42.4" cy="24.7" r="2.5" fill="#6a8440"/><circle cx="59.4" cy="28.8" r="2.2" fill="#2a4014"/><circle cx="60.5" cy="30.2" r="2.2" fill="#3a5420"/><circle cx="59.4" cy="32.5" r="1.9" fill="#4a6428"/><circle cx="55.9" cy="33.9" r="1.3" fill="#2a4014"/><circle cx="49.0" cy="28.7" r="1.7" fill="#2a4014"/><circle cx="66.1" cy="32.2" r="2.2" fill="#3a5420"/><ellipse cx="78" cy="25" rx="10" ry="8" fill="#34501c"/><circle cx="71.8" cy="23.5" r="1.4" fill="#6a8440"/><circle cx="85.8" cy="23.0" r="2.0" fill="#7a9450"/><circle cx="81.9" cy="20.3" r="1.8" fill="#7a9450"/><circle cx="83.8" cy="26.1" r="2.5" fill="#2a4014"/><circle cx="79.2" cy="28.5" r="1.7" fill="#2a4014"/><circle cx="69.3" cy="22.5" r="2.5" fill="#7a9450"/><circle cx="78.3" cy="27.9" r="2.4" fill="#3a5420"/><circle cx="86.5" cy="26.0" r="2.3" fill="#4a6428"/><circle cx="71.0" cy="28.1" r="1.6" fill="#3a5420"/><circle cx="78.8" cy="22.7" r="2.4" fill="#6a8440"/><circle cx="79.6" cy="31.4" r="1.7" fill="#1e3010"/><circle cx="82.0" cy="18.9" r="1.2" fill="#7a9450"/><circle cx="80.0" cy="28.9" r="2.6" fill="#2a4014"/><circle cx="76.5" cy="30.7" r="2.2" fill="#1e3010"/><circle cx="81.2" cy="21.6" r="1.4" fill="#6a8440"/><circle cx="82.2" cy="24.4" r="1.3" fill="#5a7434"/><circle cx="73.2" cy="22.6" r="1.8" fill="#5a7434"/><ellipse cx="99" cy="34" rx="13" ry="9" fill="#34501c"/><circle cx="103.4" cy="33.7" r="1.6" fill="#7a9450"/><circle cx="98.9" cy="33.7" r="1.7" fill="#7a9450"/><circle cx="108.6" cy="36.8" r="2.1" fill="#4a6428"/><circle cx="96.6" cy="31.6" r="1.9" fill="#5a7434"/><circle cx="95.3" cy="30.0" r="2.0" fill="#5a7434"/><circle cx="102.8" cy="40.2" r="2.1" fill="#1e3010"/><circle cx="107.4" cy="30.4" r="1.8" fill="#5a7434"/><circle cx="102.6" cy="30.1" r="1.8" fill="#7a9450"/><circle cx="89.8" cy="30.8" r="1.8" fill="#8a9a5a"/><circle cx="94.8" cy="28.8" r="2.1" fill="#7a9450"/><circle cx="96.8" cy="40.5" r="1.3" fill="#4a6428"/><circle cx="105.0" cy="32.8" r="1.5" fill="#5a7434"/><circle cx="99.6" cy="35.2" r="2.6" fill="#3a5420"/><circle cx="90.3" cy="29.4" r="1.8" fill="#8a9a5a"/><circle cx="95.1" cy="31.4" r="1.9" fill="#8a9a5a"/><circle cx="99.4" cy="40.6" r="2.4" fill="#2a4014"/><circle cx="106.8" cy="28.1" r="1.5" fill="#8a9a5a"/><circle cx="102.6" cy="27.6" r="1.3" fill="#8a9a5a"/><circle cx="99.1" cy="41.5" r="1.4" fill="#1e3010"/><circle cx="89.8" cy="35.3" r="2.5" fill="#4a6428"/><circle cx="106.9" cy="30.0" r="2.4" fill="#8a9a5a"/><circle cx="87.2" cy="31.7" r="1.8" fill="#8a9a5a"/><circle cx="99.1" cy="26.6" r="2.3" fill="#5a7434"/><ellipse cx="43" cy="45" rx="16" ry="11" fill="#34501c"/><circle cx="30.4" cy="44.0" r="1.8" fill="#5a7434"/><circle cx="41.2" cy="40.3" r="1.6" fill="#5a7434"/><circle cx="37.2" cy="44.1" r="1.7" fill="#7a9450"/><circle cx="47.2" cy="48.8" r="1.8" fill="#1e3010"/><circle cx="33.1" cy="43.3" r="2.4" fill="#7a9450"/><circle cx="32.2" cy="50.6" r="2.4" fill="#2a4014"/><circle cx="44.0" cy="38.9" r="2.5" fill="#6a8440"/><circle cx="40.0" cy="50.9" r="2.0" fill="#1e3010"/><circle cx="41.6" cy="36.2" r="1.9" fill="#7a9450"/><circle cx="41.4" cy="51.8" r="1.7" fill="#1e3010"/><circle cx="38.6" cy="39.3" r="2.4" fill="#7a9450"/><circle cx="56.9" cy="40.3" r="2.5" fill="#6a8440"/><circle cx="32.1" cy="40.6" r="2.1" fill="#6a8440"/><circle cx="50.2" cy="50.1" r="1.6" fill="#2a4014"/><circle cx="38.0" cy="50.9" r="2.3" fill="#4a6428"/><circle cx="32.9" cy="50.9" r="1.6" fill="#1e3010"/><circle cx="44.9" cy="45.7" r="2.6" fill="#2a4014"/><circle cx="35.4" cy="51.5" r="2.3" fill="#2a4014"/><circle cx="49.8" cy="43.6" r="2.1" fill="#6a8440"/><circle cx="43.8" cy="51.8" r="2.0" fill="#2a4014"/><circle cx="45.7" cy="53.1" r="1.4" fill="#4a6428"/><circle cx="32.2" cy="39.7" r="2.3" fill="#6a8440"/><circle cx="47.6" cy="49.7" r="2.5" fill="#2a4014"/><circle cx="29.4" cy="40.7" r="1.8" fill="#8a9a5a"/><circle cx="42.0" cy="42.3" r="1.3" fill="#7a9450"/><circle cx="45.1" cy="36.0" r="2.3" fill="#6a8440"/><circle cx="40.0" cy="44.2" r="2.1" fill="#8a9a5a"/><circle cx="54.7" cy="48.3" r="2.4" fill="#2a4014"/><circle cx="45.3" cy="42.1" r="2.1" fill="#5a7434"/><circle cx="49.4" cy="37.7" r="1.4" fill="#8a9a5a"/><circle cx="30.2" cy="43.9" r="1.9" fill="#8a9a5a"/><circle cx="48.6" cy="38.2" r="2.4" fill="#5a7434"/><circle cx="45.3" cy="42.5" r="1.5" fill="#8a9a5a"/><ellipse cx="70" cy="46" rx="11" ry="9" fill="#34501c"/><circle cx="61.6" cy="47.4" r="1.7" fill="#1e3010"/><circle cx="63.7" cy="46.2" r="1.5" fill="#1e3010"/><circle cx="71.9" cy="41.5" r="2.0" fill="#5a7434"/><circle cx="65.2" cy="45.6" r="2.2" fill="#7a9450"/><circle cx="60.4" cy="46.5" r="2.1" fill="#1e3010"/><circle cx="60.2" cy="46.4" r="1.6" fill="#2a4014"/><circle cx="65.5" cy="48.3" r="1.9" fill="#4a6428"/><circle cx="63.0" cy="45.0" r="1.7" fill="#5a7434"/><circle cx="64.2" cy="47.3" r="1.4" fill="#3a5420"/><circle cx="71.3" cy="48.6" r="1.5" fill="#3a5420"/><circle cx="69.6" cy="41.8" r="2.6" fill="#5a7434"/><circle cx="73.0" cy="42.2" r="1.5" fill="#5a7434"/><circle cx="78.0" cy="46.5" r="1.3" fill="#4a6428"/><circle cx="75.6" cy="47.5" r="2.1" fill="#3a5420"/><circle cx="70.1" cy="43.4" r="2.0" fill="#6a8440"/><circle cx="62.8" cy="47.0" r="2.6" fill="#3a5420"/><circle cx="69.8" cy="53.5" r="2.4" fill="#2a4014"/><circle cx="67.6" cy="47.3" r="1.4" fill="#2a4014"/><circle cx="74.0" cy="38.7" r="2.6" fill="#6a8440"/><circle cx="77.1" cy="50.8" r="2.3" fill="#3a5420"/><ellipse cx="108" cy="47" rx="16" ry="10" fill="#34501c"/><circle cx="96.9" cy="52.9" r="2.4" fill="#4a6428"/><circle cx="116.8" cy="46.7" r="2.1" fill="#6a8440"/><circle cx="107.0" cy="38.3" r="2.1" fill="#7a9450"/><circle cx="107.6" cy="49.6" r="1.4" fill="#3a5420"/><circle cx="108.7" cy="47.2" r="2.2" fill="#1e3010"/><circle cx="105.2" cy="47.3" r="2.2" fill="#4a6428"/><circle cx="104.9" cy="41.2" r="2.5" fill="#7a9450"/><circle cx="111.0" cy="40.1" r="1.8" fill="#7a9450"/><circle cx="95.6" cy="45.0" r="2.4" fill="#5a7434"/><circle cx="113.9" cy="48.6" r="2.0" fill="#4a6428"/><circle cx="114.9" cy="39.3" r="1.4" fill="#8a9a5a"/><circle cx="103.0" cy="40.0" r="1.9" fill="#5a7434"/><circle cx="103.5" cy="47.1" r="2.4" fill="#2a4014"/><circle cx="106.8" cy="40.0" r="1.3" fill="#6a8440"/><circle cx="122.2" cy="45.0" r="2.6" fill="#6a8440"/><circle cx="104.1" cy="42.9" r="2.3" fill="#6a8440"/><circle cx="113.2" cy="52.8" r="2.5" fill="#1e3010"/><circle cx="113.1" cy="53.3" r="2.6" fill="#1e3010"/><circle cx="98.0" cy="48.1" r="2.1" fill="#4a6428"/><circle cx="113.8" cy="43.0" r="1.6" fill="#8a9a5a"/><circle cx="121.6" cy="44.3" r="1.8" fill="#6a8440"/><circle cx="104.4" cy="51.7" r="2.4" fill="#1e3010"/><circle cx="108.2" cy="46.7" r="1.8" fill="#8a9a5a"/><circle cx="111.7" cy="52.0" r="2.1" fill="#1e3010"/><circle cx="108.5" cy="42.9" r="2.5" fill="#7a9450"/><circle cx="95.6" cy="49.9" r="1.2" fill="#2a4014"/><circle cx="98.2" cy="41.1" r="1.6" fill="#7a9450"/><circle cx="118.2" cy="47.5" r="2.6" fill="#3a5420"/><circle cx="117.3" cy="43.8" r="2.1" fill="#6a8440"/><circle cx="116.8" cy="54.2" r="1.9" fill="#4a6428"/><ellipse cx="120" cy="49" rx="8" ry="8" fill="#34501c"/><circle cx="118.9" cy="55.5" r="1.5" fill="#1e3010"/><circle cx="115.3" cy="47.6" r="2.4" fill="#7a9450"/><circle cx="118.8" cy="55.3" r="1.7" fill="#1e3010"/><circle cx="121.0" cy="45.4" r="1.6" fill="#6a8440"/><circle cx="118.2" cy="54.3" r="2.4" fill="#1e3010"/><circle cx="114.7" cy="50.7" r="2.0" fill="#4a6428"/><circle cx="114.8" cy="47.7" r="2.4" fill="#5a7434"/><circle cx="123.9" cy="48.6" r="1.5" fill="#8a9a5a"/><circle cx="120.3" cy="47.5" r="2.2" fill="#8a9a5a"/><circle cx="121.9" cy="44.9" r="1.9" fill="#7a9450"/><circle cx="125.5" cy="50.2" r="2.4" fill="#4a6428"/><circle cx="123.7" cy="45.6" r="1.2" fill="#8a9a5a"/><circle cx="124.6" cy="54.3" r="1.3" fill="#3a5420"/><circle cx="120.8" cy="45.4" r="2.1" fill="#8a9a5a"/><ellipse cx="18" cy="65" rx="12" ry="9" fill="#34501c"/><circle cx="24.6" cy="59.0" r="2.5" fill="#8a9a5a"/><circle cx="10.1" cy="59.5" r="2.4" fill="#8a9a5a"/><circle cx="21.1" cy="65.5" r="2.6" fill="#4a6428"/><circle cx="17.8" cy="59.7" r="2.3" fill="#6a8440"/><circle cx="16.9" cy="62.5" r="2.2" fill="#7a9450"/><circle cx="20.1" cy="64.0" r="1.6" fill="#6a8440"/><circle cx="14.8" cy="67.2" r="2.0" fill="#1e3010"/><circle cx="19.3" cy="61.8" r="2.1" fill="#6a8440"/><circle cx="10.7" cy="69.5" r="2.5" fill="#1e3010"/><circle cx="23.1" cy="69.3" r="1.8" fill="#4a6428"/><circle cx="12.3" cy="58.3" r="2.5" fill="#8a9a5a"/><circle cx="15.9" cy="62.1" r="2.5" fill="#8a9a5a"/><circle cx="24.5" cy="64.7" r="2.2" fill="#8a9a5a"/><circle cx="11.6" cy="66.2" r="2.4" fill="#1e3010"/><circle cx="23.8" cy="68.1" r="2.0" fill="#4a6428"/><circle cx="24.5" cy="64.8" r="1.6" fill="#8a9a5a"/><circle cx="8.9" cy="62.3" r="2.5" fill="#6a8440"/><circle cx="17.7" cy="57.6" r="2.3" fill="#5a7434"/><circle cx="19.3" cy="72.2" r="2.1" fill="#3a5420"/><circle cx="10.8" cy="60.4" r="2.1" fill="#7a9450"/><circle cx="25.9" cy="61.3" r="2.3" fill="#5a7434"/><circle cx="25.1" cy="66.0" r="1.3" fill="#3a5420"/><ellipse cx="43" cy="70" rx="18" ry="12" fill="#34501c"/><circle cx="38.6" cy="79.0" r="1.5" fill="#3a5420"/><circle cx="46.8" cy="60.2" r="1.9" fill="#5a7434"/><circle cx="57.0" cy="64.9" r="2.5" fill="#5a7434"/><circle cx="59.6" cy="66.3" r="2.2" fill="#5a7434"/><circle cx="39.8" cy="73.1" r="1.4" fill="#2a4014"/><circle cx="59.3" cy="67.9" r="2.6" fill="#8a9a5a"/><circle cx="46.7" cy="63.8" r="1.2" fill="#8a9a5a"/><circle cx="31.2" cy="68.3" r="2.0" fill="#5a7434"/><circle cx="50.7" cy="60.6" r="2.1" fill="#6a8440"/><circle cx="29.1" cy="71.5" r="2.5" fill="#4a6428"/><circle cx="43.8" cy="72.7" r="2.5" fill="#1e3010"/><circle cx="39.3" cy="76.5" r="1.3" fill="#3a5420"/><circle cx="60.5" cy="72.5" r="1.3" fill="#2a4014"/><circle cx="48.0" cy="67.4" r="1.7" fill="#8a9a5a"/><circle cx="57.3" cy="67.2" r="2.0" fill="#8a9a5a"/><circle cx="40.5" cy="59.9" r="2.4" fill="#6a8440"/><circle cx="30.0" cy="63.0" r="1.2" fill="#5a7434"/><circle cx="34.8" cy="75.2" r="2.4" fill="#3a5420"/><circle cx="55.1" cy="75.2" r="1.3" fill="#4a6428"/><circle cx="40.1" cy="80.5" r="1.3" fill="#1e3010"/><circle cx="46.4" cy="78.4" r="1.3" fill="#2a4014"/><circle cx="34.0" cy="79.3" r="1.3" fill="#3a5420"/><circle cx="43.8" cy="65.1" r="2.3" fill="#7a9450"/><circle cx="44.7" cy="79.4" r="1.6" fill="#2a4014"/><circle cx="60.8" cy="68.9" r="2.3" fill="#5a7434"/><circle cx="55.9" cy="76.4" r="1.2" fill="#3a5420"/><circle cx="45.2" cy="64.9" r="1.2" fill="#5a7434"/><circle cx="42.4" cy="73.8" r="1.9" fill="#1e3010"/><circle cx="42.7" cy="62.5" r="1.9" fill="#5a7434"/><circle cx="52.9" cy="74.9" r="2.2" fill="#2a4014"/><circle cx="55.3" cy="65.2" r="1.8" fill="#5a7434"/><circle cx="47.3" cy="69.4" r="2.4" fill="#8a9a5a"/><circle cx="37.7" cy="71.6" r="1.3" fill="#1e3010"/><circle cx="55.3" cy="74.1" r="1.4" fill="#2a4014"/><circle cx="33.2" cy="64.2" r="1.7" fill="#5a7434"/><circle cx="35.0" cy="66.6" r="1.3" fill="#8a9a5a"/><circle cx="38.0" cy="60.5" r="1.8" fill="#7a9450"/><circle cx="51.8" cy="65.5" r="1.8" fill="#8a9a5a"/><circle cx="41.7" cy="64.0" r="2.1" fill="#5a7434"/><circle cx="38.0" cy="73.0" r="1.3" fill="#1e3010"/><ellipse cx="65" cy="63" rx="10" ry="9" fill="#34501c"/><circle cx="66.5" cy="60.8" r="2.2" fill="#6a8440"/><circle cx="62.5" cy="65.1" r="2.0" fill="#2a4014"/><circle cx="59.7" cy="61.2" r="1.8" fill="#6a8440"/><circle cx="71.8" cy="57.4" r="2.4" fill="#8a9a5a"/><circle cx="63.2" cy="55.2" r="1.7" fill="#5a7434"/><circle cx="60.9" cy="61.2" r="1.5" fill="#8a9a5a"/><circle cx="72.1" cy="67.7" r="1.4" fill="#4a6428"/><circle cx="64.2" cy="66.8" r="2.4" fill="#1e3010"/><circle cx="73.9" cy="61.8" r="2.1" fill="#6a8440"/><circle cx="60.4" cy="57.4" r="1.5" fill="#6a8440"/><circle cx="63.4" cy="58.7" r="1.7" fill="#5a7434"/><circle cx="66.6" cy="65.8" r="1.3" fill="#1e3010"/><circle cx="64.4" cy="55.0" r="2.2" fill="#6a8440"/><circle cx="66.4" cy="68.1" r="1.4" fill="#4a6428"/><circle cx="62.8" cy="67.3" r="2.4" fill="#2a4014"/><circle cx="69.9" cy="68.8" r="2.1" fill="#2a4014"/><circle cx="63.9" cy="69.5" r="2.0" fill="#1e3010"/><circle cx="61.0" cy="64.9" r="1.7" fill="#2a4014"/><circle cx="71.3" cy="67.3" r="1.9" fill="#1e3010"/><ellipse cx="88" cy="63" rx="14" ry="10" fill="#34501c"/><circle cx="85.6" cy="66.9" r="1.2" fill="#2a4014"/><circle cx="86.0" cy="66.9" r="2.3" fill="#3a5420"/><circle cx="86.8" cy="66.0" r="2.2" fill="#1e3010"/><circle cx="91.9" cy="68.0" r="1.9" fill="#3a5420"/><circle cx="94.3" cy="56.0" r="1.8" fill="#6a8440"/><circle cx="87.5" cy="57.1" r="2.5" fill="#8a9a5a"/><circle cx="94.9" cy="57.8" r="2.2" fill="#8a9a5a"/><circle cx="83.9" cy="64.5" r="2.6" fill="#2a4014"/><circle cx="94.4" cy="70.7" r="2.4" fill="#1e3010"/><circle cx="91.6" cy="61.7" r="1.5" fill="#6a8440"/><circle cx="79.4" cy="59.5" r="2.4" fill="#8a9a5a"/><circle cx="87.8" cy="58.8" r="1.3" fill="#7a9450"/><circle cx="81.2" cy="58.1" r="2.5" fill="#7a9450"/><circle cx="81.0" cy="69.2" r="1.5" fill="#3a5420"/><circle cx="91.8" cy="66.2" r="2.3" fill="#3a5420"/><circle cx="84.7" cy="59.9" r="1.8" fill="#8a9a5a"/><circle cx="78.2" cy="60.3" r="2.4" fill="#5a7434"/><circle cx="84.2" cy="60.5" r="1.9" fill="#6a8440"/><circle cx="79.5" cy="57.1" r="1.7" fill="#6a8440"/><circle cx="96.5" cy="65.7" r="1.3" fill="#2a4014"/><circle cx="89.9" cy="60.8" r="2.1" fill="#6a8440"/><circle cx="78.5" cy="62.7" r="1.8" fill="#6a8440"/><circle cx="92.1" cy="56.2" r="2.0" fill="#5a7434"/><circle cx="74.3" cy="62.9" r="1.3" fill="#8a9a5a"/><circle cx="94.6" cy="59.9" r="1.9" fill="#6a8440"/><circle cx="91.3" cy="67.0" r="2.6" fill="#1e3010"/><circle cx="77.2" cy="61.9" r="1.7" fill="#5a7434"/><ellipse cx="106" cy="61" rx="10" ry="8" fill="#34501c"/><circle cx="104.7" cy="65.5" r="2.2" fill="#4a6428"/><circle cx="113.5" cy="62.8" r="1.3" fill="#4a6428"/><circle cx="112.8" cy="64.3" r="1.6" fill="#4a6428"/><circle cx="111.8" cy="55.3" r="1.7" fill="#7a9450"/><circle cx="102.7" cy="59.7" r="1.6" fill="#5a7434"/><circle cx="101.5" cy="56.1" r="2.0" fill="#7a9450"/><circle cx="111.1" cy="59.5" r="2.1" fill="#8a9a5a"/><circle cx="104.3" cy="63.3" r="2.1" fill="#2a4014"/><circle cx="100.7" cy="63.0" r="1.6" fill="#4a6428"/><circle cx="111.6" cy="59.7" r="1.5" fill="#8a9a5a"/><circle cx="109.9" cy="61.0" r="2.4" fill="#5a7434"/><circle cx="113.1" cy="64.8" r="2.1" fill="#2a4014"/><circle cx="111.6" cy="57.0" r="1.4" fill="#8a9a5a"/><circle cx="109.5" cy="66.4" r="2.2" fill="#3a5420"/><circle cx="111.8" cy="62.2" r="2.6" fill="#3a5420"/><circle cx="99.3" cy="57.0" r="1.5" fill="#8a9a5a"/><circle cx="106.7" cy="68.1" r="2.5" fill="#1e3010"/><ellipse cx="122" cy="63" rx="10" ry="8" fill="#34501c"/><circle cx="124.8" cy="68.6" r="1.8" fill="#1e3010"/><circle cx="120.8" cy="67.4" r="2.6" fill="#1e3010"/><circle cx="125.7" cy="57.1" r="2.4" fill="#7a9450"/><circle cx="128.6" cy="64.6" r="2.0" fill="#4a6428"/><circle cx="129.4" cy="67.0" r="1.6" fill="#2a4014"/><circle cx="122.4" cy="59.3" r="2.4" fill="#7a9450"/><circle cx="130.0" cy="66.7" r="2.4" fill="#1e3010"/><circle cx="127.8" cy="61.0" r="1.9" fill="#8a9a5a"/><circle cx="122.9" cy="70.2" r="1.5" fill="#4a6428"/><circle cx="120.7" cy="65.1" r="2.3" fill="#4a6428"/><circle cx="125.5" cy="65.9" r="2.2" fill="#1e3010"/><circle cx="127.4" cy="67.6" r="2.1" fill="#1e3010"/><circle cx="123.1" cy="62.4" r="2.4" fill="#7a9450"/><circle cx="113.9" cy="61.1" r="1.4" fill="#8a9a5a"/><circle cx="120.7" cy="66.8" r="1.5" fill="#2a4014"/><circle cx="116.9" cy="58.6" r="1.4" fill="#6a8440"/><circle cx="128.4" cy="59.9" r="2.1" fill="#6a8440"/><ellipse cx="131" cy="77" rx="11" ry="10" fill="#34501c"/><circle cx="122.7" cy="73.5" r="1.8" fill="#5a7434"/><circle cx="126.9" cy="74.1" r="1.5" fill="#8a9a5a"/><circle cx="127.1" cy="71.3" r="1.3" fill="#5a7434"/><circle cx="123.3" cy="76.0" r="1.7" fill="#6a8440"/><circle cx="122.4" cy="78.3" r="1.6" fill="#4a6428"/><circle cx="140.7" cy="77.8" r="1.5" fill="#4a6428"/><circle cx="129.0" cy="74.6" r="1.4" fill="#5a7434"/><circle cx="127.2" cy="81.2" r="2.4" fill="#3a5420"/><circle cx="126.7" cy="68.8" r="2.1" fill="#8a9a5a"/><circle cx="132.0" cy="74.9" r="1.3" fill="#8a9a5a"/><circle cx="133.9" cy="84.6" r="1.6" fill="#2a4014"/><circle cx="128.4" cy="82.3" r="1.6" fill="#1e3010"/><circle cx="131.1" cy="73.1" r="2.4" fill="#5a7434"/><circle cx="139.5" cy="79.2" r="1.4" fill="#4a6428"/><circle cx="124.0" cy="83.3" r="2.5" fill="#1e3010"/><circle cx="122.8" cy="82.8" r="2.2" fill="#1e3010"/><circle cx="124.4" cy="82.9" r="2.3" fill="#4a6428"/><circle cx="130.6" cy="74.5" r="2.0" fill="#7a9450"/><circle cx="129.7" cy="79.3" r="1.6" fill="#4a6428"/><circle cx="125.3" cy="73.5" r="1.7" fill="#8a9a5a"/><circle cx="140.9" cy="79.2" r="2.1" fill="#4a6428"/><circle cx="122.9" cy="79.9" r="1.3" fill="#2a4014"/><ellipse cx="15" cy="81" rx="13" ry="10" fill="#34501c"/><circle cx="9.9" cy="76.9" r="2.5" fill="#7a9450"/><circle cx="21.3" cy="86.5" r="1.2" fill="#1e3010"/><circle cx="25.5" cy="84.3" r="1.7" fill="#4a6428"/><circle cx="17.2" cy="80.5" r="2.2" fill="#7a9450"/><circle cx="22.5" cy="79.3" r="2.0" fill="#6a8440"/><circle cx="6.9" cy="80.0" r="1.5" fill="#5a7434"/><circle cx="23.4" cy="86.0" r="1.9" fill="#1e3010"/><circle cx="18.8" cy="79.4" r="2.2" fill="#5a7434"/><circle cx="17.2" cy="87.9" r="1.5" fill="#1e3010"/><circle cx="17.3" cy="82.8" r="2.5" fill="#3a5420"/><circle cx="11.4" cy="81.9" r="2.1" fill="#4a6428"/><circle cx="12.6" cy="74.5" r="2.4" fill="#5a7434"/><circle cx="21.5" cy="74.9" r="2.3" fill="#7a9450"/><circle cx="10.5" cy="80.8" r="2.3" fill="#7a9450"/><circle cx="15.8" cy="87.3" r="2.0" fill="#4a6428"/><circle cx="7.1" cy="86.9" r="2.1" fill="#3a5420"/><circle cx="21.2" cy="83.6" r="1.9" fill="#1e3010"/><circle cx="16.4" cy="72.9" r="1.4" fill="#6a8440"/><circle cx="13.6" cy="83.2" r="2.2" fill="#1e3010"/><circle cx="8.2" cy="88.0" r="2.3" fill="#3a5420"/><circle cx="21.4" cy="85.6" r="2.4" fill="#2a4014"/><circle cx="7.9" cy="80.4" r="1.7" fill="#7a9450"/><circle cx="13.1" cy="75.9" r="2.4" fill="#5a7434"/><circle cx="15.0" cy="88.2" r="1.4" fill="#4a6428"/><circle cx="11.9" cy="87.2" r="2.0" fill="#3a5420"/><ellipse cx="79" cy="83" rx="14" ry="10" fill="#34501c"/><circle cx="73.9" cy="81.2" r="2.4" fill="#5a7434"/><circle cx="67.3" cy="79.8" r="1.3" fill="#6a8440"/><circle cx="90.7" cy="80.5" r="2.1" fill="#5a7434"/><circle cx="80.0" cy="77.2" r="1.9" fill="#6a8440"/><circle cx="73.7" cy="79.5" r="1.9" fill="#5a7434"/><circle cx="82.9" cy="76.0" r="1.8" fill="#5a7434"/><circle cx="76.9" cy="79.7" r="1.9" fill="#8a9a5a"/><circle cx="82.1" cy="89.7" r="2.4" fill="#4a6428"/><circle cx="73.1" cy="91.1" r="2.6" fill="#4a6428"/><circle cx="84.8" cy="87.0" r="1.6" fill="#2a4014"/><circle cx="71.9" cy="84.0" r="1.4" fill="#3a5420"/><circle cx="91.9" cy="85.7" r="1.5" fill="#1e3010"/><circle cx="82.7" cy="80.3" r="2.5" fill="#5a7434"/><circle cx="77.9" cy="79.1" r="1.9" fill="#7a9450"/><circle cx="69.2" cy="82.4" r="1.9" fill="#5a7434"/><circle cx="86.4" cy="86.0" r="2.6" fill="#1e3010"/><circle cx="80.8" cy="88.2" r="1.6" fill="#2a4014"/><circle cx="68.5" cy="78.2" r="1.6" fill="#8a9a5a"/><circle cx="83.6" cy="83.2" r="2.4" fill="#3a5420"/><circle cx="77.3" cy="75.2" r="1.3" fill="#5a7434"/><circle cx="89.0" cy="85.1" r="2.0" fill="#4a6428"/><circle cx="87.9" cy="85.8" r="2.4" fill="#4a6428"/><circle cx="71.2" cy="78.1" r="2.6" fill="#7a9450"/><circle cx="69.2" cy="88.0" r="2.0" fill="#4a6428"/><circle cx="75.5" cy="85.6" r="1.9" fill="#1e3010"/><circle cx="84.0" cy="83.9" r="2.3" fill="#4a6428"/><circle cx="73.6" cy="82.6" r="1.7" fill="#7a9450"/><ellipse cx="113" cy="83" rx="15" ry="12" fill="#34501c"/><circle cx="108.4" cy="80.2" r="2.0" fill="#5a7434"/><circle cx="102.3" cy="82.6" r="2.2" fill="#8a9a5a"/><circle cx="108.8" cy="92.3" r="1.7" fill="#4a6428"/><circle cx="120.5" cy="87.4" r="2.3" fill="#4a6428"/><circle cx="111.1" cy="74.1" r="2.0" fill="#6a8440"/><circle cx="111.8" cy="91.7" r="2.2" fill="#3a5420"/><circle cx="107.6" cy="80.8" r="1.4" fill="#8a9a5a"/><circle cx="111.9" cy="81.3" r="1.5" fill="#6a8440"/><circle cx="104.0" cy="85.5" r="2.2" fill="#1e3010"/><circle cx="101.8" cy="88.1" r="2.4" fill="#1e3010"/><circle cx="112.7" cy="80.3" r="1.9" fill="#7a9450"/><circle cx="99.1" cy="79.0" r="1.9" fill="#8a9a5a"/><circle cx="110.6" cy="87.1" r="2.0" fill="#4a6428"/><circle cx="106.7" cy="74.0" r="2.1" fill="#5a7434"/><circle cx="115.6" cy="88.0" r="1.5" fill="#4a6428"/><circle cx="121.1" cy="82.0" r="2.2" fill="#5a7434"/><circle cx="109.2" cy="76.0" r="1.7" fill="#8a9a5a"/><circle cx="125.2" cy="79.1" r="1.6" fill="#5a7434"/><circle cx="103.1" cy="79.5" r="2.3" fill="#8a9a5a"/><circle cx="125.9" cy="80.3" r="1.3" fill="#5a7434"/><circle cx="117.1" cy="82.2" r="2.1" fill="#8a9a5a"/><circle cx="112.9" cy="78.0" r="2.5" fill="#5a7434"/><circle cx="111.2" cy="79.2" r="1.5" fill="#7a9450"/><circle cx="107.7" cy="76.1" r="1.3" fill="#7a9450"/><circle cx="102.1" cy="87.7" r="2.2" fill="#2a4014"/><circle cx="122.6" cy="91.1" r="1.8" fill="#3a5420"/><circle cx="125.9" cy="79.0" r="2.1" fill="#8a9a5a"/><circle cx="113.3" cy="77.2" r="2.1" fill="#5a7434"/><circle cx="116.8" cy="81.2" r="1.9" fill="#7a9450"/><circle cx="110.6" cy="72.7" r="1.8" fill="#7a9450"/><circle cx="120.6" cy="74.1" r="2.6" fill="#6a8440"/><circle cx="104.6" cy="87.6" r="2.4" fill="#4a6428"/><circle cx="124.3" cy="83.5" r="2.5" fill="#2a4014"/><circle cx="107.9" cy="89.3" r="2.4" fill="#1e3010"/><ellipse cx="9" cy="106" rx="9" ry="9" fill="#34501c"/><circle cx="13.3" cy="110.3" r="1.5" fill="#4a6428"/><circle cx="11.8" cy="108.1" r="2.1" fill="#1e3010"/><circle cx="8.8" cy="105.1" r="2.3" fill="#5a7434"/><circle cx="1.9" cy="103.1" r="2.1" fill="#7a9450"/><circle cx="5.3" cy="102.1" r="1.9" fill="#8a9a5a"/><circle cx="15.3" cy="109.4" r="2.6" fill="#3a5420"/><circle cx="0.4" cy="107.1" r="1.6" fill="#2a4014"/><circle cx="9.7" cy="113.0" r="1.6" fill="#4a6428"/><circle cx="8.8" cy="105.1" r="2.2" fill="#5a7434"/><circle cx="11.9" cy="107.1" r="1.4" fill="#4a6428"/><circle cx="5.6" cy="98.8" r="2.2" fill="#5a7434"/><circle cx="3.4" cy="100.0" r="2.1" fill="#5a7434"/><circle cx="9.6" cy="108.9" r="1.8" fill="#3a5420"/><circle cx="14.5" cy="105.7" r="2.3" fill="#8a9a5a"/><circle cx="11.6" cy="99.0" r="2.2" fill="#7a9450"/><circle cx="2.4" cy="101.9" r="1.9" fill="#8a9a5a"/><circle cx="3.4" cy="111.9" r="1.3" fill="#2a4014"/><ellipse cx="25" cy="108" rx="10" ry="8" fill="#34501c"/><circle cx="18.2" cy="106.5" r="1.4" fill="#7a9450"/><circle cx="29.1" cy="104.2" r="2.2" fill="#7a9450"/><circle cx="15.5" cy="108.5" r="2.3" fill="#1e3010"/><circle cx="18.1" cy="109.5" r="2.0" fill="#1e3010"/><circle cx="17.4" cy="105.9" r="2.2" fill="#5a7434"/><circle cx="17.8" cy="112.0" r="2.0" fill="#3a5420"/><circle cx="30.6" cy="109.2" r="2.0" fill="#2a4014"/><circle cx="33.8" cy="110.5" r="1.2" fill="#1e3010"/><circle cx="17.6" cy="111.4" r="1.7" fill="#1e3010"/><circle cx="30.2" cy="105.0" r="1.7" fill="#8a9a5a"/><circle cx="21.7" cy="102.7" r="2.1" fill="#7a9450"/><circle cx="22.6" cy="110.5" r="1.9" fill="#1e3010"/><circle cx="24.3" cy="104.6" r="2.3" fill="#6a8440"/><circle cx="31.7" cy="107.3" r="1.9" fill="#8a9a5a"/><circle cx="27.2" cy="104.8" r="1.4" fill="#5a7434"/><circle cx="28.5" cy="114.2" r="1.2" fill="#2a4014"/><circle cx="20.8" cy="103.2" r="1.5" fill="#6a8440"/><ellipse cx="117" cy="122" rx="13" ry="10" fill="#34501c"/><circle cx="126.1" cy="124.8" r="2.0" fill="#1e3010"/><circle cx="116.2" cy="120.1" r="1.8" fill="#6a8440"/><circle cx="117.6" cy="126.2" r="1.4" fill="#2a4014"/><circle cx="123.3" cy="121.8" r="2.0" fill="#5a7434"/><circle cx="118.7" cy="113.9" r="1.6" fill="#7a9450"/><circle cx="123.6" cy="127.7" r="1.8" fill="#3a5420"/><circle cx="115.5" cy="128.6" r="2.1" fill="#3a5420"/><circle cx="108.8" cy="124.8" r="2.5" fill="#4a6428"/><circle cx="111.5" cy="115.0" r="2.2" fill="#5a7434"/><circle cx="111.0" cy="124.7" r="2.3" fill="#3a5420"/><circle cx="105.2" cy="123.4" r="2.4" fill="#4a6428"/><circle cx="122.5" cy="126.8" r="2.0" fill="#2a4014"/><circle cx="126.5" cy="120.6" r="1.7" fill="#7a9450"/><circle cx="116.8" cy="127.2" r="2.5" fill="#2a4014"/><circle cx="119.3" cy="119.8" r="1.3" fill="#7a9450"/><circle cx="109.8" cy="126.9" r="2.4" fill="#2a4014"/><circle cx="121.3" cy="129.3" r="1.9" fill="#3a5420"/><circle cx="122.1" cy="118.2" r="1.5" fill="#6a8440"/><circle cx="121.1" cy="129.2" r="2.5" fill="#1e3010"/><circle cx="113.3" cy="114.9" r="2.5" fill="#8a9a5a"/><circle cx="106.2" cy="119.5" r="1.9" fill="#8a9a5a"/><circle cx="112.7" cy="118.0" r="1.9" fill="#5a7434"/><circle cx="112.9" cy="122.0" r="2.3" fill="#1e3010"/><circle cx="114.5" cy="125.7" r="1.8" fill="#4a6428"/><circle cx="111.4" cy="120.4" r="1.2" fill="#7a9450"/><ellipse cx="40" cy="117" rx="10" ry="8" fill="#34501c"/><circle cx="32.8" cy="115.2" r="1.6" fill="#8a9a5a"/><circle cx="41.6" cy="120.3" r="1.9" fill="#3a5420"/><circle cx="35.3" cy="112.1" r="2.3" fill="#5a7434"/><circle cx="31.5" cy="117.4" r="1.8" fill="#1e3010"/><circle cx="39.4" cy="112.8" r="2.2" fill="#7a9450"/><circle cx="30.5" cy="117.5" r="1.9" fill="#2a4014"/><circle cx="41.4" cy="115.3" r="2.3" fill="#6a8440"/><circle cx="32.2" cy="120.5" r="1.3" fill="#3a5420"/><circle cx="42.7" cy="119.7" r="1.7" fill="#1e3010"/><circle cx="34.0" cy="113.0" r="2.1" fill="#8a9a5a"/><circle cx="47.3" cy="117.5" r="1.2" fill="#1e3010"/><circle cx="34.8" cy="116.3" r="1.2" fill="#5a7434"/><circle cx="43.2" cy="111.5" r="1.3" fill="#7a9450"/><circle cx="43.2" cy="118.6" r="2.1" fill="#3a5420"/><circle cx="39.9" cy="121.3" r="1.3" fill="#1e3010"/><circle cx="46.6" cy="115.8" r="2.6" fill="#7a9450"/><circle cx="41.3" cy="122.9" r="2.1" fill="#2a4014"/><ellipse cx="63" cy="108" rx="9" ry="7" fill="#34501c"/><circle cx="67.9" cy="103.7" r="1.8" fill="#6a8440"/><circle cx="58.6" cy="111.0" r="2.2" fill="#2a4014"/><circle cx="70.2" cy="110.9" r="2.0" fill="#4a6428"/><circle cx="64.7" cy="106.5" r="1.5" fill="#6a8440"/><circle cx="69.1" cy="105.0" r="1.6" fill="#8a9a5a"/><circle cx="69.6" cy="105.6" r="2.5" fill="#5a7434"/><circle cx="61.5" cy="107.6" r="1.2" fill="#5a7434"/><circle cx="63.9" cy="110.3" r="2.5" fill="#1e3010"/><circle cx="60.9" cy="112.5" r="2.1" fill="#1e3010"/><circle cx="57.6" cy="107.0" r="2.3" fill="#7a9450"/><circle cx="62.1" cy="106.4" r="1.3" fill="#5a7434"/><circle cx="55.4" cy="110.2" r="2.0" fill="#4a6428"/><circle cx="57.8" cy="104.8" r="1.2" fill="#5a7434"/><circle cx="61.7" cy="114.2" r="1.5" fill="#1e3010"/><ellipse cx="95" cy="104" rx="8" ry="6" fill="#34501c"/><circle cx="90.4" cy="102.9" r="2.2" fill="#7a9450"/><circle cx="93.8" cy="102.7" r="2.3" fill="#5a7434"/><circle cx="94.5" cy="102.5" r="1.7" fill="#7a9450"/><circle cx="95.7" cy="101.9" r="1.6" fill="#8a9a5a"/><circle cx="95.5" cy="104.2" r="1.8" fill="#4a6428"/><circle cx="95.2" cy="102.3" r="1.5" fill="#6a8440"/><circle cx="89.3" cy="105.3" r="1.3" fill="#1e3010"/><circle cx="100.0" cy="106.1" r="2.4" fill="#4a6428"/><circle cx="100.1" cy="104.3" r="2.2" fill="#2a4014"/><circle cx="87.6" cy="102.0" r="2.0" fill="#7a9450"/><circle cx="97.4" cy="106.9" r="1.6" fill="#3a5420"/><circle cx="94.6" cy="106.0" r="1.8" fill="#3a5420"/><ellipse cx="58" cy="88" rx="8" ry="6" fill="#34501c"/><circle cx="53.1" cy="89.8" r="1.7" fill="#2a4014"/><circle cx="64.4" cy="86.4" r="2.0" fill="#8a9a5a"/><circle cx="58.9" cy="89.7" r="1.2" fill="#4a6428"/><circle cx="52.2" cy="91.0" r="2.3" fill="#1e3010"/><circle cx="55.8" cy="90.7" r="1.6" fill="#3a5420"/><circle cx="52.7" cy="85.3" r="1.6" fill="#8a9a5a"/><circle cx="65.7" cy="86.8" r="2.2" fill="#5a7434"/><circle cx="52.7" cy="84.1" r="1.7" fill="#7a9450"/><circle cx="56.7" cy="92.7" r="1.4" fill="#4a6428"/><circle cx="52.3" cy="86.4" r="2.2" fill="#7a9450"/><circle cx="50.6" cy="86.4" r="2.5" fill="#8a9a5a"/><circle cx="59.8" cy="92.7" r="2.3" fill="#2a4014"/><ellipse cx="96" cy="88" rx="8" ry="6" fill="#34501c"/><circle cx="97.4" cy="84.7" r="1.4" fill="#8a9a5a"/><circle cx="94.7" cy="90.6" r="2.2" fill="#3a5420"/><circle cx="96.5" cy="86.6" r="2.0" fill="#8a9a5a"/><circle cx="88.5" cy="86.9" r="2.0" fill="#8a9a5a"/><circle cx="97.2" cy="84.9" r="1.4" fill="#6a8440"/><circle cx="96.1" cy="92.4" r="2.1" fill="#3a5420"/><circle cx="103.6" cy="89.5" r="2.6" fill="#1e3010"/><circle cx="92.5" cy="92.2" r="1.2" fill="#2a4014"/><circle cx="95.7" cy="91.9" r="1.8" fill="#3a5420"/><circle cx="90.6" cy="91.0" r="1.7" fill="#3a5420"/><circle cx="98.6" cy="88.3" r="2.5" fill="#1e3010"/><circle cx="102.3" cy="90.5" r="1.7" fill="#3a5420"/></svg><div class="a" style="left:711px;top:527px;width:186px;height:20px;background:#fff;border:1px solid #d6d6d6;border-bottom-color:#b8b8b8;border-radius:3px"></div><span class="t" style="left:715px;top:529px;color:#000;">상대 경로</span><svg class="a" style="left:882px;top:535px" width="10" height="6" viewBox="0 0 10 6"><path d="M0.5 0.5 L5 5 L9.5 0.5" stroke="#555" fill="none" stroke-width="1"/></svg><svg class="a" style="left:714px;top:597px" width="14" height="14" viewBox="0 0 14 14"><rect x="0" y="0" width="14" height="14" rx="3" fill="#0f5fc0"/><path d="M3.5 7.2 L6 9.6 L10.6 4.4" stroke="#fff" stroke-width="1.2" fill="none"/></svg><span class="t" style="left:730px;top:596px;color:#000;">화면상에 지정(S)</span><span class="t" style="left:719px;top:622px;color:#000;">X:</span><span class="t" style="left:719px;top:645px;color:#000;">Y:</span><span class="t" style="left:719px;top:666px;color:#000;">Z:</span><div class="fld" style="left:749px;top:621px;width:141px;height:16px"></div><span class="t" style="left:752px;top:622px;color:#000;color:#8a8a8a">0</span><div class="fld" style="left:749px;top:645px;width:141px;height:16px"></div><span class="t" style="left:752px;top:646px;color:#000;color:#8a8a8a">0</span><div class="fld" style="left:749px;top:669px;width:141px;height:16px"></div><span class="t" style="left:752px;top:670px;color:#000;color:#8a8a8a">0</span><svg class="a" style="left:945px;top:523px" width="14" height="14" viewBox="0 0 14 14"><rect x="0" y="0" width="14" height="14" rx="3" fill="#0f5fc0"/><path d="M3.5 7.2 L6 9.6 L10.6 4.4" stroke="#fff" stroke-width="1.2" fill="none"/></svg><span class="t" style="left:961px;top:522px;color:#000;">화면상에 지정(E)</span><div class="fld" style="left:946px;top:547px;width:115px;height:16px"></div><span class="t" style="left:949px;top:548px;color:#000;color:#8a8a8a">1</span><svg class="a" style="left:945px;top:619px" width="14" height="14" viewBox="0 0 14 14"><rect x="0.5" y="0.5" width="13" height="13" rx="3" fill="#fafafa" stroke="#555"/></svg><span class="t" style="left:961px;top:618px;color:#000;">화면상에 지정(C)</span><span class="t" style="left:945px;top:646px;color:#000;">각도(G):</span><div class="a" style="left:1006px;top:647px;width:108px;height:18px;background:#fff;border:1px solid #e0e0e0;border-bottom:1px solid #6a6a6a"></div><span class="t" style="left:1009px;top:649px;color:#000;">0</span><div class="btn" style="left:442px;top:726px;width:121px;height:19px"></div><span class="t" style="left:474px;top:728px;color:#000;">자세히(W)</span><div class="btn" style="left:759px;top:726px;width:94px;height:19px;border:1.5px solid #2a6ac8"></div><span class="t" style="left:794px;top:728px;color:#000;">확인</span><div class="btn" style="left:871px;top:726px;width:94px;height:19px"></div><span class="t" style="left:906px;top:728px;color:#000;">취소</span><div class="btn" style="left:1034px;top:726px;width:94px;height:19px"></div><span class="t" style="left:1054px;top:728px;color:#000;">도움말(H)</span></div>
<div id="frame"></div>
</div>
</body></html>
